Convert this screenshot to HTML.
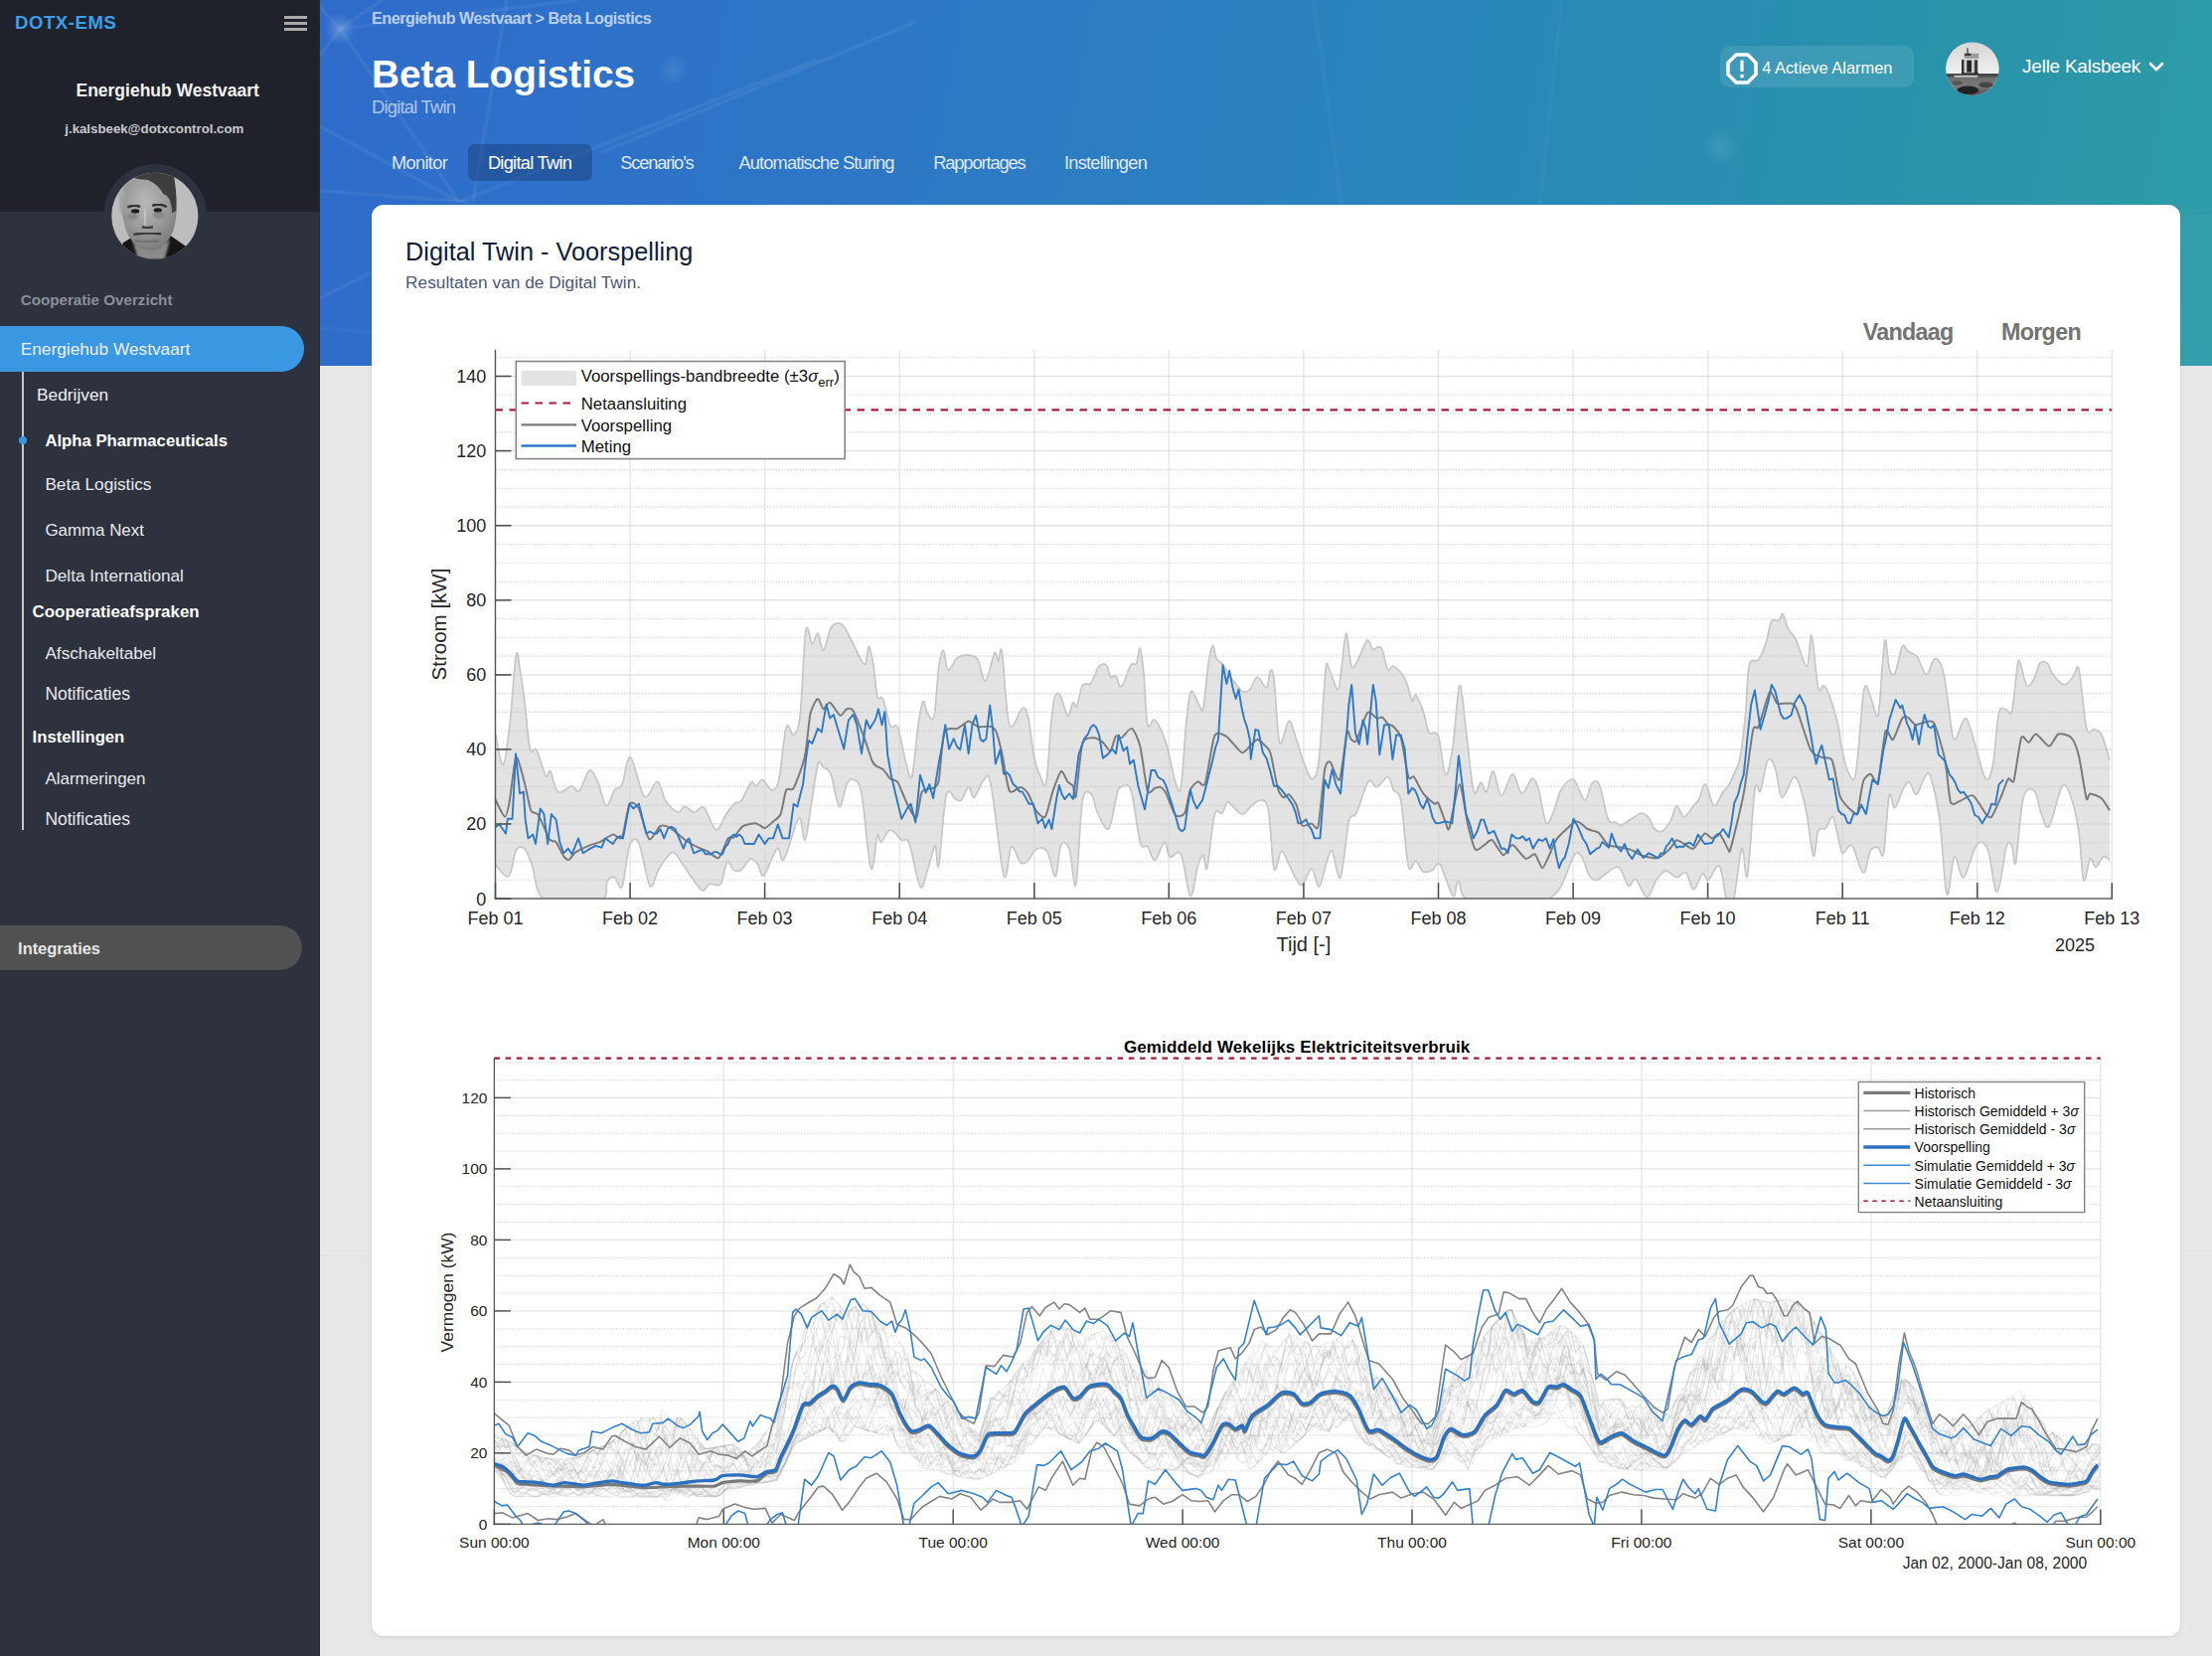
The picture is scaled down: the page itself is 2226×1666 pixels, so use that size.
<!DOCTYPE html>
<html><head><meta charset="utf-8">
<style>
*{margin:0;padding:0;box-sizing:border-box}
html,body{width:2226px;height:1666px;overflow:hidden;background:#e7e7e7;font-family:"Liberation Sans",sans-serif}
.abs{position:absolute;white-space:nowrap}
</style></head><body>
<div style="position:absolute;left:0;top:0;width:322px;height:1666px;background:#2e323f"></div><div style="position:absolute;left:0;top:0;width:322px;height:213px;background:#1f212b"></div><div style="position:absolute;left:321px;top:0;width:1px;height:1666px;background:#26262c"></div><div class="abs" style="left:15.0px;top:14.1px;font-size:18.5px;line-height:18.5px;font-weight:700;color:#3aa0ea;letter-spacing:0.6px">DOTX-EMS</div>
<div style="position:absolute;left:286px;top:16px;width:22.5px;height:3.2px;background:#a9a9a9"></div><div style="position:absolute;left:286px;top:21.8px;width:22.5px;height:3.2px;background:#a9a9a9"></div><div style="position:absolute;left:286px;top:27.5px;width:22.5px;height:3.2px;background:#a9a9a9"></div><div class="abs" style="left:-131.3px;width:600px;text-align:center;top:82.5px;font-size:17.5px;line-height:17.5px;font-weight:700;color:#f2f2f2;">Energiehub Westvaart</div>
<div class="abs" style="left:-144.7px;width:600px;text-align:center;top:122.5px;font-size:13.25px;line-height:13.25px;font-weight:700;color:#c9c9cb;">j.kalsbeek@dotxcontrol.com</div>
<div style="position:absolute;left:103.8px;top:165px;width:104.4px;height:104.4px;border-radius:50%;background:#2e323f"></div><svg style="position:absolute;left:110px;top:172px" width="92" height="92" viewBox="0 0 1656 1656">
<defs><clipPath id="avc"><circle cx="825" cy="815" r="785"/></clipPath>
<filter id="avb" x="-20%" y="-20%" width="140%" height="140%"><feGaussianBlur stdDeviation="22"/></filter>
<filter id="avb2" x="-20%" y="-20%" width="140%" height="140%"><feGaussianBlur stdDeviation="10"/></filter>
<radialGradient id="skin" cx="0.45" cy="0.35" r="0.65"><stop offset="0" stop-color="#b8b8b8"/><stop offset="0.55" stop-color="#9c9c9c"/><stop offset="1" stop-color="#7c7c7c"/></radialGradient></defs>
<g clip-path="url(#avc)">
<rect width="1656" height="1656" fill="#bdbdbd"/>
<path d="M250 1300 L380 1220 L1120 1180 L1380 1360 L1500 1656 L150 1656Z" fill="#141414" filter="url(#avb2)"/>
<path d="M420 1250 Q700 1500 1100 1250 L1000 1600 L520 1600Z" fill="#8a8a8a" filter="url(#avb)"/>
<path d="M200 520 Q230 150 650 90 Q1050 60 1190 300 Q1250 600 1200 900 Q1150 1250 900 1420 Q700 1480 520 1380 Q300 1200 260 900 Q200 700 200 520Z" fill="url(#skin)" filter="url(#avb2)"/>
<path d="M440 0 L1150 0 Q1230 350 1210 720 L1140 760 Q1120 450 980 420 Q900 250 700 160 Q540 150 420 120Z" fill="#3c3c3c" filter="url(#avb2)"/>
<path d="M200 0 L470 0 L440 120 Q300 200 230 380 L150 300Z" fill="#a8a8a8" filter="url(#avb)"/>
<path d="M170 460 Q200 330 290 360 Q260 600 240 820 Q180 700 170 460Z" fill="#a6a6a6" filter="url(#avb)"/>
<path d="M330 660 Q450 600 560 650" stroke="#333" stroke-width="45" fill="none" filter="url(#avb2)"/>
<path d="M780 630 Q900 580 1040 650" stroke="#333" stroke-width="45" fill="none" filter="url(#avb2)"/>
<ellipse cx="470" cy="730" rx="75" ry="40" fill="#1e1e1e" filter="url(#avb2)"/>
<ellipse cx="880" cy="710" rx="75" ry="40" fill="#1e1e1e" filter="url(#avb2)"/>
<ellipse cx="420" cy="820" rx="110" ry="60" fill="#777" opacity="0.6" filter="url(#avb)"/>
<ellipse cx="900" cy="800" rx="110" ry="60" fill="#777" opacity="0.6" filter="url(#avb)"/>
<path d="M660 700 L640 980" stroke="#c8c8c8" stroke-width="60" fill="none" filter="url(#avb)"/>
<path d="M590 1010 Q680 1050 790 1010" stroke="#3a3a3a" stroke-width="40" fill="none" filter="url(#avb2)"/>
<path d="M440 1150 Q700 1110 940 1140" stroke="#3a3a3a" stroke-width="45" fill="none" filter="url(#avb2)"/>
<path d="M460 1260 Q700 1320 900 1260" stroke="#6a6a6a" stroke-width="50" fill="none" filter="url(#avb)"/>
</g></svg><div class="abs" style="left:20.7px;top:294.1px;font-size:15.2px;line-height:15.2px;font-weight:700;color:#8b8f9a;">Cooperatie Overzicht</div>
<div style="position:absolute;left:0;top:328px;width:306px;height:46px;border-radius:0 23px 23px 0;background:#3a97e2"></div><div class="abs" style="left:20.7px;top:342.8px;font-size:17.3px;line-height:17.3px;font-weight:400;color:#eef0f3;">Energiehub Westvaart</div>
<div style="position:absolute;left:22.2px;top:374px;width:2px;height:461px;background:#c4c6cc"></div><div style="position:absolute;left:19px;top:439px;width:8px;height:8px;border-radius:50%;background:#3a97e2"></div><div class="abs" style="left:37.1px;top:388.8px;font-size:17.3px;line-height:17.3px;font-weight:400;color:#eef0f3;">Bedrijven</div>
<div class="abs" style="left:45.4px;top:435.5px;font-size:16.7px;line-height:16.7px;font-weight:700;color:#ffffff;">Alpha Pharmaceuticals</div>
<div class="abs" style="left:45.4px;top:479.2px;font-size:17.2px;line-height:17.2px;font-weight:400;color:#e8e9ec;">Beta Logistics</div>
<div class="abs" style="left:45.4px;top:526.3px;font-size:16.9px;line-height:16.9px;font-weight:400;color:#e8e9ec;">Gamma Next</div>
<div class="abs" style="left:45.4px;top:571.0px;font-size:17.2px;line-height:17.2px;font-weight:400;color:#e8e9ec;">Delta International</div>
<div class="abs" style="left:32.6px;top:608.2px;font-size:16.9px;line-height:16.9px;font-weight:700;color:#ffffff;">Cooperatieafspraken</div>
<div class="abs" style="left:45.4px;top:648.7px;font-size:17.2px;line-height:17.2px;font-weight:400;color:#e8e9ec;">Afschakeltabel</div>
<div class="abs" style="left:45.4px;top:690.3px;font-size:17.5px;line-height:17.5px;font-weight:400;color:#e8e9ec;">Notificaties</div>
<div class="abs" style="left:32.6px;top:734.3px;font-size:16.7px;line-height:16.7px;font-weight:700;color:#ffffff;">Instellingen</div>
<div class="abs" style="left:45.4px;top:775.0px;font-size:17.0px;line-height:17.0px;font-weight:400;color:#e8e9ec;">Alarmeringen</div>
<div class="abs" style="left:45.4px;top:816.2px;font-size:17.5px;line-height:17.5px;font-weight:400;color:#e8e9ec;">Notificaties</div>
<div style="position:absolute;left:0;top:931px;width:303.6px;height:45.3px;border-radius:0 23px 23px 0;background:#515151"></div><div class="abs" style="left:18.1px;top:945.7px;font-size:16.4px;line-height:16.4px;font-weight:700;color:#e6e6e6;">Integraties</div>
<div style="position:absolute;left:322px;top:0;width:1904px;height:368px;background:linear-gradient(100deg,#2f6bcb 0%,#2d77c6 30%,#2a86bb 58%,#2892aa 82%,#2e9ca8 100%);overflow:hidden"><svg width="1904" height="368" style="position:absolute;left:0;top:0">
<defs><filter id="hb" x="-10%" y="-10%" width="120%" height="120%"><feGaussianBlur stdDeviation="0.8"/></filter>
<radialGradient id="glow"><stop offset="0" stop-color="#fff" stop-opacity="0.22"/><stop offset="1" stop-color="#fff" stop-opacity="0"/></radialGradient>
<radialGradient id="glow2"><stop offset="0" stop-color="#fff" stop-opacity="0.10"/><stop offset="1" stop-color="#fff" stop-opacity="0"/></radialGradient></defs>
<g stroke="#ffffff" stroke-opacity="0.13" stroke-width="1.6" fill="none" filter="url(#hb)">
<path d="M20 29 L140 203"/><path d="M0 127 L140 203"/><path d="M0 192 L150 203"/><path d="M188 0 L154 203"/>
<path d="M20 29 L0 56"/><path d="M20 29 L63 0"/><path d="M20 29 L-10 -5"/><path d="M0 300 L60 270"/>
<path d="M140 203 L500 60"/><path d="M282 154 L600 22"/><path d="M20 29 L260 0"/>
</g>
<g stroke="#ffffff" stroke-opacity="0.06" stroke-width="2" fill="none" filter="url(#hb)">
<path d="M1050 368 L1000 0"/><path d="M1210 368 L1250 0"/><path d="M1290 368 Q1600 240 1904 210"/><path d="M450 368 L0 330"/>
</g>
<path d="M1100 368 Q1500 230 1904 215 L1904 368 Z" fill="#ffffff" fill-opacity="0.035"/>
<circle cx="20" cy="29" r="16" fill="url(#glow)"/>
<circle cx="355" cy="70" r="16" fill="url(#glow2)"/>
<circle cx="1410" cy="148" r="20" fill="url(#glow2)"/>
</svg></div><div style="position:absolute;left:322px;top:1263px;width:1904px;height:1px;background:#dddddd"></div><div class="abs" style="left:374.0px;top:10.3px;font-size:16.2px;line-height:16.2px;font-weight:700;color:rgba(255,255,255,0.68);letter-spacing:-0.5px">Energiehub Westvaart &gt; Beta Logistics</div>
<div class="abs" style="left:374.0px;top:55.9px;font-size:38.8px;line-height:38.8px;font-weight:700;color:#ffffff;">Beta Logistics</div>
<div class="abs" style="left:374.0px;top:98.7px;font-size:18.5px;line-height:18.5px;font-weight:400;color:rgba(255,255,255,0.62);letter-spacing:-0.84px">Digital Twin</div>
<div style="position:absolute;left:470.5px;top:145.2px;width:125.3px;height:37.1px;border-radius:7px;background:rgba(20,50,100,0.38)"></div><div class="abs" style="left:394.0px;top:155.3px;font-size:18.3px;line-height:18.3px;font-weight:400;color:rgba(255,255,255,0.85);letter-spacing:-0.70px">Monitor</div>
<div class="abs" style="left:490.9px;top:155.3px;font-size:18.3px;line-height:18.3px;font-weight:400;color:#ffffff;letter-spacing:-0.74px">Digital Twin</div>
<div class="abs" style="left:624.3px;top:155.3px;font-size:18.3px;line-height:18.3px;font-weight:400;color:rgba(255,255,255,0.85);letter-spacing:-1.18px">Scenario’s</div>
<div class="abs" style="left:743.5px;top:155.3px;font-size:18.3px;line-height:18.3px;font-weight:400;color:rgba(255,255,255,0.85);letter-spacing:-0.88px">Automatische Sturing</div>
<div class="abs" style="left:939.2px;top:155.3px;font-size:18.3px;line-height:18.3px;font-weight:400;color:rgba(255,255,255,0.85);letter-spacing:-1.12px">Rapportages</div>
<div class="abs" style="left:1071.0px;top:155.3px;font-size:18.3px;line-height:18.3px;font-weight:400;color:rgba(255,255,255,0.85);letter-spacing:-0.79px">Instellingen</div>
<div style="position:absolute;left:1730.9px;top:45.9px;width:195.3px;height:41.8px;border-radius:10px;background:rgba(255,255,255,0.10)"></div><svg style="position:absolute;left:1736px;top:51.5px" width="34" height="34" viewBox="0 0 34 34">
<polygon points="11.2,3 22.8,3 31,11.2 31,22.8 22.8,31 11.2,31 3,22.8 3,11.2" fill="none" stroke="#fff" stroke-width="3.6" stroke-linejoin="round"/>
<rect x="15.4" y="8.5" width="3.2" height="11.5" rx="1" fill="#fff"/><circle cx="17" cy="24.6" r="2" fill="#fff"/></svg><div class="abs" style="left:1773.2px;top:59.5px;font-size:16.4px;line-height:16.4px;font-weight:400;color:#ffffff;">4 Actieve Alarmen</div>
<svg style="position:absolute;left:1955px;top:40px" width="60" height="60" viewBox="0 0 1656 1656">
<defs><clipPath id="uac"><circle cx="825" cy="808" r="740"/></clipPath>
<linearGradient id="sky" x1="0" y1="0" x2="0" y2="1"><stop offset="0" stop-color="#d4d4d4"/><stop offset="0.55" stop-color="#efefef"/><stop offset="0.6" stop-color="#f4f4f4"/></linearGradient>
<linearGradient id="grass" x1="0" y1="0" x2="0" y2="1"><stop offset="0" stop-color="#6a6a6a"/><stop offset="0.5" stop-color="#7a7a7a"/><stop offset="1" stop-color="#3a3a3a"/></linearGradient>
<filter id="ub"><feGaussianBlur stdDeviation="14"/></filter></defs>
<g clip-path="url(#uac)">
<rect width="1656" height="1656" fill="url(#sky)"/>
<rect x="0" y="940" width="1656" height="716" fill="url(#grass)"/>
<g filter="url(#ub)">
<rect x="100" y="940" width="1500" height="90" fill="#4a4a4a"/>
<rect x="320" y="990" width="650" height="50" fill="#c8c8c8"/>
<rect x="520" y="550" width="460" height="400" fill="#cfcfcf"/>
<rect x="525" y="550" width="65" height="400" fill="#2e2e2e"/>
<rect x="670" y="570" width="130" height="330" fill="#262626"/>
<rect x="880" y="560" width="90" height="390" fill="#3a3a3a"/>
<rect x="600" y="380" width="400" height="140" fill="#9a9a9a"/>
<rect x="610" y="380" width="170" height="60" fill="#333"/>
<rect x="520" y="920" width="470" height="40" fill="#222"/>
<rect x="670" y="230" width="40" height="150" fill="#555"/>
<ellipse cx="700" cy="1400" rx="300" ry="120" fill="#222"/>
<ellipse cx="1200" cy="1250" rx="200" ry="80" fill="#444"/>
<ellipse cx="400" cy="1200" rx="150" ry="60" fill="#555"/>
</g>
</g></svg><div class="abs" style="left:2035.1px;top:57.3px;font-size:19px;line-height:19px;font-weight:400;color:#ffffff;letter-spacing:-0.25px">Jelle Kalsbeek</div>
<svg style="position:absolute;left:2161px;top:60px" width="18" height="14" viewBox="0 0 18 14"><path d="M3 4 L9 10 L15 4" stroke="#fff" stroke-width="2.6" fill="none" stroke-linecap="round" stroke-linejoin="round"/></svg><div style="position:absolute;left:374px;top:206px;width:1819.5px;height:1440px;background:#fff;border-radius:12px;box-shadow:0 1px 3px rgba(0,0,0,0.10)"></div><div class="abs" style="left:408.1px;top:240.9px;font-size:25.3px;line-height:25.3px;font-weight:400;color:#0e1a3c;">Digital Twin - Voorspelling</div>
<div class="abs" style="left:408.1px;top:275.7px;font-size:17.3px;line-height:17.3px;font-weight:400;color:#4b5878;">Resultaten van de Digital Twin.</div>
<div class="abs" style="left:1874.7px;top:322.5px;font-size:23.3px;line-height:23.3px;font-weight:700;color:#737373;letter-spacing:-0.7px">Vandaag</div>
<div class="abs" style="left:2014.0px;top:322.5px;font-size:23.3px;line-height:23.3px;font-weight:700;color:#737373;letter-spacing:-0.7px">Morgen</div>
<svg style="position:absolute;left:0;top:0" width="2226" height="1666" viewBox="0 0 2226 1666"><defs><clipPath id="c1clip"><rect x="498.5" y="351.8" width="1626.8400000000001" height="552.3"/></clipPath></defs><path d="M498.5,738.5C499.8,743.7 503.9,770.7 506.2,769.4C508.6,768.2 510.6,749.3 512.8,731.0C515.0,712.8 517.6,669.6 519.3,659.9C521.1,650.2 521.7,665.5 523.1,673.0C524.5,680.5 526.0,691.4 527.8,704.8C529.5,718.2 531.3,745.2 533.4,753.5C535.4,761.8 537.3,749.9 539.9,754.4C542.6,759.0 546.9,777.1 549.3,780.6C551.6,784.2 551.9,773.3 554.0,776.0C556.0,778.6 557.9,794.1 561.5,796.6C565.0,799.1 571.9,791.1 575.5,790.9C579.1,790.8 580.0,798.3 583.0,795.6C585.9,793.0 590.2,776.4 593.3,775.0C596.4,773.6 598.9,781.3 601.7,787.2C604.5,793.1 607.3,809.3 610.1,810.6C612.9,811.8 615.9,798.3 618.5,794.7C621.2,791.1 623.4,794.5 626.0,789.1C628.7,783.6 630.7,759.9 634.5,761.9C638.2,764.0 644.0,797.2 648.5,801.2C653.0,805.3 658.0,785.5 661.6,786.3C665.2,787.0 666.6,800.8 670.0,805.9C673.5,811.1 679.1,816.2 682.2,817.1C685.3,818.1 685.9,811.5 688.7,811.5C691.6,811.5 695.8,817.0 699.0,817.1C702.3,817.3 704.8,809.5 708.4,812.5C712.0,815.4 716.8,833.8 720.6,834.9C724.3,836.0 727.6,823.5 730.9,819.0C734.1,814.5 737.7,810.0 740.2,807.8C742.7,805.6 743.2,809.3 745.8,805.9C748.5,802.5 753.6,789.7 756.1,787.2C758.6,784.7 758.9,791.4 760.8,790.9C762.7,790.5 764.8,783.8 767.4,784.4C769.9,785.0 773.5,794.5 776.2,794.7C779.0,794.8 781.2,795.8 783.7,785.3C786.2,774.9 788.7,739.6 791.2,732.0C793.7,724.3 796.4,741.5 798.7,739.5C801.0,737.4 803.2,737.3 805.2,719.8C807.3,702.3 808.8,646.6 810.9,634.6C812.9,622.6 815.4,647.3 817.4,647.7C819.4,648.2 821.2,636.3 823.0,637.4C824.9,638.5 826.5,655.2 828.6,654.3C830.8,653.4 833.6,636.3 836.1,631.8C838.6,627.3 841.4,627.5 843.6,627.1C845.8,626.8 847.1,627.1 849.2,630.0C851.4,632.8 853.3,637.6 856.7,644.0C860.2,650.4 866.9,667.2 869.8,668.3C872.8,669.4 872.9,650.1 874.5,650.5C876.1,651.0 877.8,662.7 879.2,671.1C880.6,679.6 881.4,695.8 882.9,701.1C884.5,706.4 886.4,698.1 888.5,703.0C890.7,707.8 893.5,725.3 896.0,730.1C898.5,734.9 901.0,726.2 903.5,732.0C906.0,737.7 908.7,756.5 911.0,764.7C913.4,773.0 915.4,787.5 917.6,781.6C919.7,775.7 922.2,741.8 924.1,729.2C926.0,716.5 927.2,707.6 928.8,705.8C930.4,703.9 931.6,715.4 933.5,717.9C935.3,720.4 938.2,728.5 940.0,720.7C941.9,712.9 943.1,682.2 944.7,671.1C946.3,660.1 947.8,653.8 949.4,654.3C950.9,654.8 951.7,672.7 954.1,673.9C956.4,675.2 960.0,664.3 963.4,661.8C966.9,659.3 971.2,658.7 974.7,659.0C978.1,659.3 981.2,659.3 984.0,663.6C986.8,668.0 988.7,686.3 991.5,685.2C994.3,684.1 998.7,660.4 1000.9,657.1C1003.1,653.8 1003.4,665.7 1004.6,665.5C1005.9,665.4 1006.5,645.6 1008.4,656.2C1010.2,666.8 1012.4,719.8 1015.8,729.2C1019.3,738.5 1025.8,713.6 1028.9,712.3C1032.1,711.1 1032.6,713.6 1034.6,721.7C1036.5,729.8 1038.7,751.3 1040.6,761.0C1042.6,770.7 1044.2,775.3 1046.2,779.7C1048.3,784.1 1050.9,795.3 1052.8,787.2C1054.7,779.1 1056.1,745.2 1057.5,731.0C1058.9,716.8 1059.6,707.3 1061.2,702.0C1062.8,696.7 1064.6,696.2 1066.8,699.2C1069.0,702.2 1072.1,718.6 1074.3,719.8C1076.5,721.1 1078.4,708.3 1079.9,706.7C1081.5,705.1 1082.1,713.3 1083.7,710.4C1085.2,707.6 1087.1,693.6 1089.3,689.9C1091.5,686.1 1094.9,689.2 1096.8,688.0C1098.6,686.7 1099.0,685.3 1100.5,682.4C1102.1,679.4 1104.0,672.4 1106.1,670.2C1108.3,668.0 1111.8,667.5 1113.6,669.3C1115.5,671.0 1115.8,678.6 1117.4,680.5C1118.9,682.4 1121.1,678.8 1123.0,680.5C1124.9,682.2 1126.1,692.7 1128.6,690.8C1131.1,688.9 1135.5,673.2 1138.0,669.3C1140.5,665.4 1142.0,670.2 1143.6,667.4C1145.1,664.6 1146.1,650.5 1147.3,652.4C1148.6,654.3 1149.8,665.8 1151.1,678.6C1152.3,691.4 1152.9,721.5 1154.8,729.2C1156.7,736.8 1159.2,721.4 1162.3,724.5C1165.4,727.6 1170.1,737.4 1173.5,747.9C1177.0,758.3 1180.4,780.0 1182.9,787.2C1185.4,794.4 1186.6,801.5 1188.5,790.9C1190.4,780.3 1192.4,739.5 1194.1,723.5C1195.8,707.6 1196.6,697.7 1198.8,695.5C1201.0,693.3 1205.2,707.6 1207.2,710.4C1209.2,713.3 1209.6,718.9 1211.0,712.3C1212.4,705.8 1214.1,681.6 1215.6,671.1C1217.2,660.7 1218.9,651.0 1220.3,649.6C1221.7,648.2 1222.5,659.7 1224.1,662.7C1225.6,665.7 1226.9,663.8 1229.7,667.4C1232.5,671.0 1237.5,679.6 1240.9,684.2C1244.3,688.9 1247.5,693.9 1250.3,695.5C1253.1,697.0 1255.3,695.9 1257.8,693.6C1260.3,691.3 1262.4,681.7 1265.3,681.4C1268.1,681.1 1272.4,692.8 1274.6,691.7C1276.8,690.6 1277.1,676.1 1278.4,674.9C1279.6,673.6 1280.5,672.2 1282.1,684.2C1283.7,696.2 1285.2,740.1 1287.7,746.9C1290.2,753.8 1294.3,725.9 1297.1,725.4C1299.9,725.0 1302.0,737.0 1304.6,744.1C1307.1,751.3 1309.8,761.9 1312.5,768.5C1315.2,775.0 1318.4,784.4 1320.9,783.5C1323.4,782.5 1325.3,781.0 1327.5,762.9C1329.6,744.8 1332.3,689.7 1334.0,674.9C1335.7,660.1 1335.7,670.8 1337.8,673.9C1339.8,677.1 1344.2,693.8 1346.2,693.6C1348.2,693.4 1348.5,682.4 1349.9,673.0C1351.3,663.6 1353.0,638.4 1354.6,637.4C1356.2,636.5 1357.9,661.9 1359.3,667.4C1360.7,672.9 1361.2,672.2 1363.0,670.2C1364.9,668.2 1368.3,659.6 1370.5,655.2C1372.7,650.9 1374.3,644.3 1376.1,644.0C1378.0,643.7 1379.9,652.3 1381.8,653.4C1383.6,654.4 1385.8,650.4 1387.4,650.5C1388.9,650.7 1389.6,650.4 1391.1,654.3C1392.7,658.2 1394.9,671.3 1396.7,673.9C1398.6,676.6 1399.5,668.8 1402.3,670.2C1405.1,671.6 1410.5,676.6 1413.6,682.4C1416.7,688.1 1419.2,702.0 1421.1,704.8C1422.9,707.6 1422.9,697.3 1424.8,699.2C1426.7,701.1 1430.1,709.8 1432.3,716.1C1434.5,722.3 1435.4,732.6 1437.9,736.7C1440.4,740.7 1444.5,733.2 1447.3,740.4C1450.1,747.6 1452.3,778.1 1454.8,779.7C1457.3,781.3 1459.9,764.7 1462.2,749.8C1464.6,734.8 1466.6,692.3 1468.8,689.9C1471.0,687.4 1473.0,717.2 1475.3,734.8C1477.7,752.4 1480.3,786.9 1482.8,795.6C1485.3,804.4 1488.1,787.0 1490.3,787.2C1492.5,787.4 1493.9,798.4 1495.9,796.6C1498.0,794.7 1500.0,775.3 1502.5,776.0C1505.0,776.6 1507.6,799.8 1510.9,800.3C1514.2,800.8 1518.7,779.1 1522.1,778.8C1525.6,778.5 1528.2,797.6 1531.5,798.4C1534.8,799.2 1539.0,784.1 1541.8,783.5C1544.6,782.8 1546.0,787.4 1548.4,794.7C1550.7,802.0 1553.3,823.7 1555.8,827.4C1558.3,831.2 1560.8,822.6 1563.3,817.1C1565.8,811.7 1567.5,800.1 1570.8,794.7C1574.2,789.2 1579.5,782.7 1583.4,784.4C1587.4,786.1 1591.5,804.4 1594.7,805.0C1597.8,805.6 1599.6,790.6 1602.1,788.1C1604.6,785.6 1607.0,784.1 1609.6,790.0C1612.3,795.9 1615.4,817.5 1618.1,823.7C1620.7,829.9 1623.4,826.4 1625.5,827.4C1627.7,828.5 1628.7,830.7 1631.2,830.3C1633.7,829.8 1637.1,826.7 1640.5,824.6C1644.0,822.6 1648.6,818.4 1651.8,818.1C1654.9,817.8 1657.1,820.1 1659.2,822.8C1661.4,825.4 1662.5,831.8 1664.9,834.0C1667.2,836.2 1670.5,837.4 1673.3,835.9C1676.1,834.3 1679.4,828.8 1681.7,824.6C1684.0,820.4 1685.1,811.1 1687.3,810.6C1689.5,810.1 1692.0,821.8 1694.8,821.8C1697.6,821.8 1701.7,813.6 1704.2,810.6C1706.7,807.6 1707.8,807.6 1709.8,804.0C1711.8,800.5 1713.8,788.0 1716.3,789.1C1718.8,790.2 1721.8,809.3 1724.8,810.6C1727.7,811.8 1731.6,800.0 1734.1,796.6C1736.6,793.1 1737.9,793.1 1739.7,790.0C1741.6,786.9 1743.5,782.4 1745.3,777.8C1747.2,773.3 1749.1,772.8 1751.0,762.9C1752.8,752.9 1755.0,733.5 1756.6,717.9C1758.1,702.3 1758.1,678.3 1760.3,669.3C1762.5,660.2 1766.9,667.4 1769.7,663.6C1772.5,659.9 1775.0,653.2 1777.2,646.8C1779.4,640.4 1780.6,629.0 1782.8,625.3C1785.0,621.5 1788.4,625.6 1790.3,624.3C1792.1,623.1 1792.5,616.4 1794.0,617.8C1795.6,619.2 1797.5,628.5 1799.6,632.8C1801.8,637.0 1804.0,636.8 1807.1,643.1C1810.2,649.3 1815.7,670.8 1818.4,670.2C1821.0,669.6 1821.2,635.7 1823.0,639.3C1824.9,642.9 1827.6,683.3 1829.6,691.7C1831.6,700.1 1833.3,688.6 1835.2,689.9C1837.1,691.1 1838.3,692.3 1840.8,699.2C1843.3,706.1 1848.1,722.9 1850.1,731.0C1852.0,739.1 1851.1,741.0 1852.5,747.9C1853.8,754.7 1855.9,766.1 1858.1,772.2C1860.3,778.3 1863.7,785.9 1865.6,784.4C1867.5,782.8 1867.6,778.0 1869.3,762.9C1871.1,747.7 1873.7,703.9 1875.9,693.6C1878.1,683.3 1880.1,696.7 1882.4,701.1C1884.8,705.5 1887.9,725.7 1889.9,719.8C1892.0,713.9 1893.4,678.2 1894.6,665.5C1895.9,652.9 1896.3,642.9 1897.4,644.0C1898.5,645.1 1899.6,666.5 1901.2,672.1C1902.7,677.7 1904.6,681.3 1906.8,677.7C1909.0,674.1 1912.1,654.3 1914.3,650.5C1916.4,646.8 1917.4,653.5 1919.9,655.2C1922.4,656.9 1926.1,656.9 1929.2,660.8C1932.4,664.7 1935.6,678.3 1938.6,678.6C1941.6,678.9 1944.2,663.3 1947.0,662.7C1949.8,662.1 1953.1,666.6 1955.4,674.9C1957.8,683.1 1959.2,700.8 1961.1,712.3C1962.9,723.9 1963.9,742.4 1966.7,744.1C1969.5,745.9 1974.5,722.0 1977.9,722.6C1981.3,723.2 1984.5,739.1 1987.3,747.9C1990.1,756.6 1992.6,768.9 1994.8,775.0C1996.9,781.1 1998.5,785.8 2000.4,784.4C2002.2,783.0 2004.1,777.8 2006.0,766.6C2007.9,755.4 2009.4,725.7 2011.6,717.0C2013.8,708.3 2016.9,714.5 2019.1,714.2C2021.3,713.9 2022.8,722.6 2024.7,715.1C2026.6,707.6 2028.9,677.2 2030.3,669.3C2031.7,661.3 2031.6,664.0 2033.1,667.4C2034.7,670.8 2037.3,687.4 2039.7,689.9C2042.0,692.3 2045.0,686.1 2047.2,682.4C2049.4,678.6 2050.6,669.9 2052.8,667.4C2055.0,664.9 2058.1,665.5 2060.3,667.4C2062.5,669.3 2063.1,675.0 2065.9,678.6C2068.7,682.2 2073.7,688.6 2077.1,688.9C2080.6,689.2 2084.0,683.0 2086.5,680.5C2089.0,678.0 2089.9,665.4 2092.1,673.9C2094.3,682.5 2097.1,722.0 2099.6,732.0C2102.1,742.0 2104.6,732.8 2107.1,733.8C2109.6,734.9 2111.9,733.4 2114.6,738.5C2117.2,743.7 2121.6,760.4 2123.0,764.7 L2123.0,864.9C2121.9,864.4 2118.8,860.8 2116.4,862.1C2114.1,863.3 2111.1,872.1 2108.9,872.4C2106.8,872.7 2105.4,861.8 2103.3,863.9C2101.3,866.1 2098.7,889.8 2096.8,885.5C2094.9,881.1 2094.1,851.5 2092.1,837.7C2090.1,824.0 2087.4,810.9 2084.6,803.1C2081.8,795.3 2079.0,786.3 2075.3,790.9C2071.5,795.6 2065.6,826.4 2062.1,831.2C2058.7,836.0 2057.2,825.9 2054.7,820.0C2052.2,814.0 2050.3,798.4 2047.2,795.6C2044.1,792.8 2039.1,791.1 2035.9,803.1C2032.8,815.1 2030.3,859.7 2028.5,867.7C2026.6,875.6 2026.3,853.5 2024.7,850.8C2023.1,848.2 2021.6,844.0 2019.1,851.8C2016.6,859.6 2012.9,897.2 2009.7,897.6C2006.6,898.1 2003.8,862.5 2000.4,854.6C1996.9,846.6 1993.2,845.2 1989.1,849.9C1985.1,854.6 1979.8,880.6 1976.0,882.7C1972.3,884.7 1969.5,859.3 1966.7,862.1C1963.9,864.9 1961.7,906.1 1959.2,899.5C1956.7,893.0 1954.5,842.6 1951.7,822.8C1948.9,803.0 1944.8,787.4 1942.3,780.6C1939.8,773.9 1939.1,779.4 1936.7,782.5C1934.4,785.6 1930.8,798.6 1928.3,799.4C1925.8,800.1 1923.8,788.4 1921.8,787.2C1919.7,785.9 1918.6,787.7 1916.1,791.9C1913.6,796.1 1909.3,811.1 1906.8,812.5C1904.3,813.9 1903.0,792.7 1901.2,800.3C1899.3,807.9 1897.4,849.6 1895.5,858.3C1893.7,867.1 1892.1,853.2 1889.9,852.7C1887.7,852.2 1884.9,851.3 1882.4,855.5C1879.9,859.7 1878.1,878.8 1875.0,878.0C1871.8,877.2 1867.2,854.1 1863.7,850.8C1860.3,847.6 1856.6,859.6 1854.4,858.3C1852.1,857.1 1851.7,849.4 1850.1,843.4C1848.4,837.3 1846.7,823.5 1844.6,821.8C1842.4,820.1 1839.6,830.7 1837.1,833.1C1834.6,835.4 1831.6,831.2 1829.6,835.9C1827.6,840.5 1826.8,863.8 1824.9,861.1C1823.0,858.5 1820.4,830.9 1818.4,820.0C1816.3,809.0 1814.9,802.0 1812.7,795.6C1810.6,789.2 1808.5,780.5 1805.3,781.6C1802.0,782.7 1796.2,803.6 1793.1,802.2C1790.0,800.8 1788.9,779.4 1786.5,773.2C1784.2,766.9 1781.5,761.0 1779.0,764.7C1776.5,768.5 1773.7,790.6 1771.6,795.6C1769.4,800.6 1768.1,780.5 1765.9,794.7C1763.8,808.9 1760.6,871.0 1758.5,880.8C1756.3,890.6 1755.2,849.3 1752.8,853.7C1750.5,858.0 1746.9,897.8 1744.4,906.6C1741.9,915.4 1740.2,912.5 1737.9,906.6C1735.5,900.7 1733.5,875.0 1730.4,871.4C1727.3,867.9 1721.9,884.2 1719.1,885.5C1716.3,886.7 1716.0,877.4 1713.5,878.9C1711.0,880.5 1707.0,895.0 1704.2,894.8C1701.4,894.7 1699.5,880.0 1696.7,878.0C1693.9,876.0 1690.7,883.0 1687.3,882.7C1683.9,882.4 1679.5,875.6 1676.1,876.1C1672.7,876.6 1669.8,881.1 1666.7,885.5C1663.6,889.8 1660.8,902.5 1657.4,902.3C1653.9,902.2 1649.3,886.4 1646.1,884.5C1643.0,882.7 1641.5,893.1 1638.6,891.1C1635.8,889.1 1633.0,874.4 1629.3,872.4C1625.5,870.3 1619.9,876.7 1616.2,878.9C1612.4,881.1 1609.6,885.2 1606.8,885.5C1604.0,885.8 1601.8,884.7 1599.3,880.8C1596.8,876.9 1594.3,865.5 1591.8,862.1C1589.4,858.6 1587.9,855.2 1584.4,860.2C1580.9,865.2 1574.6,885.0 1570.8,892.0C1567.0,899.0 1564.0,899.9 1561.5,902.3C1559.0,904.8 1569.3,905.9 1555.8,906.6C1542.4,907.3 1495.6,910.0 1481.0,906.6C1466.3,903.2 1471.0,887.3 1467.9,886.4C1464.7,885.5 1465.4,904.2 1462.2,901.4C1459.1,898.6 1452.6,873.9 1449.1,869.6C1445.7,865.2 1444.5,873.9 1441.7,875.2C1438.8,876.4 1435.1,878.6 1432.3,877.0C1429.5,875.5 1427.3,866.8 1424.8,865.8C1422.3,864.9 1419.8,881.4 1417.3,871.4C1414.8,861.5 1412.3,818.7 1409.8,805.9C1407.3,793.1 1404.5,798.7 1402.3,794.7C1400.2,790.6 1399.5,782.0 1396.7,781.6C1393.9,781.1 1388.8,791.1 1385.5,791.9C1382.2,792.7 1380.5,781.9 1377.1,786.3C1373.6,790.6 1368.2,811.4 1364.9,818.1C1361.6,824.8 1360.1,815.7 1357.4,826.5C1354.8,837.3 1351.8,877.7 1349.0,882.7C1346.2,887.7 1342.9,859.0 1340.6,856.5C1338.2,854.0 1337.1,861.8 1335.0,867.7C1332.8,873.6 1330.0,890.9 1327.5,892.0C1325.0,893.1 1322.8,874.6 1320.0,874.2C1317.2,873.9 1313.2,888.4 1310.6,890.2C1308.0,891.9 1306.8,888.0 1304.6,884.5C1302.3,881.1 1299.6,874.2 1297.1,869.6C1294.6,864.9 1292.1,855.7 1289.6,856.5C1287.1,857.2 1284.3,881.1 1282.1,874.2C1279.9,867.4 1278.7,826.8 1276.5,815.3C1274.3,803.7 1271.8,805.8 1269.0,805.0C1266.2,804.2 1262.8,808.3 1259.6,810.6C1256.5,812.9 1253.4,818.9 1250.3,819.0C1247.2,819.2 1243.4,813.6 1240.9,811.5C1238.4,809.5 1237.2,805.8 1235.3,806.9C1233.4,807.9 1231.9,815.9 1229.7,818.1C1227.5,820.3 1224.7,810.8 1222.2,820.0C1219.7,829.2 1216.6,866.6 1214.7,873.3C1212.8,880.0 1212.5,860.5 1211.0,860.2C1209.4,859.9 1207.5,864.6 1205.3,871.4C1203.2,878.3 1200.7,903.4 1197.9,901.4C1195.1,899.4 1191.9,865.8 1188.5,859.3C1185.1,852.7 1180.1,864.1 1177.3,862.1C1174.5,860.0 1174.1,846.5 1171.7,847.1C1169.2,847.7 1165.1,865.0 1162.3,865.8C1159.5,866.6 1157.3,854.9 1154.8,851.8C1152.3,848.7 1150.1,856.6 1147.3,847.1C1144.5,837.6 1141.4,803.7 1138.0,794.7C1134.5,785.6 1129.2,791.3 1126.7,792.8C1124.2,794.4 1124.9,797.2 1123.0,804.0C1121.1,810.9 1118.6,831.8 1115.5,834.0C1112.4,836.2 1107.1,822.9 1104.3,817.1C1101.5,811.4 1101.1,801.2 1098.6,799.4C1096.2,797.5 1091.9,790.8 1089.3,805.9C1086.6,821.0 1084.9,882.0 1082.7,890.2C1080.6,898.3 1078.7,861.3 1076.2,854.6C1073.7,847.9 1070.1,845.4 1067.8,849.9C1065.4,854.4 1064.5,880.6 1062.1,881.7C1059.8,882.8 1057.0,861.0 1053.7,856.5C1050.4,851.9 1045.7,853.0 1042.5,854.6C1039.3,856.1 1037.1,863.6 1034.6,865.8C1032.0,868.0 1029.9,870.0 1027.1,867.7C1024.3,865.4 1020.5,849.6 1017.7,851.8C1014.9,854.0 1013.7,891.2 1010.2,880.8C1006.8,870.3 1000.6,805.0 997.1,789.1C993.7,773.2 992.4,783.1 989.6,785.3C986.8,787.5 982.8,801.1 980.3,802.2C977.8,803.3 976.8,791.4 974.7,791.9C972.5,792.3 969.4,803.0 967.2,805.0C965.0,807.0 964.1,804.8 961.6,804.0C959.1,803.3 955.0,789.2 952.2,800.3C949.4,811.4 946.6,862.1 944.7,870.5C942.8,878.9 942.8,850.1 941.0,850.8C939.1,851.6 936.0,868.3 933.5,875.2C931.0,882.0 929.1,896.5 926.0,892.0C922.9,887.5 917.9,855.8 914.8,848.0C911.6,840.2 910.4,847.4 907.3,845.2C904.1,843.0 899.5,834.6 896.0,834.9C892.6,835.2 888.9,846.2 886.7,847.1C884.5,848.0 884.6,836.2 882.9,840.5C881.2,844.9 879.0,880.3 876.4,873.3C873.7,866.3 870.0,813.2 867.0,798.4C864.1,783.6 861.1,785.9 858.6,784.4C856.1,782.8 854.4,784.5 852.0,789.1C849.7,793.6 847.2,813.2 844.6,811.5C841.9,809.8 838.8,785.3 836.1,778.8C833.5,772.2 830.8,773.8 828.6,772.2C826.5,770.7 825.2,762.2 823.0,769.4C820.8,776.6 817.7,802.6 815.5,815.3C813.4,827.9 811.8,844.0 809.9,845.2C808.1,846.5 807.1,821.4 804.3,822.8C801.5,824.2 795.9,846.5 793.1,853.7C790.3,860.8 789.3,865.8 787.5,865.8C785.6,865.8 785.0,851.2 781.8,853.7C778.7,856.1 771.9,878.1 768.7,880.8C765.6,883.4 764.9,872.4 762.7,869.6C760.4,866.8 758.0,863.0 755.2,863.9C752.4,864.9 748.7,873.3 745.8,875.2C743.0,877.0 740.7,876.6 738.4,875.2C736.0,873.8 734.0,864.4 731.8,866.8C729.6,869.1 728.2,885.5 725.3,889.2C722.3,893.0 717.1,888.1 714.0,889.2C710.9,890.3 710.0,897.5 706.5,895.8C703.1,894.1 696.9,883.6 693.4,878.9C690.0,874.2 688.7,871.3 685.9,867.7C683.1,864.1 680.3,856.5 676.6,857.4C672.8,858.3 667.2,867.7 663.5,873.3C659.7,878.9 657.5,895.3 654.1,891.1C650.7,886.9 646.3,854.7 642.9,848.0C639.5,841.3 636.3,843.5 633.5,850.8C630.7,858.2 628.5,886.7 626.0,892.0C623.5,897.3 621.0,883.6 618.5,882.7C616.1,881.7 613.6,882.4 611.1,886.4C608.6,890.4 613.9,903.2 603.6,906.6C593.3,910.0 560.7,912.8 549.3,906.6C537.9,900.4 538.8,878.4 535.2,869.6C531.7,860.7 530.4,856.0 527.8,853.7C525.1,851.3 522.0,850.8 519.3,855.5C516.7,860.2 515.3,879.4 511.8,881.7C508.4,884.1 500.7,871.6 498.5,869.6 Z" fill="#e3e3e3" stroke="none" clip-path="url(#c1clip)"/><line x1="498.5" y1="885.3" x2="2125.3" y2="885.3" stroke="#bcbcbc" stroke-opacity="0.6" stroke-width="1.1" stroke-dasharray="1.5 1.5"/><line x1="498.5" y1="866.6" x2="2125.3" y2="866.6" stroke="#bcbcbc" stroke-opacity="0.6" stroke-width="1.1" stroke-dasharray="1.5 1.5"/><line x1="498.5" y1="847.8" x2="2125.3" y2="847.8" stroke="#bcbcbc" stroke-opacity="0.6" stroke-width="1.1" stroke-dasharray="1.5 1.5"/><line x1="498.5" y1="829.0" x2="2125.3" y2="829.0" stroke="#d2d2d2" stroke-opacity="0.6" stroke-width="1.5"/><line x1="498.5" y1="810.2" x2="2125.3" y2="810.2" stroke="#bcbcbc" stroke-opacity="0.6" stroke-width="1.1" stroke-dasharray="1.5 1.5"/><line x1="498.5" y1="791.5" x2="2125.3" y2="791.5" stroke="#bcbcbc" stroke-opacity="0.6" stroke-width="1.1" stroke-dasharray="1.5 1.5"/><line x1="498.5" y1="772.7" x2="2125.3" y2="772.7" stroke="#bcbcbc" stroke-opacity="0.6" stroke-width="1.1" stroke-dasharray="1.5 1.5"/><line x1="498.5" y1="753.9" x2="2125.3" y2="753.9" stroke="#d2d2d2" stroke-opacity="0.6" stroke-width="1.5"/><line x1="498.5" y1="735.2" x2="2125.3" y2="735.2" stroke="#bcbcbc" stroke-opacity="0.6" stroke-width="1.1" stroke-dasharray="1.5 1.5"/><line x1="498.5" y1="716.4" x2="2125.3" y2="716.4" stroke="#bcbcbc" stroke-opacity="0.6" stroke-width="1.1" stroke-dasharray="1.5 1.5"/><line x1="498.5" y1="697.6" x2="2125.3" y2="697.6" stroke="#bcbcbc" stroke-opacity="0.6" stroke-width="1.1" stroke-dasharray="1.5 1.5"/><line x1="498.5" y1="678.9" x2="2125.3" y2="678.9" stroke="#d2d2d2" stroke-opacity="0.6" stroke-width="1.5"/><line x1="498.5" y1="660.1" x2="2125.3" y2="660.1" stroke="#bcbcbc" stroke-opacity="0.6" stroke-width="1.1" stroke-dasharray="1.5 1.5"/><line x1="498.5" y1="641.3" x2="2125.3" y2="641.3" stroke="#bcbcbc" stroke-opacity="0.6" stroke-width="1.1" stroke-dasharray="1.5 1.5"/><line x1="498.5" y1="622.5" x2="2125.3" y2="622.5" stroke="#bcbcbc" stroke-opacity="0.6" stroke-width="1.1" stroke-dasharray="1.5 1.5"/><line x1="498.5" y1="603.8" x2="2125.3" y2="603.8" stroke="#d2d2d2" stroke-opacity="0.6" stroke-width="1.5"/><line x1="498.5" y1="585.0" x2="2125.3" y2="585.0" stroke="#bcbcbc" stroke-opacity="0.6" stroke-width="1.1" stroke-dasharray="1.5 1.5"/><line x1="498.5" y1="566.2" x2="2125.3" y2="566.2" stroke="#bcbcbc" stroke-opacity="0.6" stroke-width="1.1" stroke-dasharray="1.5 1.5"/><line x1="498.5" y1="547.5" x2="2125.3" y2="547.5" stroke="#bcbcbc" stroke-opacity="0.6" stroke-width="1.1" stroke-dasharray="1.5 1.5"/><line x1="498.5" y1="528.7" x2="2125.3" y2="528.7" stroke="#d2d2d2" stroke-opacity="0.6" stroke-width="1.5"/><line x1="498.5" y1="509.9" x2="2125.3" y2="509.9" stroke="#bcbcbc" stroke-opacity="0.6" stroke-width="1.1" stroke-dasharray="1.5 1.5"/><line x1="498.5" y1="491.2" x2="2125.3" y2="491.2" stroke="#bcbcbc" stroke-opacity="0.6" stroke-width="1.1" stroke-dasharray="1.5 1.5"/><line x1="498.5" y1="472.4" x2="2125.3" y2="472.4" stroke="#bcbcbc" stroke-opacity="0.6" stroke-width="1.1" stroke-dasharray="1.5 1.5"/><line x1="498.5" y1="453.6" x2="2125.3" y2="453.6" stroke="#d2d2d2" stroke-opacity="0.6" stroke-width="1.5"/><line x1="498.5" y1="434.9" x2="2125.3" y2="434.9" stroke="#bcbcbc" stroke-opacity="0.6" stroke-width="1.1" stroke-dasharray="1.5 1.5"/><line x1="498.5" y1="416.1" x2="2125.3" y2="416.1" stroke="#bcbcbc" stroke-opacity="0.6" stroke-width="1.1" stroke-dasharray="1.5 1.5"/><line x1="498.5" y1="397.3" x2="2125.3" y2="397.3" stroke="#bcbcbc" stroke-opacity="0.6" stroke-width="1.1" stroke-dasharray="1.5 1.5"/><line x1="498.5" y1="378.5" x2="2125.3" y2="378.5" stroke="#d2d2d2" stroke-opacity="0.6" stroke-width="1.5"/><line x1="498.5" y1="359.8" x2="2125.3" y2="359.8" stroke="#bcbcbc" stroke-opacity="0.6" stroke-width="1.1" stroke-dasharray="1.5 1.5"/><line x1="634.1" y1="351.8" x2="634.1" y2="904.1" stroke="#d2d2d2" stroke-opacity="0.55" stroke-width="1.4"/><line x1="769.6" y1="351.8" x2="769.6" y2="904.1" stroke="#d2d2d2" stroke-opacity="0.55" stroke-width="1.4"/><line x1="905.2" y1="351.8" x2="905.2" y2="904.1" stroke="#d2d2d2" stroke-opacity="0.55" stroke-width="1.4"/><line x1="1040.8" y1="351.8" x2="1040.8" y2="904.1" stroke="#d2d2d2" stroke-opacity="0.55" stroke-width="1.4"/><line x1="1176.3" y1="351.8" x2="1176.3" y2="904.1" stroke="#d2d2d2" stroke-opacity="0.55" stroke-width="1.4"/><line x1="1311.9" y1="351.8" x2="1311.9" y2="904.1" stroke="#d2d2d2" stroke-opacity="0.55" stroke-width="1.4"/><line x1="1447.5" y1="351.8" x2="1447.5" y2="904.1" stroke="#d2d2d2" stroke-opacity="0.55" stroke-width="1.4"/><line x1="1583.1" y1="351.8" x2="1583.1" y2="904.1" stroke="#d2d2d2" stroke-opacity="0.55" stroke-width="1.4"/><line x1="1718.6" y1="351.8" x2="1718.6" y2="904.1" stroke="#d2d2d2" stroke-opacity="0.55" stroke-width="1.4"/><line x1="1854.2" y1="351.8" x2="1854.2" y2="904.1" stroke="#d2d2d2" stroke-opacity="0.55" stroke-width="1.4"/><line x1="1989.8" y1="351.8" x2="1989.8" y2="904.1" stroke="#d2d2d2" stroke-opacity="0.55" stroke-width="1.4"/><line x1="2125.3" y1="351.8" x2="2125.3" y2="904.1" stroke="#d2d2d2" stroke-opacity="0.55" stroke-width="1.4"/><path d="M498.5,738.5C499.8,743.7 503.9,770.7 506.2,769.4C508.6,768.2 510.6,749.3 512.8,731.0C515.0,712.8 517.6,669.6 519.3,659.9C521.1,650.2 521.7,665.5 523.1,673.0C524.5,680.5 526.0,691.4 527.8,704.8C529.5,718.2 531.3,745.2 533.4,753.5C535.4,761.8 537.3,749.9 539.9,754.4C542.6,759.0 546.9,777.1 549.3,780.6C551.6,784.2 551.9,773.3 554.0,776.0C556.0,778.6 557.9,794.1 561.5,796.6C565.0,799.1 571.9,791.1 575.5,790.9C579.1,790.8 580.0,798.3 583.0,795.6C585.9,793.0 590.2,776.4 593.3,775.0C596.4,773.6 598.9,781.3 601.7,787.2C604.5,793.1 607.3,809.3 610.1,810.6C612.9,811.8 615.9,798.3 618.5,794.7C621.2,791.1 623.4,794.5 626.0,789.1C628.7,783.6 630.7,759.9 634.5,761.9C638.2,764.0 644.0,797.2 648.5,801.2C653.0,805.3 658.0,785.5 661.6,786.3C665.2,787.0 666.6,800.8 670.0,805.9C673.5,811.1 679.1,816.2 682.2,817.1C685.3,818.1 685.9,811.5 688.7,811.5C691.6,811.5 695.8,817.0 699.0,817.1C702.3,817.3 704.8,809.5 708.4,812.5C712.0,815.4 716.8,833.8 720.6,834.9C724.3,836.0 727.6,823.5 730.9,819.0C734.1,814.5 737.7,810.0 740.2,807.8C742.7,805.6 743.2,809.3 745.8,805.9C748.5,802.5 753.6,789.7 756.1,787.2C758.6,784.7 758.9,791.4 760.8,790.9C762.7,790.5 764.8,783.8 767.4,784.4C769.9,785.0 773.5,794.5 776.2,794.7C779.0,794.8 781.2,795.8 783.7,785.3C786.2,774.9 788.7,739.6 791.2,732.0C793.7,724.3 796.4,741.5 798.7,739.5C801.0,737.4 803.2,737.3 805.2,719.8C807.3,702.3 808.8,646.6 810.9,634.6C812.9,622.6 815.4,647.3 817.4,647.7C819.4,648.2 821.2,636.3 823.0,637.4C824.9,638.5 826.5,655.2 828.6,654.3C830.8,653.4 833.6,636.3 836.1,631.8C838.6,627.3 841.4,627.5 843.6,627.1C845.8,626.8 847.1,627.1 849.2,630.0C851.4,632.8 853.3,637.6 856.7,644.0C860.2,650.4 866.9,667.2 869.8,668.3C872.8,669.4 872.9,650.1 874.5,650.5C876.1,651.0 877.8,662.7 879.2,671.1C880.6,679.6 881.4,695.8 882.9,701.1C884.5,706.4 886.4,698.1 888.5,703.0C890.7,707.8 893.5,725.3 896.0,730.1C898.5,734.9 901.0,726.2 903.5,732.0C906.0,737.7 908.7,756.5 911.0,764.7C913.4,773.0 915.4,787.5 917.6,781.6C919.7,775.7 922.2,741.8 924.1,729.2C926.0,716.5 927.2,707.6 928.8,705.8C930.4,703.9 931.6,715.4 933.5,717.9C935.3,720.4 938.2,728.5 940.0,720.7C941.9,712.9 943.1,682.2 944.7,671.1C946.3,660.1 947.8,653.8 949.4,654.3C950.9,654.8 951.7,672.7 954.1,673.9C956.4,675.2 960.0,664.3 963.4,661.8C966.9,659.3 971.2,658.7 974.7,659.0C978.1,659.3 981.2,659.3 984.0,663.6C986.8,668.0 988.7,686.3 991.5,685.2C994.3,684.1 998.7,660.4 1000.9,657.1C1003.1,653.8 1003.4,665.7 1004.6,665.5C1005.9,665.4 1006.5,645.6 1008.4,656.2C1010.2,666.8 1012.4,719.8 1015.8,729.2C1019.3,738.5 1025.8,713.6 1028.9,712.3C1032.1,711.1 1032.6,713.6 1034.6,721.7C1036.5,729.8 1038.7,751.3 1040.6,761.0C1042.6,770.7 1044.2,775.3 1046.2,779.7C1048.3,784.1 1050.9,795.3 1052.8,787.2C1054.7,779.1 1056.1,745.2 1057.5,731.0C1058.9,716.8 1059.6,707.3 1061.2,702.0C1062.8,696.7 1064.6,696.2 1066.8,699.2C1069.0,702.2 1072.1,718.6 1074.3,719.8C1076.5,721.1 1078.4,708.3 1079.9,706.7C1081.5,705.1 1082.1,713.3 1083.7,710.4C1085.2,707.6 1087.1,693.6 1089.3,689.9C1091.5,686.1 1094.9,689.2 1096.8,688.0C1098.6,686.7 1099.0,685.3 1100.5,682.4C1102.1,679.4 1104.0,672.4 1106.1,670.2C1108.3,668.0 1111.8,667.5 1113.6,669.3C1115.5,671.0 1115.8,678.6 1117.4,680.5C1118.9,682.4 1121.1,678.8 1123.0,680.5C1124.9,682.2 1126.1,692.7 1128.6,690.8C1131.1,688.9 1135.5,673.2 1138.0,669.3C1140.5,665.4 1142.0,670.2 1143.6,667.4C1145.1,664.6 1146.1,650.5 1147.3,652.4C1148.6,654.3 1149.8,665.8 1151.1,678.6C1152.3,691.4 1152.9,721.5 1154.8,729.2C1156.7,736.8 1159.2,721.4 1162.3,724.5C1165.4,727.6 1170.1,737.4 1173.5,747.9C1177.0,758.3 1180.4,780.0 1182.9,787.2C1185.4,794.4 1186.6,801.5 1188.5,790.9C1190.4,780.3 1192.4,739.5 1194.1,723.5C1195.8,707.6 1196.6,697.7 1198.8,695.5C1201.0,693.3 1205.2,707.6 1207.2,710.4C1209.2,713.3 1209.6,718.9 1211.0,712.3C1212.4,705.8 1214.1,681.6 1215.6,671.1C1217.2,660.7 1218.9,651.0 1220.3,649.6C1221.7,648.2 1222.5,659.7 1224.1,662.7C1225.6,665.7 1226.9,663.8 1229.7,667.4C1232.5,671.0 1237.5,679.6 1240.9,684.2C1244.3,688.9 1247.5,693.9 1250.3,695.5C1253.1,697.0 1255.3,695.9 1257.8,693.6C1260.3,691.3 1262.4,681.7 1265.3,681.4C1268.1,681.1 1272.4,692.8 1274.6,691.7C1276.8,690.6 1277.1,676.1 1278.4,674.9C1279.6,673.6 1280.5,672.2 1282.1,684.2C1283.7,696.2 1285.2,740.1 1287.7,746.9C1290.2,753.8 1294.3,725.9 1297.1,725.4C1299.9,725.0 1302.0,737.0 1304.6,744.1C1307.1,751.3 1309.8,761.9 1312.5,768.5C1315.2,775.0 1318.4,784.4 1320.9,783.5C1323.4,782.5 1325.3,781.0 1327.5,762.9C1329.6,744.8 1332.3,689.7 1334.0,674.9C1335.7,660.1 1335.7,670.8 1337.8,673.9C1339.8,677.1 1344.2,693.8 1346.2,693.6C1348.2,693.4 1348.5,682.4 1349.9,673.0C1351.3,663.6 1353.0,638.4 1354.6,637.4C1356.2,636.5 1357.9,661.9 1359.3,667.4C1360.7,672.9 1361.2,672.2 1363.0,670.2C1364.9,668.2 1368.3,659.6 1370.5,655.2C1372.7,650.9 1374.3,644.3 1376.1,644.0C1378.0,643.7 1379.9,652.3 1381.8,653.4C1383.6,654.4 1385.8,650.4 1387.4,650.5C1388.9,650.7 1389.6,650.4 1391.1,654.3C1392.7,658.2 1394.9,671.3 1396.7,673.9C1398.6,676.6 1399.5,668.8 1402.3,670.2C1405.1,671.6 1410.5,676.6 1413.6,682.4C1416.7,688.1 1419.2,702.0 1421.1,704.8C1422.9,707.6 1422.9,697.3 1424.8,699.2C1426.7,701.1 1430.1,709.8 1432.3,716.1C1434.5,722.3 1435.4,732.6 1437.9,736.7C1440.4,740.7 1444.5,733.2 1447.3,740.4C1450.1,747.6 1452.3,778.1 1454.8,779.7C1457.3,781.3 1459.9,764.7 1462.2,749.8C1464.6,734.8 1466.6,692.3 1468.8,689.9C1471.0,687.4 1473.0,717.2 1475.3,734.8C1477.7,752.4 1480.3,786.9 1482.8,795.6C1485.3,804.4 1488.1,787.0 1490.3,787.2C1492.5,787.4 1493.9,798.4 1495.9,796.6C1498.0,794.7 1500.0,775.3 1502.5,776.0C1505.0,776.6 1507.6,799.8 1510.9,800.3C1514.2,800.8 1518.7,779.1 1522.1,778.8C1525.6,778.5 1528.2,797.6 1531.5,798.4C1534.8,799.2 1539.0,784.1 1541.8,783.5C1544.6,782.8 1546.0,787.4 1548.4,794.7C1550.7,802.0 1553.3,823.7 1555.8,827.4C1558.3,831.2 1560.8,822.6 1563.3,817.1C1565.8,811.7 1567.5,800.1 1570.8,794.7C1574.2,789.2 1579.5,782.7 1583.4,784.4C1587.4,786.1 1591.5,804.4 1594.7,805.0C1597.8,805.6 1599.6,790.6 1602.1,788.1C1604.6,785.6 1607.0,784.1 1609.6,790.0C1612.3,795.9 1615.4,817.5 1618.1,823.7C1620.7,829.9 1623.4,826.4 1625.5,827.4C1627.7,828.5 1628.7,830.7 1631.2,830.3C1633.7,829.8 1637.1,826.7 1640.5,824.6C1644.0,822.6 1648.6,818.4 1651.8,818.1C1654.9,817.8 1657.1,820.1 1659.2,822.8C1661.4,825.4 1662.5,831.8 1664.9,834.0C1667.2,836.2 1670.5,837.4 1673.3,835.9C1676.1,834.3 1679.4,828.8 1681.7,824.6C1684.0,820.4 1685.1,811.1 1687.3,810.6C1689.5,810.1 1692.0,821.8 1694.8,821.8C1697.6,821.8 1701.7,813.6 1704.2,810.6C1706.7,807.6 1707.8,807.6 1709.8,804.0C1711.8,800.5 1713.8,788.0 1716.3,789.1C1718.8,790.2 1721.8,809.3 1724.8,810.6C1727.7,811.8 1731.6,800.0 1734.1,796.6C1736.6,793.1 1737.9,793.1 1739.7,790.0C1741.6,786.9 1743.5,782.4 1745.3,777.8C1747.2,773.3 1749.1,772.8 1751.0,762.9C1752.8,752.9 1755.0,733.5 1756.6,717.9C1758.1,702.3 1758.1,678.3 1760.3,669.3C1762.5,660.2 1766.9,667.4 1769.7,663.6C1772.5,659.9 1775.0,653.2 1777.2,646.8C1779.4,640.4 1780.6,629.0 1782.8,625.3C1785.0,621.5 1788.4,625.6 1790.3,624.3C1792.1,623.1 1792.5,616.4 1794.0,617.8C1795.6,619.2 1797.5,628.5 1799.6,632.8C1801.8,637.0 1804.0,636.8 1807.1,643.1C1810.2,649.3 1815.7,670.8 1818.4,670.2C1821.0,669.6 1821.2,635.7 1823.0,639.3C1824.9,642.9 1827.6,683.3 1829.6,691.7C1831.6,700.1 1833.3,688.6 1835.2,689.9C1837.1,691.1 1838.3,692.3 1840.8,699.2C1843.3,706.1 1848.1,722.9 1850.1,731.0C1852.0,739.1 1851.1,741.0 1852.5,747.9C1853.8,754.7 1855.9,766.1 1858.1,772.2C1860.3,778.3 1863.7,785.9 1865.6,784.4C1867.5,782.8 1867.6,778.0 1869.3,762.9C1871.1,747.7 1873.7,703.9 1875.9,693.6C1878.1,683.3 1880.1,696.7 1882.4,701.1C1884.8,705.5 1887.9,725.7 1889.9,719.8C1892.0,713.9 1893.4,678.2 1894.6,665.5C1895.9,652.9 1896.3,642.9 1897.4,644.0C1898.5,645.1 1899.6,666.5 1901.2,672.1C1902.7,677.7 1904.6,681.3 1906.8,677.7C1909.0,674.1 1912.1,654.3 1914.3,650.5C1916.4,646.8 1917.4,653.5 1919.9,655.2C1922.4,656.9 1926.1,656.9 1929.2,660.8C1932.4,664.7 1935.6,678.3 1938.6,678.6C1941.6,678.9 1944.2,663.3 1947.0,662.7C1949.8,662.1 1953.1,666.6 1955.4,674.9C1957.8,683.1 1959.2,700.8 1961.1,712.3C1962.9,723.9 1963.9,742.4 1966.7,744.1C1969.5,745.9 1974.5,722.0 1977.9,722.6C1981.3,723.2 1984.5,739.1 1987.3,747.9C1990.1,756.6 1992.6,768.9 1994.8,775.0C1996.9,781.1 1998.5,785.8 2000.4,784.4C2002.2,783.0 2004.1,777.8 2006.0,766.6C2007.9,755.4 2009.4,725.7 2011.6,717.0C2013.8,708.3 2016.9,714.5 2019.1,714.2C2021.3,713.9 2022.8,722.6 2024.7,715.1C2026.6,707.6 2028.9,677.2 2030.3,669.3C2031.7,661.3 2031.6,664.0 2033.1,667.4C2034.7,670.8 2037.3,687.4 2039.7,689.9C2042.0,692.3 2045.0,686.1 2047.2,682.4C2049.4,678.6 2050.6,669.9 2052.8,667.4C2055.0,664.9 2058.1,665.5 2060.3,667.4C2062.5,669.3 2063.1,675.0 2065.9,678.6C2068.7,682.2 2073.7,688.6 2077.1,688.9C2080.6,689.2 2084.0,683.0 2086.5,680.5C2089.0,678.0 2089.9,665.4 2092.1,673.9C2094.3,682.5 2097.1,722.0 2099.6,732.0C2102.1,742.0 2104.6,732.8 2107.1,733.8C2109.6,734.9 2111.9,733.4 2114.6,738.5C2117.2,743.7 2121.6,760.4 2123.0,764.7" fill="none" stroke="#c8c8c8" stroke-width="1.8" clip-path="url(#c1clip)"/><path d="M498.5,869.6C500.7,871.6 508.4,884.1 511.8,881.7C515.3,879.4 516.7,860.2 519.3,855.5C522.0,850.8 525.1,851.3 527.8,853.7C530.4,856.0 531.7,860.7 535.2,869.6C538.8,878.4 537.9,900.4 549.3,906.6C560.7,912.8 593.3,910.0 603.6,906.6C613.9,903.2 608.6,890.4 611.1,886.4C613.6,882.4 616.1,881.7 618.5,882.7C621.0,883.6 623.5,897.3 626.0,892.0C628.5,886.7 630.7,858.2 633.5,850.8C636.3,843.5 639.5,841.3 642.9,848.0C646.3,854.7 650.7,886.9 654.1,891.1C657.5,895.3 659.7,878.9 663.5,873.3C667.2,867.7 672.8,858.3 676.6,857.4C680.3,856.5 683.1,864.1 685.9,867.7C688.7,871.3 690.0,874.2 693.4,878.9C696.9,883.6 703.1,894.1 706.5,895.8C710.0,897.5 710.9,890.3 714.0,889.2C717.1,888.1 722.3,893.0 725.3,889.2C728.2,885.5 729.6,869.1 731.8,866.8C734.0,864.4 736.0,873.8 738.4,875.2C740.7,876.6 743.0,877.0 745.8,875.2C748.7,873.3 752.4,864.9 755.2,863.9C758.0,863.0 760.4,866.8 762.7,869.6C764.9,872.4 765.6,883.4 768.7,880.8C771.9,878.1 778.7,856.1 781.8,853.7C785.0,851.2 785.6,865.8 787.5,865.8C789.3,865.8 790.3,860.8 793.1,853.7C795.9,846.5 801.5,824.2 804.3,822.8C807.1,821.4 808.1,846.5 809.9,845.2C811.8,844.0 813.4,827.9 815.5,815.3C817.7,802.6 820.8,776.6 823.0,769.4C825.2,762.2 826.5,770.7 828.6,772.2C830.8,773.8 833.5,772.2 836.1,778.8C838.8,785.3 841.9,809.8 844.6,811.5C847.2,813.2 849.7,793.6 852.0,789.1C854.4,784.5 856.1,782.8 858.6,784.4C861.1,785.9 864.1,783.6 867.0,798.4C870.0,813.2 873.7,866.3 876.4,873.3C879.0,880.3 881.2,844.9 882.9,840.5C884.6,836.2 884.5,848.0 886.7,847.1C888.9,846.2 892.6,835.2 896.0,834.9C899.5,834.6 904.1,843.0 907.3,845.2C910.4,847.4 911.6,840.2 914.8,848.0C917.9,855.8 922.9,887.5 926.0,892.0C929.1,896.5 931.0,882.0 933.5,875.2C936.0,868.3 939.1,851.6 941.0,850.8C942.8,850.1 942.8,878.9 944.7,870.5C946.6,862.1 949.4,811.4 952.2,800.3C955.0,789.2 959.1,803.3 961.6,804.0C964.1,804.8 965.0,807.0 967.2,805.0C969.4,803.0 972.5,792.3 974.7,791.9C976.8,791.4 977.8,803.3 980.3,802.2C982.8,801.1 986.8,787.5 989.6,785.3C992.4,783.1 993.7,773.2 997.1,789.1C1000.6,805.0 1006.8,870.3 1010.2,880.8C1013.7,891.2 1014.9,854.0 1017.7,851.8C1020.5,849.6 1024.3,865.4 1027.1,867.7C1029.9,870.0 1032.0,868.0 1034.6,865.8C1037.1,863.6 1039.3,856.1 1042.5,854.6C1045.7,853.0 1050.4,851.9 1053.7,856.5C1057.0,861.0 1059.8,882.8 1062.1,881.7C1064.5,880.6 1065.4,854.4 1067.8,849.9C1070.1,845.4 1073.7,847.9 1076.2,854.6C1078.7,861.3 1080.6,898.3 1082.7,890.2C1084.9,882.0 1086.6,821.0 1089.3,805.9C1091.9,790.8 1096.2,797.5 1098.6,799.4C1101.1,801.2 1101.5,811.4 1104.3,817.1C1107.1,822.9 1112.4,836.2 1115.5,834.0C1118.6,831.8 1121.1,810.9 1123.0,804.0C1124.9,797.2 1124.2,794.4 1126.7,792.8C1129.2,791.3 1134.5,785.6 1138.0,794.7C1141.4,803.7 1144.5,837.6 1147.3,847.1C1150.1,856.6 1152.3,848.7 1154.8,851.8C1157.3,854.9 1159.5,866.6 1162.3,865.8C1165.1,865.0 1169.2,847.7 1171.7,847.1C1174.1,846.5 1174.5,860.0 1177.3,862.1C1180.1,864.1 1185.1,852.7 1188.5,859.3C1191.9,865.8 1195.1,899.4 1197.9,901.4C1200.7,903.4 1203.2,878.3 1205.3,871.4C1207.5,864.6 1209.4,859.9 1211.0,860.2C1212.5,860.5 1212.8,880.0 1214.7,873.3C1216.6,866.6 1219.7,829.2 1222.2,820.0C1224.7,810.8 1227.5,820.3 1229.7,818.1C1231.9,815.9 1233.4,807.9 1235.3,806.9C1237.2,805.8 1238.4,809.5 1240.9,811.5C1243.4,813.6 1247.2,819.2 1250.3,819.0C1253.4,818.9 1256.5,812.9 1259.6,810.6C1262.8,808.3 1266.2,804.2 1269.0,805.0C1271.8,805.8 1274.3,803.7 1276.5,815.3C1278.7,826.8 1279.9,867.4 1282.1,874.2C1284.3,881.1 1287.1,857.2 1289.6,856.5C1292.1,855.7 1294.6,864.9 1297.1,869.6C1299.6,874.2 1302.3,881.1 1304.6,884.5C1306.8,888.0 1308.0,891.9 1310.6,890.2C1313.2,888.4 1317.2,873.9 1320.0,874.2C1322.8,874.6 1325.0,893.1 1327.5,892.0C1330.0,890.9 1332.8,873.6 1335.0,867.7C1337.1,861.8 1338.2,854.0 1340.6,856.5C1342.9,859.0 1346.2,887.7 1349.0,882.7C1351.8,877.7 1354.8,837.3 1357.4,826.5C1360.1,815.7 1361.6,824.8 1364.9,818.1C1368.2,811.4 1373.6,790.6 1377.1,786.3C1380.5,781.9 1382.2,792.7 1385.5,791.9C1388.8,791.1 1393.9,781.1 1396.7,781.6C1399.5,782.0 1400.2,790.6 1402.3,794.7C1404.5,798.7 1407.3,793.1 1409.8,805.9C1412.3,818.7 1414.8,861.5 1417.3,871.4C1419.8,881.4 1422.3,864.9 1424.8,865.8C1427.3,866.8 1429.5,875.5 1432.3,877.0C1435.1,878.6 1438.8,876.4 1441.7,875.2C1444.5,873.9 1445.7,865.2 1449.1,869.6C1452.6,873.9 1459.1,898.6 1462.2,901.4C1465.4,904.2 1464.7,885.5 1467.9,886.4C1471.0,887.3 1466.3,903.2 1481.0,906.6C1495.6,910.0 1542.4,907.3 1555.8,906.6C1569.3,905.9 1559.0,904.8 1561.5,902.3C1564.0,899.9 1567.0,899.0 1570.8,892.0C1574.6,885.0 1580.9,865.2 1584.4,860.2C1587.9,855.2 1589.4,858.6 1591.8,862.1C1594.3,865.5 1596.8,876.9 1599.3,880.8C1601.8,884.7 1604.0,885.8 1606.8,885.5C1609.6,885.2 1612.4,881.1 1616.2,878.9C1619.9,876.7 1625.5,870.3 1629.3,872.4C1633.0,874.4 1635.8,889.1 1638.6,891.1C1641.5,893.1 1643.0,882.7 1646.1,884.5C1649.3,886.4 1653.9,902.2 1657.4,902.3C1660.8,902.5 1663.6,889.8 1666.7,885.5C1669.8,881.1 1672.7,876.6 1676.1,876.1C1679.5,875.6 1683.9,882.4 1687.3,882.7C1690.7,883.0 1693.9,876.0 1696.7,878.0C1699.5,880.0 1701.4,894.7 1704.2,894.8C1707.0,895.0 1711.0,880.5 1713.5,878.9C1716.0,877.4 1716.3,886.7 1719.1,885.5C1721.9,884.2 1727.3,867.9 1730.4,871.4C1733.5,875.0 1735.5,900.7 1737.9,906.6C1740.2,912.5 1741.9,915.4 1744.4,906.6C1746.9,897.8 1750.5,858.0 1752.8,853.7C1755.2,849.3 1756.3,890.6 1758.5,880.8C1760.6,871.0 1763.8,808.9 1765.9,794.7C1768.1,780.5 1769.4,800.6 1771.6,795.6C1773.7,790.6 1776.5,768.5 1779.0,764.7C1781.5,761.0 1784.2,766.9 1786.5,773.2C1788.9,779.4 1790.0,800.8 1793.1,802.2C1796.2,803.6 1802.0,782.7 1805.3,781.6C1808.5,780.5 1810.6,789.2 1812.7,795.6C1814.9,802.0 1816.3,809.0 1818.4,820.0C1820.4,830.9 1823.0,858.5 1824.9,861.1C1826.8,863.8 1827.6,840.5 1829.6,835.9C1831.6,831.2 1834.6,835.4 1837.1,833.1C1839.6,830.7 1842.4,820.1 1844.6,821.8C1846.7,823.5 1848.4,837.3 1850.1,843.4C1851.7,849.4 1852.1,857.1 1854.4,858.3C1856.6,859.6 1860.3,847.6 1863.7,850.8C1867.2,854.1 1871.8,877.2 1875.0,878.0C1878.1,878.8 1879.9,859.7 1882.4,855.5C1884.9,851.3 1887.7,852.2 1889.9,852.7C1892.1,853.2 1893.7,867.1 1895.5,858.3C1897.4,849.6 1899.3,807.9 1901.2,800.3C1903.0,792.7 1904.3,813.9 1906.8,812.5C1909.3,811.1 1913.6,796.1 1916.1,791.9C1918.6,787.7 1919.7,785.9 1921.8,787.2C1923.8,788.4 1925.8,800.1 1928.3,799.4C1930.8,798.6 1934.4,785.6 1936.7,782.5C1939.1,779.4 1939.8,773.9 1942.3,780.6C1944.8,787.4 1948.9,803.0 1951.7,822.8C1954.5,842.6 1956.7,893.0 1959.2,899.5C1961.7,906.1 1963.9,864.9 1966.7,862.1C1969.5,859.3 1972.3,884.7 1976.0,882.7C1979.8,880.6 1985.1,854.6 1989.1,849.9C1993.2,845.2 1996.9,846.6 2000.4,854.6C2003.8,862.5 2006.6,898.1 2009.7,897.6C2012.9,897.2 2016.6,859.6 2019.1,851.8C2021.6,844.0 2023.1,848.2 2024.7,850.8C2026.3,853.5 2026.6,875.6 2028.5,867.7C2030.3,859.7 2032.8,815.1 2035.9,803.1C2039.1,791.1 2044.1,792.8 2047.2,795.6C2050.3,798.4 2052.2,814.0 2054.7,820.0C2057.2,825.9 2058.7,836.0 2062.1,831.2C2065.6,826.4 2071.5,795.6 2075.3,790.9C2079.0,786.3 2081.8,795.3 2084.6,803.1C2087.4,810.9 2090.1,824.0 2092.1,837.7C2094.1,851.5 2094.9,881.1 2096.8,885.5C2098.7,889.8 2101.3,866.1 2103.3,863.9C2105.4,861.8 2106.8,872.7 2108.9,872.4C2111.1,872.1 2114.1,863.3 2116.4,862.1C2118.8,860.8 2121.9,864.4 2123.0,864.9" fill="none" stroke="#c8c8c8" stroke-width="1.8" clip-path="url(#c1clip)"/><line x1="498.5" y1="412.3" x2="2125.3" y2="412.3" stroke="#a51d3a" stroke-width="2.2" stroke-dasharray="7.5 6.5"/><path d="M498.4,804.0C499.5,806.1 506.4,821.6 508.1,821.8C509.8,822.0 511.5,812.9 512.8,805.9C514.1,798.9 517.6,764.1 519.3,761.9C521.1,759.7 526.0,781.0 527.8,787.2C529.5,793.4 532.7,811.5 534.3,815.3C535.9,819.1 539.6,816.6 541.8,820.0C544.0,823.3 551.0,841.1 553.0,844.3C555.1,847.5 557.9,845.1 559.6,847.1C561.2,849.1 565.5,859.1 567.1,861.1C568.6,863.2 571.3,865.3 572.7,864.9C574.1,864.4 576.9,859.0 579.2,857.4C581.5,855.8 589.5,852.0 592.3,850.8C595.2,849.6 600.7,848.4 603.6,847.1C606.4,845.8 614.1,840.2 616.7,839.6C619.3,839.1 624.1,846.0 626.0,842.4C628.0,838.8 631.6,812.1 633.5,808.7C635.5,805.3 640.6,809.3 642.9,813.4C645.2,817.6 650.7,842.2 653.2,844.3C655.7,846.4 661.9,832.5 664.4,831.2C666.9,829.9 671.8,831.4 674.7,833.1C677.7,834.7 686.4,842.9 689.7,845.2C693.0,847.5 700.2,851.4 702.8,852.7C705.4,854.0 709.7,855.3 712.1,856.5C714.5,857.7 721.0,864.5 723.4,863.0C725.8,861.5 731.0,845.8 732.7,843.4C734.5,841.0 736.6,843.8 738.4,842.4C740.1,841.0 745.1,832.8 747.7,831.2C750.3,829.5 758.3,828.2 760.8,828.4C763.4,828.6 767.7,833.3 769.7,833.1C771.7,832.8 776.2,828.1 778.1,826.5C780.0,824.9 784.1,822.7 785.6,819.0C787.1,815.3 789.7,797.7 791.2,794.7C792.7,791.6 796.5,796.7 798.7,792.8C800.9,788.9 808.0,769.7 809.9,761.0C811.9,752.3 814.0,724.7 815.5,717.9C817.1,711.2 821.5,703.5 823.0,703.0C824.6,702.4 827.2,712.8 828.6,713.3C830.1,713.7 833.2,705.9 835.2,706.7C837.2,707.5 843.5,719.0 845.5,719.8C847.5,720.6 850.5,713.8 852.0,713.3C853.6,712.7 856.5,711.7 858.6,715.1C860.7,718.5 867.6,736.5 869.8,742.3C872.0,748.1 876.0,761.5 877.3,764.7C878.6,768.0 879.8,769.3 881.1,770.3C882.4,771.4 886.8,772.6 888.5,774.1C890.3,775.6 894.3,781.9 896.0,783.5C897.8,785.0 901.6,784.2 903.5,787.2C905.5,790.1 910.7,804.6 912.9,808.7C915.1,812.9 920.5,824.2 922.2,822.8C924.0,821.3 925.9,800.0 927.9,796.6C929.8,793.1 937.1,794.1 939.1,792.8C941.1,791.5 943.4,791.9 944.7,785.3C946.0,778.8 948.1,742.8 950.3,736.7C952.5,730.5 960.6,734.2 963.4,732.9C966.3,731.6 972.3,725.6 974.7,725.4C977.1,725.2 981.4,730.4 984.0,731.0C986.6,731.7 994.9,730.4 997.1,731.0C999.3,731.7 1001.4,733.5 1002.7,736.7C1004.0,739.8 1006.8,751.3 1008.4,758.2C1009.9,765.1 1013.7,791.7 1015.8,795.6C1018.0,799.6 1024.9,791.5 1027.1,791.9C1029.3,792.2 1032.8,795.7 1034.6,798.4C1036.4,801.2 1040.5,812.5 1042.5,815.3C1044.5,818.0 1049.9,824.0 1051.8,821.8C1053.8,819.6 1057.5,801.9 1059.3,796.6C1061.2,791.2 1066.0,777.2 1067.8,776.0C1069.5,774.8 1072.9,784.5 1074.3,786.3C1075.7,788.0 1078.9,789.2 1079.9,790.9C1080.9,792.7 1081.6,806.3 1082.7,801.2C1083.8,796.2 1087.2,754.8 1089.3,747.9C1091.4,741.0 1098.1,742.4 1100.5,742.3C1102.9,742.2 1107.9,745.4 1109.9,746.9C1111.8,748.5 1115.8,756.1 1117.4,755.4C1118.9,754.6 1121.7,741.9 1123.0,740.4C1124.3,738.9 1126.7,743.1 1128.6,742.3C1130.5,741.4 1136.7,731.9 1138.9,732.9C1141.1,733.9 1145.5,743.4 1147.3,750.7C1149.2,758.0 1153.1,790.7 1154.8,795.6C1156.6,800.5 1160.8,793.2 1162.3,792.8C1163.8,792.4 1166.6,791.2 1167.9,791.9C1169.2,792.5 1171.8,795.2 1173.5,798.4C1175.3,801.7 1180.7,817.7 1182.9,820.0C1185.1,822.2 1190.5,821.0 1192.2,818.1C1194.0,815.1 1196.3,798.4 1197.9,794.7C1199.4,791.0 1203.6,787.0 1205.3,786.3C1207.1,785.5 1210.9,793.5 1212.8,788.1C1214.8,782.8 1219.8,746.0 1222.2,740.4C1224.6,734.8 1231.2,739.5 1233.4,740.4C1235.6,741.3 1238.9,745.9 1240.9,747.9C1242.9,749.9 1248.1,757.1 1250.3,757.2C1252.5,757.4 1257.9,750.3 1259.6,748.8C1261.4,747.3 1263.7,744.0 1265.3,744.1C1266.8,744.2 1271.2,748.2 1272.7,749.8C1274.3,751.3 1276.8,752.2 1278.4,757.2C1279.9,762.3 1284.3,787.6 1285.8,792.8C1287.4,798.1 1290.1,801.4 1291.5,802.2C1292.8,802.9 1295.5,798.5 1297.1,799.4C1298.6,800.2 1303.0,806.1 1304.6,809.7C1306.1,813.3 1308.8,828.1 1310.6,830.3C1312.4,832.4 1318.1,828.3 1320.0,828.4C1321.8,828.5 1325.0,837.5 1326.5,831.2C1328.1,824.9 1331.7,781.6 1333.1,774.1C1334.5,766.6 1336.9,765.4 1338.7,766.6C1340.4,767.8 1346.1,787.9 1348.1,784.4C1350.0,780.9 1354.2,741.5 1355.5,736.7C1356.9,731.8 1358.2,742.2 1359.3,743.2C1360.4,744.2 1362.9,748.1 1364.9,745.1C1366.9,742.0 1373.7,719.6 1376.1,717.0C1378.5,714.4 1383.7,722.1 1385.5,722.6C1387.2,723.2 1389.8,721.0 1391.1,721.7C1392.4,722.3 1395.4,727.1 1396.7,728.2C1398.0,729.3 1400.8,729.4 1402.3,731.0C1403.9,732.7 1408.1,736.4 1409.8,742.3C1411.6,748.2 1415.8,777.0 1417.3,781.6C1418.8,786.2 1421.2,779.6 1422.9,781.6C1424.7,783.5 1429.9,795.3 1432.3,798.4C1434.7,801.6 1441.8,807.6 1443.5,808.7C1445.3,809.8 1446.0,805.6 1447.3,807.8C1448.6,810.0 1453.4,824.5 1454.8,827.4C1456.1,830.4 1456.9,837.5 1458.5,833.1C1460.1,828.6 1466.6,789.4 1468.8,789.1C1471.0,788.7 1475.4,822.6 1477.2,830.3C1479.1,837.9 1482.7,852.3 1484.7,854.6C1486.7,856.9 1492.1,851.0 1494.1,849.9C1496.0,848.8 1499.4,844.0 1501.6,845.2C1503.7,846.4 1510.4,859.7 1512.8,860.2C1515.2,860.7 1519.5,849.5 1522.1,849.9C1524.8,850.3 1532.6,862.9 1535.3,863.9C1537.9,865.0 1542.6,858.2 1544.6,859.3C1546.6,860.4 1550.4,873.3 1552.1,873.3C1553.8,873.3 1557.8,862.8 1559.6,859.3C1561.3,855.8 1564.0,847.2 1567.1,843.4C1570.2,839.5 1582.7,827.6 1586.2,826.5C1589.8,825.4 1594.8,832.7 1597.5,834.0C1600.1,835.3 1606.3,835.9 1608.7,837.7C1611.1,839.6 1615.9,848.3 1618.1,849.9C1620.2,851.5 1624.8,851.2 1627.4,851.8C1630.0,852.3 1637.5,853.5 1640.5,854.6C1643.6,855.7 1650.3,860.2 1653.6,861.1C1656.9,862.1 1665.5,863.8 1668.6,863.0C1671.7,862.2 1677.6,856.7 1679.8,854.6C1682.0,852.5 1685.6,845.9 1687.3,845.2C1689.1,844.6 1692.8,848.0 1694.8,849.0C1696.8,850.0 1701.8,854.9 1704.2,853.7C1706.6,852.4 1713.2,839.9 1715.4,838.7C1717.6,837.5 1721.1,843.4 1722.9,843.4C1724.6,843.4 1728.5,837.5 1730.4,838.7C1732.2,839.9 1737.5,851.9 1738.8,853.7C1740.1,855.4 1739.7,860.1 1741.6,853.7C1743.5,847.2 1752.1,812.3 1754.7,798.4C1757.3,784.6 1762.3,742.6 1764.1,734.8C1765.8,726.9 1767.7,735.5 1769.7,731.0C1771.6,726.6 1778.7,699.1 1780.9,696.4C1783.1,693.7 1786.4,706.3 1788.4,707.6C1790.4,708.9 1795.6,707.2 1797.8,707.6C1799.9,708.1 1804.3,705.9 1807.1,711.4C1810.0,716.8 1819.0,748.5 1822.1,754.4C1825.2,760.3 1830.8,760.7 1833.3,761.9C1835.8,763.1 1841.7,760.9 1843.6,764.7C1845.6,768.6 1849.0,790.2 1850.1,794.7C1851.1,799.2 1851.3,801.0 1852.5,803.1C1853.6,805.2 1858.4,810.8 1860.0,812.5C1861.5,814.1 1864.5,816.5 1865.6,817.1C1866.7,817.8 1868.2,821.7 1869.3,818.1C1870.4,814.5 1873.4,790.8 1875.0,786.3C1876.5,781.7 1880.7,778.8 1882.4,778.8C1884.2,778.8 1888.2,791.3 1889.9,786.3C1891.7,781.2 1895.7,740.6 1897.4,735.7C1899.2,730.8 1902.9,745.7 1904.9,744.1C1906.9,742.6 1912.5,725.2 1914.3,722.6C1916.0,720.0 1918.3,720.9 1919.9,721.7C1921.4,722.4 1925.6,728.5 1927.4,729.2C1929.1,729.8 1932.7,727.5 1934.9,727.3C1937.0,727.1 1943.5,722.9 1946.1,727.3C1948.7,731.7 1955.4,755.5 1957.3,764.7C1959.3,774.0 1961.2,802.0 1962.9,806.9C1964.7,811.7 1969.7,806.7 1972.3,805.9C1974.9,805.2 1982.3,798.8 1985.4,800.3C1988.5,801.8 1996.3,816.5 1998.5,819.0C2000.7,821.5 2002.4,823.8 2004.1,821.8C2005.9,819.9 2011.5,806.6 2013.5,802.2C2015.4,797.7 2019.4,785.4 2021.0,783.5C2022.5,781.5 2025.1,790.1 2026.6,785.3C2028.1,780.5 2032.3,746.7 2034.1,742.3C2035.8,737.8 2039.8,747.4 2041.6,746.9C2043.3,746.5 2046.6,738.1 2049.0,738.5C2051.4,739.0 2059.5,750.7 2062.1,750.7C2064.8,750.7 2068.9,739.5 2071.5,738.5C2074.1,737.5 2082.2,739.6 2084.6,742.3C2087.0,744.9 2090.4,753.9 2092.1,761.0C2093.8,768.1 2098.3,798.7 2099.6,803.1C2100.9,807.5 2101.6,798.4 2103.3,798.4C2105.1,798.4 2112.3,801.1 2114.6,803.1C2116.9,805.1 2122.0,813.9 2123.0,815.3" fill="none" stroke="#7b7b7b" stroke-width="2.0" stroke-linejoin="round"/><polyline points="498.4,832.1 502.5,829.3 505.8,834.0 509.0,838.7 510.9,823.7 515.6,823.7 519.0,758.2 523.1,798.4 526.8,796.6 528.7,824.6 531.5,843.4 536.2,839.6 539.0,849.0 543.7,813.4 547.4,819.0 551.2,849.0 554.9,819.0 559.6,824.6 563.3,847.1 567.1,858.3 571.8,853.7 575.5,859.3 578.8,851.3 582.0,843.4 586.7,858.3 589.5,856.5 592.3,854.6 596.1,852.7 599.8,850.8 602.6,851.8 605.4,852.7 609.2,843.4 612.9,846.2 616.7,849.0 620.4,843.4 623.7,841.2 627.0,843.4 630.2,826.0 633.5,808.7 637.3,813.4 640.1,811.1 642.9,808.7 646.6,823.7 650.4,838.7 654.1,836.5 657.9,838.7 661.1,838.5 664.4,834.0 668.2,843.4 671.9,834.0 675.6,831.8 679.4,834.0 682.2,840.5 685.0,847.1 687.8,853.7 690.6,846.3 693.4,843.4 698.1,858.3 700.9,857.1 703.7,855.8 706.5,854.6 710.3,859.3 713.1,859.3 715.9,859.3 718.7,857.1 721.5,857.1 724.3,859.3 727.1,859.3 729.9,851.9 732.7,849.0 735.5,842.1 738.4,839.6 741.2,841.8 744.0,839.6 746.8,842.1 749.6,849.0 752.7,849.0 755.8,849.0 758.9,849.0 763.6,839.6 766.7,844.3 769.7,849.0 773.4,843.4 778.1,843.4 782.8,829.3 787.5,843.4 790.7,843.4 794.0,843.4 798.7,808.7 802.4,811.5 805.2,800.3 808.1,789.1 810.9,764.7 813.7,745.1 817.4,747.9 820.2,740.4 823.0,732.9 826.8,736.7 831.5,708.6 835.2,722.6 838.9,718.9 843.6,734.8 846.4,744.1 849.2,753.5 853.9,724.5 858.6,718.9 862.3,729.2 867.0,758.2 871.7,724.5 875.4,732.9 878.3,728.2 881.1,723.5 883.9,713.3 887.6,729.2 890.4,716.1 893.2,759.1 896.5,778.2 899.8,792.8 903.5,808.3 907.3,823.7 910.1,818.6 912.9,813.4 916.6,808.7 921.3,827.4 926.0,779.7 928.8,788.6 931.6,797.5 935.3,789.1 939.1,803.1 942.8,779.7 945.6,762.9 948.5,748.2 951.3,729.2 955.0,753.5 959.7,743.2 963.0,751.0 966.2,754.4 970.9,729.2 974.7,758.2 978.4,729.2 982.1,719.8 986.8,744.1 989.6,745.9 992.4,743.2 996.2,709.5 999.0,732.9 1001.8,768.5 1006.5,754.4 1010.2,778.8 1013.0,777.0 1015.8,779.7 1019.6,789.1 1022.7,791.6 1025.8,796.3 1028.9,796.6 1032.2,802.6 1035.5,808.7 1039.7,808.7 1044.4,828.4 1049.0,823.7 1051.8,833.1 1055.6,824.6 1058.4,834.0 1063.1,804.0 1065.9,790.0 1068.7,799.2 1071.5,804.0 1076.2,798.4 1079.9,804.0 1082.7,781.6 1085.5,759.1 1088.4,751.2 1091.2,743.2 1094.9,738.5 1097.7,731.6 1100.5,729.2 1103.3,732.1 1106.1,739.5 1109.9,762.9 1112.7,760.5 1115.5,758.2 1119.2,753.5 1123.0,758.2 1125.8,739.5 1130.5,755.4 1134.2,751.6 1137.0,768.5 1140.8,764.7 1145.4,790.9 1148.7,802.6 1152.0,814.3 1155.3,794.7 1158.5,775.0 1162.3,775.0 1165.1,781.4 1167.9,783.5 1170.7,785.0 1173.5,790.9 1176.8,801.2 1180.1,811.5 1183.4,822.8 1186.6,834.0 1189.4,836.2 1192.2,834.0 1195.1,812.1 1197.9,794.7 1201.1,806.2 1204.4,813.4 1207.2,809.2 1210.0,805.0 1214.7,787.2 1217.5,776.0 1220.3,764.7 1223.1,752.2 1225.9,744.1 1230.6,669.3 1234.4,688.0 1237.2,674.9 1240.9,693.6 1243.7,703.0 1246.5,693.6 1249.3,710.8 1252.1,723.5 1255.0,731.6 1257.8,744.1 1258.7,763.8 1263.4,733.8 1266.2,734.8 1270.9,757.2 1274.6,762.9 1278.4,776.0 1282.1,790.9 1285.8,790.6 1289.6,794.7 1293.3,799.4 1297.1,804.0 1300.8,809.7 1303.6,816.8 1306.4,828.4 1308.7,828.4 1311.6,826.5 1314.4,824.6 1317.2,830.9 1320.0,834.9 1322.8,843.4 1325.6,843.4 1328.4,843.4 1333.1,784.4 1336.8,792.8 1340.6,774.1 1344.3,789.1 1349.0,798.4 1352.3,763.9 1355.5,733.8 1357.4,708.6 1360.2,688.9 1364.0,737.6 1367.7,748.8 1371.5,724.5 1374.3,732.9 1376.1,748.8 1378.9,718.9 1381.8,688.9 1384.6,704.8 1388.3,759.1 1393.0,729.2 1397.7,729.2 1401.4,763.8 1405.1,739.5 1409.8,739.5 1413.6,753.5 1417.3,798.4 1421.1,792.8 1423.9,794.8 1426.7,801.2 1429.5,809.5 1432.3,813.4 1436.0,804.0 1438.8,811.2 1441.7,822.8 1444.5,827.8 1447.3,828.4 1451.0,827.4 1454.8,826.5 1458.0,827.4 1461.3,828.4 1464.6,796.4 1467.9,760.1 1471.6,789.5 1475.3,819.0 1479.1,829.0 1482.8,843.4 1486.6,836.2 1490.3,824.6 1493.1,824.6 1497.8,838.7 1500.6,837.3 1503.4,835.9 1507.2,844.8 1510.9,853.7 1514.2,853.8 1517.5,858.3 1521.2,839.6 1525.9,843.4 1529.2,843.4 1532.4,841.2 1535.7,845.6 1539.0,843.4 1542.7,853.7 1545.5,849.0 1548.4,844.3 1552.1,846.0 1555.8,843.4 1559.6,853.7 1563.3,844.3 1566.1,861.0 1568.9,873.3 1571.8,866.0 1574.6,863.0 1578.7,849.0 1583.4,823.7 1588.1,832.1 1592.8,843.4 1596.5,849.1 1600.3,859.3 1603.5,856.5 1606.8,853.7 1609.6,852.6 1612.4,847.1 1615.7,849.9 1619.0,852.7 1621.8,838.7 1626.5,850.8 1631.2,856.5 1634.9,849.0 1638.6,858.7 1642.4,863.9 1645.2,859.3 1648.0,854.6 1650.8,858.8 1653.6,863.0 1656.4,860.7 1659.2,858.3 1662.4,859.9 1665.5,861.5 1668.6,863.0 1671.4,858.5 1674.2,858.3 1677.0,851.1 1679.8,848.3 1682.6,843.4 1687.3,852.7 1690.4,851.5 1693.6,852.4 1696.7,849.0 1700.4,847.7 1704.2,850.8 1708.8,839.6 1712.1,844.3 1715.4,849.0 1719.1,848.5 1722.9,848.0 1725.7,842.3 1728.5,841.0 1731.3,837.5 1734.1,834.0 1736.9,838.2 1739.7,842.4 1742.5,827.3 1745.3,807.8 1749.1,799.4 1751.9,787.3 1754.7,779.7 1758.5,741.9 1762.2,708.6 1765.9,694.5 1768.7,714.2 1771.6,733.8 1776.2,717.9 1779.5,705.6 1782.8,688.9 1786.5,695.5 1789.3,707.2 1792.1,718.9 1795.0,722.9 1797.8,722.6 1802.4,719.8 1806.2,706.7 1810.9,699.2 1813.7,704.8 1816.5,710.4 1819.3,724.5 1822.1,738.5 1824.9,755.7 1827.7,768.5 1830.5,756.9 1833.3,749.8 1837.1,767.1 1840.8,784.4 1844.6,783.5 1850.1,815.3 1853.4,819.0 1856.2,819.9 1859.0,827.5 1861.8,828.4 1865.6,818.1 1869.3,819.0 1873.1,809.7 1877.8,819.0 1881.0,801.7 1884.3,784.4 1887.1,786.7 1889.9,789.1 1892.7,771.3 1895.5,753.5 1898.4,741.2 1901.2,724.5 1904.4,714.2 1907.7,703.9 1912.4,712.3 1914.3,709.5 1918.9,727.3 1921.8,733.5 1924.6,744.1 1927.4,729.2 1931.1,748.8 1933.9,731.6 1936.7,718.9 1940.5,731.0 1943.3,732.3 1946.1,729.2 1950.8,759.1 1954.0,762.4 1957.3,765.7 1962.0,779.7 1964.8,782.5 1967.6,787.5 1970.4,794.7 1973.2,797.8 1976.0,796.6 1979.8,802.2 1983.5,807.8 1987.3,820.0 1991.0,822.0 1994.8,828.4 1998.5,821.8 2001.3,817.5 2004.1,808.7 2007.9,809.7 2011.6,789.1 2016.3,784.4" fill="none" stroke="#2e78c4" stroke-width="1.9" stroke-linejoin="round"/><line x1="498.5" y1="351.8" x2="498.5" y2="904.9" stroke="#555555" stroke-width="1.4"/><line x1="497.7" y1="904.1" x2="2126.1400000000003" y2="904.1" stroke="#606060" stroke-width="1.5"/><line x1="498.5" y1="904.1" x2="514.5" y2="904.1" stroke="#4a4a4a" stroke-width="1.5"/><line x1="498.5" y1="829.0" x2="514.5" y2="829.0" stroke="#4a4a4a" stroke-width="1.5"/><line x1="498.5" y1="753.9" x2="514.5" y2="753.9" stroke="#4a4a4a" stroke-width="1.5"/><line x1="498.5" y1="678.9" x2="514.5" y2="678.9" stroke="#4a4a4a" stroke-width="1.5"/><line x1="498.5" y1="603.8" x2="514.5" y2="603.8" stroke="#4a4a4a" stroke-width="1.5"/><line x1="498.5" y1="528.7" x2="514.5" y2="528.7" stroke="#4a4a4a" stroke-width="1.5"/><line x1="498.5" y1="453.6" x2="514.5" y2="453.6" stroke="#4a4a4a" stroke-width="1.5"/><line x1="498.5" y1="378.5" x2="514.5" y2="378.5" stroke="#4a4a4a" stroke-width="1.5"/><line x1="498.5" y1="904.1" x2="498.5" y2="888.1" stroke="#4a4a4a" stroke-width="1.5"/><line x1="634.1" y1="904.1" x2="634.1" y2="888.1" stroke="#4a4a4a" stroke-width="1.5"/><line x1="769.6" y1="904.1" x2="769.6" y2="888.1" stroke="#4a4a4a" stroke-width="1.5"/><line x1="905.2" y1="904.1" x2="905.2" y2="888.1" stroke="#4a4a4a" stroke-width="1.5"/><line x1="1040.8" y1="904.1" x2="1040.8" y2="888.1" stroke="#4a4a4a" stroke-width="1.5"/><line x1="1176.3" y1="904.1" x2="1176.3" y2="888.1" stroke="#4a4a4a" stroke-width="1.5"/><line x1="1311.9" y1="904.1" x2="1311.9" y2="888.1" stroke="#4a4a4a" stroke-width="1.5"/><line x1="1447.5" y1="904.1" x2="1447.5" y2="888.1" stroke="#4a4a4a" stroke-width="1.5"/><line x1="1583.1" y1="904.1" x2="1583.1" y2="888.1" stroke="#4a4a4a" stroke-width="1.5"/><line x1="1718.6" y1="904.1" x2="1718.6" y2="888.1" stroke="#4a4a4a" stroke-width="1.5"/><line x1="1854.2" y1="904.1" x2="1854.2" y2="888.1" stroke="#4a4a4a" stroke-width="1.5"/><line x1="1989.8" y1="904.1" x2="1989.8" y2="888.1" stroke="#4a4a4a" stroke-width="1.5"/><line x1="2125.3" y1="904.1" x2="2125.3" y2="888.1" stroke="#4a4a4a" stroke-width="1.5"/><rect x="519.3" y="363.5" width="330.9" height="98.1" fill="#ffffff" stroke="#858585" stroke-width="1.6"/><rect x="524.5" y="373" width="55.5" height="15" fill="#e3e3e3"/><line x1="524.5" y1="405.5" x2="578" y2="405.5" stroke="#a51d3a" stroke-width="2.2" stroke-dasharray="7.5 6.5"/><line x1="524.5" y1="427.3" x2="580" y2="427.3" stroke="#7b7b7b" stroke-width="2.2"/><line x1="524.5" y1="448.5" x2="580" y2="448.5" stroke="#2e78c4" stroke-width="2.5"/></svg><div class="abs" style="left:-110.7px;width:600px;text-align:right;top:895.5px;font-size:18px;line-height:18px;font-weight:400;color:#262626;">0</div>
<div class="abs" style="left:-110.7px;width:600px;text-align:right;top:820.4px;font-size:18px;line-height:18px;font-weight:400;color:#262626;">20</div>
<div class="abs" style="left:-110.7px;width:600px;text-align:right;top:745.3px;font-size:18px;line-height:18px;font-weight:400;color:#262626;">40</div>
<div class="abs" style="left:-110.7px;width:600px;text-align:right;top:670.2px;font-size:18px;line-height:18px;font-weight:400;color:#262626;">60</div>
<div class="abs" style="left:-110.7px;width:600px;text-align:right;top:595.1px;font-size:18px;line-height:18px;font-weight:400;color:#262626;">80</div>
<div class="abs" style="left:-110.7px;width:600px;text-align:right;top:520.1px;font-size:18px;line-height:18px;font-weight:400;color:#262626;">100</div>
<div class="abs" style="left:-110.7px;width:600px;text-align:right;top:445.0px;font-size:18px;line-height:18px;font-weight:400;color:#262626;">120</div>
<div class="abs" style="left:-110.7px;width:600px;text-align:right;top:369.9px;font-size:18px;line-height:18px;font-weight:400;color:#262626;">140</div>
<div class="abs" style="left:198.5px;width:600px;text-align:center;top:914.7px;font-size:18px;line-height:18px;font-weight:400;color:#262626;">Feb 01</div>
<div class="abs" style="left:334.1px;width:600px;text-align:center;top:914.7px;font-size:18px;line-height:18px;font-weight:400;color:#262626;">Feb 02</div>
<div class="abs" style="left:469.6px;width:600px;text-align:center;top:914.7px;font-size:18px;line-height:18px;font-weight:400;color:#262626;">Feb 03</div>
<div class="abs" style="left:605.2px;width:600px;text-align:center;top:914.7px;font-size:18px;line-height:18px;font-weight:400;color:#262626;">Feb 04</div>
<div class="abs" style="left:740.8px;width:600px;text-align:center;top:914.7px;font-size:18px;line-height:18px;font-weight:400;color:#262626;">Feb 05</div>
<div class="abs" style="left:876.3px;width:600px;text-align:center;top:914.7px;font-size:18px;line-height:18px;font-weight:400;color:#262626;">Feb 06</div>
<div class="abs" style="left:1011.9px;width:600px;text-align:center;top:914.7px;font-size:18px;line-height:18px;font-weight:400;color:#262626;">Feb 07</div>
<div class="abs" style="left:1147.5px;width:600px;text-align:center;top:914.7px;font-size:18px;line-height:18px;font-weight:400;color:#262626;">Feb 08</div>
<div class="abs" style="left:1283.1px;width:600px;text-align:center;top:914.7px;font-size:18px;line-height:18px;font-weight:400;color:#262626;">Feb 09</div>
<div class="abs" style="left:1418.6px;width:600px;text-align:center;top:914.7px;font-size:18px;line-height:18px;font-weight:400;color:#262626;">Feb 10</div>
<div class="abs" style="left:1554.2px;width:600px;text-align:center;top:914.7px;font-size:18px;line-height:18px;font-weight:400;color:#262626;">Feb 11</div>
<div class="abs" style="left:1689.8px;width:600px;text-align:center;top:914.7px;font-size:18px;line-height:18px;font-weight:400;color:#262626;">Feb 12</div>
<div class="abs" style="left:1825.3px;width:600px;text-align:center;top:914.7px;font-size:18px;line-height:18px;font-weight:400;color:#262626;">Feb 13</div>
<div class="abs" style="left:1011.9px;width:600px;text-align:center;top:940.3px;font-size:20px;line-height:20px;font-weight:400;color:#262626;">Tijd [-]</div>
<div class="abs" style="left:1788.0px;width:600px;text-align:center;top:942.3px;font-size:18px;line-height:18px;font-weight:400;color:#262626;">2025</div>
<div class="abs" style="left:291.5px;top:618px;width:300px;height:20px;line-height:20px;text-align:center;font-size:20.5px;color:#262626;transform:rotate(-90deg)">Stroom [kW]</div><div class="abs" style="left:584.7px;top:370.5px;font-size:16.8px;line-height:16.8px;font-weight:400;color:#111111;">Voorspellings-bandbreedte (±3<i>σ</i><sub style="font-size:13px;vertical-align:-5px">err</sub>)</div>
<div class="abs" style="left:584.7px;top:399.4px;font-size:16.8px;line-height:16.8px;font-weight:400;color:#111111;">Netaansluiting</div>
<div class="abs" style="left:584.7px;top:420.7px;font-size:16.8px;line-height:16.8px;font-weight:400;color:#111111;">Voorspelling</div>
<div class="abs" style="left:584.7px;top:442.4px;font-size:16.8px;line-height:16.8px;font-weight:400;color:#111111;">Meting</div>
<svg style="position:absolute;left:0;top:0" width="2226" height="1666" viewBox="0 0 2226 1666"><defs><clipPath id="c2clip"><rect x="497.4" y="1064.6" width="1616.4" height="468.8"/></clipPath></defs><line x1="497.4" y1="1515.5" x2="2113.8" y2="1515.5" stroke="#bcbcbc" stroke-opacity="0.6" stroke-width="1.0" stroke-dasharray="1.5 1.5"/><line x1="497.4" y1="1497.7" x2="2113.8" y2="1497.7" stroke="#bcbcbc" stroke-opacity="0.6" stroke-width="1.0" stroke-dasharray="1.5 1.5"/><line x1="497.4" y1="1479.8" x2="2113.8" y2="1479.8" stroke="#bcbcbc" stroke-opacity="0.6" stroke-width="1.0" stroke-dasharray="1.5 1.5"/><line x1="497.4" y1="1461.9" x2="2113.8" y2="1461.9" stroke="#d2d2d2" stroke-opacity="0.6" stroke-width="1.4"/><line x1="497.4" y1="1444.0" x2="2113.8" y2="1444.0" stroke="#bcbcbc" stroke-opacity="0.6" stroke-width="1.0" stroke-dasharray="1.5 1.5"/><line x1="497.4" y1="1426.2" x2="2113.8" y2="1426.2" stroke="#bcbcbc" stroke-opacity="0.6" stroke-width="1.0" stroke-dasharray="1.5 1.5"/><line x1="497.4" y1="1408.3" x2="2113.8" y2="1408.3" stroke="#bcbcbc" stroke-opacity="0.6" stroke-width="1.0" stroke-dasharray="1.5 1.5"/><line x1="497.4" y1="1390.4" x2="2113.8" y2="1390.4" stroke="#d2d2d2" stroke-opacity="0.6" stroke-width="1.4"/><line x1="497.4" y1="1372.5" x2="2113.8" y2="1372.5" stroke="#bcbcbc" stroke-opacity="0.6" stroke-width="1.0" stroke-dasharray="1.5 1.5"/><line x1="497.4" y1="1354.7" x2="2113.8" y2="1354.7" stroke="#bcbcbc" stroke-opacity="0.6" stroke-width="1.0" stroke-dasharray="1.5 1.5"/><line x1="497.4" y1="1336.8" x2="2113.8" y2="1336.8" stroke="#bcbcbc" stroke-opacity="0.6" stroke-width="1.0" stroke-dasharray="1.5 1.5"/><line x1="497.4" y1="1318.9" x2="2113.8" y2="1318.9" stroke="#d2d2d2" stroke-opacity="0.6" stroke-width="1.4"/><line x1="497.4" y1="1301.0" x2="2113.8" y2="1301.0" stroke="#bcbcbc" stroke-opacity="0.6" stroke-width="1.0" stroke-dasharray="1.5 1.5"/><line x1="497.4" y1="1283.2" x2="2113.8" y2="1283.2" stroke="#bcbcbc" stroke-opacity="0.6" stroke-width="1.0" stroke-dasharray="1.5 1.5"/><line x1="497.4" y1="1265.3" x2="2113.8" y2="1265.3" stroke="#bcbcbc" stroke-opacity="0.6" stroke-width="1.0" stroke-dasharray="1.5 1.5"/><line x1="497.4" y1="1247.4" x2="2113.8" y2="1247.4" stroke="#d2d2d2" stroke-opacity="0.6" stroke-width="1.4"/><line x1="497.4" y1="1229.5" x2="2113.8" y2="1229.5" stroke="#bcbcbc" stroke-opacity="0.6" stroke-width="1.0" stroke-dasharray="1.5 1.5"/><line x1="497.4" y1="1211.7" x2="2113.8" y2="1211.7" stroke="#bcbcbc" stroke-opacity="0.6" stroke-width="1.0" stroke-dasharray="1.5 1.5"/><line x1="497.4" y1="1193.8" x2="2113.8" y2="1193.8" stroke="#bcbcbc" stroke-opacity="0.6" stroke-width="1.0" stroke-dasharray="1.5 1.5"/><line x1="497.4" y1="1175.9" x2="2113.8" y2="1175.9" stroke="#d2d2d2" stroke-opacity="0.6" stroke-width="1.4"/><line x1="497.4" y1="1158.0" x2="2113.8" y2="1158.0" stroke="#bcbcbc" stroke-opacity="0.6" stroke-width="1.0" stroke-dasharray="1.5 1.5"/><line x1="497.4" y1="1140.2" x2="2113.8" y2="1140.2" stroke="#bcbcbc" stroke-opacity="0.6" stroke-width="1.0" stroke-dasharray="1.5 1.5"/><line x1="497.4" y1="1122.3" x2="2113.8" y2="1122.3" stroke="#bcbcbc" stroke-opacity="0.6" stroke-width="1.0" stroke-dasharray="1.5 1.5"/><line x1="497.4" y1="1104.4" x2="2113.8" y2="1104.4" stroke="#d2d2d2" stroke-opacity="0.6" stroke-width="1.4"/><line x1="497.4" y1="1086.5" x2="2113.8" y2="1086.5" stroke="#bcbcbc" stroke-opacity="0.6" stroke-width="1.0" stroke-dasharray="1.5 1.5"/><line x1="497.4" y1="1068.7" x2="2113.8" y2="1068.7" stroke="#bcbcbc" stroke-opacity="0.6" stroke-width="1.0" stroke-dasharray="1.5 1.5"/><line x1="728.3" y1="1064.6" x2="728.3" y2="1533.4" stroke="#d2d2d2" stroke-opacity="0.55" stroke-width="1.3"/><line x1="959.2" y1="1064.6" x2="959.2" y2="1533.4" stroke="#d2d2d2" stroke-opacity="0.55" stroke-width="1.3"/><line x1="1190.1" y1="1064.6" x2="1190.1" y2="1533.4" stroke="#d2d2d2" stroke-opacity="0.55" stroke-width="1.3"/><line x1="1421.0" y1="1064.6" x2="1421.0" y2="1533.4" stroke="#d2d2d2" stroke-opacity="0.55" stroke-width="1.3"/><line x1="1651.9" y1="1064.6" x2="1651.9" y2="1533.4" stroke="#d2d2d2" stroke-opacity="0.55" stroke-width="1.3"/><line x1="1882.9" y1="1064.6" x2="1882.9" y2="1533.4" stroke="#d2d2d2" stroke-opacity="0.55" stroke-width="1.3"/><line x1="2113.8" y1="1064.6" x2="2113.8" y2="1533.4" stroke="#d2d2d2" stroke-opacity="0.55" stroke-width="1.3"/><g clip-path="url(#c2clip)"><polyline points="497.4,1456.6 501.4,1460.8 505.4,1454.1 509.4,1456.6 513.4,1456.1 517.4,1453.2 521.4,1456.1 525.4,1458.8 529.4,1461.6 533.4,1462.8 537.4,1464.0 541.4,1465.2 545.4,1472.0 549.4,1467.0 553.4,1467.3 557.4,1469.9 561.4,1477.6 565.4,1478.6 569.4,1476.7 573.4,1484.4 577.4,1476.5 581.4,1482.8 585.4,1478.6 589.4,1470.2 593.4,1460.6 597.4,1458.6 601.4,1464.3 605.4,1455.3 609.4,1455.7 613.4,1457.7 617.4,1451.9 621.4,1449.6 625.4,1441.4 629.4,1437.4 633.4,1433.7 637.4,1438.6 641.4,1433.4 645.4,1426.2 649.4,1429.9 653.4,1428.4 657.4,1426.2 661.4,1433.9 665.4,1442.5 669.4,1433.5 673.4,1440.3 677.4,1442.8 681.4,1457.9 685.4,1467.7 689.4,1460.7 693.4,1480.4 697.4,1468.6 701.4,1468.3 705.4,1477.2 709.4,1471.3 713.4,1471.1 717.4,1460.6 721.4,1463.3 725.4,1467.7 729.4,1468.2 733.4,1475.4 737.4,1471.6 741.4,1476.0 745.4,1478.2 749.4,1480.2 753.4,1480.1 757.4,1485.4 761.4,1488.0 765.4,1486.4 769.4,1485.8 773.4,1481.5 777.4,1482.1 781.4,1481.0 785.4,1477.3 789.4,1472.4 793.4,1461.8 797.4,1452.0 801.4,1447.6 805.4,1434.4 809.4,1428.6 813.4,1419.7 817.4,1407.1 821.4,1377.0 825.4,1389.9 829.4,1365.2 833.4,1347.4 837.4,1338.3 841.4,1363.3 845.4,1344.1 849.4,1345.5 853.4,1346.4 857.4,1362.9 861.4,1377.4 865.4,1393.2 869.4,1383.7 873.4,1380.6 877.4,1375.2 881.4,1393.5 885.4,1408.6 889.4,1400.0 893.4,1390.8 897.4,1382.7 901.4,1378.0 905.4,1385.3 909.4,1396.9 913.4,1393.2 917.4,1378.4 921.4,1381.0 925.4,1383.5 929.4,1388.8 933.4,1405.3 937.4,1413.7 941.4,1418.0 945.4,1425.3 949.4,1434.6 953.4,1425.8 957.4,1440.9 961.4,1452.0 965.4,1463.7 969.4,1469.6 973.4,1468.7 977.4,1467.8 981.4,1460.8 985.4,1459.2 989.4,1446.0 993.4,1428.8 997.4,1413.5 1001.4,1403.3 1005.4,1400.1 1009.4,1396.9 1013.4,1393.7 1017.4,1388.7 1021.4,1383.0 1025.4,1377.3 1029.4,1372.3 1033.4,1380.8 1037.4,1380.6 1041.4,1363.4 1045.4,1353.7 1049.4,1349.0 1053.4,1344.0 1057.4,1339.0 1061.4,1349.0 1065.4,1369.3 1069.4,1367.7 1073.4,1368.9 1077.4,1354.1 1081.4,1339.1 1085.4,1340.7 1089.4,1342.3 1093.4,1355.6 1097.4,1343.7 1101.4,1342.1 1105.4,1356.2 1109.4,1356.1 1113.4,1343.4 1117.4,1349.6 1121.4,1348.5 1125.4,1354.2 1129.4,1375.7 1133.4,1395.8 1137.4,1410.2 1141.4,1406.0 1145.4,1405.2 1149.4,1393.8 1153.4,1407.9 1157.4,1410.9 1161.4,1422.9 1165.4,1415.9 1169.4,1408.5 1173.4,1421.5 1177.4,1437.6 1181.4,1449.7 1185.4,1458.8 1189.4,1466.6 1193.4,1473.0 1197.4,1471.4 1201.4,1473.2 1205.4,1472.4 1209.4,1465.7 1213.4,1456.2 1217.4,1447.5 1221.4,1436.5 1225.4,1431.8 1229.4,1431.6 1233.4,1428.7 1237.4,1439.3 1241.4,1452.5 1245.4,1464.4 1249.4,1462.0 1253.4,1457.3 1257.4,1445.6 1261.4,1429.7 1265.4,1415.5 1269.4,1418.3 1273.4,1428.7 1277.4,1437.0 1281.4,1434.6 1285.4,1438.6 1289.4,1449.1 1293.4,1432.4 1297.4,1436.7 1301.4,1448.8 1305.4,1450.5 1309.4,1447.0 1313.4,1443.0 1317.4,1433.2 1321.4,1435.3 1325.4,1431.9 1329.4,1437.8 1333.4,1439.0 1337.4,1437.4 1341.4,1433.9 1345.4,1436.0 1349.4,1432.8 1353.4,1423.6 1357.4,1416.6 1361.4,1416.1 1365.4,1429.1 1369.4,1440.7 1373.4,1442.3 1377.4,1450.8 1381.4,1456.6 1385.4,1458.6 1389.4,1458.5 1393.4,1461.9 1397.4,1459.6 1401.4,1455.2 1405.4,1465.5 1409.4,1470.3 1413.4,1471.6 1417.4,1476.1 1421.4,1475.8 1425.4,1477.0 1429.4,1477.4 1433.4,1475.6 1437.4,1474.4 1441.4,1473.0 1445.4,1468.8 1449.4,1462.1 1453.4,1450.6 1457.4,1444.6 1461.4,1434.3 1465.4,1445.6 1469.4,1445.2 1473.4,1445.4 1477.4,1446.7 1481.4,1453.3 1485.4,1447.6 1489.4,1449.4 1493.4,1443.3 1497.4,1440.6 1501.4,1438.6 1505.4,1425.5 1509.4,1419.4 1513.4,1405.2 1517.4,1380.3 1521.4,1398.1 1525.4,1382.0 1529.4,1381.7 1533.4,1392.8 1537.4,1399.6 1541.4,1396.5 1545.4,1398.0 1549.4,1400.0 1553.4,1404.1 1557.4,1384.1 1561.4,1384.9 1565.4,1374.6 1569.4,1364.0 1573.4,1373.8 1577.4,1376.8 1581.4,1381.9 1585.4,1394.6 1589.4,1409.9 1593.4,1415.9 1597.4,1427.6 1601.4,1436.7 1605.4,1445.8 1609.4,1457.2 1613.4,1456.0 1617.4,1455.9 1621.4,1455.0 1625.4,1464.1 1629.4,1468.7 1633.4,1477.6 1637.4,1478.0 1641.4,1473.5 1645.4,1475.2 1649.4,1478.6 1653.4,1478.7 1657.4,1473.2 1661.4,1468.5 1665.4,1468.4 1669.4,1464.6 1673.4,1463.6 1677.4,1450.2 1681.4,1449.0 1685.4,1446.0 1689.4,1445.3 1693.4,1433.3 1697.4,1436.3 1701.4,1440.6 1705.4,1432.0 1709.4,1435.4 1713.4,1443.0 1717.4,1437.1 1721.4,1441.5 1725.4,1437.0 1729.4,1434.6 1733.4,1442.5 1737.4,1440.5 1741.4,1431.2 1745.4,1427.4 1749.4,1427.2 1753.4,1423.8 1757.4,1416.7 1761.4,1412.7 1765.4,1421.7 1769.4,1411.9 1773.4,1416.6 1777.4,1415.9 1781.4,1388.8 1785.4,1374.7 1789.4,1380.0 1793.4,1381.7 1797.4,1353.9 1801.4,1382.5 1805.4,1396.9 1809.4,1413.7 1813.4,1404.4 1817.4,1394.0 1821.4,1373.3 1825.4,1397.5 1829.4,1391.6 1833.4,1375.6 1837.4,1377.4 1841.4,1403.8 1845.4,1422.3 1849.4,1413.8 1853.4,1400.1 1857.4,1418.2 1861.4,1422.2 1865.4,1434.4 1869.4,1423.6 1873.4,1414.2 1877.4,1426.7 1881.4,1429.6 1885.4,1420.9 1889.4,1437.3 1893.4,1444.2 1897.4,1454.6 1901.4,1437.2 1905.4,1443.4 1909.4,1415.6 1913.4,1416.9 1917.4,1411.2 1921.4,1411.6 1925.4,1418.6 1929.4,1438.0 1933.4,1437.3 1937.4,1432.7 1941.4,1441.2 1945.4,1440.6 1949.4,1435.2 1953.4,1433.2 1957.4,1431.2 1961.4,1429.3 1965.4,1427.3 1969.4,1429.2 1973.4,1440.2 1977.4,1434.8 1981.4,1436.8 1985.4,1433.1 1989.4,1429.1 1993.4,1425.1 1997.4,1421.1 2001.4,1417.9 2005.4,1426.7 2009.4,1427.3 2013.4,1411.9 2017.4,1409.8 2021.4,1427.4 2025.4,1405.4 2029.4,1418.6 2033.4,1412.5 2037.4,1416.1 2041.4,1437.4 2045.4,1437.9 2049.4,1444.0 2053.4,1455.9 2057.4,1476.8 2061.4,1473.9 2065.4,1486.9 2069.4,1492.6 2073.4,1494.2 2077.4,1493.8 2081.4,1492.2 2085.4,1479.9 2089.4,1469.9 2093.4,1458.5 2097.4,1464.4 2101.4,1457.8 2105.4,1453.0 2109.4,1453.0 2113.4,1457.6" fill="none" stroke="#8c8c8c" stroke-opacity="0.17" stroke-width="1.3"/><polyline points="497.4,1473.8 501.4,1474.1 505.4,1471.7 509.4,1473.6 513.4,1469.6 517.4,1472.2 521.4,1470.3 525.4,1481.8 529.4,1491.4 533.4,1492.0 537.4,1488.5 541.4,1494.6 545.4,1493.4 549.4,1492.7 553.4,1484.7 557.4,1483.0 561.4,1482.1 565.4,1481.8 569.4,1476.8 573.4,1476.5 577.4,1467.5 581.4,1465.6 585.4,1464.6 589.4,1462.6 593.4,1460.6 597.4,1458.6 601.4,1456.9 605.4,1455.3 609.4,1455.8 613.4,1455.0 617.4,1459.3 621.4,1461.2 625.4,1466.1 629.4,1478.2 633.4,1473.3 637.4,1465.7 641.4,1486.0 645.4,1470.0 649.4,1480.2 653.4,1486.0 657.4,1465.0 661.4,1478.1 665.4,1493.6 669.4,1496.2 673.4,1498.3 677.4,1499.7 681.4,1496.2 685.4,1496.1 689.4,1495.8 693.4,1498.7 697.4,1501.6 701.4,1504.8 705.4,1505.6 709.4,1505.6 713.4,1505.5 717.4,1505.5 721.4,1502.2 725.4,1494.8 729.4,1488.5 733.4,1486.8 737.4,1481.4 741.4,1485.7 745.4,1486.0 749.4,1487.2 753.4,1488.1 757.4,1489.1 761.4,1489.0 765.4,1484.8 769.4,1484.8 773.4,1485.3 777.4,1484.5 781.4,1482.9 785.4,1476.2 789.4,1463.4 793.4,1457.6 797.4,1446.2 801.4,1431.9 805.4,1411.8 809.4,1414.1 813.4,1398.7 817.4,1409.0 821.4,1417.1 825.4,1414.2 829.4,1408.9 833.4,1405.7 837.4,1409.9 841.4,1421.6 845.4,1430.8 849.4,1436.9 853.4,1418.6 857.4,1402.6 861.4,1393.1 865.4,1398.9 869.4,1393.6 873.4,1396.4 877.4,1376.0 881.4,1358.2 885.4,1351.7 889.4,1361.5 893.4,1372.2 897.4,1382.2 901.4,1380.0 905.4,1388.9 909.4,1394.6 913.4,1400.2 917.4,1390.1 921.4,1409.9 925.4,1400.3 929.4,1417.8 933.4,1430.8 937.4,1419.0 941.4,1421.6 945.4,1434.7 949.4,1451.6 953.4,1454.6 957.4,1451.9 961.4,1446.8 965.4,1461.9 969.4,1456.0 973.4,1459.3 977.4,1453.4 981.4,1455.2 985.4,1458.9 989.4,1446.6 993.4,1442.4 997.4,1440.0 1001.4,1449.0 1005.4,1453.5 1009.4,1446.6 1013.4,1455.0 1017.4,1453.5 1021.4,1442.4 1025.4,1418.9 1029.4,1412.1 1033.4,1405.1 1037.4,1394.1 1041.4,1376.9 1045.4,1366.9 1049.4,1355.4 1053.4,1364.2 1057.4,1339.3 1061.4,1345.1 1065.4,1358.9 1069.4,1343.7 1073.4,1362.8 1077.4,1375.2 1081.4,1395.2 1085.4,1385.7 1089.4,1378.7 1093.4,1372.8 1097.4,1388.2 1101.4,1390.0 1105.4,1384.4 1109.4,1381.6 1113.4,1373.5 1117.4,1361.6 1121.4,1352.4 1125.4,1368.5 1129.4,1366.3 1133.4,1388.1 1137.4,1383.5 1141.4,1378.2 1145.4,1383.0 1149.4,1377.3 1153.4,1379.8 1157.4,1401.9 1161.4,1418.7 1165.4,1429.8 1169.4,1433.2 1173.4,1446.0 1177.4,1458.1 1181.4,1461.2 1185.4,1467.4 1189.4,1461.4 1193.4,1468.0 1197.4,1470.0 1201.4,1475.2 1205.4,1479.1 1209.4,1475.9 1213.4,1467.7 1217.4,1470.1 1221.4,1458.6 1225.4,1451.6 1229.4,1440.8 1233.4,1434.1 1237.4,1440.3 1241.4,1453.2 1245.4,1448.5 1249.4,1452.0 1253.4,1449.7 1257.4,1446.7 1261.4,1437.9 1265.4,1423.4 1269.4,1406.4 1273.4,1392.2 1277.4,1406.8 1281.4,1403.8 1285.4,1391.8 1289.4,1401.2 1293.4,1420.8 1297.4,1418.0 1301.4,1404.7 1305.4,1396.8 1309.4,1383.7 1313.4,1378.5 1317.4,1363.6 1321.4,1355.6 1325.4,1354.0 1329.4,1355.1 1333.4,1366.8 1337.4,1374.1 1341.4,1370.0 1345.4,1365.6 1349.4,1365.7 1353.4,1360.0 1357.4,1353.5 1361.4,1348.4 1365.4,1354.4 1369.4,1379.6 1373.4,1370.4 1377.4,1376.7 1381.4,1387.5 1385.4,1405.6 1389.4,1400.3 1393.4,1397.5 1397.4,1399.1 1401.4,1403.1 1405.4,1407.1 1409.4,1423.7 1413.4,1436.8 1417.4,1449.9 1421.4,1440.6 1425.4,1432.6 1429.4,1439.7 1433.4,1450.8 1437.4,1451.8 1441.4,1454.3 1445.4,1436.4 1449.4,1420.2 1453.4,1420.3 1457.4,1424.8 1461.4,1434.4 1465.4,1446.7 1469.4,1444.4 1473.4,1429.6 1477.4,1410.0 1481.4,1408.6 1485.4,1414.9 1489.4,1431.9 1493.4,1429.8 1497.4,1428.9 1501.4,1431.5 1505.4,1427.7 1509.4,1424.6 1513.4,1407.1 1517.4,1413.2 1521.4,1406.9 1525.4,1416.7 1529.4,1418.6 1533.4,1414.1 1537.4,1408.9 1541.4,1407.5 1545.4,1411.7 1549.4,1414.7 1553.4,1399.8 1557.4,1377.9 1561.4,1377.2 1565.4,1379.6 1569.4,1373.6 1573.4,1361.7 1577.4,1368.5 1581.4,1352.8 1585.4,1348.6 1589.4,1350.4 1593.4,1374.5 1597.4,1392.2 1601.4,1416.8 1605.4,1427.0 1609.4,1430.9 1613.4,1423.0 1617.4,1433.8 1621.4,1437.6 1625.4,1431.5 1629.4,1419.9 1633.4,1421.3 1637.4,1427.3 1641.4,1427.8 1645.4,1423.4 1649.4,1427.4 1653.4,1439.2 1657.4,1431.8 1661.4,1417.4 1665.4,1415.4 1669.4,1416.7 1673.4,1425.2 1677.4,1423.1 1681.4,1425.4 1685.4,1423.2 1689.4,1415.5 1693.4,1402.2 1697.4,1408.5 1701.4,1399.1 1705.4,1405.2 1709.4,1388.5 1713.4,1371.1 1717.4,1379.3 1721.4,1363.0 1725.4,1380.7 1729.4,1376.3 1733.4,1356.0 1737.4,1337.1 1741.4,1328.6 1745.4,1334.1 1749.4,1356.9 1753.4,1334.7 1757.4,1327.1 1761.4,1308.3 1765.4,1337.2 1769.4,1315.5 1773.4,1308.7 1777.4,1309.5 1781.4,1310.3 1785.4,1334.3 1789.4,1356.3 1793.4,1371.2 1797.4,1401.2 1801.4,1412.1 1805.4,1404.9 1809.4,1396.4 1813.4,1412.8 1817.4,1420.4 1821.4,1411.2 1825.4,1424.3 1829.4,1428.7 1833.4,1430.9 1837.4,1428.8 1841.4,1412.8 1845.4,1391.9 1849.4,1387.1 1853.4,1382.5 1857.4,1402.4 1861.4,1387.9 1865.4,1412.2 1869.4,1407.3 1873.4,1409.2 1877.4,1426.3 1881.4,1441.0 1885.4,1443.0 1889.4,1433.1 1893.4,1435.8 1897.4,1433.8 1901.4,1440.7 1905.4,1421.5 1909.4,1405.7 1913.4,1408.8 1917.4,1393.4 1921.4,1395.1 1925.4,1408.7 1929.4,1422.3 1933.4,1413.9 1937.4,1414.1 1941.4,1422.1 1945.4,1442.9 1949.4,1440.3 1953.4,1446.5 1957.4,1458.9 1961.4,1453.0 1965.4,1443.7 1969.4,1462.0 1973.4,1466.4 1977.4,1459.1 1981.4,1467.8 1985.4,1461.4 1989.4,1451.5 1993.4,1428.6 1997.4,1436.0 2001.4,1452.2 2005.4,1457.1 2009.4,1476.9 2013.4,1452.2 2017.4,1437.3 2021.4,1433.6 2025.4,1453.9 2029.4,1475.7 2033.4,1469.3 2037.4,1457.1 2041.4,1456.7 2045.4,1459.9 2049.4,1481.2 2053.4,1472.5 2057.4,1486.3 2061.4,1492.3 2065.4,1495.8 2069.4,1498.6 2073.4,1499.7 2077.4,1498.5 2081.4,1497.3 2085.4,1496.0 2089.4,1497.5 2093.4,1493.5 2097.4,1489.5 2101.4,1489.1 2105.4,1479.9 2109.4,1468.2 2113.4,1460.6" fill="none" stroke="#8c8c8c" stroke-opacity="0.14" stroke-width="1.3"/><polyline points="497.4,1472.4 501.4,1476.6 505.4,1483.9 509.4,1485.7 513.4,1484.5 517.4,1481.7 521.4,1485.4 525.4,1490.4 529.4,1489.9 533.4,1485.1 537.4,1483.9 541.4,1486.8 545.4,1490.6 549.4,1494.2 553.4,1497.6 557.4,1499.1 561.4,1495.4 565.4,1497.7 569.4,1495.7 573.4,1496.6 577.4,1495.9 581.4,1498.2 585.4,1496.2 589.4,1494.3 593.4,1488.6 597.4,1479.9 601.4,1487.8 605.4,1489.0 609.4,1484.1 613.4,1480.6 617.4,1491.4 621.4,1492.1 625.4,1486.7 629.4,1493.6 633.4,1495.5 637.4,1500.2 641.4,1497.2 645.4,1497.1 649.4,1499.8 653.4,1502.2 657.4,1505.8 661.4,1501.4 665.4,1499.8 669.4,1498.4 673.4,1494.1 677.4,1497.8 681.4,1498.4 685.4,1502.2 689.4,1500.7 693.4,1504.2 697.4,1503.5 701.4,1500.8 705.4,1503.7 709.4,1505.6 713.4,1501.3 717.4,1502.2 721.4,1503.3 725.4,1498.1 729.4,1493.5 733.4,1489.6 737.4,1486.5 741.4,1484.1 745.4,1484.8 749.4,1486.3 753.4,1484.2 757.4,1475.1 761.4,1469.8 765.4,1471.0 769.4,1459.8 773.4,1451.1 777.4,1438.5 781.4,1443.5 785.4,1433.1 789.4,1403.6 793.4,1385.3 797.4,1371.6 801.4,1362.5 805.4,1357.8 809.4,1338.6 813.4,1331.2 817.4,1334.8 821.4,1322.5 825.4,1313.0 829.4,1310.4 833.4,1334.8 837.4,1321.1 841.4,1329.0 845.4,1325.4 849.4,1325.0 853.4,1344.5 857.4,1367.0 861.4,1357.7 865.4,1339.8 869.4,1352.0 873.4,1340.0 877.4,1322.1 881.4,1345.0 885.4,1345.7 889.4,1361.6 893.4,1360.6 897.4,1379.0 901.4,1384.2 905.4,1376.5 909.4,1361.5 913.4,1371.8 917.4,1385.6 921.4,1406.5 925.4,1393.1 929.4,1399.4 933.4,1397.5 937.4,1400.7 941.4,1397.1 945.4,1401.1 949.4,1405.7 953.4,1422.1 957.4,1414.7 961.4,1418.4 965.4,1430.6 969.4,1445.7 973.4,1441.3 977.4,1437.4 981.4,1448.9 985.4,1455.0 989.4,1446.4 993.4,1429.0 997.4,1431.2 1001.4,1426.7 1005.4,1436.6 1009.4,1439.8 1013.4,1447.4 1017.4,1438.0 1021.4,1444.2 1025.4,1430.3 1029.4,1420.0 1033.4,1424.9 1037.4,1429.2 1041.4,1418.0 1045.4,1406.7 1049.4,1399.6 1053.4,1397.0 1057.4,1389.1 1061.4,1369.8 1065.4,1358.2 1069.4,1367.6 1073.4,1385.9 1077.4,1370.2 1081.4,1375.1 1085.4,1386.3 1089.4,1366.1 1093.4,1377.3 1097.4,1362.6 1101.4,1364.6 1105.4,1365.1 1109.4,1368.8 1113.4,1361.8 1117.4,1363.2 1121.4,1370.5 1125.4,1372.5 1129.4,1383.3 1133.4,1388.2 1137.4,1391.5 1141.4,1376.1 1145.4,1385.6 1149.4,1388.5 1153.4,1379.8 1157.4,1393.7 1161.4,1406.7 1165.4,1405.8 1169.4,1398.6 1173.4,1403.0 1177.4,1404.4 1181.4,1410.1 1185.4,1414.1 1189.4,1418.1 1193.4,1422.1 1197.4,1426.3 1201.4,1428.6 1205.4,1433.6 1209.4,1432.6 1213.4,1438.9 1217.4,1440.5 1221.4,1433.3 1225.4,1417.7 1229.4,1409.7 1233.4,1400.6 1237.4,1406.2 1241.4,1391.4 1245.4,1398.5 1249.4,1412.8 1253.4,1423.0 1257.4,1429.2 1261.4,1409.1 1265.4,1425.9 1269.4,1422.8 1273.4,1434.9 1277.4,1445.8 1281.4,1432.9 1285.4,1441.9 1289.4,1457.8 1293.4,1440.3 1297.4,1432.6 1301.4,1439.6 1305.4,1428.2 1309.4,1438.3 1313.4,1430.9 1317.4,1434.7 1321.4,1424.7 1325.4,1423.5 1329.4,1432.9 1333.4,1426.5 1337.4,1420.9 1341.4,1420.2 1345.4,1414.1 1349.4,1403.8 1353.4,1394.8 1357.4,1382.0 1361.4,1404.8 1365.4,1415.9 1369.4,1429.8 1373.4,1432.9 1377.4,1443.6 1381.4,1439.4 1385.4,1439.6 1389.4,1442.5 1393.4,1443.0 1397.4,1451.1 1401.4,1454.6 1405.4,1458.8 1409.4,1467.3 1413.4,1463.3 1417.4,1471.0 1421.4,1473.3 1425.4,1473.1 1429.4,1476.5 1433.4,1475.1 1437.4,1478.2 1441.4,1478.6 1445.4,1475.0 1449.4,1471.9 1453.4,1467.1 1457.4,1458.0 1461.4,1460.7 1465.4,1456.4 1469.4,1465.8 1473.4,1464.0 1477.4,1469.1 1481.4,1472.2 1485.4,1466.2 1489.4,1460.2 1493.4,1450.5 1497.4,1437.4 1501.4,1424.9 1505.4,1414.0 1509.4,1410.9 1513.4,1402.6 1517.4,1401.3 1521.4,1412.8 1525.4,1403.5 1529.4,1391.6 1533.4,1398.7 1537.4,1385.8 1541.4,1368.3 1545.4,1361.8 1549.4,1346.2 1553.4,1345.0 1557.4,1342.6 1561.4,1342.9 1565.4,1343.7 1569.4,1334.2 1573.4,1338.8 1577.4,1341.1 1581.4,1340.7 1585.4,1360.4 1589.4,1354.1 1593.4,1354.0 1597.4,1368.0 1601.4,1386.5 1605.4,1411.1 1609.4,1431.2 1613.4,1427.4 1617.4,1420.2 1621.4,1407.6 1625.4,1410.4 1629.4,1412.7 1633.4,1411.2 1637.4,1416.4 1641.4,1417.2 1645.4,1428.5 1649.4,1434.6 1653.4,1428.1 1657.4,1440.3 1661.4,1426.6 1665.4,1430.3 1669.4,1430.2 1673.4,1425.4 1677.4,1423.1 1681.4,1424.9 1685.4,1410.9 1689.4,1404.8 1693.4,1407.9 1697.4,1392.6 1701.4,1380.9 1705.4,1377.1 1709.4,1369.6 1713.4,1369.1 1717.4,1379.7 1721.4,1357.5 1725.4,1342.1 1729.4,1333.4 1733.4,1329.1 1737.4,1346.9 1741.4,1359.3 1745.4,1368.1 1749.4,1336.8 1753.4,1354.5 1757.4,1368.3 1761.4,1365.9 1765.4,1382.7 1769.4,1383.0 1773.4,1367.4 1777.4,1341.5 1781.4,1323.6 1785.4,1309.5 1789.4,1308.7 1793.4,1323.5 1797.4,1334.9 1801.4,1355.8 1805.4,1367.6 1809.4,1356.5 1813.4,1362.0 1817.4,1360.1 1821.4,1381.2 1825.4,1391.0 1829.4,1384.7 1833.4,1398.5 1837.4,1430.0 1841.4,1416.4 1845.4,1435.5 1849.4,1416.4 1853.4,1407.3 1857.4,1397.0 1861.4,1408.2 1865.4,1430.7 1869.4,1444.1 1873.4,1442.3 1877.4,1455.8 1881.4,1456.9 1885.4,1453.5 1889.4,1465.4 1893.4,1469.2 1897.4,1473.7 1901.4,1473.8 1905.4,1473.2 1909.4,1465.9 1913.4,1466.8 1917.4,1465.0 1921.4,1462.2 1925.4,1464.8 1929.4,1471.9 1933.4,1477.9 1937.4,1481.1 1941.4,1483.2 1945.4,1490.8 1949.4,1489.2 1953.4,1498.5 1957.4,1493.5 1961.4,1487.3 1965.4,1480.8 1969.4,1488.8 1973.4,1486.1 1977.4,1477.6 1981.4,1463.4 1985.4,1447.0 1989.4,1451.8 1993.4,1455.4 1997.4,1461.5 2001.4,1470.4 2005.4,1449.3 2009.4,1452.3 2013.4,1443.7 2017.4,1456.1 2021.4,1469.2 2025.4,1481.1 2029.4,1465.1 2033.4,1479.1 2037.4,1486.6 2041.4,1495.4 2045.4,1489.4 2049.4,1487.1 2053.4,1482.7 2057.4,1468.1 2061.4,1483.5 2065.4,1492.4 2069.4,1494.1 2073.4,1497.1 2077.4,1498.4 2081.4,1496.9 2085.4,1493.6 2089.4,1484.1 2093.4,1490.1 2097.4,1481.8 2101.4,1475.1 2105.4,1469.5 2109.4,1459.2 2113.4,1455.3" fill="none" stroke="#8c8c8c" stroke-opacity="0.12" stroke-width="1.3"/><polyline points="497.4,1474.6 501.4,1476.1 505.4,1483.0 509.4,1487.5 513.4,1497.0 517.4,1502.1 521.4,1497.9 525.4,1497.2 529.4,1496.9 533.4,1499.6 537.4,1498.2 541.4,1500.4 545.4,1501.0 549.4,1498.8 553.4,1502.1 557.4,1499.1 561.4,1501.2 565.4,1497.9 569.4,1493.2 573.4,1489.8 577.4,1493.8 581.4,1498.2 585.4,1494.6 589.4,1494.6 593.4,1493.9 597.4,1495.9 601.4,1492.5 605.4,1491.9 609.4,1488.3 613.4,1492.6 617.4,1490.0 621.4,1495.3 625.4,1493.7 629.4,1489.7 633.4,1493.9 637.4,1494.4 641.4,1482.6 645.4,1488.5 649.4,1469.6 653.4,1482.0 657.4,1489.8 661.4,1494.1 665.4,1495.9 669.4,1496.0 673.4,1494.3 677.4,1492.8 681.4,1496.0 685.4,1491.4 689.4,1495.1 693.4,1487.3 697.4,1477.6 701.4,1471.8 705.4,1483.9 709.4,1484.6 713.4,1481.9 717.4,1489.5 721.4,1482.8 725.4,1480.2 729.4,1479.8 733.4,1484.6 737.4,1486.6 741.4,1487.6 745.4,1486.1 749.4,1485.0 753.4,1480.8 757.4,1485.7 761.4,1486.8 765.4,1486.5 769.4,1482.8 773.4,1480.8 777.4,1482.0 781.4,1480.3 785.4,1467.3 789.4,1458.7 793.4,1454.5 797.4,1442.8 801.4,1424.4 805.4,1404.0 809.4,1406.1 813.4,1416.6 817.4,1401.3 821.4,1376.8 825.4,1358.6 829.4,1345.6 833.4,1344.2 837.4,1321.5 841.4,1315.6 845.4,1314.3 849.4,1346.6 853.4,1357.1 857.4,1332.6 861.4,1354.5 865.4,1331.5 869.4,1325.3 873.4,1354.1 877.4,1370.8 881.4,1382.9 885.4,1381.4 889.4,1371.8 893.4,1380.3 897.4,1367.1 901.4,1359.5 905.4,1361.3 909.4,1358.1 913.4,1366.1 917.4,1386.7 921.4,1399.1 925.4,1401.1 929.4,1407.1 933.4,1407.1 937.4,1399.5 941.4,1406.5 945.4,1407.7 949.4,1418.7 953.4,1434.7 957.4,1436.2 961.4,1441.7 965.4,1451.8 969.4,1451.7 973.4,1447.4 977.4,1454.6 981.4,1461.8 985.4,1462.8 989.4,1461.1 993.4,1463.6 997.4,1466.6 1001.4,1468.7 1005.4,1466.2 1009.4,1460.5 1013.4,1462.2 1017.4,1452.0 1021.4,1449.2 1025.4,1449.7 1029.4,1449.0 1033.4,1447.2 1037.4,1436.8 1041.4,1430.8 1045.4,1425.8 1049.4,1424.5 1053.4,1419.6 1057.4,1423.5 1061.4,1435.6 1065.4,1427.7 1069.4,1433.6 1073.4,1444.6 1077.4,1443.4 1081.4,1445.2 1085.4,1452.2 1089.4,1434.2 1093.4,1430.0 1097.4,1415.4 1101.4,1418.8 1105.4,1427.7 1109.4,1432.1 1113.4,1424.4 1117.4,1430.4 1121.4,1435.6 1125.4,1446.1 1129.4,1450.6 1133.4,1456.6 1137.4,1460.6 1141.4,1464.6 1145.4,1467.0 1149.4,1472.6 1153.4,1470.7 1157.4,1476.4 1161.4,1473.9 1165.4,1478.6 1169.4,1468.9 1173.4,1478.6 1177.4,1475.2 1181.4,1466.1 1185.4,1463.2 1189.4,1463.6 1193.4,1459.1 1197.4,1461.1 1201.4,1460.4 1205.4,1465.0 1209.4,1463.4 1213.4,1457.8 1217.4,1448.0 1221.4,1445.3 1225.4,1445.9 1229.4,1439.3 1233.4,1431.0 1237.4,1438.4 1241.4,1438.3 1245.4,1429.6 1249.4,1412.8 1253.4,1425.0 1257.4,1430.6 1261.4,1428.7 1265.4,1424.8 1269.4,1424.1 1273.4,1411.6 1277.4,1424.6 1281.4,1416.8 1285.4,1419.1 1289.4,1429.2 1293.4,1441.6 1297.4,1438.1 1301.4,1428.8 1305.4,1430.4 1309.4,1421.5 1313.4,1428.0 1317.4,1423.1 1321.4,1426.8 1325.4,1420.9 1329.4,1417.0 1333.4,1411.0 1337.4,1408.8 1341.4,1399.9 1345.4,1382.0 1349.4,1390.5 1353.4,1382.4 1357.4,1372.7 1361.4,1370.2 1365.4,1375.4 1369.4,1379.0 1373.4,1391.7 1377.4,1405.8 1381.4,1403.0 1385.4,1421.9 1389.4,1436.0 1393.4,1424.8 1397.4,1437.8 1401.4,1449.7 1405.4,1457.1 1409.4,1454.4 1413.4,1461.5 1417.4,1465.2 1421.4,1461.6 1425.4,1453.4 1429.4,1465.6 1433.4,1468.0 1437.4,1466.9 1441.4,1457.9 1445.4,1444.5 1449.4,1424.6 1453.4,1420.3 1457.4,1408.5 1461.4,1392.1 1465.4,1404.4 1469.4,1415.5 1473.4,1397.9 1477.4,1414.6 1481.4,1418.0 1485.4,1429.9 1489.4,1431.9 1493.4,1433.2 1497.4,1435.3 1501.4,1439.7 1505.4,1430.6 1509.4,1431.3 1513.4,1428.4 1517.4,1433.2 1521.4,1430.3 1525.4,1437.3 1529.4,1435.6 1533.4,1430.0 1537.4,1425.2 1541.4,1420.2 1545.4,1420.7 1549.4,1412.9 1553.4,1406.0 1557.4,1389.1 1561.4,1387.6 1565.4,1387.1 1569.4,1387.4 1573.4,1397.9 1577.4,1383.5 1581.4,1398.6 1585.4,1400.5 1589.4,1405.0 1593.4,1416.6 1597.4,1433.0 1601.4,1439.1 1605.4,1446.4 1609.4,1461.2 1613.4,1454.9 1617.4,1456.5 1621.4,1458.7 1625.4,1448.5 1629.4,1449.9 1633.4,1454.4 1637.4,1465.6 1641.4,1463.4 1645.4,1473.8 1649.4,1474.3 1653.4,1474.4 1657.4,1478.7 1661.4,1472.2 1665.4,1475.2 1669.4,1476.5 1673.4,1474.8 1677.4,1477.0 1681.4,1472.4 1685.4,1467.8 1689.4,1464.2 1693.4,1463.3 1697.4,1454.6 1701.4,1452.3 1705.4,1448.9 1709.4,1447.3 1713.4,1451.6 1717.4,1446.3 1721.4,1448.5 1725.4,1444.5 1729.4,1442.6 1733.4,1435.8 1737.4,1433.8 1741.4,1438.5 1745.4,1436.5 1749.4,1436.8 1753.4,1434.2 1757.4,1430.9 1761.4,1426.8 1765.4,1431.6 1769.4,1437.8 1773.4,1447.5 1777.4,1437.2 1781.4,1444.1 1785.4,1450.8 1789.4,1448.8 1793.4,1433.2 1797.4,1425.8 1801.4,1409.4 1805.4,1397.7 1809.4,1412.9 1813.4,1417.9 1817.4,1423.2 1821.4,1435.8 1825.4,1452.0 1829.4,1457.7 1833.4,1461.5 1837.4,1461.9 1841.4,1462.3 1845.4,1462.7 1849.4,1463.1 1853.4,1459.5 1857.4,1464.8 1861.4,1466.1 1865.4,1471.6 1869.4,1465.9 1873.4,1462.7 1877.4,1457.9 1881.4,1465.7 1885.4,1474.8 1889.4,1479.0 1893.4,1479.2 1897.4,1484.5 1901.4,1481.3 1905.4,1476.3 1909.4,1468.0 1913.4,1459.0 1917.4,1452.4 1921.4,1449.1 1925.4,1453.1 1929.4,1462.0 1933.4,1475.0 1937.4,1474.7 1941.4,1482.0 1945.4,1481.8 1949.4,1479.5 1953.4,1486.6 1957.4,1488.9 1961.4,1495.8 1965.4,1495.5 1969.4,1489.0 1973.4,1486.8 1977.4,1488.1 1981.4,1494.8 1985.4,1501.4 1989.4,1501.3 1993.4,1500.5 1997.4,1495.7 2001.4,1496.9 2005.4,1492.9 2009.4,1488.1 2013.4,1471.4 2017.4,1445.6 2021.4,1452.0 2025.4,1431.7 2029.4,1453.3 2033.4,1430.3 2037.4,1451.3 2041.4,1437.7 2045.4,1422.3 2049.4,1437.8 2053.4,1433.1 2057.4,1445.6 2061.4,1438.1 2065.4,1441.1 2069.4,1453.4 2073.4,1461.7 2077.4,1473.6 2081.4,1481.1 2085.4,1470.3 2089.4,1473.5 2093.4,1478.5 2097.4,1476.9 2101.4,1484.6 2105.4,1474.0 2109.4,1477.0 2113.4,1479.1" fill="none" stroke="#8c8c8c" stroke-opacity="0.10" stroke-width="1.3"/><polyline points="497.4,1449.4 501.4,1456.7 505.4,1450.2 509.4,1448.6 513.4,1455.2 517.4,1453.2 521.4,1464.2 525.4,1466.1 529.4,1461.6 533.4,1462.8 537.4,1465.3 541.4,1465.4 545.4,1469.7 549.4,1467.0 553.4,1472.5 557.4,1470.5 561.4,1473.1 565.4,1475.2 569.4,1473.6 573.4,1471.2 577.4,1475.7 581.4,1483.5 585.4,1489.1 589.4,1490.2 593.4,1484.9 597.4,1473.9 601.4,1483.8 605.4,1487.8 609.4,1492.6 613.4,1490.3 617.4,1491.4 621.4,1496.9 625.4,1500.5 629.4,1501.6 633.4,1500.1 637.4,1499.8 641.4,1503.2 645.4,1502.3 649.4,1503.8 653.4,1504.6 657.4,1506.2 661.4,1506.2 665.4,1504.2 669.4,1503.1 673.4,1499.2 677.4,1496.9 681.4,1497.5 685.4,1500.2 689.4,1503.7 693.4,1499.0 697.4,1502.1 701.4,1505.2 705.4,1505.7 709.4,1505.6 713.4,1503.1 717.4,1505.5 721.4,1505.4 725.4,1503.6 729.4,1499.3 733.4,1497.0 737.4,1492.6 741.4,1492.5 745.4,1494.4 749.4,1491.6 753.4,1492.9 757.4,1493.8 761.4,1491.7 765.4,1491.4 769.4,1491.5 773.4,1490.5 777.4,1487.6 781.4,1484.3 785.4,1478.9 789.4,1473.6 793.4,1464.8 797.4,1451.9 801.4,1449.4 805.4,1449.8 809.4,1441.6 813.4,1441.6 817.4,1443.8 821.4,1441.8 825.4,1439.8 829.4,1437.2 833.4,1435.8 837.4,1430.6 841.4,1425.0 845.4,1420.3 849.4,1429.0 853.4,1419.0 857.4,1415.8 861.4,1409.6 865.4,1409.7 869.4,1399.7 873.4,1382.5 877.4,1402.4 881.4,1398.8 885.4,1384.6 889.4,1392.8 893.4,1405.2 897.4,1396.2 901.4,1409.4 905.4,1411.6 909.4,1419.6 913.4,1404.3 917.4,1390.3 921.4,1413.9 925.4,1428.3 929.4,1426.9 933.4,1428.0 937.4,1423.4 941.4,1435.2 945.4,1436.9 949.4,1452.8 953.4,1462.0 957.4,1470.5 961.4,1480.6 965.4,1477.8 969.4,1471.4 973.4,1467.4 977.4,1462.8 981.4,1455.7 985.4,1449.7 989.4,1440.2 993.4,1435.6 997.4,1429.2 1001.4,1439.0 1005.4,1449.1 1009.4,1437.6 1013.4,1440.3 1017.4,1435.8 1021.4,1420.1 1025.4,1430.6 1029.4,1415.0 1033.4,1412.0 1037.4,1413.4 1041.4,1421.8 1045.4,1421.9 1049.4,1415.9 1053.4,1411.8 1057.4,1401.7 1061.4,1412.2 1065.4,1426.7 1069.4,1418.6 1073.4,1406.0 1077.4,1403.4 1081.4,1399.4 1085.4,1413.0 1089.4,1422.3 1093.4,1427.4 1097.4,1409.8 1101.4,1414.0 1105.4,1417.5 1109.4,1424.2 1113.4,1436.5 1117.4,1427.3 1121.4,1420.8 1125.4,1432.3 1129.4,1449.6 1133.4,1456.6 1137.4,1456.2 1141.4,1462.4 1145.4,1468.6 1149.4,1465.6 1153.4,1465.1 1157.4,1461.3 1161.4,1452.1 1165.4,1449.6 1169.4,1438.8 1173.4,1432.5 1177.4,1426.0 1181.4,1434.9 1185.4,1426.9 1189.4,1436.0 1193.4,1432.6 1197.4,1426.1 1201.4,1438.1 1205.4,1433.8 1209.4,1444.7 1213.4,1452.2 1217.4,1453.8 1221.4,1441.1 1225.4,1432.2 1229.4,1417.3 1233.4,1421.1 1237.4,1427.7 1241.4,1433.5 1245.4,1431.8 1249.4,1423.3 1253.4,1438.6 1257.4,1430.2 1261.4,1428.0 1265.4,1410.4 1269.4,1395.2 1273.4,1375.5 1277.4,1384.1 1281.4,1385.3 1285.4,1372.4 1289.4,1380.0 1293.4,1369.4 1297.4,1363.1 1301.4,1350.1 1305.4,1345.3 1309.4,1361.9 1313.4,1357.0 1317.4,1352.2 1321.4,1354.5 1325.4,1354.0 1329.4,1366.0 1333.4,1352.2 1337.4,1367.0 1341.4,1350.6 1345.4,1362.6 1349.4,1367.9 1353.4,1355.8 1357.4,1354.8 1361.4,1352.0 1365.4,1354.4 1369.4,1360.4 1373.4,1366.4 1377.4,1394.2 1381.4,1418.2 1385.4,1435.4 1389.4,1423.4 1393.4,1420.1 1397.4,1435.3 1401.4,1425.2 1405.4,1435.0 1409.4,1432.6 1413.4,1448.9 1417.4,1439.3 1421.4,1450.1 1425.4,1449.0 1429.4,1442.5 1433.4,1432.5 1437.4,1442.2 1441.4,1444.1 1445.4,1428.8 1449.4,1412.9 1453.4,1411.9 1457.4,1395.2 1461.4,1393.1 1465.4,1379.5 1469.4,1374.5 1473.4,1383.0 1477.4,1389.7 1481.4,1369.8 1485.4,1355.4 1489.4,1350.2 1493.4,1350.8 1497.4,1345.4 1501.4,1334.6 1505.4,1330.2 1509.4,1332.3 1513.4,1339.0 1517.4,1352.5 1521.4,1357.7 1525.4,1347.0 1529.4,1334.0 1533.4,1351.0 1537.4,1354.9 1541.4,1363.1 1545.4,1347.4 1549.4,1359.4 1553.4,1350.6 1557.4,1360.0 1561.4,1371.3 1565.4,1369.8 1569.4,1348.6 1573.4,1364.2 1577.4,1366.1 1581.4,1383.1 1585.4,1377.3 1589.4,1368.7 1593.4,1388.4 1597.4,1395.3 1601.4,1396.1 1605.4,1405.0 1609.4,1420.7 1613.4,1409.2 1617.4,1408.9 1621.4,1407.6 1625.4,1407.2 1629.4,1407.9 1633.4,1414.6 1637.4,1423.7 1641.4,1434.2 1645.4,1431.7 1649.4,1437.5 1653.4,1434.9 1657.4,1443.0 1661.4,1430.1 1665.4,1444.3 1669.4,1460.1 1673.4,1461.8 1677.4,1459.5 1681.4,1454.7 1685.4,1445.8 1689.4,1426.5 1693.4,1431.7 1697.4,1422.8 1701.4,1412.6 1705.4,1392.8 1709.4,1376.1 1713.4,1384.4 1717.4,1357.3 1721.4,1345.3 1725.4,1349.5 1729.4,1333.4 1733.4,1329.1 1737.4,1330.7 1741.4,1331.1 1745.4,1328.5 1749.4,1337.2 1753.4,1312.5 1757.4,1332.3 1761.4,1344.2 1765.4,1315.7 1769.4,1307.9 1773.4,1308.7 1777.4,1309.6 1781.4,1310.3 1785.4,1309.5 1789.4,1308.7 1793.4,1307.9 1797.4,1312.9 1801.4,1335.5 1805.4,1315.9 1809.4,1322.2 1813.4,1338.6 1817.4,1322.4 1821.4,1346.2 1825.4,1378.3 1829.4,1378.9 1833.4,1379.9 1837.4,1405.0 1841.4,1409.3 1845.4,1407.2 1849.4,1429.5 1853.4,1438.6 1857.4,1435.2 1861.4,1425.6 1865.4,1423.3 1869.4,1425.9 1873.4,1447.5 1877.4,1457.1 1881.4,1467.1 1885.4,1474.6 1889.4,1481.5 1893.4,1477.4 1897.4,1479.0 1901.4,1480.2 1905.4,1476.3 1909.4,1467.9 1913.4,1461.2 1917.4,1460.2 1921.4,1456.0 1925.4,1460.9 1929.4,1460.3 1933.4,1465.9 1937.4,1472.5 1941.4,1472.4 1945.4,1471.6 1949.4,1483.3 1953.4,1490.1 1957.4,1497.6 1961.4,1499.9 1965.4,1504.4 1969.4,1504.5 1973.4,1504.5 1977.4,1498.0 1981.4,1500.2 1985.4,1497.6 1989.4,1500.1 1993.4,1497.9 1997.4,1497.9 2001.4,1502.8 2005.4,1504.2 2009.4,1501.0 2013.4,1500.8 2017.4,1499.3 2021.4,1504.5 2025.4,1500.6 2029.4,1497.0 2033.4,1499.6 2037.4,1492.4 2041.4,1494.7 2045.4,1503.0 2049.4,1503.4 2053.4,1500.6 2057.4,1500.8 2061.4,1501.6 2065.4,1498.7 2069.4,1495.9 2073.4,1493.4 2077.4,1489.7 2081.4,1487.5 2085.4,1481.8 2089.4,1474.7 2093.4,1463.7 2097.4,1464.6 2101.4,1471.3 2105.4,1469.8 2109.4,1467.6 2113.4,1468.5" fill="none" stroke="#8c8c8c" stroke-opacity="0.12" stroke-width="1.3"/><polyline points="497.4,1474.9 501.4,1478.3 505.4,1482.6 509.4,1486.6 513.4,1488.5 517.4,1489.3 521.4,1489.2 525.4,1489.9 529.4,1488.1 533.4,1489.9 537.4,1481.3 541.4,1479.5 545.4,1486.6 549.4,1482.8 553.4,1484.3 557.4,1484.6 561.4,1480.4 565.4,1487.8 569.4,1484.4 573.4,1489.0 577.4,1483.3 581.4,1475.3 585.4,1482.1 589.4,1480.1 593.4,1469.3 597.4,1465.1 601.4,1462.2 605.4,1466.4 609.4,1455.5 613.4,1452.1 617.4,1461.9 621.4,1466.5 625.4,1453.2 629.4,1444.3 633.4,1435.3 637.4,1440.2 641.4,1443.2 645.4,1457.1 649.4,1471.7 653.4,1472.1 657.4,1481.8 661.4,1491.9 665.4,1495.0 669.4,1496.3 673.4,1498.9 677.4,1499.3 681.4,1502.9 685.4,1499.2 689.4,1502.5 693.4,1497.4 697.4,1499.8 701.4,1500.5 705.4,1500.3 709.4,1505.2 713.4,1505.5 717.4,1504.6 721.4,1505.4 725.4,1503.6 729.4,1499.3 733.4,1497.4 737.4,1496.2 741.4,1495.1 745.4,1496.2 749.4,1493.9 753.4,1492.5 757.4,1492.3 761.4,1491.2 765.4,1489.1 769.4,1489.8 773.4,1490.7 777.4,1489.9 781.4,1488.7 785.4,1478.4 789.4,1468.0 793.4,1456.0 797.4,1448.1 801.4,1441.3 805.4,1426.7 809.4,1430.2 813.4,1424.7 817.4,1430.2 821.4,1435.7 825.4,1439.8 829.4,1430.4 833.4,1426.3 837.4,1440.0 841.4,1429.2 845.4,1420.2 849.4,1424.9 853.4,1418.8 857.4,1426.5 861.4,1430.3 865.4,1432.3 869.4,1438.0 873.4,1439.2 877.4,1440.4 881.4,1441.3 885.4,1438.5 889.4,1435.1 893.4,1439.0 897.4,1437.2 901.4,1451.2 905.4,1456.2 909.4,1461.2 913.4,1456.5 917.4,1457.7 921.4,1457.6 925.4,1460.7 929.4,1463.7 933.4,1474.7 937.4,1478.7 941.4,1479.1 945.4,1478.5 949.4,1481.5 953.4,1482.7 957.4,1481.0 961.4,1482.9 965.4,1485.9 969.4,1481.4 973.4,1479.2 977.4,1487.3 981.4,1488.4 985.4,1488.9 989.4,1478.1 993.4,1484.9 997.4,1482.9 1001.4,1480.9 1005.4,1478.9 1009.4,1476.9 1013.4,1473.1 1017.4,1463.8 1021.4,1457.9 1025.4,1453.1 1029.4,1447.6 1033.4,1434.7 1037.4,1423.1 1041.4,1422.5 1045.4,1421.1 1049.4,1414.2 1053.4,1421.9 1057.4,1425.1 1061.4,1412.8 1065.4,1409.9 1069.4,1418.8 1073.4,1414.8 1077.4,1424.6 1081.4,1412.3 1085.4,1405.6 1089.4,1412.9 1093.4,1410.8 1097.4,1411.8 1101.4,1401.1 1105.4,1400.1 1109.4,1402.3 1113.4,1396.4 1117.4,1404.1 1121.4,1409.0 1125.4,1427.8 1129.4,1435.0 1133.4,1439.3 1137.4,1437.0 1141.4,1436.5 1145.4,1447.2 1149.4,1443.0 1153.4,1425.7 1157.4,1412.6 1161.4,1414.1 1165.4,1426.0 1169.4,1429.4 1173.4,1440.2 1177.4,1430.9 1181.4,1423.3 1185.4,1433.7 1189.4,1433.3 1193.4,1442.3 1197.4,1442.5 1201.4,1437.0 1205.4,1433.7 1209.4,1432.6 1213.4,1442.1 1217.4,1440.1 1221.4,1430.1 1225.4,1421.2 1229.4,1411.3 1233.4,1400.6 1237.4,1404.6 1241.4,1403.6 1245.4,1416.0 1249.4,1410.2 1253.4,1414.9 1257.4,1396.5 1261.4,1370.0 1265.4,1384.2 1269.4,1398.2 1273.4,1389.1 1277.4,1403.7 1281.4,1412.1 1285.4,1402.0 1289.4,1401.8 1293.4,1420.1 1297.4,1419.0 1301.4,1433.7 1305.4,1425.6 1309.4,1423.9 1313.4,1427.6 1317.4,1420.3 1321.4,1414.0 1325.4,1419.2 1329.4,1417.6 1333.4,1425.1 1337.4,1418.9 1341.4,1409.6 1345.4,1405.2 1349.4,1397.6 1353.4,1409.2 1357.4,1406.4 1361.4,1412.4 1365.4,1408.3 1369.4,1417.2 1373.4,1420.7 1377.4,1424.4 1381.4,1408.0 1385.4,1397.3 1389.4,1412.7 1393.4,1411.8 1397.4,1407.6 1401.4,1403.1 1405.4,1407.1 1409.4,1411.1 1413.4,1415.1 1417.4,1423.4 1421.4,1423.3 1425.4,1427.1 1429.4,1434.1 1433.4,1431.1 1437.4,1433.1 1441.4,1442.3 1445.4,1426.0 1449.4,1411.8 1453.4,1408.3 1457.4,1411.3 1461.4,1395.2 1465.4,1385.7 1469.4,1391.5 1473.4,1382.1 1477.4,1401.4 1481.4,1382.7 1485.4,1403.1 1489.4,1397.6 1493.4,1377.1 1497.4,1369.8 1501.4,1344.9 1505.4,1352.1 1509.4,1334.5 1513.4,1351.3 1517.4,1352.9 1521.4,1346.2 1525.4,1338.8 1529.4,1349.9 1533.4,1344.9 1537.4,1366.1 1541.4,1351.4 1545.4,1350.9 1549.4,1351.5 1553.4,1345.0 1557.4,1352.3 1561.4,1345.6 1565.4,1349.2 1569.4,1349.5 1573.4,1341.5 1577.4,1340.5 1581.4,1340.7 1585.4,1344.1 1589.4,1360.5 1593.4,1360.5 1597.4,1379.8 1601.4,1381.9 1605.4,1397.8 1609.4,1409.9 1613.4,1409.2 1617.4,1408.4 1621.4,1407.6 1625.4,1406.8 1629.4,1407.9 1633.4,1409.9 1637.4,1416.7 1641.4,1413.9 1645.4,1414.7 1649.4,1424.0 1653.4,1431.4 1657.4,1443.2 1661.4,1455.8 1665.4,1446.3 1669.4,1441.8 1673.4,1430.5 1677.4,1436.7 1681.4,1435.6 1685.4,1423.8 1689.4,1414.0 1693.4,1411.2 1697.4,1411.7 1701.4,1400.9 1705.4,1408.2 1709.4,1396.7 1713.4,1399.0 1717.4,1380.7 1721.4,1355.5 1725.4,1370.9 1729.4,1378.9 1733.4,1387.4 1737.4,1358.9 1741.4,1329.3 1745.4,1317.1 1749.4,1314.3 1753.4,1312.3 1757.4,1310.3 1761.4,1308.3 1765.4,1307.1 1769.4,1317.0 1773.4,1308.7 1777.4,1332.4 1781.4,1336.7 1785.4,1348.5 1789.4,1331.9 1793.4,1327.6 1797.4,1338.4 1801.4,1329.2 1805.4,1310.2 1809.4,1331.5 1813.4,1349.8 1817.4,1339.9 1821.4,1323.7 1825.4,1350.0 1829.4,1362.8 1833.4,1342.3 1837.4,1349.1 1841.4,1356.4 1845.4,1377.6 1849.4,1371.2 1853.4,1390.6 1857.4,1401.8 1861.4,1385.8 1865.4,1399.5 1869.4,1402.4 1873.4,1417.8 1877.4,1434.5 1881.4,1432.7 1885.4,1424.5 1889.4,1441.0 1893.4,1442.0 1897.4,1456.0 1901.4,1460.2 1905.4,1463.7 1909.4,1455.6 1913.4,1447.1 1917.4,1438.9 1921.4,1433.7 1925.4,1444.0 1929.4,1450.0 1933.4,1457.1 1937.4,1470.2 1941.4,1471.7 1945.4,1481.5 1949.4,1477.7 1953.4,1483.2 1957.4,1489.2 1961.4,1486.6 1965.4,1488.2 1969.4,1494.6 1973.4,1496.2 1977.4,1496.8 1981.4,1493.9 1985.4,1489.1 1989.4,1488.5 1993.4,1488.4 1997.4,1475.2 2001.4,1465.2 2005.4,1447.2 2009.4,1455.7 2013.4,1461.5 2017.4,1446.7 2021.4,1432.1 2025.4,1430.5 2029.4,1425.5 2033.4,1446.3 2037.4,1440.6 2041.4,1435.6 2045.4,1456.9 2049.4,1447.4 2053.4,1454.4 2057.4,1451.6 2061.4,1466.3 2065.4,1470.2 2069.4,1480.3 2073.4,1471.1 2077.4,1477.2 2081.4,1480.9 2085.4,1480.1 2089.4,1486.7 2093.4,1492.4 2097.4,1483.9 2101.4,1476.3 2105.4,1469.3 2109.4,1461.8 2113.4,1455.1" fill="none" stroke="#8c8c8c" stroke-opacity="0.12" stroke-width="1.3"/><polyline points="497.4,1460.2 501.4,1460.5 505.4,1454.6 509.4,1453.0 513.4,1454.4 517.4,1454.3 521.4,1456.0 525.4,1458.8 529.4,1461.6 533.4,1472.0 537.4,1477.4 541.4,1470.9 545.4,1475.8 549.4,1484.7 553.4,1486.4 557.4,1479.9 561.4,1479.4 565.4,1478.1 569.4,1472.9 573.4,1473.1 577.4,1466.4 581.4,1473.4 585.4,1475.6 589.4,1477.0 593.4,1485.2 597.4,1487.6 601.4,1481.0 605.4,1474.0 609.4,1464.0 613.4,1452.1 617.4,1456.8 621.4,1464.0 625.4,1455.1 629.4,1440.9 633.4,1442.9 637.4,1455.2 641.4,1472.4 645.4,1456.7 649.4,1469.6 653.4,1484.0 657.4,1492.6 661.4,1485.1 665.4,1469.9 669.4,1487.1 673.4,1479.2 677.4,1473.7 681.4,1475.2 685.4,1469.3 689.4,1483.9 693.4,1474.6 697.4,1460.8 701.4,1465.7 705.4,1471.8 709.4,1481.0 713.4,1485.3 717.4,1491.5 721.4,1495.5 725.4,1493.5 729.4,1491.0 733.4,1487.4 737.4,1485.2 741.4,1485.7 745.4,1480.0 749.4,1483.7 753.4,1478.9 757.4,1476.9 761.4,1485.8 765.4,1474.6 769.4,1459.8 773.4,1454.8 777.4,1442.1 781.4,1444.9 785.4,1416.0 789.4,1414.4 793.4,1416.4 797.4,1418.2 801.4,1404.3 805.4,1382.9 809.4,1382.1 813.4,1379.2 817.4,1370.1 821.4,1355.1 825.4,1348.3 829.4,1355.6 833.4,1372.3 837.4,1393.6 841.4,1376.2 845.4,1369.9 849.4,1370.8 853.4,1370.5 857.4,1358.4 861.4,1340.3 865.4,1316.3 869.4,1311.8 873.4,1316.9 877.4,1344.4 881.4,1366.0 885.4,1383.2 889.4,1403.2 893.4,1419.4 897.4,1425.6 901.4,1441.0 905.4,1436.8 909.4,1446.8 913.4,1453.7 917.4,1453.5 921.4,1456.5 925.4,1469.0 929.4,1470.5 933.4,1475.2 937.4,1470.4 941.4,1467.7 945.4,1478.7 949.4,1469.6 953.4,1465.8 957.4,1471.4 961.4,1472.4 965.4,1467.6 969.4,1471.2 973.4,1469.9 977.4,1471.8 981.4,1470.1 985.4,1467.9 989.4,1464.0 993.4,1454.8 997.4,1442.7 1001.4,1433.6 1005.4,1443.4 1009.4,1444.5 1013.4,1432.9 1017.4,1442.7 1021.4,1434.1 1025.4,1412.2 1029.4,1407.0 1033.4,1393.1 1037.4,1388.6 1041.4,1386.5 1045.4,1372.2 1049.4,1370.8 1053.4,1351.1 1057.4,1346.9 1061.4,1346.0 1065.4,1333.6 1069.4,1334.9 1073.4,1336.2 1077.4,1337.6 1081.4,1355.3 1085.4,1358.5 1089.4,1367.2 1093.4,1375.4 1097.4,1360.7 1101.4,1376.0 1105.4,1382.7 1109.4,1368.1 1113.4,1379.9 1117.4,1379.8 1121.4,1372.8 1125.4,1392.7 1129.4,1400.8 1133.4,1420.3 1137.4,1413.4 1141.4,1431.7 1145.4,1417.8 1149.4,1410.0 1153.4,1405.8 1157.4,1386.7 1161.4,1392.7 1165.4,1387.4 1169.4,1392.8 1173.4,1404.5 1177.4,1407.8 1181.4,1422.8 1185.4,1429.6 1189.4,1442.3 1193.4,1447.6 1197.4,1460.7 1201.4,1467.3 1205.4,1463.3 1209.4,1467.8 1213.4,1464.1 1217.4,1463.0 1221.4,1461.4 1225.4,1463.5 1229.4,1448.5 1233.4,1443.6 1237.4,1449.3 1241.4,1460.4 1245.4,1467.1 1249.4,1456.5 1253.4,1461.7 1257.4,1447.1 1261.4,1443.8 1265.4,1451.0 1269.4,1434.6 1273.4,1445.4 1277.4,1448.4 1281.4,1438.9 1285.4,1425.8 1289.4,1421.5 1293.4,1434.9 1297.4,1436.0 1301.4,1420.6 1305.4,1407.9 1309.4,1396.7 1313.4,1409.9 1317.4,1397.2 1321.4,1397.9 1325.4,1388.0 1329.4,1391.7 1333.4,1386.9 1337.4,1374.1 1341.4,1385.8 1345.4,1386.4 1349.4,1394.0 1353.4,1404.5 1357.4,1412.9 1361.4,1409.8 1365.4,1411.4 1369.4,1404.6 1373.4,1412.6 1377.4,1436.9 1381.4,1441.8 1385.4,1430.7 1389.4,1422.0 1393.4,1435.2 1397.4,1443.4 1401.4,1442.8 1405.4,1445.1 1409.4,1438.6 1413.4,1451.2 1417.4,1451.3 1421.4,1461.8 1425.4,1465.0 1429.4,1460.1 1433.4,1457.5 1437.4,1452.5 1441.4,1461.5 1445.4,1460.6 1449.4,1437.2 1453.4,1414.6 1457.4,1402.9 1461.4,1397.4 1465.4,1397.2 1469.4,1389.3 1473.4,1378.6 1477.4,1365.0 1481.4,1364.4 1485.4,1355.4 1489.4,1350.2 1493.4,1345.0 1497.4,1366.1 1501.4,1336.4 1505.4,1330.2 1509.4,1335.5 1513.4,1322.1 1517.4,1318.1 1521.4,1318.0 1525.4,1326.0 1529.4,1337.0 1533.4,1345.7 1537.4,1369.9 1541.4,1390.5 1545.4,1371.6 1549.4,1373.4 1553.4,1380.3 1557.4,1388.5 1561.4,1396.5 1565.4,1399.5 1569.4,1402.1 1573.4,1397.8 1577.4,1394.0 1581.4,1404.7 1585.4,1417.3 1589.4,1431.4 1593.4,1440.4 1597.4,1443.0 1601.4,1454.9 1605.4,1464.0 1609.4,1470.0 1613.4,1471.6 1617.4,1470.6 1621.4,1472.9 1625.4,1472.3 1629.4,1462.6 1633.4,1459.1 1637.4,1456.8 1641.4,1468.6 1645.4,1469.1 1649.4,1467.5 1653.4,1464.1 1657.4,1461.4 1661.4,1460.7 1665.4,1454.5 1669.4,1441.7 1673.4,1454.9 1677.4,1452.0 1681.4,1445.3 1685.4,1437.9 1689.4,1425.0 1693.4,1411.5 1697.4,1394.7 1701.4,1381.4 1705.4,1372.9 1709.4,1374.2 1713.4,1370.1 1717.4,1387.0 1721.4,1373.0 1725.4,1389.4 1729.4,1390.1 1733.4,1364.2 1737.4,1343.0 1741.4,1343.8 1745.4,1368.0 1749.4,1356.8 1753.4,1370.5 1757.4,1366.1 1761.4,1388.1 1765.4,1363.2 1769.4,1364.8 1773.4,1394.2 1777.4,1379.8 1781.4,1361.9 1785.4,1329.6 1789.4,1308.7 1793.4,1307.9 1797.4,1319.9 1801.4,1308.2 1805.4,1310.2 1809.4,1312.2 1813.4,1320.2 1817.4,1343.8 1821.4,1357.5 1825.4,1347.6 1829.4,1367.7 1833.4,1400.4 1837.4,1411.4 1841.4,1392.1 1845.4,1411.1 1849.4,1430.2 1853.4,1424.0 1857.4,1409.5 1861.4,1397.7 1865.4,1404.7 1869.4,1424.7 1873.4,1434.8 1877.4,1452.9 1881.4,1448.5 1885.4,1447.3 1889.4,1457.4 1893.4,1463.8 1897.4,1463.6 1901.4,1468.2 1905.4,1458.7 1909.4,1429.8 1913.4,1414.7 1917.4,1398.4 1921.4,1406.4 1925.4,1406.4 1929.4,1411.0 1933.4,1420.7 1937.4,1420.6 1941.4,1427.3 1945.4,1430.1 1949.4,1447.4 1953.4,1448.6 1957.4,1464.1 1961.4,1448.4 1965.4,1451.8 1969.4,1461.2 1973.4,1455.6 1977.4,1443.0 1981.4,1435.2 1985.4,1433.1 1989.4,1439.4 1993.4,1425.1 1997.4,1434.9 2001.4,1428.7 2005.4,1428.7 2009.4,1431.1 2013.4,1431.6 2017.4,1436.7 2021.4,1439.0 2025.4,1428.5 2029.4,1438.5 2033.4,1423.9 2037.4,1437.5 2041.4,1453.9 2045.4,1469.2 2049.4,1465.5 2053.4,1479.7 2057.4,1491.6 2061.4,1493.0 2065.4,1491.8 2069.4,1492.6 2073.4,1496.7 2077.4,1494.0 2081.4,1483.5 2085.4,1483.0 2089.4,1486.6 2093.4,1491.9 2097.4,1488.5 2101.4,1491.0 2105.4,1482.5 2109.4,1481.7 2113.4,1473.4" fill="none" stroke="#8c8c8c" stroke-opacity="0.10" stroke-width="1.3"/><polyline points="497.4,1444.6 501.4,1446.1 505.4,1448.5 509.4,1448.6 513.4,1459.6 517.4,1459.9 521.4,1456.0 525.4,1458.8 529.4,1466.2 533.4,1475.1 537.4,1469.8 541.4,1465.2 545.4,1471.2 549.4,1467.3 553.4,1476.1 557.4,1476.5 561.4,1478.7 565.4,1475.9 569.4,1480.5 573.4,1479.7 577.4,1476.4 581.4,1483.5 585.4,1475.9 589.4,1479.5 593.4,1468.8 597.4,1470.4 601.4,1466.8 605.4,1474.3 609.4,1462.3 613.4,1462.6 617.4,1458.1 621.4,1467.9 625.4,1481.1 629.4,1485.3 633.4,1474.5 637.4,1463.9 641.4,1452.7 645.4,1448.2 649.4,1435.9 653.4,1426.7 657.4,1437.6 661.4,1439.1 665.4,1427.9 669.4,1455.1 673.4,1444.7 677.4,1448.9 681.4,1432.7 685.4,1448.6 689.4,1466.3 693.4,1459.6 697.4,1470.6 701.4,1481.6 705.4,1477.0 709.4,1475.0 713.4,1474.7 717.4,1482.7 721.4,1474.2 725.4,1476.4 729.4,1477.4 733.4,1476.1 737.4,1477.6 741.4,1484.5 745.4,1479.9 749.4,1485.5 753.4,1484.8 757.4,1486.9 761.4,1488.8 765.4,1485.7 769.4,1486.3 773.4,1488.6 777.4,1486.4 781.4,1480.8 785.4,1467.8 789.4,1464.6 793.4,1451.3 797.4,1446.7 801.4,1433.6 805.4,1428.5 809.4,1413.2 813.4,1394.7 817.4,1401.5 821.4,1373.0 825.4,1360.4 829.4,1382.8 833.4,1392.9 837.4,1403.8 841.4,1422.0 845.4,1412.7 849.4,1408.2 853.4,1410.5 857.4,1411.1 861.4,1394.8 865.4,1393.5 869.4,1381.7 873.4,1379.4 877.4,1362.1 881.4,1343.4 885.4,1367.4 889.4,1362.8 893.4,1381.0 897.4,1368.4 901.4,1373.6 905.4,1364.1 909.4,1368.6 913.4,1366.1 917.4,1382.1 921.4,1380.3 925.4,1392.1 929.4,1394.6 933.4,1389.8 937.4,1393.1 941.4,1397.1 945.4,1413.1 949.4,1412.8 953.4,1409.1 957.4,1426.5 961.4,1440.8 965.4,1450.4 969.4,1446.7 973.4,1441.7 977.4,1440.5 981.4,1439.5 985.4,1443.9 989.4,1431.5 993.4,1418.8 997.4,1407.8 1001.4,1403.3 1005.4,1400.1 1009.4,1402.5 1013.4,1404.6 1017.4,1402.1 1021.4,1399.5 1025.4,1400.5 1029.4,1411.9 1033.4,1419.8 1037.4,1421.8 1041.4,1415.8 1045.4,1407.0 1049.4,1400.6 1053.4,1410.5 1057.4,1405.9 1061.4,1400.7 1065.4,1396.8 1069.4,1380.9 1073.4,1402.4 1077.4,1387.5 1081.4,1394.7 1085.4,1410.4 1089.4,1398.7 1093.4,1398.4 1097.4,1391.7 1101.4,1381.6 1105.4,1370.2 1109.4,1355.8 1113.4,1368.0 1117.4,1381.9 1121.4,1400.1 1125.4,1388.9 1129.4,1401.4 1133.4,1403.6 1137.4,1416.6 1141.4,1425.1 1145.4,1422.6 1149.4,1447.1 1153.4,1426.7 1157.4,1438.3 1161.4,1448.7 1165.4,1446.5 1169.4,1446.7 1173.4,1459.9 1177.4,1454.5 1181.4,1459.8 1185.4,1466.5 1189.4,1466.1 1193.4,1472.1 1197.4,1473.0 1201.4,1474.9 1205.4,1478.3 1209.4,1481.0 1213.4,1476.6 1217.4,1475.4 1221.4,1473.2 1225.4,1463.2 1229.4,1461.8 1233.4,1453.7 1237.4,1463.3 1241.4,1461.9 1245.4,1468.6 1249.4,1470.8 1253.4,1472.3 1257.4,1464.4 1261.4,1448.4 1265.4,1459.8 1269.4,1457.1 1273.4,1454.2 1277.4,1452.5 1281.4,1461.4 1285.4,1451.5 1289.4,1437.9 1293.4,1450.5 1297.4,1446.2 1301.4,1448.3 1305.4,1450.5 1309.4,1447.0 1313.4,1443.4 1317.4,1431.1 1321.4,1425.7 1325.4,1431.5 1329.4,1437.8 1333.4,1429.5 1337.4,1421.2 1341.4,1413.9 1345.4,1403.0 1349.4,1400.6 1353.4,1407.6 1357.4,1408.7 1361.4,1413.0 1365.4,1408.6 1369.4,1411.7 1373.4,1434.2 1377.4,1443.7 1381.4,1443.4 1385.4,1443.4 1389.4,1448.8 1393.4,1455.1 1397.4,1452.9 1401.4,1458.4 1405.4,1459.4 1409.4,1462.4 1413.4,1460.7 1417.4,1461.4 1421.4,1461.6 1425.4,1462.3 1429.4,1452.9 1433.4,1447.4 1437.4,1450.7 1441.4,1442.0 1445.4,1426.0 1449.4,1418.2 1453.4,1397.5 1457.4,1389.4 1461.4,1384.4 1465.4,1393.0 1469.4,1374.5 1473.4,1376.4 1477.4,1390.3 1481.4,1370.7 1485.4,1361.9 1489.4,1372.5 1493.4,1373.3 1497.4,1361.5 1501.4,1334.6 1505.4,1330.2 1509.4,1326.1 1513.4,1333.4 1517.4,1318.6 1521.4,1318.0 1525.4,1333.4 1529.4,1354.1 1533.4,1354.0 1537.4,1356.9 1541.4,1359.6 1545.4,1376.6 1549.4,1362.8 1553.4,1378.4 1557.4,1381.0 1561.4,1374.8 1565.4,1380.2 1569.4,1371.9 1573.4,1354.1 1577.4,1367.0 1581.4,1365.3 1585.4,1369.4 1589.4,1372.3 1593.4,1394.8 1597.4,1415.1 1601.4,1409.9 1605.4,1424.2 1609.4,1434.4 1613.4,1432.1 1617.4,1439.6 1621.4,1436.0 1625.4,1434.1 1629.4,1442.4 1633.4,1441.2 1637.4,1443.6 1641.4,1446.4 1645.4,1455.1 1649.4,1459.8 1653.4,1465.1 1657.4,1464.8 1661.4,1459.6 1665.4,1463.4 1669.4,1465.4 1673.4,1469.2 1677.4,1470.3 1681.4,1461.4 1685.4,1449.1 1689.4,1432.0 1693.4,1433.9 1697.4,1422.3 1701.4,1408.7 1705.4,1413.3 1709.4,1410.8 1713.4,1388.6 1717.4,1394.2 1721.4,1398.7 1725.4,1393.4 1729.4,1366.0 1733.4,1373.0 1737.4,1365.3 1741.4,1366.8 1745.4,1391.8 1749.4,1403.0 1753.4,1411.3 1757.4,1402.5 1761.4,1397.5 1765.4,1401.6 1769.4,1373.2 1773.4,1408.8 1777.4,1394.3 1781.4,1376.1 1785.4,1361.3 1789.4,1344.5 1793.4,1366.9 1797.4,1369.8 1801.4,1369.2 1805.4,1363.7 1809.4,1340.2 1813.4,1331.0 1817.4,1354.4 1821.4,1376.3 1825.4,1405.1 1829.4,1398.6 1833.4,1386.8 1837.4,1367.4 1841.4,1375.2 1845.4,1375.0 1849.4,1379.7 1853.4,1381.1 1857.4,1385.6 1861.4,1381.1 1865.4,1399.3 1869.4,1395.1 1873.4,1416.9 1877.4,1425.1 1881.4,1417.0 1885.4,1416.0 1889.4,1420.9 1893.4,1424.0 1897.4,1427.1 1901.4,1415.3 1905.4,1405.3 1909.4,1406.3 1913.4,1388.3 1917.4,1395.8 1921.4,1408.7 1925.4,1416.7 1929.4,1420.7 1933.4,1441.6 1937.4,1447.1 1941.4,1466.3 1945.4,1459.3 1949.4,1460.9 1953.4,1465.7 1957.4,1450.9 1961.4,1463.2 1965.4,1447.0 1969.4,1451.8 1973.4,1441.5 1977.4,1457.3 1981.4,1460.9 1985.4,1471.1 1989.4,1470.8 1993.4,1477.7 1997.4,1483.9 2001.4,1473.4 2005.4,1459.1 2009.4,1474.0 2013.4,1455.1 2017.4,1472.0 2021.4,1456.3 2025.4,1435.1 2029.4,1412.4 2033.4,1424.7 2037.4,1450.1 2041.4,1449.6 2045.4,1460.3 2049.4,1455.1 2053.4,1474.8 2057.4,1484.3 2061.4,1474.5 2065.4,1461.5 2069.4,1470.1 2073.4,1457.3 2077.4,1468.8 2081.4,1464.2 2085.4,1458.3 2089.4,1460.6 2093.4,1455.8 2097.4,1457.2 2101.4,1453.0 2105.4,1460.6 2109.4,1456.5 2113.4,1460.9" fill="none" stroke="#8c8c8c" stroke-opacity="0.11" stroke-width="1.3"/><polyline points="497.4,1478.0 501.4,1482.6 505.4,1482.9 509.4,1486.0 513.4,1492.3 517.4,1492.6 521.4,1495.6 525.4,1491.8 529.4,1491.8 533.4,1494.2 537.4,1493.6 541.4,1495.8 545.4,1492.8 549.4,1496.2 553.4,1493.7 557.4,1497.4 561.4,1500.8 565.4,1504.4 569.4,1504.7 573.4,1502.9 577.4,1501.7 581.4,1503.9 585.4,1504.0 589.4,1505.8 593.4,1502.4 597.4,1502.1 601.4,1505.3 605.4,1505.9 609.4,1505.9 613.4,1501.6 617.4,1497.8 621.4,1495.9 625.4,1500.1 629.4,1503.6 633.4,1501.3 637.4,1505.1 641.4,1501.4 645.4,1502.2 649.4,1506.0 653.4,1504.7 657.4,1506.2 661.4,1506.2 665.4,1502.1 669.4,1504.3 673.4,1502.4 677.4,1497.9 681.4,1499.9 685.4,1496.7 689.4,1499.1 693.4,1496.8 697.4,1492.0 701.4,1492.2 705.4,1485.0 709.4,1486.6 713.4,1490.9 717.4,1491.8 721.4,1490.2 725.4,1480.4 729.4,1479.7 733.4,1471.1 737.4,1474.0 741.4,1467.6 745.4,1470.1 749.4,1468.9 753.4,1468.1 757.4,1468.0 761.4,1457.7 765.4,1447.1 769.4,1453.9 773.4,1445.4 777.4,1451.9 781.4,1460.0 785.4,1448.3 789.4,1424.2 793.4,1394.5 797.4,1399.0 801.4,1370.0 805.4,1358.5 809.4,1350.6 813.4,1331.2 817.4,1323.7 821.4,1316.2 825.4,1315.2 829.4,1312.9 833.4,1307.7 837.4,1305.3 841.4,1309.8 845.4,1314.3 849.4,1318.8 853.4,1319.2 857.4,1336.1 861.4,1333.9 865.4,1352.2 869.4,1326.6 873.4,1353.3 877.4,1355.6 881.4,1371.3 885.4,1376.1 889.4,1386.6 893.4,1378.5 897.4,1391.5 901.4,1384.1 905.4,1381.3 909.4,1366.9 913.4,1369.9 917.4,1378.5 921.4,1380.3 925.4,1397.7 929.4,1386.6 933.4,1392.2 937.4,1393.1 941.4,1399.8 945.4,1412.0 949.4,1422.2 953.4,1413.5 957.4,1413.1 961.4,1419.8 965.4,1436.8 969.4,1428.2 973.4,1435.0 977.4,1443.2 981.4,1451.6 985.4,1450.1 989.4,1444.3 993.4,1433.6 997.4,1437.5 1001.4,1423.7 1005.4,1434.3 1009.4,1431.1 1013.4,1427.3 1017.4,1411.0 1021.4,1397.7 1025.4,1400.3 1029.4,1400.9 1033.4,1383.5 1037.4,1373.6 1041.4,1358.4 1045.4,1353.7 1049.4,1349.0 1053.4,1344.0 1057.4,1358.7 1061.4,1375.9 1065.4,1387.2 1069.4,1385.5 1073.4,1387.5 1077.4,1404.0 1081.4,1418.7 1085.4,1426.4 1089.4,1427.2 1093.4,1412.9 1097.4,1412.6 1101.4,1417.9 1105.4,1423.1 1109.4,1415.7 1113.4,1424.4 1117.4,1423.7 1121.4,1417.6 1125.4,1435.5 1129.4,1445.0 1133.4,1456.0 1137.4,1452.2 1141.4,1463.4 1145.4,1468.6 1149.4,1472.6 1153.4,1476.6 1157.4,1478.6 1161.4,1478.6 1165.4,1478.6 1169.4,1477.0 1173.4,1478.6 1177.4,1478.6 1181.4,1478.6 1185.4,1474.8 1189.4,1478.7 1193.4,1480.4 1197.4,1482.4 1201.4,1478.6 1205.4,1486.4 1209.4,1486.1 1213.4,1480.5 1217.4,1482.1 1221.4,1474.7 1225.4,1464.4 1229.4,1458.9 1233.4,1450.1 1237.4,1449.1 1241.4,1459.3 1245.4,1465.1 1249.4,1471.9 1253.4,1471.2 1257.4,1477.9 1261.4,1475.9 1265.4,1471.9 1269.4,1467.9 1273.4,1463.9 1277.4,1458.3 1281.4,1443.5 1285.4,1448.1 1289.4,1460.6 1293.4,1454.0 1297.4,1454.5 1301.4,1454.0 1305.4,1450.5 1309.4,1435.0 1313.4,1432.6 1317.4,1420.7 1321.4,1410.8 1325.4,1414.3 1329.4,1410.4 1333.4,1412.8 1337.4,1411.6 1341.4,1406.6 1345.4,1398.5 1349.4,1394.2 1353.4,1405.2 1357.4,1408.2 1361.4,1409.7 1365.4,1400.8 1369.4,1398.7 1373.4,1415.0 1377.4,1420.2 1381.4,1428.1 1385.4,1439.0 1389.4,1428.4 1393.4,1437.1 1397.4,1425.9 1401.4,1438.5 1405.4,1432.6 1409.4,1429.6 1413.4,1445.4 1417.4,1444.9 1421.4,1440.9 1425.4,1453.4 1429.4,1458.2 1433.4,1467.2 1437.4,1467.8 1441.4,1467.3 1445.4,1468.5 1449.4,1460.8 1453.4,1459.7 1457.4,1450.5 1461.4,1454.2 1465.4,1451.5 1469.4,1454.8 1473.4,1446.4 1477.4,1433.4 1481.4,1446.6 1485.4,1442.2 1489.4,1441.8 1493.4,1430.8 1497.4,1424.0 1501.4,1403.6 1505.4,1403.0 1509.4,1412.2 1513.4,1406.3 1517.4,1401.2 1521.4,1413.5 1525.4,1422.3 1529.4,1424.7 1533.4,1414.7 1537.4,1419.8 1541.4,1421.0 1545.4,1429.5 1549.4,1426.0 1553.4,1425.5 1557.4,1425.4 1561.4,1420.8 1565.4,1421.7 1569.4,1427.6 1573.4,1433.1 1577.4,1435.4 1581.4,1434.1 1585.4,1440.2 1589.4,1430.9 1593.4,1443.5 1597.4,1452.0 1601.4,1458.0 1605.4,1463.2 1609.4,1470.0 1613.4,1471.6 1617.4,1473.2 1621.4,1474.8 1625.4,1466.4 1629.4,1462.4 1633.4,1454.3 1637.4,1466.0 1641.4,1475.2 1645.4,1468.9 1649.4,1471.1 1653.4,1473.0 1657.4,1466.7 1661.4,1466.1 1665.4,1470.1 1669.4,1472.2 1673.4,1470.5 1677.4,1471.8 1681.4,1465.4 1685.4,1459.7 1689.4,1452.2 1693.4,1458.1 1697.4,1458.5 1701.4,1458.5 1705.4,1456.5 1709.4,1452.2 1713.4,1452.5 1717.4,1450.5 1721.4,1448.5 1725.4,1442.0 1729.4,1432.9 1733.4,1432.4 1737.4,1437.1 1741.4,1438.5 1745.4,1433.1 1749.4,1424.2 1753.4,1425.3 1757.4,1437.4 1761.4,1429.5 1765.4,1438.6 1769.4,1432.0 1773.4,1429.7 1777.4,1419.1 1781.4,1410.6 1785.4,1402.7 1789.4,1415.1 1793.4,1429.5 1797.4,1418.9 1801.4,1411.4 1805.4,1423.9 1809.4,1415.9 1813.4,1412.5 1817.4,1411.1 1821.4,1402.4 1825.4,1398.1 1829.4,1399.5 1833.4,1398.3 1837.4,1429.6 1841.4,1418.6 1845.4,1406.7 1849.4,1427.6 1853.4,1426.1 1857.4,1438.4 1861.4,1442.5 1865.4,1451.6 1869.4,1451.0 1873.4,1448.1 1877.4,1456.6 1881.4,1459.9 1885.4,1464.4 1889.4,1469.1 1893.4,1474.6 1897.4,1473.4 1901.4,1470.9 1905.4,1469.9 1909.4,1461.5 1913.4,1449.0 1917.4,1445.5 1921.4,1442.7 1925.4,1453.1 1929.4,1452.5 1933.4,1464.3 1937.4,1471.8 1941.4,1476.4 1945.4,1488.3 1949.4,1489.2 1953.4,1487.7 1957.4,1482.3 1961.4,1484.2 1965.4,1488.8 1969.4,1491.2 1973.4,1489.5 1977.4,1493.8 1981.4,1489.3 1985.4,1487.8 1989.4,1490.6 1993.4,1496.5 1997.4,1497.5 2001.4,1499.5 2005.4,1502.8 2009.4,1501.4 2013.4,1504.5 2017.4,1504.5 2021.4,1501.7 2025.4,1499.7 2029.4,1504.5 2033.4,1501.7 2037.4,1495.7 2041.4,1502.8 2045.4,1503.4 2049.4,1503.9 2053.4,1504.5 2057.4,1504.5 2061.4,1501.1 2065.4,1499.9 2069.4,1496.5 2073.4,1496.2 2077.4,1496.4 2081.4,1499.3 2085.4,1500.4 2089.4,1500.3 2093.4,1498.8 2097.4,1498.5 2101.4,1494.7 2105.4,1495.8 2109.4,1498.6 2113.4,1499.3" fill="none" stroke="#8c8c8c" stroke-opacity="0.11" stroke-width="1.3"/><polyline points="497.4,1475.7 501.4,1479.2 505.4,1486.8 509.4,1496.2 513.4,1502.0 517.4,1505.3 521.4,1505.4 525.4,1505.4 529.4,1501.8 533.4,1503.9 537.4,1505.5 541.4,1505.5 545.4,1503.5 549.4,1500.0 553.4,1501.2 557.4,1503.8 561.4,1501.8 565.4,1498.9 569.4,1496.3 573.4,1493.0 577.4,1495.0 581.4,1499.3 585.4,1502.0 589.4,1500.9 593.4,1502.3 597.4,1498.4 601.4,1501.2 605.4,1499.3 609.4,1494.1 613.4,1495.0 617.4,1491.2 621.4,1486.9 625.4,1472.4 629.4,1469.3 633.4,1470.2 637.4,1482.3 641.4,1462.4 645.4,1476.0 649.4,1458.4 653.4,1446.1 657.4,1451.2 661.4,1439.3 665.4,1429.8 669.4,1436.8 673.4,1427.6 677.4,1441.9 681.4,1427.9 685.4,1442.8 689.4,1458.6 693.4,1462.3 697.4,1449.5 701.4,1461.8 705.4,1453.3 709.4,1458.4 713.4,1457.5 717.4,1456.7 721.4,1458.6 725.4,1462.3 729.4,1463.2 733.4,1460.5 737.4,1460.9 741.4,1464.0 745.4,1460.6 749.4,1468.5 753.4,1477.4 757.4,1482.0 761.4,1487.0 765.4,1484.4 769.4,1485.7 773.4,1481.4 777.4,1480.5 781.4,1469.8 785.4,1457.8 789.4,1455.6 793.4,1451.5 797.4,1442.1 801.4,1428.2 805.4,1402.5 809.4,1389.6 813.4,1374.9 817.4,1352.5 821.4,1360.4 825.4,1358.3 829.4,1352.0 833.4,1331.2 837.4,1340.8 841.4,1326.8 845.4,1317.8 849.4,1325.8 853.4,1336.5 857.4,1358.0 861.4,1368.8 865.4,1390.5 869.4,1404.4 873.4,1412.1 877.4,1419.9 881.4,1406.5 885.4,1397.4 889.4,1381.4 893.4,1399.1 897.4,1408.5 901.4,1420.7 905.4,1423.7 909.4,1426.5 913.4,1417.6 917.4,1428.8 921.4,1444.2 925.4,1439.6 929.4,1423.2 933.4,1413.1 937.4,1411.5 941.4,1426.9 945.4,1439.5 949.4,1442.5 953.4,1435.2 957.4,1427.5 961.4,1421.5 965.4,1432.9 969.4,1435.3 973.4,1450.0 977.4,1460.6 981.4,1465.4 985.4,1461.2 989.4,1462.0 993.4,1445.3 997.4,1434.0 1001.4,1434.3 1005.4,1433.7 1009.4,1424.4 1013.4,1415.1 1017.4,1395.4 1021.4,1405.8 1025.4,1407.4 1029.4,1417.3 1033.4,1426.4 1037.4,1421.2 1041.4,1423.0 1045.4,1416.7 1049.4,1419.8 1053.4,1424.2 1057.4,1415.4 1061.4,1401.0 1065.4,1388.9 1069.4,1391.4 1073.4,1388.6 1077.4,1371.7 1081.4,1388.6 1085.4,1400.5 1089.4,1396.1 1093.4,1376.0 1097.4,1387.5 1101.4,1387.4 1105.4,1371.7 1109.4,1364.7 1113.4,1369.1 1117.4,1386.5 1121.4,1390.1 1125.4,1398.9 1129.4,1394.8 1133.4,1393.1 1137.4,1416.1 1141.4,1417.4 1145.4,1405.2 1149.4,1413.3 1153.4,1398.1 1157.4,1387.1 1161.4,1387.6 1165.4,1393.1 1169.4,1402.0 1173.4,1412.7 1177.4,1415.6 1181.4,1410.2 1185.4,1419.6 1189.4,1418.1 1193.4,1422.1 1197.4,1426.1 1201.4,1432.5 1205.4,1438.9 1209.4,1435.2 1213.4,1439.7 1217.4,1439.8 1221.4,1431.9 1225.4,1417.7 1229.4,1416.8 1233.4,1413.3 1237.4,1398.5 1241.4,1388.6 1245.4,1400.1 1249.4,1385.0 1253.4,1375.2 1257.4,1381.3 1261.4,1389.0 1265.4,1390.5 1269.4,1399.2 1273.4,1378.5 1277.4,1362.9 1281.4,1380.9 1285.4,1389.3 1289.4,1370.2 1293.4,1350.7 1297.4,1342.3 1301.4,1360.0 1305.4,1351.4 1309.4,1361.2 1313.4,1380.7 1317.4,1387.1 1321.4,1401.7 1325.4,1390.6 1329.4,1376.7 1333.4,1359.7 1337.4,1367.2 1341.4,1352.4 1345.4,1367.3 1349.4,1374.4 1353.4,1361.7 1357.4,1374.3 1361.4,1366.2 1365.4,1372.7 1369.4,1363.0 1373.4,1381.4 1377.4,1405.3 1381.4,1425.0 1385.4,1408.1 1389.4,1423.4 1393.4,1428.4 1397.4,1441.0 1401.4,1443.7 1405.4,1449.9 1409.4,1454.3 1413.4,1461.0 1417.4,1457.9 1421.4,1449.0 1425.4,1452.9 1429.4,1450.1 1433.4,1449.3 1437.4,1439.5 1441.4,1446.3 1445.4,1427.2 1449.4,1422.8 1453.4,1419.5 1457.4,1411.4 1461.4,1394.0 1465.4,1396.4 1469.4,1380.1 1473.4,1372.4 1477.4,1365.0 1481.4,1385.8 1485.4,1384.1 1489.4,1370.5 1493.4,1345.0 1497.4,1352.3 1501.4,1366.7 1505.4,1382.1 1509.4,1355.1 1513.4,1343.1 1517.4,1329.0 1521.4,1343.7 1525.4,1331.5 1529.4,1343.5 1533.4,1368.9 1537.4,1384.9 1541.4,1367.5 1545.4,1349.3 1549.4,1346.2 1553.4,1352.4 1557.4,1353.0 1561.4,1351.3 1565.4,1347.4 1569.4,1341.2 1573.4,1345.2 1577.4,1354.1 1581.4,1372.9 1585.4,1384.7 1589.4,1398.6 1593.4,1417.9 1597.4,1434.1 1601.4,1446.2 1605.4,1446.5 1609.4,1457.6 1613.4,1462.6 1617.4,1461.7 1621.4,1469.3 1625.4,1463.4 1629.4,1473.5 1633.4,1472.5 1637.4,1477.7 1641.4,1473.1 1645.4,1469.9 1649.4,1467.9 1653.4,1465.9 1657.4,1460.8 1661.4,1461.5 1665.4,1468.8 1669.4,1471.2 1673.4,1475.7 1677.4,1477.0 1681.4,1474.1 1685.4,1470.5 1689.4,1466.9 1693.4,1458.5 1697.4,1450.8 1701.4,1448.7 1705.4,1438.1 1709.4,1429.6 1713.4,1436.2 1717.4,1442.2 1721.4,1435.6 1725.4,1438.3 1729.4,1441.8 1733.4,1442.5 1737.4,1440.5 1741.4,1438.5 1745.4,1427.7 1749.4,1435.1 1753.4,1431.8 1757.4,1437.1 1761.4,1435.2 1765.4,1438.4 1769.4,1446.7 1773.4,1440.0 1777.4,1442.5 1781.4,1447.9 1785.4,1447.0 1789.4,1448.8 1793.4,1444.0 1797.4,1444.8 1801.4,1444.2 1805.4,1444.2 1809.4,1431.8 1813.4,1424.4 1817.4,1418.9 1821.4,1435.0 1825.4,1428.6 1829.4,1429.9 1833.4,1439.5 1837.4,1451.9 1841.4,1446.3 1845.4,1445.8 1849.4,1449.8 1853.4,1454.7 1857.4,1461.4 1861.4,1468.8 1865.4,1465.8 1869.4,1463.4 1873.4,1457.6 1877.4,1464.1 1881.4,1462.7 1885.4,1462.8 1889.4,1471.6 1893.4,1475.6 1897.4,1478.3 1901.4,1477.0 1905.4,1473.0 1909.4,1468.7 1913.4,1460.0 1917.4,1444.9 1921.4,1438.7 1925.4,1433.7 1929.4,1435.9 1933.4,1431.0 1937.4,1426.1 1941.4,1433.6 1945.4,1455.5 1949.4,1464.5 1953.4,1458.2 1957.4,1467.1 1961.4,1455.9 1965.4,1440.3 1969.4,1434.6 1973.4,1433.2 1977.4,1441.4 1981.4,1441.5 1985.4,1447.9 1989.4,1429.7 1993.4,1443.9 1997.4,1433.8 2001.4,1446.1 2005.4,1422.9 2009.4,1436.6 2013.4,1421.6 2017.4,1436.0 2021.4,1447.9 2025.4,1454.5 2029.4,1441.8 2033.4,1414.1 2037.4,1402.5 2041.4,1428.1 2045.4,1419.4 2049.4,1432.7 2053.4,1441.3 2057.4,1450.8 2061.4,1442.9 2065.4,1441.1 2069.4,1444.8 2073.4,1461.5 2077.4,1459.5 2081.4,1465.4 2085.4,1468.5 2089.4,1461.1 2093.4,1453.0 2097.4,1453.0 2101.4,1461.0 2105.4,1453.0 2109.4,1459.9 2113.4,1457.4" fill="none" stroke="#8c8c8c" stroke-opacity="0.16" stroke-width="1.3"/><polyline points="497.4,1458.6 501.4,1455.3 505.4,1454.2 509.4,1456.4 513.4,1450.5 517.4,1453.2 521.4,1462.7 525.4,1460.5 529.4,1461.6 533.4,1467.7 537.4,1464.0 541.4,1465.2 545.4,1466.4 549.4,1467.0 553.4,1467.3 557.4,1470.1 561.4,1469.9 565.4,1476.0 569.4,1468.6 573.4,1470.5 577.4,1475.8 581.4,1470.6 585.4,1464.6 589.4,1462.6 593.4,1460.6 597.4,1458.6 601.4,1461.8 605.4,1455.3 609.4,1453.7 613.4,1452.1 617.4,1449.3 621.4,1445.4 625.4,1441.4 629.4,1437.4 633.4,1433.7 637.4,1431.2 641.4,1428.7 645.4,1445.9 649.4,1448.4 653.4,1429.5 657.4,1426.2 661.4,1431.5 665.4,1433.3 669.4,1454.3 673.4,1477.0 677.4,1492.6 681.4,1475.2 685.4,1492.5 689.4,1492.2 693.4,1484.3 697.4,1473.7 701.4,1485.6 705.4,1478.7 709.4,1471.1 713.4,1466.2 717.4,1474.8 721.4,1472.8 725.4,1476.1 729.4,1466.5 733.4,1465.0 737.4,1461.3 741.4,1457.2 745.4,1461.9 749.4,1461.4 753.4,1461.2 757.4,1465.8 761.4,1462.3 765.4,1450.6 769.4,1442.3 773.4,1442.0 777.4,1438.1 781.4,1428.2 785.4,1415.2 789.4,1409.6 793.4,1397.3 797.4,1372.1 801.4,1360.6 805.4,1354.2 809.4,1351.9 813.4,1331.2 817.4,1341.0 821.4,1360.9 825.4,1372.2 829.4,1391.0 833.4,1380.3 837.4,1398.0 841.4,1384.8 845.4,1374.6 849.4,1384.6 853.4,1400.7 857.4,1374.3 861.4,1357.4 865.4,1331.0 869.4,1327.7 873.4,1316.9 877.4,1322.1 881.4,1338.3 885.4,1346.0 889.4,1366.7 893.4,1365.6 897.4,1375.7 901.4,1360.3 905.4,1388.6 909.4,1383.6 913.4,1389.9 917.4,1397.3 921.4,1418.6 925.4,1419.0 929.4,1435.2 933.4,1437.1 937.4,1431.0 941.4,1443.9 945.4,1439.6 949.4,1456.0 953.4,1458.7 957.4,1456.4 961.4,1467.3 965.4,1466.6 969.4,1466.3 973.4,1464.6 977.4,1467.9 981.4,1459.6 985.4,1455.7 989.4,1442.7 993.4,1437.8 997.4,1421.3 1001.4,1421.8 1005.4,1413.3 1009.4,1409.8 1013.4,1409.5 1017.4,1413.2 1021.4,1396.0 1025.4,1380.4 1029.4,1372.3 1033.4,1383.9 1037.4,1366.9 1041.4,1358.4 1045.4,1354.5 1049.4,1353.0 1053.4,1363.6 1057.4,1341.0 1061.4,1334.0 1065.4,1333.6 1069.4,1338.4 1073.4,1337.8 1077.4,1337.6 1081.4,1356.4 1085.4,1364.3 1089.4,1378.3 1093.4,1392.5 1097.4,1382.3 1101.4,1395.3 1105.4,1392.2 1109.4,1376.1 1113.4,1391.0 1117.4,1380.5 1121.4,1368.2 1125.4,1365.6 1129.4,1363.4 1133.4,1386.1 1137.4,1407.1 1141.4,1409.6 1145.4,1416.2 1149.4,1436.4 1153.4,1448.3 1157.4,1452.0 1161.4,1451.0 1165.4,1438.1 1169.4,1428.1 1173.4,1434.8 1177.4,1439.5 1181.4,1450.1 1185.4,1461.0 1189.4,1470.9 1193.4,1468.5 1197.4,1465.1 1201.4,1472.3 1205.4,1474.8 1209.4,1470.3 1213.4,1471.6 1217.4,1463.1 1221.4,1452.7 1225.4,1442.0 1229.4,1434.7 1233.4,1438.4 1237.4,1427.2 1241.4,1436.3 1245.4,1439.6 1249.4,1437.2 1253.4,1444.9 1257.4,1448.4 1261.4,1426.2 1265.4,1422.6 1269.4,1425.8 1273.4,1429.8 1277.4,1431.8 1281.4,1418.4 1285.4,1432.8 1289.4,1442.4 1293.4,1431.6 1297.4,1427.4 1301.4,1441.8 1305.4,1431.4 1309.4,1429.2 1313.4,1437.5 1317.4,1439.9 1321.4,1431.4 1325.4,1435.9 1329.4,1433.7 1333.4,1438.7 1337.4,1440.2 1341.4,1429.5 1345.4,1420.3 1349.4,1413.0 1353.4,1408.3 1357.4,1398.1 1361.4,1388.5 1365.4,1390.8 1369.4,1394.5 1373.4,1383.9 1377.4,1394.2 1381.4,1415.9 1385.4,1420.7 1389.4,1418.6 1393.4,1428.5 1397.4,1429.5 1401.4,1423.0 1405.4,1426.0 1409.4,1416.2 1413.4,1424.8 1417.4,1419.6 1421.4,1423.1 1425.4,1438.2 1429.4,1446.6 1433.4,1456.2 1437.4,1461.0 1441.4,1463.9 1445.4,1465.6 1449.4,1461.4 1453.4,1448.6 1457.4,1447.9 1461.4,1442.7 1465.4,1440.7 1469.4,1449.0 1473.4,1452.7 1477.4,1461.3 1481.4,1465.4 1485.4,1461.8 1489.4,1449.9 1493.4,1434.4 1497.4,1431.4 1501.4,1433.2 1505.4,1425.5 1509.4,1410.2 1513.4,1379.6 1517.4,1359.6 1521.4,1371.2 1525.4,1349.2 1529.4,1342.4 1533.4,1342.0 1537.4,1357.4 1541.4,1376.6 1545.4,1356.4 1549.4,1346.2 1553.4,1361.8 1557.4,1374.9 1561.4,1360.3 1565.4,1352.1 1569.4,1350.6 1573.4,1343.0 1577.4,1343.1 1581.4,1345.5 1585.4,1344.1 1589.4,1347.4 1593.4,1354.0 1597.4,1368.0 1601.4,1381.9 1605.4,1399.6 1609.4,1418.5 1613.4,1411.4 1617.4,1418.0 1621.4,1422.8 1625.4,1417.8 1629.4,1418.0 1633.4,1412.7 1637.4,1424.3 1641.4,1427.9 1645.4,1418.6 1649.4,1413.5 1653.4,1417.7 1657.4,1413.4 1661.4,1419.7 1665.4,1414.2 1669.4,1426.3 1673.4,1438.0 1677.4,1428.5 1681.4,1425.6 1685.4,1410.9 1689.4,1408.2 1693.4,1408.4 1697.4,1410.9 1701.4,1399.3 1705.4,1377.8 1709.4,1376.8 1713.4,1373.7 1717.4,1351.3 1721.4,1345.3 1725.4,1343.6 1729.4,1333.4 1733.4,1336.5 1737.4,1325.1 1741.4,1321.1 1745.4,1317.1 1749.4,1316.2 1753.4,1327.0 1757.4,1310.3 1761.4,1321.9 1765.4,1307.1 1769.4,1307.9 1773.4,1318.1 1777.4,1331.8 1781.4,1339.1 1785.4,1362.2 1789.4,1342.3 1793.4,1330.6 1797.4,1340.0 1801.4,1325.5 1805.4,1310.2 1809.4,1312.2 1813.4,1330.0 1817.4,1351.1 1821.4,1368.5 1825.4,1402.7 1829.4,1425.3 1833.4,1421.9 1837.4,1416.0 1841.4,1429.6 1845.4,1409.7 1849.4,1417.5 1853.4,1401.1 1857.4,1383.2 1861.4,1384.9 1865.4,1382.0 1869.4,1405.7 1873.4,1425.3 1877.4,1429.9 1881.4,1425.9 1885.4,1418.6 1889.4,1422.7 1893.4,1427.1 1897.4,1425.3 1901.4,1422.9 1905.4,1414.8 1909.4,1414.6 1913.4,1389.7 1917.4,1387.7 1921.4,1391.7 1925.4,1395.7 1929.4,1399.8 1933.4,1411.6 1937.4,1414.1 1941.4,1422.1 1945.4,1430.1 1949.4,1441.3 1953.4,1448.4 1957.4,1443.2 1961.4,1440.0 1965.4,1454.9 1969.4,1471.9 1973.4,1475.9 1977.4,1462.9 1981.4,1463.0 1985.4,1467.6 1989.4,1458.4 1993.4,1437.5 1997.4,1455.2 2001.4,1471.8 2005.4,1453.6 2009.4,1450.8 2013.4,1454.3 2017.4,1442.4 2021.4,1419.4 2025.4,1429.0 2029.4,1440.6 2033.4,1435.6 2037.4,1417.4 2041.4,1418.5 2045.4,1416.3 2049.4,1441.7 2053.4,1429.7 2057.4,1433.1 2061.4,1446.7 2065.4,1441.1 2069.4,1444.8 2073.4,1446.8 2077.4,1448.8 2081.4,1451.6 2085.4,1462.5 2089.4,1453.9 2093.4,1453.0 2097.4,1459.6 2101.4,1457.3 2105.4,1453.5 2109.4,1453.0 2113.4,1453.0" fill="none" stroke="#8c8c8c" stroke-opacity="0.18" stroke-width="1.3"/><polyline points="497.4,1447.5 501.4,1453.4 505.4,1462.1 509.4,1472.4 513.4,1474.9 517.4,1487.8 521.4,1492.4 525.4,1490.6 529.4,1490.5 533.4,1492.9 537.4,1495.3 541.4,1492.3 545.4,1488.2 549.4,1494.8 553.4,1490.6 557.4,1495.2 561.4,1492.8 565.4,1487.8 569.4,1483.6 573.4,1483.2 577.4,1491.8 581.4,1485.8 585.4,1492.8 589.4,1489.1 593.4,1481.1 597.4,1485.5 601.4,1480.9 605.4,1472.5 609.4,1469.3 613.4,1476.3 617.4,1485.2 621.4,1487.6 625.4,1471.6 629.4,1479.9 633.4,1483.7 637.4,1494.8 641.4,1498.9 645.4,1497.6 649.4,1500.5 653.4,1502.9 657.4,1500.5 661.4,1499.0 665.4,1498.3 669.4,1499.2 673.4,1497.0 677.4,1491.2 681.4,1478.9 685.4,1493.0 689.4,1491.6 693.4,1492.4 697.4,1495.9 701.4,1498.3 705.4,1495.4 709.4,1499.8 713.4,1502.9 717.4,1505.5 721.4,1505.4 725.4,1503.6 729.4,1499.3 733.4,1496.2 737.4,1496.9 741.4,1495.1 745.4,1496.2 749.4,1492.7 753.4,1492.5 757.4,1491.0 761.4,1492.2 765.4,1490.4 769.4,1491.5 773.4,1490.7 777.4,1489.9 781.4,1486.1 785.4,1482.3 789.4,1473.9 793.4,1465.5 797.4,1457.1 801.4,1445.6 805.4,1448.2 809.4,1447.0 813.4,1444.1 817.4,1438.3 821.4,1441.8 825.4,1439.8 829.4,1437.8 833.4,1428.5 837.4,1426.5 841.4,1422.5 845.4,1415.3 849.4,1413.4 853.4,1386.9 857.4,1396.3 861.4,1381.2 865.4,1356.9 869.4,1334.1 873.4,1350.2 877.4,1339.1 881.4,1341.4 885.4,1341.6 889.4,1356.7 893.4,1378.0 897.4,1373.1 901.4,1385.4 905.4,1412.4 909.4,1418.1 913.4,1438.1 917.4,1447.1 921.4,1443.7 925.4,1452.8 929.4,1454.7 933.4,1442.7 937.4,1447.0 941.4,1458.6 945.4,1461.5 949.4,1463.9 953.4,1465.1 957.4,1474.6 961.4,1479.2 965.4,1475.8 969.4,1474.5 973.4,1473.1 977.4,1480.9 981.4,1484.3 985.4,1476.8 989.4,1482.2 993.4,1466.8 997.4,1467.3 1001.4,1464.0 1005.4,1468.2 1009.4,1465.1 1013.4,1454.7 1017.4,1453.9 1021.4,1459.3 1025.4,1461.0 1029.4,1452.4 1033.4,1440.5 1037.4,1442.2 1041.4,1444.9 1045.4,1434.0 1049.4,1437.9 1053.4,1436.2 1057.4,1436.5 1061.4,1435.0 1065.4,1442.2 1069.4,1444.2 1073.4,1436.6 1077.4,1433.4 1081.4,1430.5 1085.4,1438.5 1089.4,1425.2 1093.4,1421.4 1097.4,1417.0 1101.4,1417.4 1105.4,1407.3 1109.4,1421.0 1113.4,1436.5 1117.4,1440.5 1121.4,1444.5 1125.4,1439.1 1129.4,1452.5 1133.4,1456.6 1137.4,1460.6 1141.4,1464.6 1145.4,1466.1 1149.4,1472.6 1153.4,1470.7 1157.4,1462.3 1161.4,1461.5 1165.4,1469.8 1169.4,1478.6 1173.4,1478.6 1177.4,1478.6 1181.4,1478.6 1185.4,1478.6 1189.4,1472.8 1193.4,1477.0 1197.4,1482.4 1201.4,1483.3 1205.4,1486.4 1209.4,1482.5 1213.4,1477.4 1217.4,1472.8 1221.4,1469.5 1225.4,1464.6 1229.4,1448.9 1233.4,1433.9 1237.4,1429.8 1241.4,1438.1 1245.4,1444.4 1249.4,1436.4 1253.4,1430.2 1257.4,1423.1 1261.4,1402.3 1265.4,1403.2 1269.4,1418.8 1273.4,1403.8 1277.4,1405.1 1281.4,1410.0 1285.4,1415.9 1289.4,1421.5 1293.4,1429.8 1297.4,1419.9 1301.4,1430.6 1305.4,1443.1 1309.4,1430.1 1313.4,1438.0 1317.4,1433.8 1321.4,1422.9 1325.4,1412.4 1329.4,1417.3 1333.4,1421.9 1337.4,1412.8 1341.4,1411.0 1345.4,1413.3 1349.4,1423.4 1353.4,1418.6 1357.4,1422.6 1361.4,1424.0 1365.4,1424.8 1369.4,1426.3 1373.4,1433.2 1377.4,1442.2 1381.4,1439.9 1385.4,1429.7 1389.4,1422.3 1393.4,1412.6 1397.4,1406.8 1401.4,1405.2 1405.4,1409.3 1409.4,1411.1 1413.4,1415.1 1417.4,1419.1 1421.4,1435.0 1425.4,1438.1 1429.4,1450.8 1433.4,1451.7 1437.4,1446.4 1441.4,1449.4 1445.4,1434.2 1449.4,1411.8 1453.4,1397.5 1457.4,1396.3 1461.4,1408.4 1465.4,1402.6 1469.4,1393.7 1473.4,1386.9 1477.4,1375.4 1481.4,1381.3 1485.4,1371.0 1489.4,1350.2 1493.4,1364.4 1497.4,1363.4 1501.4,1334.6 1505.4,1349.7 1509.4,1357.7 1513.4,1345.0 1517.4,1348.7 1521.4,1372.6 1525.4,1370.4 1529.4,1369.8 1533.4,1365.8 1537.4,1374.1 1541.4,1381.9 1545.4,1391.8 1549.4,1410.1 1553.4,1389.9 1557.4,1379.3 1561.4,1390.8 1565.4,1399.0 1569.4,1400.5 1573.4,1404.5 1577.4,1402.5 1581.4,1416.9 1585.4,1420.8 1589.4,1420.8 1593.4,1419.4 1597.4,1420.1 1601.4,1437.6 1605.4,1451.1 1609.4,1452.9 1613.4,1449.0 1617.4,1447.0 1621.4,1445.3 1625.4,1440.5 1629.4,1448.4 1633.4,1445.2 1637.4,1448.3 1641.4,1459.4 1645.4,1463.6 1649.4,1464.2 1653.4,1462.6 1657.4,1462.2 1661.4,1465.0 1665.4,1469.6 1669.4,1467.7 1673.4,1467.4 1677.4,1464.0 1681.4,1457.3 1685.4,1455.3 1689.4,1449.2 1693.4,1440.0 1697.4,1434.8 1701.4,1442.2 1705.4,1433.9 1709.4,1433.8 1713.4,1423.0 1717.4,1407.3 1721.4,1379.4 1725.4,1390.0 1729.4,1367.4 1733.4,1349.1 1737.4,1325.1 1741.4,1321.1 1745.4,1330.5 1749.4,1340.2 1753.4,1361.7 1757.4,1387.5 1761.4,1391.0 1765.4,1410.4 1769.4,1398.1 1773.4,1417.7 1777.4,1416.8 1781.4,1402.3 1785.4,1408.3 1789.4,1417.3 1793.4,1414.1 1797.4,1401.2 1801.4,1410.2 1805.4,1416.6 1809.4,1421.0 1813.4,1436.0 1817.4,1423.6 1821.4,1415.0 1825.4,1411.7 1829.4,1391.5 1833.4,1409.2 1837.4,1421.5 1841.4,1403.1 1845.4,1390.5 1849.4,1381.6 1853.4,1388.0 1857.4,1396.0 1861.4,1416.6 1865.4,1415.7 1869.4,1438.6 1873.4,1440.9 1877.4,1442.1 1881.4,1439.2 1885.4,1435.2 1889.4,1452.2 1893.4,1466.7 1897.4,1471.6 1901.4,1467.8 1905.4,1451.0 1909.4,1426.0 1913.4,1409.0 1917.4,1412.7 1921.4,1405.2 1925.4,1411.1 1929.4,1422.0 1933.4,1413.4 1937.4,1419.3 1941.4,1436.3 1945.4,1446.1 1949.4,1448.9 1953.4,1460.2 1957.4,1463.6 1961.4,1457.9 1965.4,1453.6 1969.4,1471.0 1973.4,1483.4 1977.4,1489.3 1981.4,1490.9 1985.4,1487.3 1989.4,1479.0 1993.4,1474.4 1997.4,1481.1 2001.4,1457.4 2005.4,1470.1 2009.4,1482.8 2013.4,1481.2 2017.4,1455.4 2021.4,1467.5 2025.4,1462.1 2029.4,1469.6 2033.4,1472.7 2037.4,1479.1 2041.4,1478.7 2045.4,1488.1 2049.4,1496.9 2053.4,1503.4 2057.4,1504.5 2061.4,1502.8 2065.4,1501.8 2069.4,1500.0 2073.4,1503.4 2077.4,1504.5 2081.4,1504.5 2085.4,1504.5 2089.4,1503.8 2093.4,1503.0 2097.4,1500.7 2101.4,1501.3 2105.4,1497.3 2109.4,1497.6 2113.4,1491.3" fill="none" stroke="#8c8c8c" stroke-opacity="0.17" stroke-width="1.3"/><polyline points="497.4,1467.8 501.4,1475.2 505.4,1470.6 509.4,1480.5 513.4,1487.6 517.4,1487.2 521.4,1493.5 525.4,1494.6 529.4,1498.8 533.4,1499.8 537.4,1499.1 541.4,1503.4 545.4,1499.9 549.4,1502.5 553.4,1499.5 557.4,1498.1 561.4,1494.2 565.4,1496.6 569.4,1496.0 573.4,1498.3 577.4,1496.5 581.4,1498.8 585.4,1500.3 589.4,1497.1 593.4,1496.6 597.4,1498.1 601.4,1495.1 605.4,1496.1 609.4,1493.5 613.4,1491.6 617.4,1496.1 621.4,1500.9 625.4,1506.0 629.4,1505.3 633.4,1506.0 637.4,1506.0 641.4,1506.1 645.4,1505.7 649.4,1506.1 653.4,1505.3 657.4,1506.2 661.4,1505.9 665.4,1502.5 669.4,1510.0 673.4,1504.2 677.4,1503.2 681.4,1498.9 685.4,1503.3 689.4,1503.5 693.4,1505.8 697.4,1501.9 701.4,1503.2 705.4,1501.8 709.4,1499.0 713.4,1502.3 717.4,1497.1 721.4,1496.0 725.4,1489.2 729.4,1490.9 733.4,1494.2 737.4,1489.4 741.4,1488.7 745.4,1488.1 749.4,1489.7 753.4,1491.0 757.4,1489.8 761.4,1491.7 765.4,1489.0 769.4,1485.3 773.4,1486.3 777.4,1482.8 781.4,1477.9 785.4,1468.3 789.4,1458.4 793.4,1436.0 797.4,1442.2 801.4,1432.3 805.4,1427.5 809.4,1415.6 813.4,1423.9 817.4,1415.0 821.4,1421.5 825.4,1421.7 829.4,1431.2 833.4,1435.8 837.4,1440.0 841.4,1445.0 845.4,1450.0 849.4,1448.9 853.4,1431.6 857.4,1439.2 861.4,1435.6 865.4,1436.8 869.4,1438.0 873.4,1430.8 877.4,1430.7 881.4,1441.3 885.4,1442.1 889.4,1442.9 893.4,1433.6 897.4,1441.6 901.4,1448.5 905.4,1451.6 909.4,1449.5 913.4,1446.6 917.4,1450.2 921.4,1451.0 925.4,1446.3 929.4,1441.9 933.4,1442.0 937.4,1451.3 941.4,1456.3 945.4,1450.7 949.4,1463.0 953.4,1463.3 957.4,1474.4 961.4,1484.6 965.4,1479.6 969.4,1481.7 973.4,1487.2 977.4,1486.0 981.4,1487.3 985.4,1484.0 989.4,1470.5 993.4,1457.4 997.4,1445.5 1001.4,1439.0 1005.4,1442.1 1009.4,1443.6 1013.4,1453.3 1017.4,1456.1 1021.4,1451.9 1025.4,1456.5 1029.4,1454.3 1033.4,1450.5 1037.4,1453.1 1041.4,1448.4 1045.4,1440.5 1049.4,1438.2 1053.4,1431.2 1057.4,1438.2 1061.4,1433.1 1065.4,1442.2 1069.4,1430.1 1073.4,1416.6 1077.4,1422.1 1081.4,1415.8 1085.4,1415.7 1089.4,1400.0 1093.4,1406.2 1097.4,1407.6 1101.4,1409.5 1105.4,1418.4 1109.4,1432.6 1113.4,1436.5 1117.4,1440.5 1121.4,1429.7 1125.4,1420.3 1129.4,1423.6 1133.4,1443.1 1137.4,1444.6 1141.4,1451.4 1145.4,1447.4 1149.4,1450.5 1153.4,1459.6 1157.4,1462.6 1161.4,1469.0 1165.4,1456.5 1169.4,1447.4 1173.4,1440.0 1177.4,1450.0 1181.4,1444.1 1185.4,1456.5 1189.4,1455.5 1193.4,1464.8 1197.4,1467.9 1201.4,1466.6 1205.4,1475.1 1209.4,1473.9 1213.4,1475.2 1217.4,1464.1 1221.4,1465.8 1225.4,1472.4 1229.4,1458.6 1233.4,1463.7 1237.4,1456.2 1241.4,1448.3 1245.4,1445.9 1249.4,1449.3 1253.4,1463.7 1257.4,1477.9 1261.4,1475.9 1265.4,1471.9 1269.4,1467.9 1273.4,1452.9 1277.4,1457.7 1281.4,1459.2 1285.4,1453.8 1289.4,1461.4 1293.4,1451.4 1297.4,1435.2 1301.4,1421.3 1305.4,1412.3 1309.4,1417.8 1313.4,1424.0 1317.4,1415.8 1321.4,1413.3 1325.4,1412.1 1329.4,1411.4 1333.4,1409.0 1337.4,1409.9 1341.4,1395.4 1345.4,1379.3 1349.4,1376.4 1353.4,1365.8 1357.4,1376.5 1361.4,1371.5 1365.4,1390.5 1369.4,1386.9 1373.4,1376.5 1377.4,1381.9 1381.4,1382.5 1385.4,1384.3 1389.4,1399.0 1393.4,1395.1 1397.4,1404.3 1401.4,1417.9 1405.4,1420.1 1409.4,1423.9 1413.4,1439.0 1417.4,1445.0 1421.4,1439.9 1425.4,1432.8 1429.4,1429.1 1433.4,1431.1 1437.4,1433.1 1441.4,1438.3 1445.4,1427.9 1449.4,1411.8 1453.4,1397.9 1457.4,1404.7 1461.4,1391.4 1465.4,1379.5 1469.4,1374.5 1473.4,1369.7 1477.4,1386.0 1481.4,1393.3 1485.4,1385.3 1489.4,1361.6 1493.4,1345.0 1497.4,1339.8 1501.4,1353.8 1505.4,1357.9 1509.4,1334.5 1513.4,1336.8 1517.4,1318.1 1521.4,1318.4 1525.4,1326.0 1529.4,1334.0 1533.4,1351.3 1537.4,1366.5 1541.4,1367.4 1545.4,1353.1 1549.4,1359.2 1553.4,1354.3 1557.4,1357.0 1561.4,1339.8 1565.4,1352.6 1569.4,1334.2 1573.4,1334.0 1577.4,1337.3 1581.4,1340.7 1585.4,1344.1 1589.4,1354.4 1593.4,1379.9 1597.4,1386.3 1601.4,1391.2 1605.4,1409.4 1609.4,1414.6 1613.4,1411.2 1617.4,1415.2 1621.4,1412.5 1625.4,1406.8 1629.4,1407.9 1633.4,1410.8 1637.4,1423.8 1641.4,1435.5 1645.4,1427.8 1649.4,1427.8 1653.4,1427.5 1657.4,1418.3 1661.4,1423.3 1665.4,1426.0 1669.4,1438.0 1673.4,1434.5 1677.4,1446.5 1681.4,1448.9 1685.4,1439.1 1689.4,1422.6 1693.4,1416.3 1697.4,1402.0 1701.4,1403.8 1705.4,1405.7 1709.4,1403.2 1713.4,1422.3 1717.4,1399.2 1721.4,1403.9 1725.4,1415.0 1729.4,1391.7 1733.4,1379.1 1737.4,1351.2 1741.4,1352.3 1745.4,1361.4 1749.4,1349.7 1753.4,1358.9 1757.4,1350.5 1761.4,1362.6 1765.4,1349.7 1769.4,1383.4 1773.4,1382.1 1777.4,1349.3 1781.4,1322.1 1785.4,1334.9 1789.4,1355.7 1793.4,1364.7 1797.4,1342.5 1801.4,1364.7 1805.4,1376.4 1809.4,1356.6 1813.4,1352.1 1817.4,1363.6 1821.4,1341.5 1825.4,1329.7 1829.4,1335.7 1833.4,1363.5 1837.4,1398.0 1841.4,1392.1 1845.4,1415.8 1849.4,1430.6 1853.4,1440.8 1857.4,1443.3 1861.4,1454.7 1865.4,1460.4 1869.4,1471.7 1873.4,1475.0 1877.4,1472.0 1881.4,1474.7 1885.4,1476.9 1889.4,1476.8 1893.4,1477.1 1897.4,1478.6 1901.4,1476.6 1905.4,1469.5 1909.4,1457.3 1913.4,1447.1 1917.4,1440.2 1921.4,1441.6 1925.4,1450.3 1929.4,1452.1 1933.4,1459.5 1937.4,1463.1 1941.4,1473.7 1945.4,1482.6 1949.4,1490.6 1953.4,1493.6 1957.4,1490.5 1961.4,1497.3 1965.4,1497.9 1969.4,1496.2 1973.4,1493.0 1977.4,1491.6 1981.4,1495.1 1985.4,1499.6 1989.4,1499.7 1993.4,1502.5 1997.4,1499.1 2001.4,1498.2 2005.4,1496.1 2009.4,1493.4 2013.4,1490.0 2017.4,1492.3 2021.4,1495.7 2025.4,1490.1 2029.4,1484.9 2033.4,1490.0 2037.4,1492.7 2041.4,1496.5 2045.4,1499.3 2049.4,1502.8 2053.4,1500.2 2057.4,1495.9 2061.4,1495.9 2065.4,1492.3 2069.4,1496.8 2073.4,1497.3 2077.4,1498.8 2081.4,1502.5 2085.4,1504.5 2089.4,1501.7 2093.4,1499.6 2097.4,1495.7 2101.4,1496.3 2105.4,1496.6 2109.4,1494.7 2113.4,1491.8" fill="none" stroke="#8c8c8c" stroke-opacity="0.12" stroke-width="1.3"/><polyline points="497.4,1473.4 501.4,1478.0 505.4,1484.5 509.4,1493.7 513.4,1498.3 517.4,1500.8 521.4,1499.8 525.4,1504.8 529.4,1501.7 533.4,1498.4 537.4,1496.4 541.4,1500.7 545.4,1504.0 549.4,1502.7 553.4,1505.6 557.4,1505.6 561.4,1505.0 565.4,1502.2 569.4,1504.7 573.4,1503.6 577.4,1500.4 581.4,1504.0 585.4,1503.6 589.4,1502.8 593.4,1503.5 597.4,1501.2 601.4,1496.6 605.4,1495.1 609.4,1493.5 613.4,1484.5 617.4,1480.7 621.4,1488.2 625.4,1483.0 629.4,1489.3 633.4,1493.1 637.4,1482.4 641.4,1461.5 645.4,1468.3 649.4,1473.4 653.4,1463.8 657.4,1449.8 661.4,1462.6 665.4,1482.7 669.4,1471.2 673.4,1476.1 677.4,1479.5 681.4,1471.2 685.4,1450.8 689.4,1446.7 693.4,1455.4 697.4,1462.0 701.4,1465.1 705.4,1458.5 709.4,1457.2 713.4,1457.5 717.4,1456.7 721.4,1455.9 725.4,1463.3 729.4,1454.7 733.4,1463.9 737.4,1458.7 741.4,1467.1 745.4,1463.7 749.4,1466.8 753.4,1466.1 757.4,1456.5 761.4,1458.5 765.4,1461.9 769.4,1452.2 773.4,1456.1 777.4,1452.4 781.4,1464.2 785.4,1438.2 789.4,1421.7 793.4,1397.4 797.4,1390.4 801.4,1392.5 805.4,1397.7 809.4,1391.9 813.4,1383.0 817.4,1395.7 821.4,1367.9 825.4,1350.4 829.4,1363.0 833.4,1356.6 837.4,1383.3 841.4,1361.9 845.4,1365.1 849.4,1352.6 853.4,1323.5 857.4,1316.8 861.4,1314.4 865.4,1312.0 869.4,1311.8 873.4,1317.3 877.4,1322.1 881.4,1336.2 885.4,1341.4 889.4,1363.8 893.4,1353.2 897.4,1356.4 901.4,1360.6 905.4,1361.7 909.4,1386.4 913.4,1380.5 917.4,1404.1 921.4,1401.7 925.4,1397.6 929.4,1403.2 933.4,1406.6 937.4,1403.2 941.4,1397.1 945.4,1414.2 949.4,1414.5 953.4,1409.1 957.4,1417.6 961.4,1422.3 965.4,1421.5 969.4,1425.1 973.4,1437.4 977.4,1438.2 981.4,1441.1 985.4,1449.8 989.4,1437.4 993.4,1424.3 997.4,1406.5 1001.4,1407.5 1005.4,1409.2 1009.4,1405.1 1013.4,1399.4 1017.4,1388.7 1021.4,1394.0 1025.4,1386.5 1029.4,1393.0 1033.4,1383.6 1037.4,1387.8 1041.4,1366.3 1045.4,1353.7 1049.4,1366.8 1053.4,1369.7 1057.4,1372.9 1061.4,1369.1 1065.4,1367.0 1069.4,1354.6 1073.4,1342.8 1077.4,1350.9 1081.4,1361.3 1085.4,1351.7 1089.4,1358.2 1093.4,1345.2 1097.4,1348.8 1101.4,1342.1 1105.4,1340.9 1109.4,1339.0 1113.4,1340.7 1117.4,1343.7 1121.4,1348.5 1125.4,1357.2 1129.4,1358.1 1133.4,1362.1 1137.4,1373.5 1141.4,1379.9 1145.4,1389.4 1149.4,1405.8 1153.4,1410.6 1157.4,1400.2 1161.4,1399.3 1165.4,1412.7 1169.4,1416.6 1173.4,1427.1 1177.4,1426.8 1181.4,1430.0 1185.4,1445.2 1189.4,1455.7 1193.4,1461.6 1197.4,1457.8 1201.4,1461.4 1205.4,1452.4 1209.4,1462.6 1213.4,1468.5 1217.4,1467.5 1221.4,1458.4 1225.4,1460.4 1229.4,1446.4 1233.4,1454.0 1237.4,1453.6 1241.4,1443.0 1245.4,1452.9 1249.4,1451.1 1253.4,1462.3 1257.4,1466.8 1261.4,1464.9 1265.4,1471.9 1269.4,1458.0 1273.4,1463.9 1277.4,1456.1 1281.4,1439.0 1285.4,1431.4 1289.4,1412.2 1293.4,1395.7 1297.4,1400.4 1301.4,1385.7 1305.4,1375.5 1309.4,1370.2 1313.4,1362.8 1317.4,1381.0 1321.4,1395.6 1325.4,1405.4 1329.4,1414.0 1333.4,1412.5 1337.4,1420.1 1341.4,1413.6 1345.4,1422.6 1349.4,1427.6 1353.4,1429.4 1357.4,1423.5 1361.4,1422.3 1365.4,1435.6 1369.4,1442.7 1373.4,1450.7 1377.4,1454.6 1381.4,1452.4 1385.4,1456.5 1389.4,1457.9 1393.4,1463.3 1397.4,1465.9 1401.4,1464.4 1405.4,1472.9 1409.4,1472.0 1413.4,1475.7 1417.4,1476.1 1421.4,1473.9 1425.4,1476.4 1429.4,1476.0 1433.4,1474.5 1437.4,1473.2 1441.4,1476.6 1445.4,1473.1 1449.4,1467.8 1453.4,1462.2 1457.4,1450.5 1461.4,1452.9 1465.4,1460.5 1469.4,1471.0 1473.4,1471.9 1477.4,1467.7 1481.4,1459.9 1485.4,1459.5 1489.4,1456.4 1493.4,1448.6 1497.4,1445.9 1501.4,1436.4 1505.4,1443.0 1509.4,1439.8 1513.4,1437.3 1517.4,1441.2 1521.4,1431.6 1525.4,1435.4 1529.4,1430.2 1533.4,1435.6 1537.4,1427.2 1541.4,1424.3 1545.4,1427.1 1549.4,1425.7 1553.4,1419.7 1557.4,1417.4 1561.4,1409.6 1565.4,1408.5 1569.4,1396.6 1573.4,1403.4 1577.4,1399.2 1581.4,1410.5 1585.4,1414.6 1589.4,1419.9 1593.4,1428.9 1597.4,1429.1 1601.4,1443.0 1605.4,1447.8 1609.4,1461.1 1613.4,1465.6 1617.4,1469.5 1621.4,1474.8 1625.4,1475.1 1629.4,1477.2 1633.4,1477.6 1637.4,1471.2 1641.4,1464.0 1645.4,1463.5 1649.4,1464.8 1653.4,1460.1 1657.4,1457.5 1661.4,1464.2 1665.4,1464.0 1669.4,1461.2 1673.4,1453.8 1677.4,1454.2 1681.4,1441.1 1685.4,1431.8 1689.4,1424.3 1693.4,1417.1 1697.4,1413.3 1701.4,1423.2 1705.4,1401.3 1709.4,1412.8 1713.4,1397.4 1717.4,1371.9 1721.4,1379.2 1725.4,1377.7 1729.4,1375.5 1733.4,1356.8 1737.4,1369.1 1741.4,1354.8 1745.4,1364.2 1749.4,1345.6 1753.4,1347.8 1757.4,1355.6 1761.4,1347.2 1765.4,1346.5 1769.4,1320.1 1773.4,1330.9 1777.4,1344.6 1781.4,1321.5 1785.4,1323.5 1789.4,1336.6 1793.4,1311.6 1797.4,1332.0 1801.4,1354.5 1805.4,1328.5 1809.4,1316.1 1813.4,1314.2 1817.4,1317.7 1821.4,1323.7 1825.4,1329.7 1829.4,1335.7 1833.4,1341.8 1837.4,1349.1 1841.4,1356.4 1845.4,1377.4 1849.4,1393.1 1853.4,1378.4 1857.4,1374.3 1861.4,1375.4 1865.4,1382.0 1869.4,1390.0 1873.4,1404.6 1877.4,1420.8 1881.4,1440.9 1885.4,1436.3 1889.4,1426.3 1893.4,1437.0 1897.4,1436.2 1901.4,1444.0 1905.4,1432.9 1909.4,1414.7 1913.4,1388.6 1917.4,1402.5 1921.4,1407.5 1925.4,1410.7 1929.4,1413.8 1933.4,1429.2 1937.4,1447.3 1941.4,1453.9 1945.4,1451.0 1949.4,1452.2 1953.4,1464.1 1957.4,1461.3 1961.4,1467.0 1965.4,1469.5 1969.4,1468.7 1973.4,1471.3 1977.4,1463.2 1981.4,1466.6 1985.4,1479.5 1989.4,1463.8 1993.4,1457.3 1997.4,1471.5 2001.4,1487.6 2005.4,1468.6 2009.4,1473.7 2013.4,1477.7 2017.4,1483.7 2021.4,1481.9 2025.4,1469.6 2029.4,1458.5 2033.4,1468.8 2037.4,1477.7 2041.4,1467.8 2045.4,1476.4 2049.4,1483.8 2053.4,1488.8 2057.4,1479.5 2061.4,1480.1 2065.4,1475.7 2069.4,1480.4 2073.4,1476.3 2077.4,1466.3 2081.4,1472.4 2085.4,1467.5 2089.4,1475.0 2093.4,1469.6 2097.4,1470.3 2101.4,1475.8 2105.4,1464.4 2109.4,1465.6 2113.4,1458.7" fill="none" stroke="#8c8c8c" stroke-opacity="0.17" stroke-width="1.3"/><polyline points="497.4,1451.3 501.4,1450.2 505.4,1447.2 509.4,1448.6 513.4,1450.4 517.4,1453.2 521.4,1456.0 525.4,1459.3 529.4,1461.6 533.4,1471.5 537.4,1470.3 541.4,1470.2 545.4,1466.6 549.4,1475.3 553.4,1472.6 557.4,1475.6 561.4,1481.1 565.4,1479.0 569.4,1482.8 573.4,1479.1 577.4,1472.1 581.4,1465.6 585.4,1464.6 589.4,1470.4 593.4,1462.3 597.4,1459.0 601.4,1463.5 605.4,1456.7 609.4,1453.7 613.4,1452.6 617.4,1449.3 621.4,1458.7 625.4,1469.3 629.4,1458.3 633.4,1458.7 637.4,1454.0 641.4,1432.4 645.4,1427.5 649.4,1446.2 653.4,1437.7 657.4,1440.9 661.4,1445.9 665.4,1423.3 669.4,1447.4 673.4,1432.7 677.4,1428.3 681.4,1436.1 685.4,1426.9 689.4,1431.6 693.4,1436.5 697.4,1441.7 701.4,1446.8 705.4,1452.0 709.4,1457.2 713.4,1457.5 717.4,1456.7 721.4,1455.9 725.4,1455.4 729.4,1454.3 733.4,1460.1 737.4,1458.6 741.4,1455.7 745.4,1457.7 749.4,1465.3 753.4,1461.2 757.4,1461.1 761.4,1451.8 765.4,1457.9 769.4,1451.6 773.4,1450.4 777.4,1458.1 781.4,1441.5 785.4,1415.2 789.4,1407.8 793.4,1397.4 797.4,1394.8 801.4,1373.4 805.4,1361.9 809.4,1338.6 813.4,1331.2 817.4,1323.7 821.4,1321.3 825.4,1313.0 829.4,1310.4 833.4,1316.2 837.4,1305.3 841.4,1327.2 845.4,1331.7 849.4,1320.3 853.4,1319.2 857.4,1317.2 861.4,1315.0 865.4,1324.2 869.4,1317.4 873.4,1317.9 877.4,1341.5 881.4,1335.4 885.4,1359.6 889.4,1378.4 893.4,1400.6 897.4,1416.5 901.4,1418.1 905.4,1434.3 909.4,1443.0 913.4,1442.0 917.4,1455.9 921.4,1460.8 925.4,1470.4 929.4,1474.1 933.4,1462.6 937.4,1474.0 941.4,1466.7 945.4,1462.7 949.4,1467.9 953.4,1464.3 957.4,1466.1 961.4,1472.1 965.4,1467.4 969.4,1471.0 973.4,1465.5 977.4,1465.9 981.4,1467.6 985.4,1468.0 989.4,1452.6 993.4,1438.7 997.4,1446.0 1001.4,1442.3 1005.4,1440.0 1009.4,1436.2 1013.4,1441.8 1017.4,1446.2 1021.4,1448.3 1025.4,1440.0 1029.4,1435.1 1033.4,1430.2 1037.4,1418.8 1041.4,1425.7 1045.4,1432.3 1049.4,1434.0 1053.4,1436.2 1057.4,1437.3 1061.4,1440.2 1065.4,1434.4 1069.4,1443.6 1073.4,1446.2 1077.4,1448.2 1081.4,1450.2 1085.4,1452.2 1089.4,1441.3 1093.4,1442.6 1097.4,1435.9 1101.4,1425.4 1105.4,1420.3 1109.4,1431.4 1113.4,1436.5 1117.4,1440.5 1121.4,1444.5 1125.4,1438.7 1129.4,1433.5 1133.4,1441.8 1137.4,1441.3 1141.4,1443.9 1145.4,1442.1 1149.4,1432.3 1153.4,1442.7 1157.4,1431.3 1161.4,1444.7 1165.4,1435.8 1169.4,1444.3 1173.4,1440.2 1177.4,1436.1 1181.4,1437.6 1185.4,1429.6 1189.4,1431.9 1193.4,1432.9 1197.4,1426.1 1201.4,1436.6 1205.4,1435.7 1209.4,1432.6 1213.4,1443.1 1217.4,1435.4 1221.4,1424.3 1225.4,1416.3 1229.4,1408.3 1233.4,1405.1 1237.4,1402.1 1241.4,1398.0 1245.4,1384.2 1249.4,1376.7 1253.4,1391.5 1257.4,1379.0 1261.4,1393.8 1265.4,1407.4 1269.4,1387.7 1273.4,1402.0 1277.4,1381.6 1281.4,1388.5 1285.4,1396.5 1289.4,1399.2 1293.4,1400.7 1297.4,1412.6 1301.4,1400.0 1305.4,1405.6 1309.4,1400.3 1313.4,1397.0 1317.4,1385.1 1321.4,1392.3 1325.4,1392.3 1329.4,1398.9 1333.4,1402.2 1337.4,1404.2 1341.4,1414.5 1345.4,1420.6 1349.4,1420.7 1353.4,1416.1 1357.4,1423.0 1361.4,1426.6 1365.4,1425.7 1369.4,1430.0 1373.4,1440.7 1377.4,1450.8 1381.4,1454.0 1385.4,1457.8 1389.4,1460.6 1393.4,1463.3 1397.4,1465.7 1401.4,1468.3 1405.4,1472.9 1409.4,1472.6 1413.4,1468.0 1417.4,1470.8 1421.4,1475.0 1425.4,1473.3 1429.4,1475.6 1433.4,1477.8 1437.4,1475.6 1441.4,1473.0 1445.4,1470.7 1449.4,1462.2 1453.4,1461.1 1457.4,1463.9 1461.4,1462.1 1465.4,1467.0 1469.4,1471.0 1473.4,1468.0 1477.4,1478.2 1481.4,1465.3 1485.4,1452.0 1489.4,1444.9 1493.4,1429.4 1497.4,1425.1 1501.4,1420.0 1505.4,1426.7 1509.4,1420.0 1513.4,1424.6 1517.4,1430.5 1521.4,1431.6 1525.4,1423.8 1529.4,1417.5 1533.4,1417.4 1537.4,1417.4 1541.4,1422.6 1545.4,1423.2 1549.4,1419.5 1553.4,1416.6 1557.4,1423.2 1561.4,1415.0 1565.4,1411.6 1569.4,1400.4 1573.4,1386.7 1577.4,1372.1 1581.4,1372.0 1585.4,1387.7 1589.4,1397.9 1593.4,1418.7 1597.4,1434.8 1601.4,1444.5 1605.4,1453.6 1609.4,1454.8 1613.4,1452.1 1617.4,1446.7 1621.4,1447.5 1625.4,1435.9 1629.4,1436.0 1633.4,1433.8 1637.4,1436.0 1641.4,1436.3 1645.4,1428.7 1649.4,1434.7 1653.4,1443.7 1657.4,1447.8 1661.4,1436.9 1665.4,1442.4 1669.4,1455.8 1673.4,1466.2 1677.4,1466.6 1681.4,1456.3 1685.4,1453.3 1689.4,1449.4 1693.4,1440.3 1697.4,1447.0 1701.4,1452.6 1705.4,1456.5 1709.4,1449.7 1713.4,1449.4 1717.4,1445.6 1721.4,1439.0 1725.4,1441.6 1729.4,1441.9 1733.4,1436.4 1737.4,1435.2 1741.4,1438.5 1745.4,1436.5 1749.4,1436.8 1753.4,1438.7 1757.4,1440.7 1761.4,1429.1 1765.4,1430.3 1769.4,1434.4 1773.4,1442.8 1777.4,1450.7 1781.4,1452.7 1785.4,1450.1 1789.4,1448.8 1793.4,1446.8 1797.4,1444.8 1801.4,1444.2 1805.4,1428.6 1809.4,1424.0 1813.4,1436.0 1817.4,1424.2 1821.4,1436.9 1825.4,1430.7 1829.4,1440.5 1833.4,1451.5 1837.4,1448.1 1841.4,1446.5 1845.4,1442.0 1849.4,1446.4 1853.4,1448.0 1857.4,1451.3 1861.4,1449.2 1865.4,1454.0 1869.4,1465.7 1873.4,1473.3 1877.4,1477.6 1881.4,1475.8 1885.4,1478.3 1889.4,1478.8 1893.4,1478.7 1897.4,1483.8 1901.4,1476.6 1905.4,1472.3 1909.4,1468.7 1913.4,1467.9 1917.4,1453.3 1921.4,1448.9 1925.4,1454.0 1929.4,1467.4 1933.4,1468.6 1937.4,1479.9 1941.4,1484.6 1945.4,1491.1 1949.4,1501.2 1953.4,1497.4 1957.4,1495.3 1961.4,1490.9 1965.4,1486.7 1969.4,1483.8 1973.4,1486.1 1977.4,1487.2 1981.4,1481.1 1985.4,1488.3 1989.4,1489.4 1993.4,1481.4 1997.4,1489.0 2001.4,1492.0 2005.4,1487.9 2009.4,1493.2 2013.4,1496.4 2017.4,1490.9 2021.4,1481.3 2025.4,1487.3 2029.4,1492.9 2033.4,1485.3 2037.4,1490.1 2041.4,1495.7 2045.4,1498.5 2049.4,1504.1 2053.4,1504.5 2057.4,1502.6 2061.4,1504.5 2065.4,1504.5 2069.4,1502.9 2073.4,1504.5 2077.4,1504.5 2081.4,1504.5 2085.4,1504.5 2089.4,1502.0 2093.4,1499.3 2097.4,1498.8 2101.4,1493.8 2105.4,1494.7 2109.4,1498.9 2113.4,1494.1" fill="none" stroke="#8c8c8c" stroke-opacity="0.16" stroke-width="1.3"/><polyline points="497.4,1473.2 501.4,1476.8 505.4,1482.0 509.4,1483.9 513.4,1482.6 517.4,1482.8 521.4,1491.2 525.4,1491.2 529.4,1494.7 533.4,1491.5 537.4,1485.1 541.4,1483.1 545.4,1490.5 549.4,1485.3 553.4,1478.4 557.4,1483.2 561.4,1475.9 565.4,1478.5 569.4,1471.6 573.4,1467.2 577.4,1469.3 581.4,1475.6 585.4,1473.3 589.4,1470.9 593.4,1460.6 597.4,1458.6 601.4,1456.9 605.4,1462.2 609.4,1466.1 613.4,1472.1 617.4,1471.7 621.4,1476.3 625.4,1463.0 629.4,1456.8 633.4,1446.4 637.4,1435.6 641.4,1443.7 645.4,1428.9 649.4,1426.0 653.4,1426.7 657.4,1442.3 661.4,1443.9 665.4,1442.0 669.4,1439.4 673.4,1461.3 677.4,1480.8 681.4,1478.1 685.4,1480.7 689.4,1492.5 693.4,1485.8 697.4,1478.0 701.4,1467.6 705.4,1470.2 709.4,1478.6 713.4,1471.2 717.4,1469.2 721.4,1478.6 725.4,1476.6 729.4,1473.2 733.4,1479.8 737.4,1485.7 741.4,1484.4 745.4,1478.1 749.4,1481.1 753.4,1485.0 757.4,1487.9 761.4,1488.7 765.4,1486.2 769.4,1484.6 773.4,1481.8 777.4,1480.6 781.4,1477.7 785.4,1472.4 789.4,1468.4 793.4,1464.4 797.4,1455.7 801.4,1451.9 805.4,1442.8 809.4,1447.8 813.4,1445.8 817.4,1443.8 821.4,1439.7 825.4,1439.8 829.4,1425.9 833.4,1432.5 837.4,1440.0 841.4,1441.0 845.4,1450.0 849.4,1442.2 853.4,1444.5 857.4,1438.5 861.4,1431.2 865.4,1422.8 869.4,1433.1 873.4,1439.2 877.4,1427.4 881.4,1441.3 885.4,1433.1 889.4,1430.4 893.4,1429.2 897.4,1434.1 901.4,1450.6 905.4,1456.2 909.4,1461.2 913.4,1461.9 917.4,1457.7 921.4,1450.4 925.4,1451.7 929.4,1453.8 933.4,1451.6 937.4,1466.7 941.4,1466.1 945.4,1464.3 949.4,1465.1 953.4,1461.3 957.4,1472.1 961.4,1475.6 965.4,1477.9 969.4,1477.5 973.4,1474.3 977.4,1472.1 981.4,1471.7 985.4,1468.1 989.4,1473.6 993.4,1470.7 997.4,1461.0 1001.4,1448.0 1005.4,1438.8 1009.4,1433.9 1013.4,1442.1 1017.4,1449.6 1021.4,1443.0 1025.4,1442.8 1029.4,1435.0 1033.4,1430.6 1037.4,1427.6 1041.4,1412.9 1045.4,1393.2 1049.4,1396.0 1053.4,1400.1 1057.4,1392.2 1061.4,1404.2 1065.4,1412.9 1069.4,1406.4 1073.4,1393.8 1077.4,1401.1 1081.4,1409.0 1085.4,1397.6 1089.4,1376.7 1093.4,1374.4 1097.4,1357.0 1101.4,1363.6 1105.4,1366.7 1109.4,1358.0 1113.4,1356.0 1117.4,1351.0 1121.4,1348.5 1125.4,1353.3 1129.4,1369.0 1133.4,1372.5 1137.4,1386.2 1141.4,1384.6 1145.4,1402.7 1149.4,1411.0 1153.4,1419.3 1157.4,1415.9 1161.4,1418.8 1165.4,1407.0 1169.4,1424.5 1173.4,1432.0 1177.4,1435.5 1181.4,1442.9 1185.4,1437.0 1189.4,1436.8 1193.4,1434.3 1197.4,1446.0 1201.4,1436.9 1205.4,1437.4 1209.4,1446.8 1213.4,1452.5 1217.4,1451.3 1221.4,1441.3 1225.4,1428.7 1229.4,1424.2 1233.4,1416.2 1237.4,1418.9 1241.4,1413.8 1245.4,1420.5 1249.4,1420.1 1253.4,1435.3 1257.4,1443.6 1261.4,1433.9 1265.4,1447.7 1269.4,1427.9 1273.4,1437.3 1277.4,1419.1 1281.4,1417.7 1285.4,1410.6 1289.4,1418.2 1293.4,1410.8 1297.4,1399.5 1301.4,1409.9 1305.4,1414.4 1309.4,1423.6 1313.4,1422.4 1317.4,1412.0 1321.4,1414.6 1325.4,1406.2 1329.4,1402.5 1333.4,1385.4 1337.4,1376.5 1341.4,1381.0 1345.4,1389.4 1349.4,1395.2 1353.4,1393.8 1357.4,1403.9 1361.4,1411.7 1365.4,1410.2 1369.4,1419.2 1373.4,1431.1 1377.4,1441.8 1381.4,1436.9 1385.4,1430.0 1389.4,1426.6 1393.4,1417.1 1397.4,1415.8 1401.4,1425.9 1405.4,1431.6 1409.4,1425.9 1413.4,1435.7 1417.4,1429.1 1421.4,1438.9 1425.4,1433.8 1429.4,1429.1 1433.4,1431.1 1437.4,1433.5 1441.4,1435.1 1445.4,1436.1 1449.4,1436.0 1453.4,1416.9 1457.4,1418.6 1461.4,1422.1 1465.4,1424.5 1469.4,1413.6 1473.4,1434.1 1477.4,1448.5 1481.4,1429.3 1485.4,1416.7 1489.4,1401.0 1493.4,1379.0 1497.4,1370.5 1501.4,1387.9 1505.4,1357.5 1509.4,1371.2 1513.4,1355.6 1517.4,1326.1 1521.4,1348.4 1525.4,1342.0 1529.4,1335.3 1533.4,1342.0 1537.4,1349.8 1541.4,1348.6 1545.4,1347.4 1549.4,1346.2 1553.4,1348.0 1557.4,1343.5 1561.4,1339.8 1565.4,1338.0 1569.4,1346.2 1573.4,1354.5 1577.4,1351.5 1581.4,1370.5 1585.4,1384.4 1589.4,1389.7 1593.4,1396.4 1597.4,1401.4 1601.4,1400.8 1605.4,1424.6 1609.4,1438.8 1613.4,1426.8 1617.4,1436.6 1621.4,1445.0 1625.4,1432.0 1629.4,1436.0 1633.4,1430.8 1637.4,1434.0 1641.4,1443.9 1645.4,1442.6 1649.4,1443.8 1653.4,1449.7 1657.4,1442.1 1661.4,1447.2 1665.4,1447.0 1669.4,1462.4 1673.4,1456.3 1677.4,1459.6 1681.4,1442.9 1685.4,1428.8 1689.4,1412.3 1693.4,1397.6 1697.4,1390.9 1701.4,1380.9 1705.4,1384.2 1709.4,1364.9 1713.4,1363.0 1717.4,1375.4 1721.4,1350.8 1725.4,1339.3 1729.4,1347.5 1733.4,1342.0 1737.4,1362.4 1741.4,1349.8 1745.4,1340.3 1749.4,1363.5 1753.4,1352.6 1757.4,1379.3 1761.4,1401.1 1765.4,1387.3 1769.4,1393.8 1773.4,1416.4 1777.4,1401.6 1781.4,1413.7 1785.4,1418.5 1789.4,1424.0 1793.4,1426.9 1797.4,1413.8 1801.4,1425.9 1805.4,1412.2 1809.4,1422.5 1813.4,1430.2 1817.4,1425.8 1821.4,1435.4 1825.4,1439.0 1829.4,1450.2 1833.4,1444.4 1837.4,1455.1 1841.4,1453.5 1845.4,1459.6 1849.4,1459.6 1853.4,1465.1 1857.4,1463.2 1861.4,1466.3 1865.4,1458.8 1869.4,1461.3 1873.4,1456.5 1877.4,1465.9 1881.4,1471.6 1885.4,1473.3 1889.4,1481.9 1893.4,1485.7 1897.4,1486.3 1901.4,1477.6 1905.4,1474.5 1909.4,1471.3 1913.4,1467.9 1917.4,1453.2 1921.4,1461.1 1925.4,1463.9 1929.4,1471.5 1933.4,1477.9 1937.4,1480.7 1941.4,1480.3 1945.4,1491.9 1949.4,1493.5 1953.4,1488.9 1957.4,1484.4 1961.4,1492.6 1965.4,1496.5 1969.4,1492.6 1973.4,1487.2 1977.4,1492.8 1981.4,1495.6 1985.4,1497.2 1989.4,1493.4 1993.4,1493.1 1997.4,1497.6 2001.4,1491.1 2005.4,1489.5 2009.4,1479.3 2013.4,1488.1 2017.4,1479.0 2021.4,1485.9 2025.4,1491.5 2029.4,1495.5 2033.4,1486.8 2037.4,1490.3 2041.4,1490.8 2045.4,1491.6 2049.4,1488.1 2053.4,1490.6 2057.4,1495.7 2061.4,1493.5 2065.4,1497.5 2069.4,1497.2 2073.4,1495.7 2077.4,1493.9 2081.4,1493.9 2085.4,1494.7 2089.4,1494.5 2093.4,1496.8 2097.4,1495.9 2101.4,1493.9 2105.4,1496.6 2109.4,1490.2 2113.4,1481.1" fill="none" stroke="#8c8c8c" stroke-opacity="0.13" stroke-width="1.3"/><polyline points="497.4,1455.5 501.4,1455.3 505.4,1448.0 509.4,1457.8 513.4,1459.7 517.4,1471.4 521.4,1479.2 525.4,1485.2 529.4,1490.9 533.4,1487.4 537.4,1491.5 541.4,1487.2 545.4,1488.9 549.4,1491.2 553.4,1495.0 557.4,1491.3 561.4,1487.9 565.4,1492.2 569.4,1494.8 573.4,1499.4 577.4,1496.3 581.4,1494.3 585.4,1488.6 589.4,1493.0 593.4,1494.9 597.4,1495.7 601.4,1497.8 605.4,1497.6 609.4,1497.9 613.4,1502.0 617.4,1503.6 621.4,1505.2 625.4,1506.0 629.4,1505.9 633.4,1506.0 637.4,1506.0 641.4,1503.1 645.4,1502.5 649.4,1501.9 653.4,1501.1 657.4,1501.3 661.4,1499.8 665.4,1499.2 669.4,1501.4 673.4,1498.9 677.4,1501.6 681.4,1497.7 685.4,1492.9 689.4,1494.6 693.4,1493.1 697.4,1492.1 701.4,1492.6 705.4,1491.0 709.4,1486.6 713.4,1476.1 717.4,1483.8 721.4,1490.0 725.4,1485.2 729.4,1483.5 733.4,1479.6 737.4,1470.5 741.4,1478.7 745.4,1484.4 749.4,1481.0 753.4,1477.7 757.4,1480.4 761.4,1485.8 765.4,1483.8 769.4,1479.1 773.4,1469.8 777.4,1477.3 781.4,1479.0 785.4,1473.4 789.4,1461.1 793.4,1453.8 797.4,1450.1 801.4,1445.8 805.4,1440.5 809.4,1428.5 813.4,1417.1 817.4,1419.9 821.4,1406.4 825.4,1411.0 829.4,1412.8 833.4,1409.5 837.4,1420.8 841.4,1438.6 845.4,1447.4 849.4,1436.4 853.4,1433.6 857.4,1426.1 861.4,1414.9 865.4,1427.8 869.4,1436.0 873.4,1425.4 877.4,1417.8 881.4,1413.4 885.4,1416.2 889.4,1412.7 893.4,1413.0 897.4,1425.0 901.4,1423.7 905.4,1437.0 909.4,1439.3 913.4,1453.6 917.4,1466.1 921.4,1465.4 925.4,1470.6 929.4,1462.2 933.4,1459.4 937.4,1464.3 941.4,1469.7 945.4,1467.4 949.4,1459.5 953.4,1455.3 957.4,1459.4 961.4,1454.8 965.4,1452.6 969.4,1457.4 973.4,1466.5 977.4,1467.5 981.4,1462.9 985.4,1460.4 989.4,1450.3 993.4,1447.0 997.4,1436.7 1001.4,1429.4 1005.4,1426.5 1009.4,1437.5 1013.4,1426.5 1017.4,1413.6 1021.4,1396.3 1025.4,1379.6 1029.4,1372.3 1033.4,1367.7 1037.4,1372.4 1041.4,1364.4 1045.4,1358.9 1049.4,1350.4 1053.4,1356.3 1057.4,1368.5 1061.4,1361.4 1065.4,1378.5 1069.4,1367.8 1073.4,1389.4 1077.4,1395.2 1081.4,1405.8 1085.4,1399.7 1089.4,1387.7 1093.4,1371.7 1097.4,1383.4 1101.4,1377.3 1105.4,1383.2 1109.4,1381.5 1113.4,1382.4 1117.4,1375.7 1121.4,1369.0 1125.4,1367.9 1129.4,1379.4 1133.4,1387.6 1137.4,1372.8 1141.4,1386.3 1145.4,1387.8 1149.4,1377.3 1153.4,1379.8 1157.4,1382.3 1161.4,1397.9 1165.4,1401.1 1169.4,1399.1 1173.4,1398.6 1177.4,1404.4 1181.4,1410.1 1185.4,1414.1 1189.4,1425.0 1193.4,1435.8 1197.4,1444.1 1201.4,1454.3 1205.4,1458.9 1209.4,1451.8 1213.4,1443.4 1217.4,1434.6 1221.4,1424.3 1225.4,1416.8 1229.4,1414.4 1233.4,1410.0 1237.4,1404.0 1241.4,1392.1 1245.4,1403.8 1249.4,1409.1 1253.4,1401.1 1257.4,1374.1 1261.4,1388.6 1265.4,1372.8 1269.4,1386.5 1273.4,1370.0 1277.4,1376.8 1281.4,1371.9 1285.4,1383.8 1289.4,1372.9 1293.4,1355.6 1297.4,1342.3 1301.4,1355.0 1305.4,1377.2 1309.4,1386.6 1313.4,1395.3 1317.4,1387.1 1321.4,1378.4 1325.4,1362.5 1329.4,1376.9 1333.4,1360.8 1337.4,1363.5 1341.4,1357.0 1345.4,1346.8 1349.4,1344.8 1353.4,1359.9 1357.4,1349.6 1361.4,1348.4 1365.4,1359.5 1369.4,1372.1 1373.4,1379.1 1377.4,1372.4 1381.4,1393.4 1385.4,1384.3 1389.4,1390.3 1393.4,1395.1 1397.4,1399.6 1401.4,1403.1 1405.4,1408.7 1409.4,1418.9 1413.4,1433.3 1417.4,1435.9 1421.4,1427.7 1425.4,1439.4 1429.4,1430.0 1433.4,1431.1 1437.4,1433.1 1441.4,1437.3 1445.4,1436.1 1449.4,1412.1 1453.4,1397.5 1457.4,1401.4 1461.4,1403.8 1465.4,1385.5 1469.4,1389.6 1473.4,1400.5 1477.4,1392.5 1481.4,1370.5 1485.4,1374.7 1489.4,1359.5 1493.4,1345.0 1497.4,1339.8 1501.4,1334.6 1505.4,1330.2 1509.4,1326.1 1513.4,1324.9 1517.4,1323.8 1521.4,1318.4 1525.4,1341.5 1529.4,1334.0 1533.4,1342.0 1537.4,1365.5 1541.4,1380.6 1545.4,1398.1 1549.4,1409.1 1553.4,1403.4 1557.4,1403.1 1561.4,1403.5 1565.4,1395.1 1569.4,1384.3 1573.4,1367.2 1577.4,1384.5 1581.4,1380.4 1585.4,1379.8 1589.4,1384.3 1593.4,1376.6 1597.4,1396.3 1601.4,1417.7 1605.4,1437.4 1609.4,1453.9 1613.4,1450.0 1617.4,1440.2 1621.4,1445.3 1625.4,1448.1 1629.4,1444.0 1633.4,1440.7 1637.4,1435.5 1641.4,1445.4 1645.4,1446.7 1649.4,1455.1 1653.4,1454.3 1657.4,1450.9 1661.4,1452.9 1665.4,1460.9 1669.4,1466.7 1673.4,1466.4 1677.4,1466.2 1681.4,1460.3 1685.4,1458.4 1689.4,1457.5 1693.4,1454.6 1697.4,1449.4 1701.4,1445.1 1705.4,1449.7 1709.4,1452.8 1713.4,1447.6 1717.4,1439.1 1721.4,1429.5 1725.4,1435.6 1729.4,1424.0 1733.4,1428.2 1737.4,1426.6 1741.4,1425.5 1745.4,1423.9 1749.4,1420.8 1753.4,1422.5 1757.4,1412.5 1761.4,1425.8 1765.4,1416.9 1769.4,1410.5 1773.4,1418.4 1777.4,1423.1 1781.4,1430.7 1785.4,1433.8 1789.4,1445.5 1793.4,1430.2 1797.4,1414.4 1801.4,1404.6 1805.4,1411.4 1809.4,1402.7 1813.4,1406.1 1817.4,1414.2 1821.4,1408.7 1825.4,1418.6 1829.4,1435.4 1833.4,1445.5 1837.4,1445.9 1841.4,1446.1 1845.4,1442.6 1849.4,1451.7 1853.4,1458.5 1857.4,1464.0 1861.4,1461.9 1865.4,1469.1 1869.4,1471.0 1873.4,1475.6 1877.4,1475.4 1881.4,1479.6 1885.4,1481.7 1889.4,1483.0 1893.4,1485.7 1897.4,1486.3 1901.4,1481.3 1905.4,1476.3 1909.4,1464.6 1913.4,1465.9 1917.4,1465.0 1921.4,1462.0 1925.4,1465.9 1929.4,1466.3 1933.4,1470.2 1937.4,1479.6 1941.4,1489.8 1945.4,1493.8 1949.4,1501.2 1953.4,1504.5 1957.4,1497.6 1961.4,1492.6 1965.4,1487.5 1969.4,1488.5 1973.4,1485.4 1977.4,1480.1 1981.4,1479.6 1985.4,1465.6 1989.4,1480.6 1993.4,1489.9 1997.4,1489.7 2001.4,1488.2 2005.4,1484.5 2009.4,1485.9 2013.4,1479.3 2017.4,1486.4 2021.4,1493.3 2025.4,1497.1 2029.4,1502.9 2033.4,1495.0 2037.4,1487.8 2041.4,1485.8 2045.4,1480.8 2049.4,1482.7 2053.4,1491.9 2057.4,1497.2 2061.4,1502.5 2065.4,1500.2 2069.4,1498.1 2073.4,1494.6 2077.4,1493.1 2081.4,1481.5 2085.4,1482.5 2089.4,1476.9 2093.4,1480.9 2097.4,1481.7 2101.4,1481.3 2105.4,1472.3 2109.4,1472.1 2113.4,1473.1" fill="none" stroke="#8c8c8c" stroke-opacity="0.16" stroke-width="1.3"/><polyline points="497.4,1470.4 501.4,1467.7 505.4,1460.4 509.4,1461.9 513.4,1466.9 517.4,1463.6 521.4,1474.9 525.4,1484.4 529.4,1491.4 533.4,1494.6 537.4,1494.7 541.4,1492.1 545.4,1489.2 549.4,1493.4 553.4,1497.9 557.4,1495.3 561.4,1487.4 565.4,1484.4 569.4,1481.7 573.4,1483.3 577.4,1476.5 581.4,1482.5 585.4,1479.3 589.4,1486.9 593.4,1482.2 597.4,1476.7 601.4,1468.0 605.4,1477.9 609.4,1479.1 613.4,1486.5 617.4,1474.3 621.4,1474.5 625.4,1481.3 629.4,1493.8 633.4,1498.2 637.4,1495.1 641.4,1494.6 645.4,1498.8 649.4,1499.1 653.4,1502.6 657.4,1500.0 661.4,1495.3 665.4,1499.9 669.4,1500.4 673.4,1500.1 677.4,1497.1 681.4,1497.6 685.4,1501.4 689.4,1505.5 693.4,1505.9 697.4,1503.3 701.4,1505.7 705.4,1500.5 709.4,1499.5 713.4,1504.2 717.4,1501.5 721.4,1499.5 725.4,1498.6 729.4,1492.6 733.4,1494.1 737.4,1494.8 741.4,1490.7 745.4,1493.7 749.4,1490.0 753.4,1491.1 757.4,1489.9 761.4,1487.8 765.4,1483.9 769.4,1485.2 773.4,1486.0 777.4,1484.9 781.4,1485.6 785.4,1482.3 789.4,1473.9 793.4,1465.5 797.4,1454.7 801.4,1449.0 805.4,1449.8 809.4,1447.8 813.4,1445.8 817.4,1443.8 821.4,1439.6 825.4,1439.0 829.4,1437.8 833.4,1428.1 837.4,1440.0 841.4,1429.6 845.4,1436.1 849.4,1439.9 853.4,1423.7 857.4,1431.5 861.4,1425.4 865.4,1416.3 869.4,1414.6 873.4,1418.3 877.4,1417.0 881.4,1401.7 885.4,1387.7 889.4,1398.5 893.4,1387.1 897.4,1379.9 901.4,1400.9 905.4,1424.0 909.4,1439.2 913.4,1438.0 917.4,1425.5 921.4,1436.4 925.4,1439.1 929.4,1433.2 933.4,1417.3 937.4,1417.9 941.4,1414.1 945.4,1420.6 949.4,1438.7 953.4,1434.4 957.4,1425.8 961.4,1434.9 965.4,1427.8 969.4,1425.1 973.4,1429.5 977.4,1444.2 981.4,1444.5 985.4,1445.3 989.4,1432.8 993.4,1418.8 997.4,1406.5 1001.4,1408.4 1005.4,1400.8 1009.4,1406.5 1013.4,1393.9 1017.4,1388.7 1021.4,1387.8 1025.4,1380.3 1029.4,1390.1 1033.4,1371.3 1037.4,1375.6 1041.4,1377.5 1045.4,1368.4 1049.4,1349.7 1053.4,1349.2 1057.4,1355.1 1061.4,1349.5 1065.4,1347.7 1069.4,1356.0 1073.4,1362.2 1077.4,1361.8 1081.4,1349.7 1085.4,1349.4 1089.4,1352.2 1093.4,1366.9 1097.4,1382.5 1101.4,1383.1 1105.4,1376.3 1109.4,1365.8 1113.4,1370.5 1117.4,1382.7 1121.4,1378.2 1125.4,1389.0 1129.4,1411.7 1133.4,1418.1 1137.4,1436.5 1141.4,1441.5 1145.4,1449.9 1149.4,1461.0 1153.4,1457.4 1157.4,1455.1 1161.4,1464.7 1165.4,1453.2 1169.4,1446.4 1173.4,1446.6 1177.4,1454.1 1181.4,1459.4 1185.4,1469.7 1189.4,1473.7 1193.4,1468.2 1197.4,1464.7 1201.4,1457.6 1205.4,1457.2 1209.4,1448.5 1213.4,1449.3 1217.4,1447.2 1221.4,1435.1 1225.4,1433.2 1229.4,1423.7 1233.4,1429.9 1237.4,1425.7 1241.4,1430.8 1245.4,1431.9 1249.4,1420.5 1253.4,1434.1 1257.4,1404.4 1261.4,1386.9 1265.4,1373.9 1269.4,1389.2 1273.4,1388.7 1277.4,1370.1 1281.4,1363.9 1285.4,1367.5 1289.4,1373.0 1293.4,1356.0 1297.4,1362.9 1301.4,1359.1 1305.4,1362.9 1309.4,1362.5 1313.4,1361.9 1317.4,1382.9 1321.4,1397.8 1325.4,1407.7 1329.4,1410.6 1333.4,1415.3 1337.4,1406.0 1341.4,1391.0 1345.4,1401.4 1349.4,1406.1 1353.4,1409.0 1357.4,1406.5 1361.4,1406.3 1365.4,1420.8 1369.4,1428.5 1373.4,1427.3 1377.4,1428.5 1381.4,1423.1 1385.4,1408.8 1389.4,1428.1 1393.4,1442.7 1397.4,1449.9 1401.4,1443.3 1405.4,1444.0 1409.4,1436.2 1413.4,1445.7 1417.4,1456.8 1421.4,1463.1 1425.4,1467.8 1429.4,1466.3 1433.4,1458.4 1437.4,1450.5 1441.4,1458.6 1445.4,1463.2 1449.4,1454.1 1453.4,1435.0 1457.4,1441.0 1461.4,1425.6 1465.4,1418.9 1469.4,1396.0 1473.4,1416.6 1477.4,1409.8 1481.4,1421.7 1485.4,1434.8 1489.4,1431.9 1493.4,1435.1 1497.4,1436.9 1501.4,1443.3 1505.4,1447.3 1509.4,1434.9 1513.4,1438.6 1517.4,1429.0 1521.4,1423.6 1525.4,1418.7 1529.4,1428.8 1533.4,1418.4 1537.4,1419.1 1541.4,1414.8 1545.4,1424.2 1549.4,1423.1 1553.4,1422.9 1557.4,1419.8 1561.4,1424.0 1565.4,1420.8 1569.4,1420.2 1573.4,1428.1 1577.4,1435.4 1581.4,1437.8 1585.4,1435.1 1589.4,1442.5 1593.4,1446.0 1597.4,1452.0 1601.4,1456.4 1605.4,1463.6 1609.4,1464.1 1613.4,1458.6 1617.4,1455.0 1621.4,1447.1 1625.4,1434.9 1629.4,1439.1 1633.4,1444.6 1637.4,1449.6 1641.4,1445.7 1645.4,1452.6 1649.4,1460.2 1653.4,1463.5 1657.4,1460.7 1661.4,1463.0 1665.4,1463.0 1669.4,1461.9 1673.4,1454.0 1677.4,1461.0 1681.4,1457.2 1685.4,1455.5 1689.4,1442.0 1693.4,1432.2 1697.4,1431.0 1701.4,1419.0 1705.4,1407.6 1709.4,1403.7 1713.4,1400.1 1717.4,1418.1 1721.4,1416.0 1725.4,1417.3 1729.4,1416.5 1733.4,1420.2 1737.4,1415.1 1741.4,1394.7 1745.4,1409.3 1749.4,1413.9 1753.4,1403.3 1757.4,1387.2 1761.4,1370.7 1765.4,1382.4 1769.4,1361.5 1773.4,1331.5 1777.4,1331.8 1781.4,1310.3 1785.4,1309.5 1789.4,1308.7 1793.4,1307.9 1797.4,1307.1 1801.4,1308.2 1805.4,1310.2 1809.4,1312.2 1813.4,1314.2 1817.4,1317.7 1821.4,1323.7 1825.4,1329.7 1829.4,1355.5 1833.4,1375.2 1837.4,1381.0 1841.4,1360.1 1845.4,1363.8 1849.4,1388.3 1853.4,1388.1 1857.4,1376.9 1861.4,1391.2 1865.4,1412.4 1869.4,1404.4 1873.4,1411.4 1877.4,1420.2 1881.4,1414.2 1885.4,1416.0 1889.4,1423.4 1893.4,1432.0 1897.4,1437.1 1901.4,1434.2 1905.4,1421.5 1909.4,1395.3 1913.4,1385.3 1917.4,1396.9 1921.4,1411.6 1925.4,1429.2 1929.4,1421.8 1933.4,1437.4 1937.4,1434.2 1941.4,1436.9 1945.4,1435.3 1949.4,1450.4 1953.4,1459.9 1957.4,1471.0 1961.4,1467.4 1965.4,1484.2 1969.4,1475.5 1973.4,1477.7 1977.4,1483.6 1981.4,1476.2 1985.4,1472.6 1989.4,1457.1 1993.4,1467.9 1997.4,1452.1 2001.4,1433.4 2005.4,1421.4 2009.4,1426.1 2013.4,1430.5 2017.4,1429.4 2021.4,1443.6 2025.4,1454.0 2029.4,1437.8 2033.4,1437.9 2037.4,1423.7 2041.4,1417.4 2045.4,1416.3 2049.4,1423.4 2053.4,1429.1 2057.4,1447.3 2061.4,1456.4 2065.4,1445.5 2069.4,1444.8 2073.4,1449.6 2077.4,1452.3 2081.4,1450.7 2085.4,1452.7 2089.4,1454.7 2093.4,1457.3 2097.4,1453.0 2101.4,1459.2 2105.4,1453.2 2109.4,1454.5 2113.4,1454.8" fill="none" stroke="#8c8c8c" stroke-opacity="0.13" stroke-width="1.3"/><polyline points="497.4,1477.4 501.4,1481.7 505.4,1486.7 509.4,1495.9 513.4,1502.0 517.4,1505.3 521.4,1505.4 525.4,1505.4 529.4,1505.4 533.4,1505.5 537.4,1505.5 541.4,1505.5 545.4,1503.0 549.4,1503.7 553.4,1503.4 557.4,1501.4 561.4,1503.4 565.4,1500.7 569.4,1502.6 573.4,1502.6 577.4,1502.1 581.4,1504.0 585.4,1505.8 589.4,1505.8 593.4,1505.8 597.4,1505.8 601.4,1503.7 605.4,1505.2 609.4,1505.2 613.4,1505.9 617.4,1505.4 621.4,1504.0 625.4,1499.5 629.4,1499.5 633.4,1500.1 637.4,1498.7 641.4,1495.9 645.4,1495.9 649.4,1485.1 653.4,1469.9 657.4,1466.6 661.4,1456.5 665.4,1456.1 669.4,1459.9 673.4,1456.8 677.4,1441.9 681.4,1426.7 685.4,1429.4 689.4,1452.8 693.4,1447.8 697.4,1446.9 701.4,1446.8 705.4,1458.1 709.4,1462.3 713.4,1468.8 717.4,1457.5 721.4,1455.9 725.4,1455.1 729.4,1454.3 733.4,1453.5 737.4,1453.7 741.4,1464.5 745.4,1464.8 749.4,1467.6 753.4,1476.0 757.4,1477.3 761.4,1478.4 765.4,1483.8 769.4,1477.6 773.4,1462.5 777.4,1474.3 781.4,1472.3 785.4,1464.8 789.4,1439.7 793.4,1439.9 797.4,1424.3 801.4,1420.9 805.4,1399.6 809.4,1412.2 813.4,1404.0 817.4,1388.1 821.4,1406.3 825.4,1387.4 829.4,1371.2 833.4,1367.6 837.4,1393.4 841.4,1373.3 845.4,1361.8 849.4,1383.5 853.4,1355.8 857.4,1347.6 861.4,1360.2 865.4,1369.4 869.4,1385.5 873.4,1367.3 877.4,1387.7 881.4,1382.1 885.4,1395.5 889.4,1397.4 893.4,1411.8 897.4,1413.9 901.4,1415.7 905.4,1412.1 909.4,1419.0 913.4,1405.1 917.4,1396.7 921.4,1415.1 925.4,1418.8 929.4,1430.8 933.4,1419.1 937.4,1421.1 941.4,1423.9 945.4,1416.6 949.4,1413.9 953.4,1430.2 957.4,1440.2 961.4,1443.8 965.4,1450.0 969.4,1461.1 973.4,1469.7 977.4,1471.9 981.4,1464.1 985.4,1467.4 989.4,1454.4 993.4,1441.1 997.4,1429.2 1001.4,1427.8 1005.4,1428.8 1009.4,1426.7 1013.4,1424.5 1017.4,1409.8 1021.4,1414.3 1025.4,1409.3 1029.4,1396.3 1033.4,1403.0 1037.4,1415.0 1041.4,1422.0 1045.4,1429.2 1049.4,1415.9 1053.4,1410.5 1057.4,1407.5 1061.4,1398.9 1065.4,1404.9 1069.4,1417.2 1073.4,1407.9 1077.4,1412.6 1081.4,1428.9 1085.4,1441.6 1089.4,1436.6 1093.4,1419.1 1097.4,1413.6 1101.4,1410.6 1105.4,1416.1 1109.4,1410.4 1113.4,1405.7 1117.4,1423.6 1121.4,1413.1 1125.4,1420.4 1129.4,1414.3 1133.4,1429.8 1137.4,1435.1 1141.4,1449.8 1145.4,1449.8 1149.4,1461.1 1153.4,1458.0 1157.4,1449.4 1161.4,1433.6 1165.4,1416.3 1169.4,1414.1 1173.4,1431.0 1177.4,1430.1 1181.4,1439.7 1185.4,1432.2 1189.4,1436.4 1193.4,1441.2 1197.4,1435.5 1201.4,1439.4 1205.4,1439.9 1209.4,1438.0 1213.4,1445.5 1217.4,1444.8 1221.4,1431.2 1225.4,1416.5 1229.4,1408.3 1233.4,1400.6 1237.4,1398.1 1241.4,1407.8 1245.4,1421.1 1249.4,1432.0 1253.4,1418.1 1257.4,1423.3 1261.4,1427.1 1265.4,1423.4 1269.4,1437.3 1273.4,1437.3 1277.4,1422.0 1281.4,1409.2 1285.4,1393.8 1289.4,1393.6 1293.4,1397.3 1297.4,1410.8 1301.4,1392.3 1305.4,1376.2 1309.4,1399.5 1313.4,1390.6 1317.4,1381.9 1321.4,1395.1 1325.4,1379.2 1329.4,1386.7 1333.4,1399.0 1337.4,1400.4 1341.4,1402.6 1345.4,1385.8 1349.4,1390.2 1353.4,1395.3 1357.4,1405.1 1361.4,1410.4 1365.4,1403.5 1369.4,1399.4 1373.4,1413.7 1377.4,1402.7 1381.4,1390.0 1385.4,1385.8 1389.4,1401.3 1393.4,1407.1 1397.4,1406.4 1401.4,1423.6 1405.4,1429.4 1409.4,1425.6 1413.4,1431.0 1417.4,1443.8 1421.4,1443.4 1425.4,1444.9 1429.4,1448.9 1433.4,1462.0 1437.4,1466.6 1441.4,1459.4 1445.4,1457.8 1449.4,1442.2 1453.4,1429.7 1457.4,1431.0 1461.4,1411.0 1465.4,1409.8 1469.4,1399.9 1473.4,1402.1 1477.4,1415.3 1481.4,1411.2 1485.4,1414.6 1489.4,1397.2 1493.4,1378.3 1497.4,1374.1 1501.4,1371.5 1505.4,1352.0 1509.4,1361.9 1513.4,1356.7 1517.4,1345.9 1521.4,1332.6 1525.4,1356.2 1529.4,1378.0 1533.4,1397.7 1537.4,1393.0 1541.4,1379.0 1545.4,1384.5 1549.4,1363.8 1553.4,1374.9 1557.4,1376.6 1561.4,1369.0 1565.4,1365.4 1569.4,1370.7 1573.4,1356.4 1577.4,1354.2 1581.4,1368.2 1585.4,1378.0 1589.4,1384.2 1593.4,1376.6 1597.4,1379.0 1601.4,1384.2 1605.4,1395.9 1609.4,1413.7 1613.4,1414.8 1617.4,1424.8 1621.4,1425.0 1625.4,1434.3 1629.4,1432.8 1633.4,1433.9 1637.4,1431.5 1641.4,1433.0 1645.4,1445.0 1649.4,1446.2 1653.4,1433.8 1657.4,1429.8 1661.4,1420.5 1665.4,1427.2 1669.4,1430.3 1673.4,1432.3 1677.4,1444.4 1681.4,1445.6 1685.4,1427.1 1689.4,1408.8 1693.4,1406.6 1697.4,1403.5 1701.4,1404.5 1705.4,1399.1 1709.4,1374.0 1713.4,1365.3 1717.4,1376.7 1721.4,1375.8 1725.4,1347.3 1729.4,1333.4 1733.4,1351.3 1737.4,1350.3 1741.4,1327.6 1745.4,1335.5 1749.4,1356.9 1753.4,1375.8 1757.4,1384.3 1761.4,1401.2 1765.4,1380.2 1769.4,1381.1 1773.4,1404.9 1777.4,1394.9 1781.4,1369.0 1785.4,1388.8 1789.4,1398.7 1793.4,1369.5 1797.4,1341.6 1801.4,1344.8 1805.4,1371.1 1809.4,1380.3 1813.4,1403.2 1817.4,1382.7 1821.4,1391.7 1825.4,1382.4 1829.4,1379.8 1833.4,1365.0 1837.4,1369.5 1841.4,1356.4 1845.4,1371.2 1849.4,1384.1 1853.4,1402.8 1857.4,1414.6 1861.4,1398.2 1865.4,1418.2 1869.4,1425.1 1873.4,1445.2 1877.4,1449.2 1881.4,1440.9 1885.4,1451.0 1889.4,1444.4 1893.4,1460.5 1897.4,1464.0 1901.4,1470.4 1905.4,1465.8 1909.4,1452.2 1913.4,1442.6 1917.4,1439.9 1921.4,1442.2 1925.4,1444.4 1929.4,1450.2 1933.4,1460.4 1937.4,1463.3 1941.4,1460.6 1945.4,1466.8 1949.4,1474.3 1953.4,1462.4 1957.4,1454.9 1961.4,1471.4 1965.4,1463.0 1969.4,1473.8 1973.4,1466.8 1977.4,1453.5 1981.4,1454.7 1985.4,1466.9 1989.4,1477.0 1993.4,1458.1 1997.4,1464.7 2001.4,1468.4 2005.4,1466.5 2009.4,1473.4 2013.4,1472.1 2017.4,1454.7 2021.4,1461.9 2025.4,1442.2 2029.4,1430.7 2033.4,1447.3 2037.4,1452.2 2041.4,1456.0 2045.4,1468.3 2049.4,1471.9 2053.4,1471.2 2057.4,1475.9 2061.4,1461.6 2065.4,1459.2 2069.4,1447.3 2073.4,1464.3 2077.4,1477.7 2081.4,1483.0 2085.4,1474.0 2089.4,1483.1 2093.4,1477.0 2097.4,1483.9 2101.4,1484.6 2105.4,1480.5 2109.4,1479.1 2113.4,1473.6" fill="none" stroke="#8c8c8c" stroke-opacity="0.17" stroke-width="1.3"/><polyline points="497.4,1474.2 501.4,1479.0 505.4,1480.1 509.4,1482.9 513.4,1485.1 517.4,1482.2 521.4,1492.0 525.4,1494.2 529.4,1494.4 533.4,1495.0 537.4,1498.7 541.4,1495.0 545.4,1494.3 549.4,1496.4 553.4,1497.2 557.4,1497.5 561.4,1494.8 565.4,1490.9 569.4,1492.8 573.4,1491.3 577.4,1496.0 581.4,1499.8 585.4,1503.7 589.4,1502.0 593.4,1501.9 597.4,1498.3 601.4,1496.6 605.4,1492.1 609.4,1491.6 613.4,1495.8 617.4,1498.6 621.4,1497.5 625.4,1495.8 629.4,1500.2 633.4,1496.5 637.4,1499.8 641.4,1503.0 645.4,1499.6 649.4,1503.3 653.4,1504.3 657.4,1503.2 661.4,1502.4 665.4,1503.6 669.4,1508.7 673.4,1510.0 677.4,1506.2 681.4,1504.5 685.4,1499.8 689.4,1502.2 693.4,1503.5 697.4,1505.0 701.4,1500.4 705.4,1495.7 709.4,1499.9 713.4,1498.3 717.4,1497.9 721.4,1502.7 725.4,1497.3 729.4,1495.4 733.4,1490.7 737.4,1490.8 741.4,1492.3 745.4,1489.0 749.4,1490.9 753.4,1493.6 757.4,1493.8 761.4,1493.1 765.4,1492.3 769.4,1491.5 773.4,1490.7 777.4,1489.9 781.4,1489.2 785.4,1482.3 789.4,1473.9 793.4,1462.2 797.4,1451.9 801.4,1442.8 805.4,1444.0 809.4,1447.4 813.4,1440.7 817.4,1443.8 821.4,1431.2 825.4,1418.0 829.4,1411.4 833.4,1398.0 837.4,1408.9 841.4,1407.3 845.4,1409.5 849.4,1423.5 853.4,1418.5 857.4,1417.3 861.4,1412.1 865.4,1410.6 869.4,1425.6 873.4,1419.7 877.4,1421.4 881.4,1421.4 885.4,1410.4 889.4,1401.5 893.4,1404.4 897.4,1416.0 901.4,1422.2 905.4,1419.3 909.4,1436.8 913.4,1435.1 917.4,1447.1 921.4,1437.3 925.4,1440.9 929.4,1428.4 933.4,1420.2 937.4,1420.4 941.4,1431.6 945.4,1433.6 949.4,1435.5 953.4,1436.9 957.4,1441.0 961.4,1438.1 965.4,1453.8 969.4,1447.8 973.4,1441.7 977.4,1446.1 981.4,1446.5 985.4,1450.8 989.4,1434.1 993.4,1425.1 997.4,1412.1 1001.4,1420.3 1005.4,1412.9 1009.4,1408.7 1013.4,1400.4 1017.4,1397.2 1021.4,1384.0 1025.4,1384.5 1029.4,1376.1 1033.4,1378.8 1037.4,1366.8 1041.4,1360.7 1045.4,1358.2 1049.4,1362.1 1053.4,1363.6 1057.4,1356.4 1061.4,1334.3 1065.4,1333.6 1069.4,1334.9 1073.4,1336.2 1077.4,1337.6 1081.4,1346.3 1085.4,1340.8 1089.4,1358.6 1093.4,1349.0 1097.4,1343.7 1101.4,1342.1 1105.4,1340.5 1109.4,1345.5 1113.4,1348.2 1117.4,1344.1 1121.4,1359.5 1125.4,1370.1 1129.4,1372.9 1133.4,1382.8 1137.4,1394.7 1141.4,1397.6 1145.4,1384.2 1149.4,1381.3 1153.4,1403.5 1157.4,1399.8 1161.4,1406.9 1165.4,1392.4 1169.4,1405.7 1173.4,1420.5 1177.4,1421.0 1181.4,1422.7 1185.4,1426.9 1189.4,1424.9 1193.4,1422.1 1197.4,1426.1 1201.4,1432.8 1205.4,1434.8 1209.4,1446.1 1213.4,1455.2 1217.4,1456.2 1221.4,1458.8 1225.4,1460.6 1229.4,1442.4 1233.4,1431.4 1237.4,1443.5 1241.4,1453.6 1245.4,1457.5 1249.4,1461.0 1253.4,1461.9 1257.4,1457.8 1261.4,1441.3 1265.4,1439.8 1269.4,1429.1 1273.4,1413.4 1277.4,1423.0 1281.4,1422.9 1285.4,1434.5 1289.4,1424.6 1293.4,1427.5 1297.4,1417.9 1301.4,1428.5 1305.4,1420.2 1309.4,1425.7 1313.4,1425.7 1317.4,1420.5 1321.4,1410.0 1325.4,1406.6 1329.4,1404.2 1333.4,1411.6 1337.4,1403.7 1341.4,1393.1 1345.4,1385.7 1349.4,1397.5 1353.4,1387.9 1357.4,1394.2 1361.4,1380.5 1365.4,1369.7 1369.4,1384.7 1373.4,1391.7 1377.4,1381.4 1381.4,1385.4 1385.4,1406.6 1389.4,1406.9 1393.4,1412.7 1397.4,1413.8 1401.4,1417.4 1405.4,1408.1 1409.4,1422.6 1413.4,1428.5 1417.4,1428.1 1421.4,1426.3 1425.4,1427.1 1429.4,1439.5 1433.4,1449.4 1437.4,1448.2 1441.4,1451.4 1445.4,1447.2 1449.4,1426.7 1453.4,1398.8 1457.4,1398.9 1461.4,1384.4 1465.4,1382.1 1469.4,1374.5 1473.4,1369.7 1477.4,1365.0 1481.4,1368.4 1485.4,1370.0 1489.4,1391.2 1493.4,1394.0 1497.4,1390.7 1501.4,1359.6 1505.4,1381.1 1509.4,1375.3 1513.4,1388.5 1517.4,1361.6 1521.4,1381.0 1525.4,1381.8 1529.4,1370.3 1533.4,1370.4 1537.4,1361.0 1541.4,1364.2 1545.4,1351.9 1549.4,1359.3 1553.4,1345.0 1557.4,1349.4 1561.4,1351.2 1565.4,1357.2 1569.4,1373.0 1573.4,1363.9 1577.4,1373.8 1581.4,1372.7 1585.4,1390.5 1589.4,1404.8 1593.4,1418.8 1597.4,1429.9 1601.4,1434.4 1605.4,1449.9 1609.4,1464.3 1613.4,1471.6 1617.4,1470.4 1621.4,1474.8 1625.4,1476.4 1629.4,1477.2 1633.4,1477.6 1637.4,1477.0 1641.4,1475.3 1645.4,1478.6 1649.4,1478.6 1653.4,1478.7 1657.4,1478.7 1661.4,1472.2 1665.4,1466.5 1669.4,1467.2 1673.4,1464.5 1677.4,1465.5 1681.4,1455.5 1685.4,1452.4 1689.4,1439.3 1693.4,1426.2 1697.4,1430.7 1701.4,1436.2 1705.4,1432.2 1709.4,1430.2 1713.4,1430.9 1717.4,1437.7 1721.4,1433.8 1725.4,1431.6 1729.4,1428.6 1733.4,1424.6 1737.4,1426.4 1741.4,1415.8 1745.4,1417.2 1749.4,1426.0 1753.4,1433.9 1757.4,1437.0 1761.4,1434.6 1765.4,1425.5 1769.4,1417.4 1773.4,1421.6 1777.4,1432.8 1781.4,1443.5 1785.4,1430.9 1789.4,1436.7 1793.4,1444.9 1797.4,1442.3 1801.4,1444.2 1805.4,1434.2 1809.4,1429.7 1813.4,1431.0 1817.4,1438.7 1821.4,1441.3 1825.4,1441.4 1829.4,1455.0 1833.4,1456.5 1837.4,1456.0 1841.4,1451.3 1845.4,1451.5 1849.4,1455.9 1853.4,1454.7 1857.4,1459.7 1861.4,1461.5 1865.4,1453.9 1869.4,1465.8 1873.4,1464.6 1877.4,1468.1 1881.4,1478.0 1885.4,1476.0 1889.4,1472.1 1893.4,1470.1 1897.4,1467.8 1901.4,1471.2 1905.4,1466.8 1909.4,1448.3 1913.4,1427.0 1917.4,1420.7 1921.4,1416.8 1925.4,1416.6 1929.4,1435.2 1933.4,1440.3 1937.4,1439.0 1941.4,1449.6 1945.4,1444.8 1949.4,1449.7 1953.4,1453.7 1957.4,1439.4 1961.4,1439.7 1965.4,1431.0 1969.4,1441.8 1973.4,1447.2 1977.4,1462.4 1981.4,1467.4 1985.4,1456.3 1989.4,1442.5 1993.4,1448.2 1997.4,1458.9 2001.4,1437.1 2005.4,1431.6 2009.4,1419.7 2013.4,1416.1 2017.4,1431.3 2021.4,1431.5 2025.4,1441.2 2029.4,1452.9 2033.4,1439.8 2037.4,1447.8 2041.4,1445.7 2045.4,1448.9 2049.4,1455.2 2053.4,1465.9 2057.4,1456.7 2061.4,1472.0 2065.4,1462.6 2069.4,1459.1 2073.4,1471.3 2077.4,1486.7 2081.4,1483.5 2085.4,1493.7 2089.4,1482.9 2093.4,1492.2 2097.4,1485.5 2101.4,1472.0 2105.4,1473.2 2109.4,1464.3 2113.4,1466.9" fill="none" stroke="#8c8c8c" stroke-opacity="0.10" stroke-width="1.3"/><polyline points="497.4,1449.7 501.4,1445.8 505.4,1447.2 509.4,1448.6 513.4,1455.4 517.4,1458.3 521.4,1471.8 525.4,1480.7 529.4,1475.4 533.4,1484.0 537.4,1491.3 541.4,1492.5 545.4,1493.3 549.4,1489.2 553.4,1486.7 557.4,1482.2 561.4,1476.7 565.4,1478.4 569.4,1475.4 573.4,1479.4 577.4,1480.5 581.4,1486.5 585.4,1478.6 589.4,1484.8 593.4,1483.9 597.4,1485.9 601.4,1478.9 605.4,1482.7 609.4,1479.5 613.4,1484.3 617.4,1486.1 621.4,1475.4 625.4,1467.8 629.4,1475.4 633.4,1455.7 637.4,1459.8 641.4,1460.7 645.4,1469.2 649.4,1461.4 653.4,1460.3 657.4,1458.5 661.4,1467.0 665.4,1445.6 669.4,1449.0 673.4,1440.9 677.4,1446.1 681.4,1434.3 685.4,1426.9 689.4,1431.6 693.4,1450.8 697.4,1450.1 701.4,1465.2 705.4,1474.0 709.4,1471.1 713.4,1472.3 717.4,1461.1 721.4,1469.4 725.4,1470.8 729.4,1462.0 733.4,1461.8 737.4,1461.8 741.4,1466.4 745.4,1463.9 749.4,1472.3 753.4,1475.2 757.4,1465.3 761.4,1469.4 765.4,1475.5 769.4,1467.8 773.4,1471.1 777.4,1479.6 781.4,1480.0 785.4,1466.2 789.4,1461.7 793.4,1450.9 797.4,1445.1 801.4,1439.0 805.4,1430.8 809.4,1434.7 813.4,1439.9 817.4,1443.8 821.4,1441.8 825.4,1439.8 829.4,1437.8 833.4,1435.8 837.4,1437.0 841.4,1441.8 845.4,1447.1 849.4,1439.5 853.4,1426.8 857.4,1432.2 861.4,1435.6 865.4,1436.8 869.4,1438.0 873.4,1439.2 877.4,1440.4 881.4,1441.3 885.4,1426.1 889.4,1425.9 893.4,1441.4 897.4,1435.2 901.4,1440.5 905.4,1436.8 909.4,1437.4 913.4,1449.5 917.4,1444.5 921.4,1451.2 925.4,1459.4 929.4,1470.2 933.4,1463.6 937.4,1476.9 941.4,1474.5 945.4,1474.5 949.4,1481.5 953.4,1482.7 957.4,1483.9 961.4,1478.3 965.4,1471.6 969.4,1468.9 973.4,1463.4 977.4,1469.3 981.4,1464.6 985.4,1469.7 989.4,1468.7 993.4,1454.9 997.4,1458.7 1001.4,1452.7 1005.4,1452.7 1009.4,1442.1 1013.4,1449.4 1017.4,1454.5 1021.4,1454.8 1025.4,1453.8 1029.4,1444.3 1033.4,1429.9 1037.4,1421.9 1041.4,1423.8 1045.4,1421.5 1049.4,1410.0 1053.4,1399.1 1057.4,1395.1 1061.4,1371.4 1065.4,1351.2 1069.4,1349.7 1073.4,1336.2 1077.4,1354.6 1081.4,1339.9 1085.4,1352.2 1089.4,1364.5 1093.4,1357.3 1097.4,1358.0 1101.4,1373.3 1105.4,1376.3 1109.4,1371.7 1113.4,1388.8 1117.4,1383.8 1121.4,1403.1 1125.4,1401.1 1129.4,1404.5 1133.4,1406.7 1137.4,1420.1 1141.4,1438.9 1145.4,1448.1 1149.4,1447.1 1153.4,1457.5 1157.4,1463.2 1161.4,1462.5 1165.4,1469.7 1169.4,1458.9 1173.4,1461.9 1177.4,1469.6 1181.4,1476.4 1185.4,1478.6 1189.4,1471.4 1193.4,1473.4 1197.4,1472.5 1201.4,1475.6 1205.4,1475.6 1209.4,1475.2 1213.4,1474.1 1217.4,1471.7 1221.4,1475.8 1225.4,1467.7 1229.4,1457.7 1233.4,1447.5 1237.4,1436.7 1241.4,1447.2 1245.4,1457.9 1249.4,1448.5 1253.4,1447.8 1257.4,1455.4 1261.4,1464.1 1265.4,1471.9 1269.4,1467.9 1273.4,1457.5 1277.4,1440.7 1281.4,1430.4 1285.4,1428.4 1289.4,1407.0 1293.4,1397.6 1297.4,1396.4 1301.4,1403.7 1305.4,1394.1 1309.4,1382.3 1313.4,1376.6 1317.4,1361.8 1321.4,1354.5 1325.4,1354.0 1329.4,1362.6 1333.4,1374.1 1337.4,1357.8 1341.4,1366.8 1345.4,1377.5 1349.4,1383.1 1353.4,1375.3 1357.4,1388.9 1361.4,1377.3 1365.4,1365.1 1369.4,1390.1 1373.4,1385.4 1377.4,1410.6 1381.4,1423.2 1385.4,1408.2 1389.4,1398.7 1393.4,1407.7 1397.4,1400.6 1401.4,1409.4 1405.4,1418.1 1409.4,1414.4 1413.4,1417.7 1417.4,1419.1 1421.4,1432.4 1425.4,1439.1 1429.4,1445.8 1433.4,1450.3 1437.4,1441.8 1441.4,1451.5 1445.4,1453.3 1449.4,1442.8 1453.4,1434.2 1457.4,1428.2 1461.4,1434.4 1465.4,1437.2 1469.4,1428.9 1473.4,1429.4 1477.4,1412.9 1481.4,1383.8 1485.4,1380.7 1489.4,1395.2 1493.4,1401.1 1497.4,1380.9 1501.4,1377.1 1505.4,1377.8 1509.4,1377.0 1513.4,1369.2 1517.4,1367.1 1521.4,1378.4 1525.4,1399.9 1529.4,1399.1 1533.4,1406.4 1537.4,1413.7 1541.4,1409.9 1545.4,1402.7 1549.4,1394.6 1553.4,1383.5 1557.4,1377.9 1561.4,1368.7 1565.4,1386.7 1569.4,1394.5 1573.4,1388.2 1577.4,1397.4 1581.4,1411.2 1585.4,1404.8 1589.4,1410.9 1593.4,1428.7 1597.4,1434.1 1601.4,1449.2 1605.4,1461.1 1609.4,1465.2 1613.4,1460.6 1617.4,1466.0 1621.4,1465.0 1625.4,1462.4 1629.4,1461.3 1633.4,1466.9 1637.4,1476.6 1641.4,1478.4 1645.4,1478.6 1649.4,1472.9 1653.4,1471.2 1657.4,1464.5 1661.4,1461.5 1665.4,1461.0 1669.4,1454.8 1673.4,1456.1 1677.4,1445.0 1681.4,1443.5 1685.4,1432.5 1689.4,1418.7 1693.4,1416.8 1697.4,1408.2 1701.4,1388.7 1705.4,1394.5 1709.4,1398.3 1713.4,1412.3 1717.4,1400.7 1721.4,1382.9 1725.4,1388.1 1729.4,1365.4 1733.4,1387.4 1737.4,1393.2 1741.4,1393.1 1745.4,1364.1 1749.4,1348.7 1753.4,1342.3 1757.4,1369.5 1761.4,1347.8 1765.4,1354.2 1769.4,1328.9 1773.4,1362.1 1777.4,1379.5 1781.4,1397.5 1785.4,1406.0 1789.4,1386.5 1793.4,1371.6 1797.4,1342.1 1801.4,1345.0 1805.4,1321.2 1809.4,1312.2 1813.4,1314.2 1817.4,1341.2 1821.4,1362.7 1825.4,1358.1 1829.4,1392.4 1833.4,1378.1 1837.4,1364.0 1841.4,1364.1 1845.4,1385.2 1849.4,1373.3 1853.4,1387.4 1857.4,1390.2 1861.4,1403.6 1865.4,1402.4 1869.4,1392.2 1873.4,1398.0 1877.4,1412.9 1881.4,1418.8 1885.4,1430.7 1889.4,1425.5 1893.4,1424.0 1897.4,1425.3 1901.4,1427.6 1905.4,1426.8 1909.4,1403.0 1913.4,1400.4 1917.4,1387.7 1921.4,1391.7 1925.4,1395.7 1929.4,1408.3 1933.4,1422.0 1937.4,1435.5 1941.4,1433.6 1945.4,1430.1 1949.4,1439.2 1953.4,1443.7 1957.4,1431.2 1961.4,1441.4 1965.4,1455.2 1969.4,1451.1 1973.4,1452.7 1977.4,1458.9 1981.4,1474.6 1985.4,1480.4 1989.4,1481.6 1993.4,1489.5 1997.4,1488.4 2001.4,1470.2 2005.4,1471.3 2009.4,1466.4 2013.4,1456.4 2017.4,1449.0 2021.4,1433.4 2025.4,1421.8 2029.4,1431.9 2033.4,1450.3 2037.4,1449.5 2041.4,1468.7 2045.4,1455.5 2049.4,1460.8 2053.4,1474.1 2057.4,1487.2 2061.4,1485.6 2065.4,1475.6 2069.4,1491.7 2073.4,1493.4 2077.4,1494.9 2081.4,1494.0 2085.4,1485.2 2089.4,1486.5 2093.4,1483.5 2097.4,1491.1 2101.4,1489.4 2105.4,1487.2 2109.4,1484.5 2113.4,1487.6" fill="none" stroke="#8c8c8c" stroke-opacity="0.11" stroke-width="1.3"/><polyline points="497.4,1478.7 501.4,1484.5 505.4,1487.3 509.4,1487.6 513.4,1495.1 517.4,1501.7 521.4,1504.1 525.4,1501.7 529.4,1501.7 533.4,1504.4 537.4,1505.5 541.4,1505.5 545.4,1501.9 549.4,1504.4 553.4,1500.6 557.4,1501.8 561.4,1501.7 565.4,1497.6 569.4,1496.7 573.4,1498.5 577.4,1502.0 581.4,1498.6 585.4,1499.0 589.4,1501.4 593.4,1498.0 597.4,1501.0 601.4,1504.9 605.4,1503.3 609.4,1500.3 613.4,1496.4 617.4,1493.5 621.4,1493.2 625.4,1495.8 629.4,1500.2 633.4,1501.0 637.4,1505.1 641.4,1504.6 645.4,1505.9 649.4,1501.9 653.4,1500.9 657.4,1496.1 661.4,1492.3 665.4,1495.8 669.4,1491.8 673.4,1482.7 677.4,1483.8 681.4,1484.4 685.4,1463.7 689.4,1450.0 693.4,1459.6 697.4,1459.3 701.4,1450.7 705.4,1454.8 709.4,1457.2 713.4,1468.1 717.4,1457.7 721.4,1455.9 725.4,1455.1 729.4,1455.3 733.4,1464.0 737.4,1469.8 741.4,1463.3 745.4,1465.4 749.4,1464.6 753.4,1473.4 757.4,1475.3 761.4,1476.3 765.4,1467.7 769.4,1462.8 773.4,1460.5 777.4,1454.1 781.4,1452.3 785.4,1426.9 789.4,1410.4 793.4,1417.6 797.4,1401.6 801.4,1391.1 805.4,1392.0 809.4,1399.0 813.4,1409.6 817.4,1400.0 821.4,1406.9 825.4,1387.6 829.4,1392.1 833.4,1360.3 837.4,1339.4 841.4,1324.1 845.4,1320.2 849.4,1338.6 853.4,1319.2 857.4,1336.3 861.4,1314.4 865.4,1335.7 869.4,1359.7 873.4,1367.9 877.4,1386.0 881.4,1402.7 885.4,1401.4 889.4,1414.9 893.4,1403.2 897.4,1414.3 901.4,1426.4 905.4,1440.7 909.4,1438.8 913.4,1435.8 917.4,1440.9 921.4,1443.0 925.4,1447.5 929.4,1438.1 933.4,1438.4 937.4,1453.6 941.4,1449.6 945.4,1460.5 949.4,1473.5 953.4,1478.9 957.4,1479.3 961.4,1479.3 965.4,1480.1 969.4,1474.9 973.4,1469.0 977.4,1466.2 981.4,1460.3 985.4,1463.3 989.4,1454.1 993.4,1456.0 997.4,1455.8 1001.4,1465.0 1005.4,1473.5 1009.4,1476.8 1013.4,1473.7 1017.4,1466.2 1021.4,1465.8 1025.4,1457.4 1029.4,1460.0 1033.4,1443.8 1037.4,1442.8 1041.4,1434.7 1045.4,1428.7 1049.4,1425.6 1053.4,1433.1 1057.4,1438.2 1061.4,1436.2 1065.4,1442.2 1069.4,1444.2 1073.4,1446.2 1077.4,1448.2 1081.4,1441.3 1085.4,1451.8 1089.4,1447.8 1093.4,1442.6 1097.4,1436.6 1101.4,1430.6 1105.4,1428.6 1109.4,1432.6 1113.4,1425.8 1117.4,1428.3 1121.4,1419.3 1125.4,1413.8 1129.4,1433.1 1133.4,1437.0 1137.4,1435.3 1141.4,1440.4 1145.4,1433.4 1149.4,1442.9 1153.4,1431.3 1157.4,1420.0 1161.4,1425.7 1165.4,1440.3 1169.4,1422.8 1173.4,1431.6 1177.4,1436.5 1181.4,1440.2 1185.4,1442.0 1189.4,1434.1 1193.4,1434.4 1197.4,1438.7 1201.4,1437.0 1205.4,1449.4 1209.4,1447.4 1213.4,1454.2 1217.4,1454.3 1221.4,1453.4 1225.4,1445.9 1229.4,1438.5 1233.4,1446.7 1237.4,1436.1 1241.4,1431.1 1245.4,1413.3 1249.4,1409.2 1253.4,1406.3 1257.4,1419.0 1261.4,1429.6 1265.4,1423.5 1269.4,1420.6 1273.4,1402.1 1277.4,1410.0 1281.4,1407.3 1285.4,1393.4 1289.4,1401.9 1293.4,1385.4 1297.4,1371.9 1301.4,1371.5 1305.4,1394.9 1309.4,1383.7 1313.4,1375.5 1317.4,1388.0 1321.4,1381.6 1325.4,1394.3 1329.4,1375.8 1333.4,1366.1 1337.4,1358.7 1341.4,1369.2 1345.4,1353.8 1349.4,1358.8 1353.4,1372.9 1357.4,1392.7 1361.4,1409.1 1365.4,1398.0 1369.4,1404.5 1373.4,1400.3 1377.4,1390.7 1381.4,1384.6 1385.4,1398.5 1389.4,1405.6 1393.4,1398.2 1397.4,1399.1 1401.4,1403.1 1405.4,1419.3 1409.4,1430.0 1413.4,1432.7 1417.4,1448.3 1421.4,1461.6 1425.4,1458.1 1429.4,1454.4 1433.4,1448.7 1437.4,1453.3 1441.4,1455.9 1445.4,1451.8 1449.4,1448.8 1453.4,1438.8 1457.4,1427.0 1461.4,1430.0 1465.4,1444.1 1469.4,1431.9 1473.4,1431.2 1477.4,1411.0 1481.4,1421.6 1485.4,1414.5 1489.4,1426.8 1493.4,1426.7 1497.4,1432.0 1501.4,1430.7 1505.4,1430.0 1509.4,1437.7 1513.4,1443.1 1517.4,1436.7 1521.4,1425.0 1525.4,1433.9 1529.4,1421.8 1533.4,1432.0 1537.4,1435.6 1541.4,1435.6 1545.4,1435.6 1549.4,1433.9 1553.4,1431.9 1557.4,1429.9 1561.4,1421.8 1565.4,1412.9 1569.4,1419.6 1573.4,1419.5 1577.4,1411.8 1581.4,1415.8 1585.4,1412.1 1589.4,1408.5 1593.4,1424.7 1597.4,1435.6 1601.4,1448.1 1605.4,1460.4 1609.4,1466.1 1613.4,1466.3 1617.4,1466.0 1621.4,1463.9 1625.4,1470.4 1629.4,1477.2 1633.4,1472.9 1637.4,1478.0 1641.4,1472.6 1645.4,1463.9 1649.4,1468.2 1653.4,1473.5 1657.4,1471.4 1661.4,1478.6 1665.4,1478.2 1669.4,1475.9 1673.4,1477.4 1677.4,1477.0 1681.4,1469.5 1685.4,1470.5 1689.4,1465.5 1693.4,1457.1 1697.4,1452.1 1701.4,1451.8 1705.4,1450.2 1709.4,1443.8 1713.4,1434.9 1717.4,1436.2 1721.4,1436.0 1725.4,1437.2 1729.4,1432.9 1733.4,1438.2 1737.4,1426.0 1741.4,1415.8 1745.4,1400.9 1749.4,1400.4 1753.4,1399.0 1757.4,1384.8 1761.4,1386.6 1765.4,1357.5 1769.4,1329.6 1773.4,1362.2 1777.4,1388.9 1781.4,1358.5 1785.4,1365.7 1789.4,1364.1 1793.4,1367.1 1797.4,1387.8 1801.4,1394.4 1805.4,1408.1 1809.4,1415.5 1813.4,1429.1 1817.4,1418.8 1821.4,1432.5 1825.4,1434.2 1829.4,1449.7 1833.4,1460.2 1837.4,1461.9 1841.4,1462.3 1845.4,1460.7 1849.4,1461.5 1853.4,1465.1 1857.4,1458.2 1861.4,1460.9 1865.4,1464.8 1869.4,1471.4 1873.4,1470.7 1877.4,1474.8 1881.4,1479.6 1885.4,1480.0 1889.4,1483.7 1893.4,1485.7 1897.4,1484.7 1901.4,1480.4 1905.4,1475.3 1909.4,1471.3 1913.4,1463.2 1917.4,1454.2 1921.4,1451.9 1925.4,1459.3 1929.4,1460.1 1933.4,1473.9 1937.4,1480.1 1941.4,1489.3 1945.4,1493.9 1949.4,1492.1 1953.4,1493.0 1957.4,1494.8 1961.4,1489.5 1965.4,1496.8 1969.4,1498.0 1973.4,1497.2 1977.4,1490.6 1981.4,1488.1 1985.4,1487.1 1989.4,1489.9 1993.4,1484.6 1997.4,1482.8 2001.4,1471.2 2005.4,1473.2 2009.4,1481.3 2013.4,1479.8 2017.4,1482.9 2021.4,1483.7 2025.4,1472.5 2029.4,1477.9 2033.4,1477.2 2037.4,1481.8 2041.4,1490.7 2045.4,1489.2 2049.4,1496.3 2053.4,1494.1 2057.4,1497.0 2061.4,1493.5 2065.4,1497.0 2069.4,1497.0 2073.4,1496.9 2077.4,1497.1 2081.4,1496.4 2085.4,1494.0 2089.4,1494.8 2093.4,1495.1 2097.4,1490.7 2101.4,1482.4 2105.4,1483.6 2109.4,1475.5 2113.4,1470.8" fill="none" stroke="#8c8c8c" stroke-opacity="0.15" stroke-width="1.3"/><polyline points="497.4,1473.0 501.4,1478.0 505.4,1477.3 509.4,1476.8 513.4,1473.2 517.4,1476.0 521.4,1474.6 525.4,1479.7 529.4,1488.4 533.4,1480.6 537.4,1472.6 541.4,1466.8 545.4,1466.4 549.4,1467.0 553.4,1467.3 557.4,1467.6 561.4,1471.8 565.4,1479.3 569.4,1486.7 573.4,1485.5 577.4,1488.2 581.4,1481.7 585.4,1483.7 589.4,1491.1 593.4,1495.3 597.4,1490.1 601.4,1481.5 605.4,1490.3 609.4,1492.3 613.4,1494.5 617.4,1489.7 621.4,1491.9 625.4,1479.0 629.4,1487.0 633.4,1494.1 637.4,1492.3 641.4,1471.3 645.4,1481.0 649.4,1495.9 653.4,1496.2 657.4,1494.1 661.4,1492.1 665.4,1495.7 669.4,1503.4 673.4,1500.6 677.4,1496.2 681.4,1500.5 685.4,1499.6 689.4,1498.8 693.4,1496.6 697.4,1498.6 701.4,1503.4 705.4,1503.0 709.4,1505.6 713.4,1504.5 717.4,1503.5 721.4,1505.4 725.4,1503.6 729.4,1499.3 733.4,1498.5 737.4,1497.7 741.4,1496.9 745.4,1496.2 749.4,1495.4 753.4,1493.9 757.4,1490.3 761.4,1490.2 765.4,1488.2 769.4,1483.5 773.4,1485.6 777.4,1483.4 781.4,1485.0 785.4,1472.0 789.4,1462.3 793.4,1457.0 797.4,1450.1 801.4,1445.2 805.4,1440.1 809.4,1426.8 813.4,1432.9 817.4,1436.6 821.4,1433.8 825.4,1433.1 829.4,1437.8 833.4,1435.7 837.4,1439.1 841.4,1443.6 845.4,1450.0 849.4,1450.5 853.4,1440.5 857.4,1440.5 861.4,1432.0 865.4,1436.8 869.4,1434.2 873.4,1439.2 877.4,1440.4 881.4,1441.3 885.4,1438.3 889.4,1434.6 893.4,1433.8 897.4,1439.5 901.4,1432.8 905.4,1441.0 909.4,1456.3 913.4,1451.3 917.4,1462.7 921.4,1466.9 925.4,1474.4 929.4,1477.1 933.4,1477.9 937.4,1478.7 941.4,1477.4 945.4,1469.2 949.4,1479.1 953.4,1482.7 957.4,1483.9 961.4,1480.1 965.4,1481.3 969.4,1482.3 973.4,1480.8 977.4,1481.3 981.4,1480.8 985.4,1488.9 989.4,1486.9 993.4,1484.9 997.4,1482.9 1001.4,1472.5 1005.4,1477.6 1009.4,1472.9 1013.4,1473.3 1017.4,1472.7 1021.4,1470.9 1025.4,1462.8 1029.4,1462.1 1033.4,1454.1 1037.4,1453.1 1041.4,1448.2 1045.4,1443.7 1049.4,1438.9 1053.4,1431.5 1057.4,1420.5 1061.4,1431.3 1065.4,1433.3 1069.4,1439.4 1073.4,1446.2 1077.4,1448.2 1081.4,1446.8 1085.4,1452.2 1089.4,1445.2 1093.4,1442.6 1097.4,1436.6 1101.4,1427.2 1105.4,1423.4 1109.4,1423.2 1113.4,1421.7 1117.4,1422.8 1121.4,1437.1 1125.4,1428.1 1129.4,1446.9 1133.4,1456.6 1137.4,1460.6 1141.4,1464.6 1145.4,1464.9 1149.4,1472.6 1153.4,1476.6 1157.4,1476.1 1161.4,1476.0 1165.4,1469.0 1169.4,1461.9 1173.4,1471.2 1177.4,1474.9 1181.4,1474.2 1185.4,1477.4 1189.4,1472.3 1193.4,1467.0 1197.4,1467.7 1201.4,1470.2 1205.4,1466.6 1209.4,1467.8 1213.4,1463.9 1217.4,1454.2 1221.4,1452.2 1225.4,1441.6 1229.4,1440.0 1233.4,1445.6 1237.4,1441.8 1241.4,1431.9 1245.4,1441.3 1249.4,1441.3 1253.4,1446.4 1257.4,1446.7 1261.4,1443.3 1265.4,1454.1 1269.4,1434.1 1273.4,1446.3 1277.4,1447.5 1281.4,1443.2 1285.4,1457.3 1289.4,1461.4 1293.4,1461.1 1297.4,1439.3 1301.4,1441.3 1305.4,1437.1 1309.4,1437.8 1313.4,1442.3 1317.4,1431.8 1321.4,1435.0 1325.4,1431.1 1329.4,1425.6 1333.4,1414.6 1337.4,1404.2 1341.4,1396.6 1345.4,1397.3 1349.4,1408.8 1353.4,1403.0 1357.4,1396.6 1361.4,1396.5 1365.4,1408.1 1369.4,1409.6 1373.4,1425.0 1377.4,1417.6 1381.4,1400.9 1385.4,1407.4 1389.4,1418.6 1393.4,1410.6 1397.4,1400.5 1401.4,1409.4 1405.4,1407.1 1409.4,1422.9 1413.4,1431.7 1417.4,1426.4 1421.4,1427.8 1425.4,1427.1 1429.4,1429.1 1433.4,1431.1 1437.4,1441.9 1441.4,1452.0 1445.4,1453.3 1449.4,1446.4 1453.4,1437.9 1457.4,1432.8 1461.4,1435.6 1465.4,1437.2 1469.4,1434.2 1473.4,1446.4 1477.4,1439.9 1481.4,1433.6 1485.4,1438.6 1489.4,1441.2 1493.4,1431.9 1497.4,1426.8 1501.4,1421.6 1505.4,1408.5 1509.4,1394.7 1513.4,1402.6 1517.4,1385.1 1521.4,1385.1 1525.4,1375.9 1529.4,1381.0 1533.4,1394.0 1537.4,1384.7 1541.4,1386.5 1545.4,1373.8 1549.4,1379.3 1553.4,1382.1 1557.4,1366.9 1561.4,1355.0 1565.4,1345.3 1569.4,1335.9 1573.4,1351.0 1577.4,1368.5 1581.4,1382.4 1585.4,1381.3 1589.4,1382.7 1593.4,1378.8 1597.4,1389.7 1601.4,1416.7 1605.4,1415.4 1609.4,1424.7 1613.4,1415.6 1617.4,1423.6 1621.4,1417.4 1625.4,1416.2 1629.4,1407.9 1633.4,1414.1 1637.4,1416.5 1641.4,1425.4 1645.4,1431.9 1649.4,1438.6 1653.4,1432.8 1657.4,1425.7 1661.4,1428.8 1665.4,1417.6 1669.4,1433.7 1673.4,1442.8 1677.4,1442.6 1681.4,1433.9 1685.4,1416.0 1689.4,1409.7 1693.4,1409.2 1697.4,1393.5 1701.4,1380.9 1705.4,1380.0 1709.4,1371.3 1713.4,1377.8 1717.4,1369.2 1721.4,1387.2 1725.4,1401.5 1729.4,1388.7 1733.4,1387.8 1737.4,1389.8 1741.4,1384.1 1745.4,1399.0 1749.4,1403.3 1753.4,1410.2 1757.4,1404.4 1761.4,1405.4 1765.4,1409.5 1769.4,1415.4 1773.4,1399.9 1777.4,1415.0 1781.4,1410.5 1785.4,1388.5 1789.4,1404.0 1793.4,1406.9 1797.4,1413.3 1801.4,1418.7 1805.4,1421.3 1809.4,1435.1 1813.4,1423.0 1817.4,1418.9 1821.4,1413.5 1825.4,1425.6 1829.4,1426.2 1833.4,1407.8 1837.4,1392.4 1841.4,1379.5 1845.4,1386.8 1849.4,1390.1 1853.4,1390.2 1857.4,1374.3 1861.4,1376.6 1865.4,1382.0 1869.4,1390.0 1873.4,1398.0 1877.4,1406.0 1881.4,1412.0 1885.4,1416.0 1889.4,1420.0 1893.4,1424.0 1897.4,1431.9 1901.4,1436.7 1905.4,1422.2 1909.4,1395.5 1913.4,1401.7 1917.4,1389.2 1921.4,1397.6 1925.4,1409.7 1929.4,1414.1 1933.4,1433.5 1937.4,1429.6 1941.4,1444.3 1945.4,1463.8 1949.4,1478.3 1953.4,1486.0 1957.4,1486.2 1961.4,1487.4 1965.4,1493.0 1969.4,1491.5 1973.4,1487.5 1977.4,1477.5 1981.4,1469.0 1985.4,1456.5 1989.4,1471.4 1993.4,1463.1 1997.4,1454.4 2001.4,1473.8 2005.4,1481.7 2009.4,1478.0 2013.4,1457.1 2017.4,1448.3 2021.4,1436.1 2025.4,1456.0 2029.4,1450.6 2033.4,1474.3 2037.4,1462.8 2041.4,1444.5 2045.4,1465.7 2049.4,1453.0 2053.4,1468.3 2057.4,1474.7 2061.4,1469.8 2065.4,1483.1 2069.4,1482.0 2073.4,1493.9 2077.4,1494.6 2081.4,1498.3 2085.4,1501.4 2089.4,1499.7 2093.4,1500.4 2097.4,1501.3 2101.4,1501.3 2105.4,1494.1 2109.4,1494.9 2113.4,1498.8" fill="none" stroke="#8c8c8c" stroke-opacity="0.12" stroke-width="1.3"/><polyline points="497.4,1444.4 501.4,1446.6 505.4,1447.2 509.4,1455.5 513.4,1455.9 517.4,1469.9 521.4,1478.5 525.4,1478.2 529.4,1473.3 533.4,1472.7 537.4,1475.5 541.4,1482.8 545.4,1490.4 549.4,1488.0 553.4,1480.3 557.4,1483.6 561.4,1486.2 565.4,1487.9 569.4,1492.2 573.4,1495.5 577.4,1496.9 581.4,1499.9 585.4,1497.2 589.4,1500.8 593.4,1501.9 597.4,1498.2 601.4,1494.8 605.4,1495.7 609.4,1493.3 613.4,1497.4 617.4,1495.1 621.4,1495.4 625.4,1495.9 629.4,1500.4 633.4,1498.9 637.4,1502.6 641.4,1504.6 645.4,1505.1 649.4,1506.1 653.4,1506.1 657.4,1506.2 661.4,1506.2 665.4,1502.1 669.4,1502.8 673.4,1503.4 677.4,1497.5 681.4,1498.6 685.4,1496.9 689.4,1495.4 693.4,1498.2 697.4,1501.4 701.4,1503.9 705.4,1503.2 709.4,1503.5 713.4,1505.5 717.4,1505.5 721.4,1505.4 725.4,1498.5 729.4,1499.1 733.4,1494.0 737.4,1490.0 741.4,1490.9 745.4,1488.0 749.4,1489.9 753.4,1490.9 757.4,1488.7 761.4,1490.6 765.4,1492.3 769.4,1491.5 773.4,1490.7 777.4,1489.9 781.4,1488.9 785.4,1482.3 789.4,1473.9 793.4,1465.5 797.4,1452.7 801.4,1444.4 805.4,1443.2 809.4,1436.8 813.4,1427.6 817.4,1424.3 821.4,1412.7 825.4,1409.2 829.4,1392.0 833.4,1399.6 837.4,1382.7 841.4,1404.2 845.4,1393.4 849.4,1405.3 853.4,1403.6 857.4,1385.3 861.4,1389.9 865.4,1390.8 869.4,1395.2 873.4,1382.2 877.4,1382.2 881.4,1396.7 885.4,1400.9 889.4,1395.2 893.4,1391.3 897.4,1407.5 901.4,1399.6 905.4,1407.6 909.4,1415.4 913.4,1418.8 917.4,1402.8 921.4,1390.7 925.4,1405.7 929.4,1405.4 933.4,1400.5 937.4,1402.0 941.4,1397.1 945.4,1401.1 949.4,1414.6 953.4,1426.2 957.4,1421.3 961.4,1420.0 965.4,1421.1 969.4,1425.1 973.4,1430.0 977.4,1440.0 981.4,1444.0 985.4,1450.5 989.4,1447.6 993.4,1439.2 997.4,1424.3 1001.4,1412.8 1005.4,1415.2 1009.4,1402.1 1013.4,1412.0 1017.4,1393.1 1021.4,1383.0 1025.4,1395.7 1029.4,1386.7 1033.4,1383.8 1037.4,1382.9 1041.4,1364.7 1045.4,1354.0 1049.4,1349.0 1053.4,1353.5 1057.4,1360.5 1061.4,1364.7 1065.4,1350.3 1069.4,1349.4 1073.4,1368.1 1077.4,1357.2 1081.4,1352.3 1085.4,1358.4 1089.4,1378.2 1093.4,1359.3 1097.4,1364.9 1101.4,1362.1 1105.4,1361.9 1109.4,1373.1 1113.4,1358.6 1117.4,1366.3 1121.4,1364.4 1125.4,1377.6 1129.4,1390.5 1133.4,1395.0 1137.4,1387.0 1141.4,1403.4 1145.4,1417.5 1149.4,1424.6 1153.4,1436.6 1157.4,1451.6 1161.4,1444.1 1165.4,1446.4 1169.4,1452.1 1173.4,1446.9 1177.4,1458.1 1181.4,1456.2 1185.4,1467.4 1189.4,1470.2 1193.4,1479.8 1197.4,1482.4 1201.4,1484.4 1205.4,1484.4 1209.4,1483.5 1213.4,1482.9 1217.4,1482.1 1221.4,1478.4 1225.4,1478.1 1229.4,1468.1 1233.4,1466.9 1237.4,1456.0 1241.4,1448.6 1245.4,1444.5 1249.4,1430.2 1253.4,1436.0 1257.4,1432.3 1261.4,1422.0 1265.4,1429.8 1269.4,1428.4 1273.4,1431.4 1277.4,1415.0 1281.4,1405.7 1285.4,1387.2 1289.4,1372.0 1293.4,1381.7 1297.4,1365.6 1301.4,1369.9 1305.4,1368.0 1309.4,1378.4 1313.4,1395.0 1317.4,1408.3 1321.4,1415.9 1325.4,1423.3 1329.4,1420.2 1333.4,1432.7 1337.4,1440.2 1341.4,1433.4 1345.4,1426.5 1349.4,1425.0 1353.4,1429.1 1357.4,1421.2 1361.4,1433.6 1365.4,1440.2 1369.4,1446.2 1373.4,1450.9 1377.4,1452.5 1381.4,1453.0 1385.4,1457.4 1389.4,1458.5 1393.4,1463.3 1397.4,1466.5 1401.4,1463.4 1405.4,1459.1 1409.4,1468.5 1413.4,1465.5 1417.4,1470.9 1421.4,1470.8 1425.4,1469.3 1429.4,1466.7 1433.4,1467.4 1437.4,1469.3 1441.4,1462.6 1445.4,1446.7 1449.4,1428.8 1453.4,1428.2 1457.4,1430.6 1461.4,1419.0 1465.4,1414.6 1469.4,1409.9 1473.4,1418.3 1477.4,1404.9 1481.4,1394.2 1485.4,1390.4 1489.4,1370.5 1493.4,1361.2 1497.4,1369.7 1501.4,1365.4 1505.4,1336.4 1509.4,1326.1 1513.4,1325.8 1517.4,1318.1 1521.4,1318.0 1525.4,1329.0 1529.4,1334.0 1533.4,1342.0 1537.4,1363.4 1541.4,1348.6 1545.4,1364.3 1549.4,1346.2 1553.4,1347.1 1557.4,1346.2 1561.4,1340.2 1565.4,1342.3 1569.4,1355.0 1573.4,1347.2 1577.4,1337.3 1581.4,1340.7 1585.4,1358.2 1589.4,1365.1 1593.4,1381.8 1597.4,1390.0 1601.4,1396.5 1605.4,1414.8 1609.4,1428.8 1613.4,1438.6 1617.4,1428.4 1621.4,1423.2 1625.4,1426.9 1629.4,1436.0 1633.4,1435.8 1637.4,1444.7 1641.4,1438.4 1645.4,1443.6 1649.4,1440.6 1653.4,1447.1 1657.4,1442.4 1661.4,1433.5 1665.4,1428.9 1669.4,1438.3 1673.4,1447.0 1677.4,1456.7 1681.4,1449.1 1685.4,1429.8 1689.4,1428.4 1693.4,1417.2 1697.4,1419.3 1701.4,1418.7 1705.4,1412.6 1709.4,1388.3 1713.4,1371.0 1717.4,1378.6 1721.4,1370.6 1725.4,1384.8 1729.4,1397.3 1733.4,1396.4 1737.4,1413.4 1741.4,1390.1 1745.4,1381.2 1749.4,1380.0 1753.4,1352.5 1757.4,1373.6 1761.4,1352.2 1765.4,1358.2 1769.4,1345.7 1773.4,1339.6 1777.4,1338.0 1781.4,1324.0 1785.4,1309.5 1789.4,1318.9 1793.4,1326.2 1797.4,1307.1 1801.4,1336.7 1805.4,1314.7 1809.4,1312.2 1813.4,1314.2 1817.4,1317.7 1821.4,1323.7 1825.4,1352.8 1829.4,1335.9 1833.4,1346.3 1837.4,1360.5 1841.4,1356.4 1845.4,1363.8 1849.4,1371.1 1853.4,1389.4 1857.4,1401.7 1861.4,1402.0 1865.4,1390.4 1869.4,1392.5 1873.4,1411.0 1877.4,1416.0 1881.4,1418.3 1885.4,1426.4 1889.4,1420.0 1893.4,1428.0 1897.4,1434.7 1901.4,1415.3 1905.4,1405.3 1909.4,1408.5 1913.4,1389.4 1917.4,1391.8 1921.4,1391.7 1925.4,1397.3 1929.4,1399.8 1933.4,1406.1 1937.4,1427.8 1941.4,1441.5 1945.4,1464.0 1949.4,1462.4 1953.4,1462.0 1957.4,1457.6 1961.4,1470.5 1965.4,1465.9 1969.4,1473.2 1973.4,1461.7 1977.4,1463.9 1981.4,1457.8 1985.4,1471.8 1989.4,1466.5 1993.4,1484.7 1997.4,1486.4 2001.4,1478.2 2005.4,1479.7 2009.4,1488.9 2013.4,1489.9 2017.4,1493.3 2021.4,1493.8 2025.4,1495.6 2029.4,1488.8 2033.4,1494.8 2037.4,1497.3 2041.4,1500.4 2045.4,1497.4 2049.4,1502.1 2053.4,1502.8 2057.4,1501.1 2061.4,1504.5 2065.4,1504.5 2069.4,1504.5 2073.4,1504.5 2077.4,1504.5 2081.4,1503.6 2085.4,1504.5 2089.4,1503.8 2093.4,1503.0 2097.4,1501.6 2101.4,1500.7 2105.4,1493.6 2109.4,1497.5 2113.4,1499.3" fill="none" stroke="#8c8c8c" stroke-opacity="0.15" stroke-width="1.3"/><polyline points="497.4,1473.5 501.4,1468.9 505.4,1468.3 509.4,1466.0 513.4,1471.0 517.4,1471.7 521.4,1477.4 525.4,1487.1 529.4,1486.0 533.4,1479.1 537.4,1470.9 541.4,1477.9 545.4,1478.2 549.4,1477.9 553.4,1470.1 557.4,1467.6 561.4,1468.0 565.4,1474.6 569.4,1468.0 573.4,1467.2 577.4,1466.4 581.4,1467.0 585.4,1464.6 589.4,1465.6 593.4,1466.8 597.4,1476.0 601.4,1465.4 605.4,1459.1 609.4,1453.7 613.4,1452.1 617.4,1449.3 621.4,1445.4 625.4,1451.6 629.4,1440.4 633.4,1446.6 637.4,1457.7 641.4,1469.4 645.4,1447.1 649.4,1451.0 653.4,1466.7 657.4,1471.7 661.4,1474.4 665.4,1470.8 669.4,1487.8 673.4,1489.4 677.4,1482.8 681.4,1482.1 685.4,1480.6 689.4,1468.5 693.4,1476.3 697.4,1488.2 701.4,1490.8 705.4,1479.5 709.4,1478.8 713.4,1484.4 717.4,1476.1 721.4,1475.0 725.4,1477.3 729.4,1477.0 733.4,1473.1 737.4,1463.2 741.4,1468.4 745.4,1463.6 749.4,1466.9 753.4,1468.5 757.4,1469.6 761.4,1458.5 765.4,1466.0 769.4,1469.1 773.4,1477.1 777.4,1466.3 781.4,1470.0 785.4,1455.4 789.4,1453.6 793.4,1450.9 797.4,1440.4 801.4,1437.1 805.4,1427.7 809.4,1420.8 813.4,1424.4 817.4,1414.0 821.4,1420.2 825.4,1413.4 829.4,1420.7 833.4,1409.2 837.4,1397.1 841.4,1402.2 845.4,1397.7 849.4,1398.3 853.4,1376.2 857.4,1383.4 861.4,1393.2 865.4,1397.4 869.4,1383.2 873.4,1361.6 877.4,1367.9 881.4,1351.6 885.4,1363.8 889.4,1368.5 893.4,1389.0 897.4,1404.0 901.4,1417.3 905.4,1433.9 909.4,1440.3 913.4,1441.3 917.4,1435.1 921.4,1441.1 925.4,1444.8 929.4,1447.4 933.4,1446.7 937.4,1447.2 941.4,1461.1 945.4,1460.3 949.4,1455.3 953.4,1468.0 957.4,1475.1 961.4,1483.7 965.4,1485.9 969.4,1485.5 973.4,1480.8 977.4,1481.3 981.4,1481.4 985.4,1478.4 989.4,1481.2 993.4,1471.4 997.4,1482.0 1001.4,1472.6 1005.4,1465.6 1009.4,1472.1 1013.4,1464.4 1017.4,1467.6 1021.4,1461.2 1025.4,1454.4 1029.4,1448.1 1033.4,1436.7 1037.4,1440.5 1041.4,1446.5 1045.4,1443.7 1049.4,1431.7 1053.4,1418.6 1057.4,1416.5 1061.4,1422.5 1065.4,1424.5 1069.4,1440.1 1073.4,1446.2 1077.4,1448.2 1081.4,1443.1 1085.4,1441.6 1089.4,1424.5 1093.4,1416.1 1097.4,1419.1 1101.4,1410.5 1105.4,1401.6 1109.4,1403.7 1113.4,1416.3 1117.4,1424.3 1121.4,1416.7 1125.4,1418.7 1129.4,1416.5 1133.4,1433.2 1137.4,1438.0 1141.4,1443.0 1145.4,1455.4 1149.4,1456.2 1153.4,1456.9 1157.4,1468.1 1161.4,1463.2 1165.4,1463.0 1169.4,1465.7 1173.4,1461.9 1177.4,1465.8 1181.4,1465.4 1185.4,1473.2 1189.4,1474.9 1193.4,1480.4 1197.4,1482.4 1201.4,1484.4 1205.4,1484.7 1209.4,1479.2 1213.4,1475.4 1217.4,1468.8 1221.4,1454.9 1225.4,1454.3 1229.4,1449.1 1233.4,1447.1 1237.4,1451.8 1241.4,1442.5 1245.4,1433.2 1249.4,1437.7 1253.4,1422.9 1257.4,1431.0 1261.4,1424.6 1265.4,1438.0 1269.4,1446.9 1273.4,1440.5 1277.4,1432.6 1281.4,1428.2 1285.4,1436.1 1289.4,1433.0 1293.4,1441.6 1297.4,1457.6 1301.4,1454.0 1305.4,1450.5 1309.4,1447.0 1313.4,1443.3 1317.4,1439.9 1321.4,1434.9 1325.4,1436.6 1329.4,1437.8 1333.4,1439.0 1337.4,1440.2 1341.4,1428.8 1345.4,1428.0 1349.4,1432.8 1353.4,1424.9 1357.4,1428.2 1361.4,1430.0 1365.4,1439.6 1369.4,1442.2 1373.4,1450.0 1377.4,1454.6 1381.4,1451.1 1385.4,1456.9 1389.4,1459.2 1393.4,1458.2 1397.4,1458.4 1401.4,1462.2 1405.4,1469.0 1409.4,1466.6 1413.4,1462.2 1417.4,1461.0 1421.4,1464.4 1425.4,1465.4 1429.4,1469.4 1433.4,1472.1 1437.4,1472.1 1441.4,1472.6 1445.4,1467.8 1449.4,1460.9 1453.4,1454.6 1457.4,1445.9 1461.4,1446.6 1465.4,1442.9 1469.4,1454.1 1473.4,1457.3 1477.4,1468.3 1481.4,1467.2 1485.4,1456.2 1489.4,1454.6 1493.4,1450.7 1497.4,1445.3 1501.4,1447.0 1505.4,1447.3 1509.4,1445.3 1513.4,1435.4 1517.4,1441.2 1521.4,1439.3 1525.4,1435.7 1529.4,1435.6 1533.4,1435.6 1537.4,1432.4 1541.4,1427.3 1545.4,1423.3 1549.4,1422.2 1553.4,1411.0 1557.4,1399.6 1561.4,1403.6 1565.4,1391.4 1569.4,1394.5 1573.4,1389.6 1577.4,1398.6 1581.4,1393.4 1585.4,1395.4 1589.4,1387.6 1593.4,1376.7 1597.4,1402.1 1601.4,1409.0 1605.4,1414.5 1609.4,1438.4 1613.4,1433.6 1617.4,1433.3 1621.4,1423.0 1625.4,1419.7 1629.4,1428.6 1633.4,1436.7 1637.4,1446.2 1641.4,1457.1 1645.4,1453.7 1649.4,1445.5 1653.4,1436.6 1657.4,1441.7 1661.4,1444.2 1665.4,1442.3 1669.4,1451.0 1673.4,1445.0 1677.4,1447.4 1681.4,1440.0 1685.4,1423.1 1689.4,1421.2 1693.4,1407.9 1697.4,1410.6 1701.4,1417.1 1705.4,1410.6 1709.4,1403.3 1713.4,1387.0 1717.4,1365.6 1721.4,1369.4 1725.4,1357.4 1729.4,1355.6 1733.4,1344.7 1737.4,1327.9 1741.4,1321.1 1745.4,1332.2 1749.4,1325.5 1753.4,1312.3 1757.4,1332.3 1761.4,1310.0 1765.4,1307.1 1769.4,1307.9 1773.4,1312.7 1777.4,1332.2 1781.4,1310.3 1785.4,1335.9 1789.4,1346.9 1793.4,1367.7 1797.4,1362.2 1801.4,1357.4 1805.4,1333.8 1809.4,1322.2 1813.4,1345.9 1817.4,1336.1 1821.4,1363.8 1825.4,1390.7 1829.4,1422.9 1833.4,1407.2 1837.4,1407.9 1841.4,1427.9 1845.4,1420.3 1849.4,1411.4 1853.4,1392.3 1857.4,1394.6 1861.4,1397.8 1865.4,1391.9 1869.4,1390.4 1873.4,1402.9 1877.4,1406.0 1881.4,1420.5 1885.4,1435.6 1889.4,1436.6 1893.4,1429.7 1897.4,1433.1 1901.4,1417.9 1905.4,1405.3 1909.4,1403.0 1913.4,1394.6 1917.4,1388.8 1921.4,1391.7 1925.4,1402.5 1929.4,1420.5 1933.4,1422.3 1937.4,1432.7 1941.4,1431.5 1945.4,1438.1 1949.4,1445.1 1953.4,1437.9 1957.4,1439.8 1961.4,1439.9 1965.4,1427.3 1969.4,1429.2 1973.4,1431.2 1977.4,1433.2 1981.4,1436.7 1985.4,1438.0 1989.4,1439.3 1993.4,1452.4 1997.4,1454.5 2001.4,1464.7 2005.4,1445.8 2009.4,1462.0 2013.4,1480.0 2017.4,1480.3 2021.4,1484.6 2025.4,1484.9 2029.4,1483.3 2033.4,1476.7 2037.4,1475.8 2041.4,1481.2 2045.4,1487.7 2049.4,1495.6 2053.4,1497.1 2057.4,1502.9 2061.4,1502.0 2065.4,1497.9 2069.4,1497.6 2073.4,1498.3 2077.4,1500.5 2081.4,1498.7 2085.4,1494.8 2089.4,1495.8 2093.4,1492.7 2097.4,1494.4 2101.4,1492.6 2105.4,1483.4 2109.4,1479.1 2113.4,1482.2" fill="none" stroke="#8c8c8c" stroke-opacity="0.12" stroke-width="1.3"/><polyline points="497.4,1476.1 501.4,1477.6 505.4,1481.4 509.4,1487.6 513.4,1493.7 517.4,1502.8 521.4,1500.3 525.4,1495.9 529.4,1496.5 533.4,1495.2 537.4,1494.3 541.4,1493.8 545.4,1497.7 549.4,1496.3 553.4,1498.3 557.4,1499.1 561.4,1496.8 565.4,1499.8 569.4,1497.5 573.4,1496.0 577.4,1493.7 581.4,1495.8 585.4,1497.8 589.4,1496.8 593.4,1492.9 597.4,1493.3 601.4,1490.0 605.4,1490.5 609.4,1492.0 613.4,1480.6 617.4,1467.5 621.4,1475.3 625.4,1486.7 629.4,1471.7 633.4,1459.8 637.4,1455.6 641.4,1468.8 645.4,1459.3 649.4,1480.0 653.4,1461.3 657.4,1478.4 661.4,1455.4 665.4,1460.0 669.4,1484.5 673.4,1493.4 677.4,1496.7 681.4,1495.1 685.4,1499.1 689.4,1502.7 693.4,1500.3 697.4,1502.8 701.4,1505.7 705.4,1502.6 709.4,1501.4 713.4,1504.2 717.4,1504.9 721.4,1505.4 725.4,1502.8 729.4,1498.1 733.4,1494.3 737.4,1491.6 741.4,1494.3 745.4,1491.8 749.4,1494.3 753.4,1494.6 757.4,1493.8 761.4,1492.1 765.4,1488.3 769.4,1484.5 773.4,1485.4 777.4,1487.9 781.4,1489.2 785.4,1480.0 789.4,1473.9 793.4,1464.9 797.4,1455.0 801.4,1451.9 805.4,1449.8 809.4,1447.8 813.4,1441.0 817.4,1429.9 821.4,1419.6 825.4,1411.1 829.4,1401.0 833.4,1399.9 837.4,1389.5 841.4,1375.2 845.4,1402.8 849.4,1399.4 853.4,1366.6 857.4,1337.0 861.4,1337.4 865.4,1312.0 869.4,1314.8 873.4,1316.9 877.4,1322.1 881.4,1332.5 885.4,1339.0 889.4,1335.3 893.4,1351.9 897.4,1374.0 901.4,1394.5 905.4,1422.4 909.4,1439.7 913.4,1442.3 917.4,1447.5 921.4,1446.3 925.4,1453.6 929.4,1444.7 933.4,1435.5 937.4,1436.2 941.4,1441.0 945.4,1456.7 949.4,1456.3 953.4,1448.7 957.4,1448.8 961.4,1461.0 965.4,1454.1 969.4,1456.4 973.4,1460.0 977.4,1467.2 981.4,1463.8 985.4,1461.9 989.4,1465.7 993.4,1472.4 997.4,1472.2 1001.4,1466.4 1005.4,1468.8 1009.4,1472.7 1013.4,1474.9 1017.4,1472.9 1021.4,1468.5 1025.4,1467.3 1029.4,1459.0 1033.4,1447.5 1037.4,1433.5 1041.4,1430.7 1045.4,1419.3 1049.4,1411.0 1053.4,1403.4 1057.4,1395.3 1061.4,1388.9 1065.4,1404.7 1069.4,1404.8 1073.4,1408.6 1077.4,1410.2 1081.4,1414.1 1085.4,1423.5 1089.4,1420.8 1093.4,1416.1 1097.4,1407.9 1101.4,1397.4 1105.4,1388.2 1109.4,1373.4 1113.4,1365.6 1117.4,1353.7 1121.4,1355.4 1125.4,1362.6 1129.4,1358.1 1133.4,1372.0 1137.4,1374.7 1141.4,1384.5 1145.4,1385.9 1149.4,1402.8 1153.4,1412.5 1157.4,1397.6 1161.4,1401.2 1165.4,1393.6 1169.4,1406.0 1173.4,1406.7 1177.4,1404.7 1181.4,1410.1 1185.4,1425.8 1189.4,1420.6 1193.4,1422.1 1197.4,1436.1 1201.4,1428.6 1205.4,1430.6 1209.4,1432.6 1213.4,1437.9 1217.4,1439.7 1221.4,1440.4 1225.4,1429.3 1229.4,1414.2 1233.4,1401.8 1237.4,1394.6 1241.4,1388.6 1245.4,1387.0 1249.4,1396.4 1253.4,1375.5 1257.4,1364.0 1261.4,1374.5 1265.4,1373.1 1269.4,1366.5 1273.4,1351.7 1277.4,1354.1 1281.4,1356.5 1285.4,1361.0 1289.4,1352.3 1293.4,1347.4 1297.4,1355.0 1301.4,1343.0 1305.4,1345.3 1309.4,1347.6 1313.4,1354.4 1317.4,1365.7 1321.4,1373.4 1325.4,1369.6 1329.4,1362.5 1333.4,1365.6 1337.4,1363.2 1341.4,1376.5 1345.4,1376.5 1349.4,1379.5 1353.4,1386.1 1357.4,1386.2 1361.4,1391.1 1365.4,1403.6 1369.4,1415.1 1373.4,1435.4 1377.4,1440.5 1381.4,1440.3 1385.4,1446.6 1389.4,1452.4 1393.4,1455.8 1397.4,1455.8 1401.4,1453.8 1405.4,1455.5 1409.4,1457.2 1413.4,1458.6 1417.4,1458.0 1421.4,1459.8 1425.4,1463.3 1429.4,1456.5 1433.4,1461.7 1437.4,1467.9 1441.4,1461.0 1445.4,1451.0 1449.4,1426.3 1453.4,1412.4 1457.4,1411.2 1461.4,1404.2 1465.4,1405.4 1469.4,1408.1 1473.4,1383.9 1477.4,1365.0 1481.4,1360.5 1485.4,1379.1 1489.4,1384.7 1493.4,1376.1 1497.4,1358.4 1501.4,1334.6 1505.4,1338.3 1509.4,1348.6 1513.4,1338.2 1517.4,1318.1 1521.4,1318.0 1525.4,1336.4 1529.4,1355.0 1533.4,1356.6 1537.4,1377.6 1541.4,1374.8 1545.4,1354.8 1549.4,1346.2 1553.4,1360.1 1557.4,1363.9 1561.4,1346.6 1565.4,1337.0 1569.4,1334.2 1573.4,1334.0 1577.4,1337.3 1581.4,1356.7 1585.4,1361.0 1589.4,1355.5 1593.4,1354.0 1597.4,1370.5 1601.4,1398.4 1605.4,1417.5 1609.4,1439.0 1613.4,1447.5 1617.4,1449.1 1621.4,1437.3 1625.4,1431.3 1629.4,1432.6 1633.4,1431.5 1637.4,1427.6 1641.4,1420.0 1645.4,1429.8 1649.4,1434.2 1653.4,1429.1 1657.4,1428.3 1661.4,1440.4 1665.4,1431.7 1669.4,1438.2 1673.4,1433.0 1677.4,1444.4 1681.4,1446.6 1685.4,1447.1 1689.4,1436.1 1693.4,1431.3 1697.4,1425.0 1701.4,1421.1 1705.4,1432.2 1709.4,1437.2 1713.4,1445.2 1717.4,1450.4 1721.4,1448.1 1725.4,1446.5 1729.4,1444.5 1733.4,1441.0 1737.4,1440.5 1741.4,1438.5 1745.4,1431.7 1749.4,1428.0 1753.4,1434.2 1757.4,1426.7 1761.4,1421.2 1765.4,1415.0 1769.4,1407.8 1773.4,1421.9 1777.4,1436.3 1781.4,1446.1 1785.4,1443.9 1789.4,1448.8 1793.4,1446.8 1797.4,1443.1 1801.4,1443.0 1805.4,1431.1 1809.4,1423.9 1813.4,1420.8 1817.4,1417.2 1821.4,1426.2 1825.4,1426.7 1829.4,1427.6 1833.4,1440.8 1837.4,1449.0 1841.4,1457.8 1845.4,1462.7 1849.4,1457.5 1853.4,1458.9 1857.4,1467.3 1861.4,1469.6 1865.4,1466.1 1869.4,1468.0 1873.4,1472.0 1877.4,1466.1 1881.4,1465.1 1885.4,1471.8 1889.4,1476.3 1893.4,1477.6 1897.4,1479.8 1901.4,1476.9 1905.4,1470.8 1909.4,1456.9 1913.4,1451.3 1917.4,1451.7 1921.4,1450.8 1925.4,1460.2 1929.4,1471.7 1933.4,1477.9 1937.4,1483.9 1941.4,1489.8 1945.4,1489.4 1949.4,1500.9 1953.4,1503.4 1957.4,1504.5 1961.4,1504.5 1965.4,1499.0 1969.4,1500.2 1973.4,1494.3 1977.4,1497.6 1981.4,1495.8 1985.4,1494.8 1989.4,1492.8 1993.4,1496.9 1997.4,1498.0 2001.4,1495.2 2005.4,1497.9 2009.4,1493.6 2013.4,1496.7 2017.4,1497.5 2021.4,1501.7 2025.4,1503.7 2029.4,1504.5 2033.4,1504.5 2037.4,1503.8 2041.4,1504.5 2045.4,1504.5 2049.4,1501.3 2053.4,1499.4 2057.4,1503.3 2061.4,1504.5 2065.4,1504.5 2069.4,1504.5 2073.4,1504.5 2077.4,1503.7 2081.4,1504.5 2085.4,1504.5 2089.4,1503.8 2093.4,1503.0 2097.4,1501.2 2101.4,1498.1 2105.4,1490.0 2109.4,1491.3 2113.4,1489.3" fill="none" stroke="#8c8c8c" stroke-opacity="0.13" stroke-width="1.3"/><polyline points="497.4,1448.5 501.4,1457.4 505.4,1454.5 509.4,1461.2 513.4,1469.1 517.4,1476.4 521.4,1482.1 525.4,1477.7 529.4,1482.5 533.4,1484.5 537.4,1492.3 541.4,1493.0 545.4,1492.2 549.4,1496.3 553.4,1497.8 557.4,1496.9 561.4,1497.4 565.4,1493.6 569.4,1489.6 573.4,1494.5 577.4,1494.6 581.4,1497.5 585.4,1495.6 589.4,1495.5 593.4,1491.8 597.4,1494.7 601.4,1495.1 605.4,1493.6 609.4,1491.9 613.4,1485.6 617.4,1477.4 621.4,1482.4 625.4,1475.9 629.4,1460.7 633.4,1454.3 637.4,1450.9 641.4,1470.6 645.4,1464.6 649.4,1460.3 653.4,1481.1 657.4,1490.0 661.4,1487.3 665.4,1482.9 669.4,1471.0 673.4,1456.7 677.4,1456.3 681.4,1461.4 685.4,1444.2 689.4,1446.6 693.4,1438.3 697.4,1446.6 701.4,1446.8 705.4,1456.2 709.4,1466.9 713.4,1465.0 717.4,1461.8 721.4,1455.9 725.4,1455.1 729.4,1456.7 733.4,1462.3 737.4,1455.1 741.4,1466.0 745.4,1474.5 749.4,1473.2 753.4,1474.8 757.4,1476.3 761.4,1471.3 765.4,1464.9 769.4,1467.3 773.4,1464.2 777.4,1459.9 781.4,1458.3 785.4,1434.1 789.4,1420.5 793.4,1399.0 797.4,1371.6 801.4,1361.3 805.4,1359.5 809.4,1351.2 813.4,1344.7 817.4,1347.7 821.4,1336.7 825.4,1362.3 829.4,1342.6 833.4,1310.5 837.4,1312.1 841.4,1327.7 845.4,1325.6 849.4,1324.2 853.4,1319.2 857.4,1316.8 861.4,1329.6 865.4,1346.5 869.4,1334.9 873.4,1342.0 877.4,1343.7 881.4,1331.3 885.4,1345.7 889.4,1349.8 893.4,1372.6 897.4,1392.1 901.4,1415.7 905.4,1417.3 909.4,1406.1 913.4,1427.1 917.4,1415.2 921.4,1424.5 925.4,1413.0 929.4,1420.3 933.4,1406.8 937.4,1397.7 941.4,1412.2 945.4,1416.6 949.4,1419.3 953.4,1437.2 957.4,1448.8 961.4,1444.2 965.4,1453.0 969.4,1452.0 973.4,1453.0 977.4,1451.3 981.4,1448.7 985.4,1447.8 989.4,1433.5 993.4,1418.8 997.4,1415.5 1001.4,1409.8 1005.4,1408.8 1009.4,1415.6 1013.4,1419.3 1017.4,1404.7 1021.4,1417.7 1025.4,1427.2 1029.4,1430.5 1033.4,1420.8 1037.4,1425.3 1041.4,1424.8 1045.4,1410.5 1049.4,1402.9 1053.4,1405.9 1057.4,1404.5 1061.4,1414.7 1065.4,1423.4 1069.4,1434.9 1073.4,1446.2 1077.4,1443.5 1081.4,1450.2 1085.4,1436.5 1089.4,1442.4 1093.4,1424.1 1097.4,1419.5 1101.4,1414.0 1105.4,1402.3 1109.4,1407.0 1113.4,1416.8 1117.4,1412.2 1121.4,1408.7 1125.4,1420.7 1129.4,1426.9 1133.4,1422.8 1137.4,1424.8 1141.4,1442.3 1145.4,1443.8 1149.4,1442.8 1153.4,1441.0 1157.4,1452.4 1161.4,1458.0 1165.4,1453.6 1169.4,1456.1 1173.4,1444.9 1177.4,1435.7 1181.4,1436.6 1185.4,1443.6 1189.4,1438.7 1193.4,1431.7 1197.4,1443.7 1201.4,1438.5 1205.4,1430.7 1209.4,1432.6 1213.4,1434.6 1217.4,1432.3 1221.4,1425.7 1225.4,1420.4 1229.4,1408.7 1233.4,1401.4 1237.4,1394.6 1241.4,1391.2 1245.4,1382.7 1249.4,1381.4 1253.4,1370.4 1257.4,1382.5 1261.4,1363.3 1265.4,1359.8 1269.4,1349.3 1273.4,1351.7 1277.4,1354.1 1281.4,1361.4 1285.4,1370.7 1289.4,1377.4 1293.4,1392.1 1297.4,1389.7 1301.4,1392.0 1305.4,1389.8 1309.4,1384.8 1313.4,1386.4 1317.4,1405.6 1321.4,1387.6 1325.4,1393.9 1329.4,1385.3 1333.4,1387.7 1337.4,1379.0 1341.4,1385.5 1345.4,1384.6 1349.4,1377.8 1353.4,1375.6 1357.4,1355.9 1361.4,1348.4 1365.4,1370.7 1369.4,1360.4 1373.4,1366.4 1377.4,1379.9 1381.4,1378.4 1385.4,1399.9 1389.4,1394.8 1393.4,1413.8 1397.4,1415.2 1401.4,1421.2 1405.4,1427.7 1409.4,1419.8 1413.4,1423.7 1417.4,1434.0 1421.4,1444.6 1425.4,1453.2 1429.4,1459.7 1433.4,1452.3 1437.4,1451.8 1441.4,1452.7 1445.4,1435.5 1449.4,1430.2 1453.4,1404.8 1457.4,1399.4 1461.4,1386.6 1465.4,1379.5 1469.4,1394.9 1473.4,1397.7 1477.4,1406.3 1481.4,1409.1 1485.4,1409.0 1489.4,1423.2 1493.4,1393.7 1497.4,1382.6 1501.4,1362.8 1505.4,1364.1 1509.4,1353.5 1513.4,1370.8 1517.4,1353.7 1521.4,1341.5 1525.4,1368.3 1529.4,1380.6 1533.4,1380.3 1537.4,1381.2 1541.4,1392.6 1545.4,1378.5 1549.4,1387.3 1553.4,1371.9 1557.4,1378.4 1561.4,1361.1 1565.4,1375.4 1569.4,1388.3 1573.4,1368.3 1577.4,1358.0 1581.4,1376.7 1585.4,1391.6 1589.4,1386.8 1593.4,1405.9 1597.4,1419.1 1601.4,1420.8 1605.4,1436.9 1609.4,1444.7 1613.4,1433.8 1617.4,1441.5 1621.4,1445.5 1625.4,1437.7 1629.4,1435.0 1633.4,1439.6 1637.4,1439.2 1641.4,1436.2 1645.4,1438.6 1649.4,1451.3 1653.4,1441.8 1657.4,1435.4 1661.4,1435.5 1665.4,1452.9 1669.4,1464.6 1673.4,1457.0 1677.4,1458.5 1681.4,1444.1 1685.4,1428.4 1689.4,1412.4 1693.4,1405.8 1697.4,1413.4 1701.4,1427.7 1705.4,1419.6 1709.4,1428.4 1713.4,1431.6 1717.4,1420.4 1721.4,1425.5 1725.4,1417.4 1729.4,1424.7 1733.4,1414.9 1737.4,1421.0 1741.4,1418.9 1745.4,1416.5 1749.4,1407.0 1753.4,1405.4 1757.4,1413.6 1761.4,1416.4 1765.4,1432.6 1769.4,1436.1 1773.4,1448.8 1777.4,1440.9 1781.4,1448.8 1785.4,1449.9 1789.4,1448.8 1793.4,1441.9 1797.4,1439.0 1801.4,1444.2 1805.4,1436.4 1809.4,1432.9 1813.4,1443.4 1817.4,1445.7 1821.4,1449.4 1825.4,1441.2 1829.4,1452.5 1833.4,1454.6 1837.4,1450.8 1841.4,1449.2 1845.4,1443.1 1849.4,1450.0 1853.4,1457.0 1857.4,1467.3 1861.4,1469.6 1865.4,1464.7 1869.4,1465.6 1873.4,1475.6 1877.4,1469.3 1881.4,1469.6 1885.4,1467.5 1889.4,1465.3 1893.4,1463.4 1897.4,1468.3 1901.4,1454.7 1905.4,1463.2 1909.4,1448.0 1913.4,1423.3 1917.4,1406.6 1921.4,1412.1 1925.4,1413.0 1929.4,1418.2 1933.4,1412.0 1937.4,1415.2 1941.4,1423.4 1945.4,1430.1 1949.4,1435.3 1953.4,1444.0 1957.4,1445.8 1961.4,1431.4 1965.4,1434.6 1969.4,1429.2 1973.4,1431.2 1977.4,1433.2 1981.4,1436.2 1985.4,1433.1 1989.4,1429.1 1993.4,1425.1 1997.4,1438.5 2001.4,1419.7 2005.4,1425.8 2009.4,1438.5 2013.4,1434.0 2017.4,1435.6 2021.4,1425.0 2025.4,1438.2 2029.4,1445.7 2033.4,1421.8 2037.4,1435.2 2041.4,1423.3 2045.4,1428.6 2049.4,1423.4 2053.4,1429.1 2057.4,1438.8 2061.4,1450.9 2065.4,1448.3 2069.4,1444.8 2073.4,1446.8 2077.4,1461.0 2081.4,1464.0 2085.4,1468.4 2089.4,1475.2 2093.4,1478.4 2097.4,1488.9 2101.4,1490.8 2105.4,1489.0 2109.4,1490.5 2113.4,1483.5" fill="none" stroke="#8c8c8c" stroke-opacity="0.12" stroke-width="1.3"/><polyline points="497.4,1475.4 501.4,1481.3 505.4,1488.5 509.4,1492.0 513.4,1492.9 517.4,1498.7 521.4,1496.0 525.4,1496.2 529.4,1494.3 533.4,1493.5 537.4,1495.1 541.4,1496.7 545.4,1498.2 549.4,1494.9 553.4,1498.6 557.4,1500.4 561.4,1503.4 565.4,1504.2 569.4,1505.6 573.4,1505.7 577.4,1505.7 581.4,1505.7 585.4,1502.1 589.4,1498.4 593.4,1499.8 597.4,1502.5 601.4,1501.4 605.4,1498.4 609.4,1497.5 613.4,1500.8 617.4,1503.4 621.4,1499.9 625.4,1497.3 629.4,1494.9 633.4,1497.6 637.4,1495.8 641.4,1499.5 645.4,1498.8 649.4,1496.5 653.4,1495.1 657.4,1485.6 661.4,1494.0 665.4,1480.2 669.4,1477.5 673.4,1472.8 677.4,1453.4 681.4,1440.1 685.4,1461.4 689.4,1477.7 693.4,1475.5 697.4,1488.7 701.4,1493.7 705.4,1497.3 709.4,1499.6 713.4,1500.2 717.4,1500.2 721.4,1502.3 725.4,1501.6 729.4,1499.3 733.4,1495.5 737.4,1497.7 741.4,1496.9 745.4,1495.7 749.4,1495.4 753.4,1493.2 757.4,1492.0 761.4,1491.8 765.4,1492.3 769.4,1489.8 773.4,1490.7 777.4,1489.9 781.4,1489.2 785.4,1480.2 789.4,1473.5 793.4,1465.5 797.4,1457.1 801.4,1451.9 805.4,1449.8 809.4,1447.8 813.4,1445.8 817.4,1436.8 821.4,1434.9 825.4,1439.8 829.4,1437.8 833.4,1424.1 837.4,1420.2 841.4,1415.4 845.4,1431.9 849.4,1424.4 853.4,1426.5 857.4,1412.1 861.4,1404.4 865.4,1418.0 869.4,1407.4 873.4,1410.8 877.4,1404.4 881.4,1413.1 885.4,1399.6 889.4,1407.7 893.4,1402.8 897.4,1419.1 901.4,1422.3 905.4,1434.6 909.4,1430.4 913.4,1445.3 917.4,1452.1 921.4,1462.3 925.4,1470.5 929.4,1460.7 933.4,1467.5 937.4,1465.3 941.4,1459.2 945.4,1471.0 949.4,1476.6 953.4,1475.2 957.4,1469.0 961.4,1473.7 965.4,1468.3 969.4,1465.2 973.4,1456.8 977.4,1451.8 981.4,1457.5 985.4,1453.2 989.4,1451.1 993.4,1438.4 997.4,1441.5 1001.4,1446.7 1005.4,1449.8 1009.4,1451.8 1013.4,1443.2 1017.4,1449.4 1021.4,1456.9 1025.4,1452.6 1029.4,1439.2 1033.4,1423.6 1037.4,1412.8 1041.4,1421.8 1045.4,1414.0 1049.4,1405.1 1053.4,1403.0 1057.4,1380.9 1061.4,1390.0 1065.4,1399.6 1069.4,1391.3 1073.4,1374.2 1077.4,1395.4 1081.4,1409.8 1085.4,1417.4 1089.4,1404.9 1093.4,1414.1 1097.4,1414.2 1101.4,1399.1 1105.4,1409.7 1109.4,1416.9 1113.4,1410.0 1117.4,1425.2 1121.4,1432.1 1125.4,1440.1 1129.4,1431.2 1133.4,1431.3 1137.4,1444.4 1141.4,1440.4 1145.4,1439.4 1149.4,1424.5 1153.4,1429.2 1157.4,1414.5 1161.4,1426.4 1165.4,1423.6 1169.4,1432.7 1173.4,1445.6 1177.4,1458.4 1181.4,1453.9 1185.4,1454.2 1189.4,1462.2 1193.4,1462.7 1197.4,1471.9 1201.4,1471.0 1205.4,1474.4 1209.4,1471.0 1213.4,1472.7 1217.4,1464.9 1221.4,1458.5 1225.4,1457.5 1229.4,1461.3 1233.4,1449.7 1237.4,1440.5 1241.4,1436.0 1245.4,1442.6 1249.4,1445.9 1253.4,1454.4 1257.4,1460.7 1261.4,1447.6 1265.4,1444.2 1269.4,1424.3 1273.4,1416.7 1277.4,1417.0 1281.4,1405.5 1285.4,1412.8 1289.4,1398.9 1293.4,1396.5 1297.4,1403.5 1301.4,1392.9 1305.4,1403.4 1309.4,1403.6 1313.4,1385.9 1317.4,1371.2 1321.4,1377.4 1325.4,1386.8 1329.4,1390.2 1333.4,1401.5 1337.4,1405.2 1341.4,1411.7 1345.4,1418.7 1349.4,1419.7 1353.4,1418.9 1357.4,1413.0 1361.4,1413.7 1365.4,1410.2 1369.4,1401.8 1373.4,1404.9 1377.4,1403.1 1381.4,1408.7 1385.4,1423.4 1389.4,1418.1 1393.4,1433.9 1397.4,1445.6 1401.4,1440.2 1405.4,1445.8 1409.4,1440.4 1413.4,1431.9 1417.4,1428.1 1421.4,1424.3 1425.4,1427.1 1429.4,1429.1 1433.4,1438.4 1437.4,1448.7 1441.4,1457.4 1445.4,1442.0 1449.4,1415.7 1453.4,1413.2 1457.4,1401.9 1461.4,1392.0 1465.4,1396.1 1469.4,1394.4 1473.4,1383.0 1477.4,1365.0 1481.4,1360.2 1485.4,1367.0 1489.4,1383.6 1493.4,1353.3 1497.4,1339.8 1501.4,1336.0 1505.4,1330.2 1509.4,1326.1 1513.4,1322.2 1517.4,1318.1 1521.4,1318.0 1525.4,1326.0 1529.4,1347.6 1533.4,1342.0 1537.4,1351.1 1541.4,1362.5 1545.4,1364.8 1549.4,1357.5 1553.4,1371.8 1557.4,1377.5 1561.4,1394.2 1565.4,1386.4 1569.4,1384.4 1573.4,1381.2 1577.4,1396.3 1581.4,1402.0 1585.4,1406.1 1589.4,1409.2 1593.4,1425.6 1597.4,1430.9 1601.4,1432.9 1605.4,1434.1 1609.4,1437.5 1613.4,1425.6 1617.4,1436.7 1621.4,1436.7 1625.4,1442.8 1629.4,1440.4 1633.4,1441.2 1637.4,1437.6 1641.4,1448.8 1645.4,1449.4 1649.4,1448.9 1653.4,1456.1 1657.4,1463.4 1661.4,1471.5 1665.4,1471.6 1669.4,1471.2 1673.4,1474.7 1677.4,1473.0 1681.4,1465.7 1685.4,1459.0 1689.4,1449.0 1693.4,1439.4 1697.4,1443.2 1701.4,1441.2 1705.4,1441.1 1709.4,1434.2 1713.4,1426.9 1717.4,1431.3 1721.4,1431.4 1725.4,1432.4 1729.4,1432.4 1733.4,1423.5 1737.4,1421.3 1741.4,1426.1 1745.4,1429.9 1749.4,1431.8 1753.4,1436.8 1757.4,1429.5 1761.4,1418.3 1765.4,1430.6 1769.4,1420.3 1773.4,1417.0 1777.4,1415.2 1781.4,1418.4 1785.4,1421.0 1789.4,1430.4 1793.4,1442.8 1797.4,1434.2 1801.4,1425.5 1805.4,1412.5 1809.4,1409.0 1813.4,1398.1 1817.4,1413.4 1821.4,1420.0 1825.4,1427.6 1829.4,1424.4 1833.4,1438.5 1837.4,1436.7 1841.4,1442.5 1845.4,1437.7 1849.4,1432.5 1853.4,1417.7 1857.4,1419.7 1861.4,1411.9 1865.4,1419.6 1869.4,1432.6 1873.4,1428.2 1877.4,1422.4 1881.4,1428.1 1885.4,1429.2 1889.4,1431.2 1893.4,1431.0 1897.4,1425.3 1901.4,1415.3 1905.4,1414.1 1909.4,1408.7 1913.4,1404.4 1917.4,1406.4 1921.4,1411.6 1925.4,1407.7 1929.4,1426.0 1933.4,1433.8 1937.4,1439.9 1941.4,1439.8 1945.4,1443.5 1949.4,1461.6 1953.4,1459.2 1957.4,1469.3 1961.4,1456.3 1965.4,1459.7 1969.4,1452.2 1973.4,1443.8 1977.4,1438.7 1981.4,1437.2 1985.4,1440.3 1989.4,1433.4 1993.4,1445.0 1997.4,1426.8 2001.4,1439.9 2005.4,1435.4 2009.4,1447.6 2013.4,1440.5 2017.4,1426.8 2021.4,1442.9 2025.4,1447.6 2029.4,1457.3 2033.4,1457.5 2037.4,1468.8 2041.4,1483.0 2045.4,1488.5 2049.4,1497.4 2053.4,1496.6 2057.4,1495.4 2061.4,1500.3 2065.4,1503.5 2069.4,1504.5 2073.4,1504.0 2077.4,1503.3 2081.4,1504.5 2085.4,1502.2 2089.4,1498.9 2093.4,1495.6 2097.4,1493.1 2101.4,1489.6 2105.4,1482.5 2109.4,1477.0 2113.4,1468.6" fill="none" stroke="#8c8c8c" stroke-opacity="0.13" stroke-width="1.3"/><polyline points="497.4,1464.7 501.4,1465.7 505.4,1474.7 509.4,1479.7 513.4,1489.4 517.4,1498.0 521.4,1499.4 525.4,1494.8 529.4,1490.7 533.4,1491.6 537.4,1495.1 541.4,1493.9 545.4,1490.2 549.4,1494.1 553.4,1495.0 557.4,1495.2 561.4,1489.3 565.4,1489.4 569.4,1490.3 573.4,1493.3 577.4,1497.2 581.4,1494.1 585.4,1497.2 589.4,1495.9 593.4,1494.6 597.4,1492.6 601.4,1494.9 605.4,1493.8 609.4,1486.4 613.4,1485.0 617.4,1475.1 621.4,1459.3 625.4,1441.7 629.4,1437.4 633.4,1433.7 637.4,1431.2 641.4,1428.7 645.4,1444.4 649.4,1446.3 653.4,1467.8 657.4,1468.9 661.4,1488.1 665.4,1493.7 669.4,1493.3 673.4,1473.1 677.4,1458.3 681.4,1470.1 685.4,1476.9 689.4,1469.6 693.4,1458.8 697.4,1466.2 701.4,1480.8 705.4,1475.4 709.4,1488.0 713.4,1488.5 717.4,1482.0 721.4,1474.0 725.4,1476.8 729.4,1484.5 733.4,1478.2 737.4,1472.7 741.4,1466.6 745.4,1462.7 749.4,1459.9 753.4,1461.2 757.4,1456.5 761.4,1455.5 765.4,1447.1 769.4,1442.3 773.4,1437.6 777.4,1432.9 781.4,1428.2 785.4,1415.2 789.4,1400.3 793.4,1392.8 797.4,1371.6 801.4,1360.1 805.4,1367.3 809.4,1363.6 813.4,1347.8 817.4,1335.8 821.4,1324.5 825.4,1313.0 829.4,1310.4 833.4,1307.7 837.4,1305.3 841.4,1309.8 845.4,1314.3 849.4,1318.8 853.4,1325.4 857.4,1316.8 861.4,1314.9 865.4,1322.7 869.4,1322.5 873.4,1339.2 877.4,1356.2 881.4,1356.7 885.4,1348.0 889.4,1335.3 893.4,1346.0 897.4,1343.4 901.4,1343.8 905.4,1350.1 909.4,1358.1 913.4,1383.9 917.4,1389.9 921.4,1407.9 925.4,1421.9 929.4,1413.2 933.4,1405.6 937.4,1419.7 941.4,1415.9 945.4,1422.6 949.4,1439.4 953.4,1442.7 957.4,1443.9 961.4,1459.5 965.4,1468.1 969.4,1475.9 973.4,1479.8 977.4,1476.2 981.4,1468.7 985.4,1457.8 989.4,1458.6 993.4,1452.3 997.4,1460.8 1001.4,1471.4 1005.4,1463.3 1009.4,1473.2 1013.4,1466.3 1017.4,1457.8 1021.4,1451.7 1025.4,1457.3 1029.4,1462.6 1033.4,1454.2 1037.4,1449.1 1041.4,1448.4 1045.4,1443.7 1049.4,1438.9 1053.4,1433.2 1057.4,1428.2 1061.4,1429.3 1065.4,1442.2 1069.4,1444.2 1073.4,1446.2 1077.4,1439.1 1081.4,1441.4 1085.4,1452.2 1089.4,1448.6 1093.4,1442.6 1097.4,1436.6 1101.4,1429.2 1105.4,1428.6 1109.4,1432.6 1113.4,1434.8 1117.4,1439.3 1121.4,1444.5 1125.4,1448.5 1129.4,1452.5 1133.4,1453.3 1137.4,1460.6 1141.4,1464.6 1145.4,1468.6 1149.4,1468.0 1153.4,1470.7 1157.4,1467.2 1161.4,1473.4 1165.4,1478.1 1169.4,1465.3 1173.4,1455.9 1177.4,1448.5 1181.4,1453.5 1185.4,1461.6 1189.4,1461.2 1193.4,1457.9 1197.4,1462.4 1201.4,1465.2 1205.4,1465.2 1209.4,1462.0 1213.4,1458.1 1217.4,1448.4 1221.4,1446.9 1225.4,1436.9 1229.4,1432.6 1233.4,1432.1 1237.4,1425.1 1241.4,1419.3 1245.4,1423.4 1249.4,1434.4 1253.4,1448.4 1257.4,1432.1 1261.4,1415.7 1265.4,1394.2 1269.4,1377.7 1273.4,1373.2 1277.4,1382.2 1281.4,1396.1 1285.4,1396.5 1289.4,1381.1 1293.4,1374.6 1297.4,1358.1 1301.4,1350.0 1305.4,1355.6 1309.4,1358.3 1313.4,1349.9 1317.4,1352.2 1321.4,1368.8 1325.4,1372.0 1329.4,1373.4 1333.4,1366.5 1337.4,1358.7 1341.4,1366.3 1345.4,1347.7 1349.4,1351.5 1353.4,1368.0 1357.4,1373.8 1361.4,1361.1 1365.4,1354.4 1369.4,1372.1 1373.4,1366.4 1377.4,1372.4 1381.4,1384.5 1385.4,1396.1 1389.4,1394.1 1393.4,1404.4 1397.4,1420.6 1401.4,1422.9 1405.4,1423.5 1409.4,1432.2 1413.4,1445.7 1417.4,1453.7 1421.4,1463.3 1425.4,1467.9 1429.4,1473.2 1433.4,1472.0 1437.4,1474.1 1441.4,1471.9 1445.4,1467.0 1449.4,1456.7 1453.4,1453.3 1457.4,1445.5 1461.4,1440.3 1465.4,1450.1 1469.4,1462.0 1473.4,1470.5 1477.4,1469.6 1481.4,1471.5 1485.4,1457.4 1489.4,1441.8 1493.4,1427.2 1497.4,1417.9 1501.4,1400.1 1505.4,1415.1 1509.4,1407.6 1513.4,1410.9 1517.4,1408.8 1521.4,1406.4 1525.4,1402.4 1529.4,1381.7 1533.4,1382.3 1537.4,1404.2 1541.4,1417.1 1545.4,1425.3 1549.4,1417.8 1553.4,1411.4 1557.4,1413.5 1561.4,1404.5 1565.4,1394.9 1569.4,1382.0 1573.4,1364.5 1577.4,1376.6 1581.4,1387.4 1585.4,1406.2 1589.4,1394.6 1593.4,1410.2 1597.4,1426.7 1601.4,1429.2 1605.4,1426.5 1609.4,1450.4 1613.4,1453.2 1617.4,1443.5 1621.4,1434.1 1625.4,1436.8 1629.4,1428.3 1633.4,1427.8 1637.4,1422.3 1641.4,1415.3 1645.4,1415.7 1649.4,1415.7 1653.4,1424.4 1657.4,1411.1 1661.4,1410.3 1665.4,1413.5 1669.4,1418.3 1673.4,1419.9 1677.4,1423.1 1681.4,1429.6 1685.4,1425.1 1689.4,1420.8 1693.4,1417.3 1697.4,1405.2 1701.4,1407.7 1705.4,1420.5 1709.4,1399.1 1713.4,1411.4 1717.4,1402.2 1721.4,1381.3 1725.4,1384.3 1729.4,1399.1 1733.4,1378.2 1737.4,1358.3 1741.4,1354.9 1745.4,1334.3 1749.4,1331.8 1753.4,1357.8 1757.4,1329.2 1761.4,1323.4 1765.4,1307.1 1769.4,1307.9 1773.4,1314.7 1777.4,1345.6 1781.4,1342.9 1785.4,1344.6 1789.4,1355.2 1793.4,1377.9 1797.4,1403.5 1801.4,1393.9 1805.4,1373.3 1809.4,1399.3 1813.4,1405.0 1817.4,1416.4 1821.4,1410.5 1825.4,1426.9 1829.4,1425.1 1833.4,1411.0 1837.4,1394.6 1841.4,1391.3 1845.4,1391.7 1849.4,1403.2 1853.4,1422.7 1857.4,1420.3 1861.4,1424.7 1865.4,1425.4 1869.4,1425.9 1873.4,1423.3 1877.4,1413.9 1881.4,1412.3 1885.4,1423.0 1889.4,1435.3 1893.4,1443.7 1897.4,1443.9 1901.4,1435.3 1905.4,1415.4 1909.4,1395.4 1913.4,1402.7 1917.4,1403.7 1921.4,1405.7 1925.4,1411.7 1929.4,1416.6 1933.4,1416.4 1937.4,1421.6 1941.4,1427.2 1945.4,1447.1 1949.4,1462.5 1953.4,1456.4 1957.4,1454.7 1961.4,1444.2 1965.4,1460.3 1969.4,1447.8 1973.4,1448.2 1977.4,1433.2 1981.4,1435.2 1985.4,1433.1 1989.4,1429.1 1993.4,1425.1 1997.4,1421.1 2001.4,1417.9 2005.4,1415.9 2009.4,1413.9 2013.4,1411.9 2017.4,1409.8 2021.4,1406.6 2025.4,1408.3 2029.4,1400.2 2033.4,1398.7 2037.4,1413.8 2041.4,1409.1 2045.4,1416.3 2049.4,1428.8 2053.4,1449.2 2057.4,1459.6 2061.4,1474.8 2065.4,1482.0 2069.4,1474.6 2073.4,1485.2 2077.4,1493.0 2081.4,1493.3 2085.4,1496.2 2089.4,1491.6 2093.4,1494.4 2097.4,1492.3 2101.4,1489.8 2105.4,1488.3 2109.4,1479.3 2113.4,1477.7" fill="none" stroke="#8c8c8c" stroke-opacity="0.10" stroke-width="1.3"/><polyline points="497.4,1456.3 501.4,1452.4 505.4,1452.4 509.4,1448.6 513.4,1459.4 517.4,1462.8 521.4,1474.0 525.4,1470.7 529.4,1471.9 533.4,1468.0 537.4,1470.6 541.4,1475.3 545.4,1477.5 549.4,1479.6 553.4,1476.8 557.4,1485.2 561.4,1476.6 565.4,1471.1 569.4,1473.5 573.4,1481.0 577.4,1487.0 581.4,1482.5 585.4,1491.1 589.4,1490.1 593.4,1490.8 597.4,1492.9 601.4,1493.4 605.4,1496.5 609.4,1500.1 613.4,1498.0 617.4,1502.1 621.4,1500.4 625.4,1502.5 629.4,1499.5 633.4,1501.0 637.4,1499.5 641.4,1503.8 645.4,1505.2 649.4,1504.4 653.4,1506.1 657.4,1502.6 661.4,1504.9 665.4,1506.2 669.4,1506.0 673.4,1504.1 677.4,1498.0 681.4,1502.4 685.4,1498.5 689.4,1499.5 693.4,1499.6 697.4,1495.5 701.4,1499.7 705.4,1500.4 709.4,1501.6 713.4,1498.9 717.4,1495.0 721.4,1492.0 725.4,1483.7 729.4,1476.6 733.4,1476.1 737.4,1473.8 741.4,1479.3 745.4,1473.3 749.4,1469.5 753.4,1471.0 757.4,1471.9 761.4,1465.8 765.4,1455.1 769.4,1442.3 773.4,1437.6 777.4,1432.9 781.4,1437.7 785.4,1416.5 789.4,1400.3 793.4,1395.9 797.4,1371.6 801.4,1360.1 805.4,1371.3 809.4,1382.6 813.4,1369.0 817.4,1351.4 821.4,1342.8 825.4,1322.4 829.4,1336.9 833.4,1357.2 837.4,1367.1 841.4,1364.1 845.4,1389.5 849.4,1412.9 853.4,1394.5 857.4,1396.7 861.4,1379.1 865.4,1398.0 869.4,1407.8 873.4,1405.9 877.4,1414.2 881.4,1408.2 885.4,1394.5 889.4,1397.7 893.4,1383.7 897.4,1384.8 901.4,1408.3 905.4,1421.2 909.4,1417.4 913.4,1410.9 917.4,1419.2 921.4,1421.2 925.4,1436.5 929.4,1423.9 933.4,1422.3 937.4,1423.3 941.4,1423.5 945.4,1418.4 949.4,1419.2 953.4,1424.5 957.4,1419.5 961.4,1418.3 965.4,1423.0 969.4,1438.0 973.4,1440.8 977.4,1441.3 981.4,1439.5 985.4,1444.1 989.4,1431.4 993.4,1418.8 997.4,1406.5 1001.4,1406.3 1005.4,1400.1 1009.4,1403.9 1013.4,1405.4 1017.4,1388.7 1021.4,1383.0 1025.4,1378.2 1029.4,1377.0 1033.4,1374.3 1037.4,1363.0 1041.4,1358.4 1045.4,1361.9 1049.4,1353.4 1053.4,1349.7 1057.4,1339.0 1061.4,1339.6 1065.4,1338.1 1069.4,1334.9 1073.4,1346.7 1077.4,1362.0 1081.4,1385.7 1085.4,1404.5 1089.4,1407.6 1093.4,1402.0 1097.4,1391.9 1101.4,1396.5 1105.4,1393.7 1109.4,1387.9 1113.4,1374.2 1117.4,1381.6 1121.4,1393.1 1125.4,1406.0 1129.4,1400.5 1133.4,1398.0 1137.4,1410.1 1141.4,1400.2 1145.4,1422.5 1149.4,1446.2 1153.4,1449.2 1157.4,1442.4 1161.4,1443.7 1165.4,1448.0 1169.4,1441.9 1173.4,1446.6 1177.4,1450.6 1181.4,1462.2 1185.4,1469.3 1189.4,1473.3 1193.4,1476.2 1197.4,1482.4 1201.4,1484.4 1205.4,1486.4 1209.4,1483.3 1213.4,1475.7 1217.4,1473.1 1221.4,1464.1 1225.4,1470.1 1229.4,1459.0 1233.4,1468.2 1237.4,1462.1 1241.4,1454.4 1245.4,1457.4 1249.4,1453.1 1253.4,1468.4 1257.4,1472.2 1261.4,1455.5 1265.4,1445.5 1269.4,1429.2 1273.4,1426.0 1277.4,1424.0 1281.4,1414.9 1285.4,1418.3 1289.4,1413.4 1293.4,1426.1 1297.4,1431.5 1301.4,1421.4 1305.4,1432.4 1309.4,1420.8 1313.4,1414.5 1317.4,1398.3 1321.4,1411.0 1325.4,1408.7 1329.4,1414.2 1333.4,1426.4 1337.4,1416.2 1341.4,1425.9 1345.4,1412.1 1349.4,1416.1 1353.4,1420.6 1357.4,1418.1 1361.4,1430.4 1365.4,1440.2 1369.4,1446.1 1373.4,1449.0 1377.4,1448.8 1381.4,1444.9 1385.4,1445.9 1389.4,1447.6 1393.4,1445.7 1397.4,1448.8 1401.4,1443.3 1405.4,1440.7 1409.4,1448.5 1413.4,1442.1 1417.4,1445.9 1421.4,1439.6 1425.4,1451.9 1429.4,1447.1 1433.4,1459.0 1437.4,1468.5 1441.4,1471.5 1445.4,1467.8 1449.4,1461.6 1453.4,1447.0 1457.4,1449.4 1461.4,1450.8 1465.4,1445.5 1469.4,1439.4 1473.4,1420.7 1477.4,1410.7 1481.4,1431.5 1485.4,1440.0 1489.4,1428.4 1493.4,1430.0 1497.4,1408.2 1501.4,1407.0 1505.4,1397.2 1509.4,1368.4 1513.4,1385.1 1517.4,1391.6 1521.4,1410.0 1525.4,1413.0 1529.4,1414.3 1533.4,1405.6 1537.4,1408.8 1541.4,1419.6 1545.4,1421.3 1549.4,1422.7 1553.4,1417.7 1557.4,1410.2 1561.4,1398.2 1565.4,1389.5 1569.4,1375.8 1573.4,1358.7 1577.4,1344.4 1581.4,1357.4 1585.4,1379.1 1589.4,1389.5 1593.4,1409.8 1597.4,1409.6 1601.4,1431.4 1605.4,1437.7 1609.4,1453.7 1613.4,1448.6 1617.4,1441.7 1621.4,1440.9 1625.4,1432.7 1629.4,1426.5 1633.4,1432.5 1637.4,1441.3 1641.4,1454.1 1645.4,1458.9 1649.4,1457.7 1653.4,1458.8 1657.4,1461.7 1661.4,1464.3 1665.4,1470.5 1669.4,1471.8 1673.4,1476.5 1677.4,1475.7 1681.4,1471.9 1685.4,1459.7 1689.4,1450.2 1693.4,1445.4 1697.4,1433.5 1701.4,1434.5 1705.4,1419.7 1709.4,1405.5 1713.4,1420.6 1717.4,1430.8 1721.4,1415.5 1725.4,1416.0 1729.4,1412.8 1733.4,1385.9 1737.4,1371.8 1741.4,1370.5 1745.4,1362.7 1749.4,1363.7 1753.4,1336.9 1757.4,1342.3 1761.4,1348.1 1765.4,1329.0 1769.4,1334.9 1773.4,1365.8 1777.4,1392.9 1781.4,1397.7 1785.4,1395.0 1789.4,1404.0 1793.4,1403.8 1797.4,1409.2 1801.4,1403.3 1805.4,1403.0 1809.4,1412.3 1813.4,1416.7 1817.4,1420.2 1821.4,1421.2 1825.4,1425.1 1829.4,1435.6 1833.4,1439.2 1837.4,1441.1 1841.4,1439.5 1845.4,1436.3 1849.4,1439.4 1853.4,1447.3 1857.4,1442.1 1861.4,1446.6 1865.4,1450.4 1869.4,1456.2 1873.4,1462.3 1877.4,1463.6 1881.4,1459.2 1885.4,1461.1 1889.4,1463.8 1893.4,1467.6 1897.4,1475.2 1901.4,1474.8 1905.4,1471.4 1909.4,1461.4 1913.4,1459.1 1917.4,1445.5 1921.4,1454.4 1925.4,1458.8 1929.4,1464.4 1933.4,1473.6 1937.4,1480.4 1941.4,1489.8 1945.4,1490.5 1949.4,1488.7 1953.4,1492.8 1957.4,1489.4 1961.4,1486.3 1965.4,1494.1 1969.4,1494.5 1973.4,1491.2 1977.4,1489.3 1981.4,1486.6 1985.4,1482.2 1989.4,1468.9 1993.4,1488.2 1997.4,1489.9 2001.4,1487.3 2005.4,1471.9 2009.4,1487.3 2013.4,1490.9 2017.4,1482.5 2021.4,1487.6 2025.4,1488.1 2029.4,1496.6 2033.4,1495.4 2037.4,1494.1 2041.4,1485.8 2045.4,1488.3 2049.4,1486.6 2053.4,1493.9 2057.4,1492.3 2061.4,1497.6 2065.4,1496.6 2069.4,1499.5 2073.4,1501.5 2077.4,1504.5 2081.4,1504.5 2085.4,1503.4 2089.4,1500.9 2093.4,1498.0 2097.4,1494.1 2101.4,1489.6 2105.4,1481.6 2109.4,1481.8 2113.4,1472.3" fill="none" stroke="#8c8c8c" stroke-opacity="0.14" stroke-width="1.3"/><polyline points="497.4,1466.6 501.4,1471.6 505.4,1467.5 509.4,1474.8 513.4,1471.1 517.4,1483.3 521.4,1482.8 525.4,1475.2 529.4,1469.9 533.4,1465.3 537.4,1464.0 541.4,1465.2 545.4,1474.5 549.4,1472.9 553.4,1471.5 557.4,1476.3 561.4,1469.1 565.4,1468.3 569.4,1473.9 573.4,1470.5 577.4,1466.4 581.4,1465.6 585.4,1469.3 589.4,1477.7 593.4,1474.1 597.4,1477.4 601.4,1475.5 605.4,1467.3 609.4,1461.4 613.4,1455.9 617.4,1449.3 621.4,1454.3 625.4,1441.4 629.4,1437.4 633.4,1442.9 637.4,1431.2 641.4,1448.8 645.4,1452.3 649.4,1459.2 653.4,1445.5 657.4,1431.8 661.4,1442.3 665.4,1465.0 669.4,1444.0 673.4,1460.9 677.4,1448.8 681.4,1429.0 685.4,1433.4 689.4,1431.6 693.4,1448.9 697.4,1463.9 701.4,1460.4 705.4,1454.9 709.4,1460.0 713.4,1465.5 717.4,1456.7 721.4,1460.2 725.4,1455.1 729.4,1454.3 733.4,1453.5 737.4,1453.7 741.4,1456.4 745.4,1457.7 749.4,1466.5 753.4,1474.0 757.4,1476.4 761.4,1475.5 765.4,1476.4 769.4,1469.4 773.4,1466.0 777.4,1465.4 781.4,1459.4 785.4,1446.5 789.4,1449.3 793.4,1452.7 797.4,1446.3 801.4,1442.9 805.4,1433.3 809.4,1418.3 813.4,1409.4 817.4,1406.6 821.4,1411.0 825.4,1413.8 829.4,1421.9 833.4,1426.7 837.4,1423.1 841.4,1412.6 845.4,1417.7 849.4,1415.7 853.4,1420.6 857.4,1427.9 861.4,1424.8 865.4,1433.7 869.4,1438.0 873.4,1439.2 877.4,1438.5 881.4,1441.3 885.4,1442.1 889.4,1442.9 893.4,1443.7 897.4,1435.9 901.4,1449.0 905.4,1455.5 909.4,1456.6 913.4,1452.8 917.4,1458.2 921.4,1468.2 925.4,1463.3 929.4,1475.5 933.4,1477.9 937.4,1470.1 941.4,1472.8 945.4,1473.8 949.4,1471.9 953.4,1466.5 957.4,1464.4 961.4,1474.5 965.4,1481.7 969.4,1486.5 973.4,1487.1 977.4,1487.7 981.4,1481.1 985.4,1478.9 989.4,1477.1 993.4,1484.9 997.4,1471.2 1001.4,1473.6 1005.4,1460.7 1009.4,1470.8 1013.4,1462.5 1017.4,1465.1 1021.4,1466.2 1025.4,1455.3 1029.4,1448.9 1033.4,1441.9 1037.4,1430.0 1041.4,1423.6 1045.4,1410.1 1049.4,1411.4 1053.4,1418.5 1057.4,1418.9 1061.4,1415.7 1065.4,1416.2 1069.4,1404.8 1073.4,1414.7 1077.4,1424.5 1081.4,1415.2 1085.4,1411.0 1089.4,1394.2 1093.4,1397.6 1097.4,1378.6 1101.4,1389.9 1105.4,1374.0 1109.4,1385.4 1113.4,1374.4 1117.4,1379.2 1121.4,1390.7 1125.4,1409.0 1129.4,1425.5 1133.4,1424.9 1137.4,1437.1 1141.4,1441.9 1145.4,1441.4 1149.4,1444.8 1153.4,1454.7 1157.4,1443.7 1161.4,1448.1 1165.4,1446.6 1169.4,1454.3 1173.4,1454.3 1177.4,1449.5 1181.4,1460.0 1185.4,1454.7 1189.4,1460.9 1193.4,1460.9 1197.4,1455.5 1201.4,1449.4 1205.4,1458.3 1209.4,1452.2 1213.4,1459.9 1217.4,1448.6 1221.4,1449.1 1225.4,1433.4 1229.4,1428.1 1233.4,1426.2 1237.4,1427.5 1241.4,1440.8 1245.4,1434.0 1249.4,1445.7 1253.4,1450.4 1257.4,1455.7 1261.4,1442.7 1265.4,1456.6 1269.4,1460.4 1273.4,1455.7 1277.4,1443.8 1281.4,1455.9 1285.4,1457.8 1289.4,1461.4 1293.4,1461.1 1297.4,1457.6 1301.4,1454.0 1305.4,1440.7 1309.4,1446.9 1313.4,1443.4 1317.4,1432.1 1321.4,1420.9 1325.4,1410.8 1329.4,1401.7 1333.4,1407.7 1337.4,1414.4 1341.4,1418.7 1345.4,1413.9 1349.4,1422.6 1353.4,1414.5 1357.4,1410.1 1361.4,1414.3 1365.4,1416.2 1369.4,1427.5 1373.4,1440.3 1377.4,1448.6 1381.4,1447.6 1385.4,1449.5 1389.4,1448.4 1393.4,1451.7 1397.4,1454.9 1401.4,1452.5 1405.4,1460.8 1409.4,1468.1 1413.4,1473.1 1417.4,1469.0 1421.4,1467.3 1425.4,1471.1 1429.4,1474.8 1433.4,1476.3 1437.4,1478.2 1441.4,1478.0 1445.4,1473.5 1449.4,1468.0 1453.4,1459.4 1457.4,1453.1 1461.4,1456.2 1465.4,1456.5 1469.4,1463.8 1473.4,1469.0 1477.4,1459.8 1481.4,1456.5 1485.4,1459.0 1489.4,1455.7 1493.4,1454.2 1497.4,1451.3 1501.4,1449.3 1505.4,1437.1 1509.4,1432.0 1513.4,1419.8 1517.4,1425.1 1521.4,1419.3 1525.4,1422.4 1529.4,1424.4 1533.4,1413.1 1537.4,1418.2 1541.4,1417.6 1545.4,1414.1 1549.4,1416.1 1553.4,1413.1 1557.4,1401.5 1561.4,1405.0 1565.4,1395.8 1569.4,1377.3 1573.4,1391.4 1577.4,1405.7 1581.4,1420.1 1585.4,1435.8 1589.4,1442.5 1593.4,1446.0 1597.4,1452.0 1601.4,1458.0 1605.4,1464.0 1609.4,1470.0 1613.4,1470.7 1617.4,1466.9 1621.4,1468.5 1625.4,1467.7 1629.4,1475.1 1633.4,1477.6 1637.4,1478.0 1641.4,1469.9 1645.4,1471.4 1649.4,1465.4 1653.4,1467.0 1657.4,1472.7 1661.4,1475.5 1665.4,1475.1 1669.4,1471.4 1673.4,1475.9 1677.4,1477.0 1681.4,1474.0 1685.4,1462.8 1689.4,1461.1 1693.4,1455.2 1697.4,1450.6 1701.4,1448.0 1705.4,1441.8 1709.4,1431.9 1713.4,1434.2 1717.4,1433.8 1721.4,1427.8 1725.4,1429.5 1729.4,1427.2 1733.4,1418.0 1737.4,1410.9 1741.4,1409.6 1745.4,1410.2 1749.4,1411.1 1753.4,1416.9 1757.4,1414.2 1761.4,1423.1 1765.4,1427.9 1769.4,1424.1 1773.4,1417.3 1777.4,1421.6 1781.4,1430.1 1785.4,1441.5 1789.4,1448.8 1793.4,1446.8 1797.4,1444.8 1801.4,1436.4 1805.4,1429.5 1809.4,1441.3 1813.4,1435.0 1817.4,1435.7 1821.4,1441.3 1825.4,1434.2 1829.4,1431.4 1833.4,1429.8 1837.4,1439.7 1841.4,1445.7 1845.4,1438.7 1849.4,1430.0 1853.4,1442.9 1857.4,1436.8 1861.4,1444.3 1865.4,1449.3 1869.4,1459.7 1873.4,1466.9 1877.4,1462.9 1881.4,1470.2 1885.4,1476.0 1889.4,1471.9 1893.4,1479.9 1897.4,1478.5 1901.4,1475.4 1905.4,1470.9 1909.4,1463.4 1913.4,1457.5 1917.4,1442.0 1921.4,1451.2 1925.4,1456.5 1929.4,1456.6 1933.4,1463.3 1937.4,1465.5 1941.4,1471.4 1945.4,1480.6 1949.4,1487.8 1953.4,1484.9 1957.4,1482.9 1961.4,1490.8 1965.4,1493.3 1969.4,1489.1 1973.4,1490.1 1977.4,1486.5 1981.4,1477.8 1985.4,1484.1 1989.4,1470.2 1993.4,1454.6 1997.4,1459.8 2001.4,1479.1 2005.4,1458.3 2009.4,1469.0 2013.4,1449.9 2017.4,1426.9 2021.4,1406.6 2025.4,1403.4 2029.4,1412.0 2033.4,1430.8 2037.4,1409.4 2041.4,1409.1 2045.4,1416.3 2049.4,1423.4 2053.4,1429.1 2057.4,1433.1 2061.4,1448.3 2065.4,1441.1 2069.4,1448.9 2073.4,1446.8 2077.4,1453.3 2081.4,1450.7 2085.4,1452.7 2089.4,1465.8 2093.4,1459.6 2097.4,1458.2 2101.4,1461.3 2105.4,1468.9 2109.4,1466.6 2113.4,1460.3" fill="none" stroke="#8c8c8c" stroke-opacity="0.15" stroke-width="1.3"/><polyline points="497.4,1475.1 501.4,1477.5 505.4,1483.5 509.4,1482.8 513.4,1487.5 517.4,1492.1 521.4,1499.1 525.4,1502.0 529.4,1499.6 533.4,1498.5 537.4,1499.6 541.4,1498.7 545.4,1495.2 549.4,1499.8 553.4,1499.8 557.4,1497.3 561.4,1493.6 565.4,1485.4 569.4,1491.7 573.4,1486.2 577.4,1487.4 581.4,1494.5 585.4,1497.1 589.4,1497.9 593.4,1495.7 597.4,1496.6 601.4,1499.1 605.4,1495.9 609.4,1492.8 613.4,1491.4 617.4,1492.4 621.4,1496.9 625.4,1498.2 629.4,1496.4 633.4,1498.8 637.4,1496.1 641.4,1491.3 645.4,1469.1 649.4,1472.7 653.4,1475.8 657.4,1473.3 661.4,1473.7 665.4,1458.3 669.4,1446.9 673.4,1453.4 677.4,1450.2 681.4,1449.0 685.4,1467.0 689.4,1467.2 693.4,1477.7 697.4,1464.3 701.4,1466.5 705.4,1458.1 709.4,1457.2 713.4,1457.5 717.4,1456.7 721.4,1455.9 725.4,1463.9 729.4,1459.0 733.4,1454.3 737.4,1453.7 741.4,1455.7 745.4,1462.7 749.4,1465.1 753.4,1472.6 757.4,1472.6 761.4,1474.0 765.4,1469.4 769.4,1475.1 773.4,1471.6 777.4,1458.8 781.4,1446.2 785.4,1444.5 789.4,1416.4 793.4,1389.5 797.4,1381.9 801.4,1379.4 805.4,1366.5 809.4,1364.6 813.4,1355.1 817.4,1354.2 821.4,1320.5 825.4,1313.0 829.4,1338.8 833.4,1340.5 837.4,1328.5 841.4,1339.4 845.4,1372.4 849.4,1374.7 853.4,1366.1 857.4,1378.7 861.4,1393.9 865.4,1378.9 869.4,1388.4 873.4,1379.1 877.4,1373.5 881.4,1388.5 885.4,1383.6 889.4,1401.6 893.4,1403.8 897.4,1417.5 901.4,1415.5 905.4,1422.4 909.4,1408.9 913.4,1432.0 917.4,1445.5 921.4,1445.7 925.4,1445.1 929.4,1457.0 933.4,1453.2 937.4,1449.3 941.4,1442.6 945.4,1456.4 949.4,1466.3 953.4,1469.5 957.4,1475.8 961.4,1483.4 965.4,1485.9 969.4,1480.4 973.4,1483.4 977.4,1487.8 981.4,1488.0 985.4,1487.0 989.4,1486.9 993.4,1476.5 997.4,1467.2 1001.4,1470.4 1005.4,1478.9 1009.4,1467.8 1013.4,1470.0 1017.4,1468.2 1021.4,1456.9 1025.4,1444.0 1029.4,1433.0 1033.4,1432.4 1037.4,1419.7 1041.4,1412.9 1045.4,1412.5 1049.4,1414.6 1053.4,1422.3 1057.4,1430.6 1061.4,1423.1 1065.4,1425.5 1069.4,1429.7 1073.4,1433.4 1077.4,1439.2 1081.4,1437.9 1085.4,1430.8 1089.4,1432.6 1093.4,1438.4 1097.4,1436.6 1101.4,1430.6 1105.4,1428.6 1109.4,1426.0 1113.4,1431.5 1117.4,1440.5 1121.4,1444.5 1125.4,1433.7 1129.4,1438.7 1133.4,1452.4 1137.4,1450.4 1141.4,1453.3 1145.4,1466.9 1149.4,1470.1 1153.4,1474.7 1157.4,1478.6 1161.4,1478.6 1165.4,1477.6 1169.4,1478.6 1173.4,1478.6 1177.4,1476.3 1181.4,1478.6 1185.4,1474.9 1189.4,1468.0 1193.4,1470.3 1197.4,1466.3 1201.4,1464.6 1205.4,1471.1 1209.4,1478.5 1213.4,1472.4 1217.4,1462.5 1221.4,1454.3 1225.4,1446.0 1229.4,1430.7 1233.4,1436.1 1237.4,1427.1 1241.4,1430.0 1245.4,1421.3 1249.4,1423.9 1253.4,1408.2 1257.4,1400.7 1261.4,1409.3 1265.4,1383.6 1269.4,1367.4 1273.4,1351.7 1277.4,1367.1 1281.4,1374.1 1285.4,1365.2 1289.4,1373.6 1293.4,1358.9 1297.4,1354.6 1301.4,1364.3 1305.4,1371.4 1309.4,1356.3 1313.4,1349.9 1317.4,1352.2 1321.4,1370.5 1325.4,1382.8 1329.4,1374.0 1333.4,1358.0 1337.4,1361.4 1341.4,1349.7 1345.4,1361.6 1349.4,1376.2 1353.4,1387.2 1357.4,1399.3 1361.4,1411.4 1365.4,1423.1 1369.4,1428.3 1373.4,1439.4 1377.4,1440.4 1381.4,1442.5 1385.4,1442.0 1389.4,1449.9 1393.4,1456.6 1397.4,1458.9 1401.4,1465.0 1405.4,1469.5 1409.4,1473.7 1413.4,1467.7 1417.4,1465.8 1421.4,1464.7 1425.4,1468.4 1429.4,1473.3 1433.4,1475.0 1437.4,1477.4 1441.4,1478.6 1445.4,1473.4 1449.4,1465.5 1453.4,1460.2 1457.4,1459.8 1461.4,1457.3 1465.4,1464.3 1469.4,1464.9 1473.4,1464.3 1477.4,1458.1 1481.4,1452.9 1485.4,1450.3 1489.4,1436.6 1493.4,1438.7 1497.4,1425.2 1501.4,1426.9 1505.4,1420.5 1509.4,1426.1 1513.4,1415.7 1517.4,1400.8 1521.4,1407.1 1525.4,1404.0 1529.4,1410.0 1533.4,1414.1 1537.4,1415.5 1541.4,1421.2 1545.4,1424.9 1549.4,1421.1 1553.4,1410.7 1557.4,1408.6 1561.4,1408.8 1565.4,1399.0 1569.4,1387.5 1573.4,1383.4 1577.4,1370.1 1581.4,1373.9 1585.4,1373.0 1589.4,1368.5 1593.4,1385.1 1597.4,1405.4 1601.4,1402.3 1605.4,1417.4 1609.4,1442.5 1613.4,1443.9 1617.4,1452.3 1621.4,1446.1 1625.4,1438.0 1629.4,1433.0 1633.4,1427.8 1637.4,1422.6 1641.4,1419.2 1645.4,1420.2 1649.4,1427.6 1653.4,1435.2 1657.4,1421.9 1661.4,1430.2 1665.4,1437.1 1669.4,1432.5 1673.4,1420.9 1677.4,1432.9 1681.4,1418.8 1685.4,1410.9 1689.4,1403.7 1693.4,1403.4 1697.4,1409.2 1701.4,1420.7 1705.4,1430.2 1709.4,1432.7 1713.4,1431.8 1717.4,1420.1 1721.4,1400.9 1725.4,1378.0 1729.4,1353.3 1733.4,1329.5 1737.4,1325.1 1741.4,1321.1 1745.4,1317.1 1749.4,1334.6 1753.4,1317.8 1757.4,1316.5 1761.4,1336.0 1765.4,1307.1 1769.4,1322.8 1773.4,1326.9 1777.4,1309.5 1781.4,1335.5 1785.4,1352.2 1789.4,1326.2 1793.4,1354.6 1797.4,1358.7 1801.4,1366.1 1805.4,1348.8 1809.4,1324.0 1813.4,1338.0 1817.4,1352.5 1821.4,1340.4 1825.4,1329.7 1829.4,1340.0 1833.4,1341.8 1837.4,1349.1 1841.4,1375.5 1845.4,1384.3 1849.4,1373.3 1853.4,1383.6 1857.4,1393.7 1861.4,1397.7 1865.4,1421.0 1869.4,1425.2 1873.4,1435.7 1877.4,1426.9 1881.4,1426.1 1885.4,1424.2 1889.4,1425.9 1893.4,1429.9 1897.4,1425.3 1901.4,1422.0 1905.4,1405.3 1909.4,1395.3 1913.4,1388.2 1917.4,1387.7 1921.4,1391.7 1925.4,1405.1 1929.4,1417.2 1933.4,1419.8 1937.4,1416.8 1941.4,1432.6 1945.4,1451.4 1949.4,1443.4 1953.4,1439.6 1957.4,1439.7 1961.4,1445.1 1965.4,1432.8 1969.4,1446.4 1973.4,1451.3 1977.4,1462.6 1981.4,1478.9 1985.4,1486.0 1989.4,1489.2 1993.4,1487.1 1997.4,1476.0 2001.4,1468.9 2005.4,1482.2 2009.4,1485.2 2013.4,1473.4 2017.4,1483.2 2021.4,1482.2 2025.4,1490.1 2029.4,1492.6 2033.4,1496.9 2037.4,1493.9 2041.4,1503.2 2045.4,1503.0 2049.4,1504.5 2053.4,1503.3 2057.4,1503.7 2061.4,1500.8 2065.4,1499.9 2069.4,1499.4 2073.4,1501.5 2077.4,1499.0 2081.4,1496.9 2085.4,1497.7 2089.4,1496.8 2093.4,1499.0 2097.4,1494.4 2101.4,1491.3 2105.4,1490.9 2109.4,1492.0 2113.4,1488.7" fill="none" stroke="#8c8c8c" stroke-opacity="0.14" stroke-width="1.3"/><polyline points="497.4,1457.8 501.4,1451.3 505.4,1447.5 509.4,1456.3 513.4,1452.1 517.4,1453.2 521.4,1457.3 525.4,1464.1 529.4,1469.4 533.4,1466.8 537.4,1464.9 541.4,1465.2 545.4,1471.5 549.4,1469.9 553.4,1467.3 557.4,1467.6 561.4,1468.0 565.4,1468.3 569.4,1468.0 573.4,1467.2 577.4,1466.4 581.4,1466.1 585.4,1464.6 589.4,1462.6 593.4,1468.7 597.4,1458.6 601.4,1456.9 605.4,1455.3 609.4,1453.7 613.4,1452.1 617.4,1449.3 621.4,1451.1 625.4,1441.4 629.4,1437.4 633.4,1449.4 637.4,1453.3 641.4,1449.6 645.4,1434.9 649.4,1447.8 653.4,1467.1 657.4,1454.8 661.4,1467.8 665.4,1461.5 669.4,1462.6 673.4,1443.3 677.4,1433.5 681.4,1426.7 685.4,1426.9 689.4,1444.6 693.4,1464.7 697.4,1461.0 701.4,1472.6 705.4,1469.6 709.4,1474.0 713.4,1467.6 717.4,1475.8 721.4,1475.0 725.4,1475.3 729.4,1480.3 733.4,1480.5 737.4,1480.1 741.4,1484.1 745.4,1483.7 749.4,1484.8 753.4,1482.5 757.4,1475.8 761.4,1468.3 765.4,1476.5 769.4,1476.4 773.4,1460.7 777.4,1448.4 781.4,1447.0 785.4,1435.6 789.4,1442.3 793.4,1449.6 797.4,1420.7 801.4,1424.9 805.4,1427.3 809.4,1426.8 813.4,1435.6 817.4,1430.7 821.4,1431.2 825.4,1433.5 829.4,1437.8 833.4,1435.8 837.4,1440.0 841.4,1439.8 845.4,1450.0 849.4,1450.5 853.4,1445.5 857.4,1435.2 861.4,1434.0 865.4,1436.8 869.4,1438.0 873.4,1439.2 877.4,1429.2 881.4,1418.9 885.4,1413.6 889.4,1420.3 893.4,1408.2 897.4,1415.7 901.4,1413.7 905.4,1410.5 909.4,1407.2 913.4,1416.3 917.4,1431.3 921.4,1444.4 925.4,1438.0 929.4,1422.5 933.4,1432.7 937.4,1437.4 941.4,1452.0 945.4,1460.1 949.4,1454.9 953.4,1455.9 957.4,1452.4 961.4,1454.0 965.4,1451.2 969.4,1462.2 973.4,1469.5 977.4,1465.3 981.4,1472.8 985.4,1479.5 989.4,1473.4 993.4,1478.9 997.4,1482.9 1001.4,1480.9 1005.4,1475.5 1009.4,1476.7 1013.4,1474.9 1017.4,1469.5 1021.4,1467.1 1025.4,1453.7 1029.4,1439.7 1033.4,1441.8 1037.4,1433.0 1041.4,1433.7 1045.4,1427.9 1049.4,1428.4 1053.4,1421.0 1057.4,1410.5 1061.4,1413.7 1065.4,1406.3 1069.4,1396.1 1073.4,1397.0 1077.4,1402.0 1081.4,1416.6 1085.4,1422.5 1089.4,1417.0 1093.4,1410.3 1097.4,1409.5 1101.4,1397.4 1105.4,1391.3 1109.4,1394.3 1113.4,1407.4 1117.4,1413.9 1121.4,1409.2 1125.4,1427.1 1129.4,1440.6 1133.4,1439.5 1137.4,1442.6 1141.4,1439.1 1145.4,1449.7 1149.4,1449.3 1153.4,1456.6 1157.4,1462.2 1161.4,1467.5 1165.4,1468.2 1169.4,1460.9 1173.4,1449.7 1177.4,1453.4 1181.4,1445.4 1185.4,1449.6 1189.4,1458.0 1193.4,1454.9 1197.4,1456.7 1201.4,1458.8 1205.4,1452.4 1209.4,1447.4 1213.4,1449.9 1217.4,1440.4 1221.4,1427.0 1225.4,1416.3 1229.4,1415.8 1233.4,1418.6 1237.4,1406.0 1241.4,1405.0 1245.4,1398.0 1249.4,1376.7 1253.4,1370.4 1257.4,1370.6 1261.4,1357.6 1265.4,1372.3 1269.4,1360.5 1273.4,1355.6 1277.4,1375.0 1281.4,1362.8 1285.4,1357.3 1289.4,1352.3 1293.4,1347.3 1297.4,1342.3 1301.4,1346.2 1305.4,1366.9 1309.4,1366.4 1313.4,1349.9 1317.4,1352.2 1321.4,1367.2 1325.4,1363.7 1329.4,1352.8 1333.4,1351.6 1337.4,1350.4 1341.4,1348.8 1345.4,1346.8 1349.4,1351.2 1353.4,1358.3 1357.4,1342.4 1361.4,1348.4 1365.4,1367.3 1369.4,1389.1 1373.4,1408.7 1377.4,1401.9 1381.4,1412.9 1385.4,1399.9 1389.4,1410.2 1393.4,1405.4 1397.4,1419.3 1401.4,1432.6 1405.4,1435.0 1409.4,1444.5 1413.4,1457.6 1417.4,1464.8 1421.4,1468.0 1425.4,1470.5 1429.4,1470.5 1433.4,1472.8 1437.4,1471.1 1441.4,1470.6 1445.4,1465.5 1449.4,1444.8 1453.4,1438.8 1457.4,1430.8 1461.4,1417.5 1465.4,1435.0 1469.4,1426.9 1473.4,1428.4 1477.4,1426.1 1481.4,1407.2 1485.4,1430.6 1489.4,1433.9 1493.4,1435.2 1497.4,1427.4 1501.4,1433.0 1505.4,1439.3 1509.4,1445.3 1513.4,1434.2 1517.4,1422.8 1521.4,1411.8 1525.4,1401.6 1529.4,1404.8 1533.4,1390.7 1537.4,1394.3 1541.4,1391.8 1545.4,1401.8 1549.4,1382.4 1553.4,1386.5 1557.4,1396.9 1561.4,1388.9 1565.4,1384.9 1569.4,1393.1 1573.4,1384.0 1577.4,1398.5 1581.4,1414.2 1585.4,1409.4 1589.4,1411.4 1593.4,1409.6 1597.4,1421.5 1601.4,1428.1 1605.4,1446.6 1609.4,1458.3 1613.4,1465.6 1617.4,1471.7 1621.4,1474.8 1625.4,1473.9 1629.4,1477.2 1633.4,1468.6 1637.4,1466.3 1641.4,1476.0 1645.4,1478.6 1649.4,1472.9 1653.4,1473.2 1657.4,1472.3 1661.4,1474.4 1665.4,1475.6 1669.4,1473.0 1673.4,1476.8 1677.4,1475.7 1681.4,1474.1 1685.4,1470.5 1689.4,1466.9 1693.4,1463.3 1697.4,1460.5 1701.4,1458.5 1705.4,1451.7 1709.4,1440.7 1713.4,1445.2 1717.4,1446.9 1721.4,1448.5 1725.4,1446.5 1729.4,1438.3 1733.4,1442.5 1737.4,1440.5 1741.4,1438.5 1745.4,1436.5 1749.4,1436.8 1753.4,1426.7 1757.4,1418.9 1761.4,1421.8 1765.4,1429.0 1769.4,1428.7 1773.4,1420.3 1777.4,1431.7 1781.4,1418.0 1785.4,1426.7 1789.4,1415.6 1793.4,1422.2 1797.4,1423.7 1801.4,1414.2 1805.4,1407.2 1809.4,1401.4 1813.4,1404.9 1817.4,1395.8 1821.4,1402.9 1825.4,1399.8 1829.4,1385.2 1833.4,1402.2 1837.4,1394.0 1841.4,1421.1 1845.4,1418.5 1849.4,1410.5 1853.4,1420.7 1857.4,1437.1 1861.4,1433.5 1865.4,1443.8 1869.4,1443.6 1873.4,1457.0 1877.4,1457.0 1881.4,1450.7 1885.4,1440.0 1889.4,1444.4 1893.4,1450.7 1897.4,1446.7 1901.4,1438.9 1905.4,1427.9 1909.4,1411.8 1913.4,1390.0 1917.4,1392.6 1921.4,1401.5 1925.4,1395.7 1929.4,1412.1 1933.4,1410.7 1937.4,1417.8 1941.4,1422.1 1945.4,1435.4 1949.4,1437.5 1953.4,1438.3 1957.4,1433.5 1961.4,1432.0 1965.4,1427.3 1969.4,1446.9 1973.4,1445.4 1977.4,1441.2 1981.4,1454.5 1985.4,1446.4 1989.4,1455.0 1993.4,1450.1 1997.4,1430.4 2001.4,1430.9 2005.4,1418.9 2009.4,1413.9 2013.4,1435.0 2017.4,1453.0 2021.4,1449.5 2025.4,1462.9 2029.4,1470.5 2033.4,1459.5 2037.4,1441.9 2041.4,1449.6 2045.4,1440.7 2049.4,1456.3 2053.4,1464.2 2057.4,1456.9 2061.4,1470.1 2065.4,1487.8 2069.4,1488.1 2073.4,1495.3 2077.4,1495.2 2081.4,1487.9 2085.4,1486.8 2089.4,1482.4 2093.4,1491.8 2097.4,1491.0 2101.4,1492.1 2105.4,1483.1 2109.4,1476.5 2113.4,1467.9" fill="none" stroke="#8c8c8c" stroke-opacity="0.10" stroke-width="1.3"/><polyline points="497.4,1473.2 501.4,1471.3 505.4,1471.4 509.4,1480.9 513.4,1480.7 517.4,1474.1 521.4,1482.1 525.4,1487.2 529.4,1480.8 533.4,1489.4 537.4,1493.8 541.4,1498.3 545.4,1501.5 549.4,1502.1 553.4,1503.9 557.4,1501.1 561.4,1501.9 565.4,1500.3 569.4,1498.8 573.4,1497.3 577.4,1494.0 581.4,1497.1 585.4,1499.6 589.4,1495.8 593.4,1495.3 597.4,1487.3 601.4,1487.5 605.4,1478.8 609.4,1489.2 613.4,1484.0 617.4,1484.2 621.4,1477.0 625.4,1489.7 629.4,1472.2 633.4,1463.4 637.4,1451.1 641.4,1460.3 645.4,1453.3 649.4,1469.7 653.4,1461.8 657.4,1444.5 661.4,1437.6 665.4,1418.0 669.4,1422.2 673.4,1427.5 677.4,1432.5 681.4,1426.7 685.4,1426.9 689.4,1432.5 693.4,1436.5 697.4,1441.7 701.4,1451.8 705.4,1452.0 709.4,1457.2 713.4,1457.5 717.4,1463.1 721.4,1466.4 725.4,1458.2 729.4,1454.3 733.4,1453.5 737.4,1462.3 741.4,1462.0 745.4,1467.3 749.4,1461.9 753.4,1461.2 757.4,1456.5 761.4,1455.0 765.4,1449.2 769.4,1454.4 773.4,1459.8 777.4,1462.2 781.4,1474.7 785.4,1470.7 789.4,1466.5 793.4,1454.0 797.4,1444.0 801.4,1427.5 805.4,1421.1 809.4,1413.9 813.4,1392.1 817.4,1364.3 821.4,1356.5 825.4,1360.9 829.4,1352.7 833.4,1348.2 837.4,1353.6 841.4,1368.2 845.4,1385.9 849.4,1385.2 853.4,1362.5 857.4,1377.8 861.4,1351.8 865.4,1334.2 869.4,1317.8 873.4,1327.3 877.4,1337.6 881.4,1327.3 885.4,1333.1 889.4,1339.0 893.4,1349.4 897.4,1340.9 901.4,1354.0 905.4,1350.1 909.4,1358.1 913.4,1366.1 917.4,1388.9 921.4,1398.2 925.4,1411.6 929.4,1412.7 933.4,1401.7 937.4,1401.8 941.4,1397.1 945.4,1401.1 949.4,1413.9 953.4,1409.1 957.4,1413.1 961.4,1417.1 965.4,1428.2 969.4,1444.1 973.4,1436.1 977.4,1437.6 981.4,1449.6 985.4,1447.9 989.4,1434.1 993.4,1430.4 997.4,1433.0 1001.4,1428.6 1005.4,1432.1 1009.4,1440.2 1013.4,1435.3 1017.4,1416.6 1021.4,1408.8 1025.4,1409.6 1029.4,1420.1 1033.4,1412.6 1037.4,1405.8 1041.4,1397.7 1045.4,1398.0 1049.4,1376.0 1053.4,1388.3 1057.4,1402.7 1061.4,1381.1 1065.4,1359.1 1069.4,1351.8 1073.4,1338.8 1077.4,1352.1 1081.4,1370.4 1085.4,1372.8 1089.4,1389.5 1093.4,1376.6 1097.4,1364.6 1101.4,1359.2 1105.4,1356.2 1109.4,1344.3 1113.4,1359.3 1117.4,1372.3 1121.4,1369.4 1125.4,1364.6 1129.4,1362.2 1133.4,1362.7 1137.4,1373.1 1141.4,1389.4 1145.4,1414.2 1149.4,1399.1 1153.4,1387.4 1157.4,1384.5 1161.4,1405.1 1165.4,1404.3 1169.4,1414.2 1173.4,1427.1 1177.4,1429.3 1181.4,1430.7 1185.4,1441.1 1189.4,1448.2 1193.4,1461.5 1197.4,1461.2 1201.4,1469.0 1205.4,1470.1 1209.4,1476.1 1213.4,1476.5 1217.4,1474.2 1221.4,1478.0 1225.4,1465.5 1229.4,1455.3 1233.4,1453.4 1237.4,1460.7 1241.4,1453.1 1245.4,1460.8 1249.4,1450.7 1253.4,1449.6 1257.4,1443.6 1261.4,1445.8 1265.4,1443.3 1269.4,1451.8 1273.4,1454.5 1277.4,1448.1 1281.4,1447.9 1285.4,1442.8 1289.4,1456.5 1293.4,1448.5 1297.4,1433.9 1301.4,1423.1 1305.4,1416.8 1309.4,1426.8 1313.4,1429.6 1317.4,1422.5 1321.4,1418.2 1325.4,1424.3 1329.4,1434.8 1333.4,1428.9 1337.4,1440.2 1341.4,1427.7 1345.4,1436.0 1349.4,1429.0 1353.4,1429.6 1357.4,1420.5 1361.4,1429.4 1365.4,1440.2 1369.4,1446.2 1373.4,1452.2 1377.4,1451.1 1381.4,1449.4 1385.4,1456.4 1389.4,1460.6 1393.4,1459.4 1397.4,1460.1 1401.4,1464.8 1405.4,1464.9 1409.4,1463.2 1413.4,1469.9 1417.4,1466.4 1421.4,1469.2 1425.4,1469.6 1429.4,1470.7 1433.4,1474.4 1437.4,1476.8 1441.4,1478.6 1445.4,1472.5 1449.4,1470.1 1453.4,1467.9 1457.4,1456.1 1461.4,1450.2 1465.4,1457.3 1469.4,1467.6 1473.4,1472.1 1477.4,1478.2 1481.4,1463.5 1485.4,1453.8 1489.4,1453.8 1493.4,1453.4 1497.4,1444.9 1501.4,1444.1 1505.4,1440.5 1509.4,1443.5 1513.4,1438.5 1517.4,1431.5 1521.4,1437.0 1525.4,1437.3 1529.4,1432.3 1533.4,1435.6 1537.4,1430.7 1541.4,1431.4 1545.4,1426.2 1549.4,1422.6 1553.4,1416.7 1557.4,1403.0 1561.4,1397.7 1565.4,1393.9 1569.4,1385.9 1573.4,1384.8 1577.4,1400.4 1581.4,1412.2 1585.4,1409.4 1589.4,1402.3 1593.4,1394.6 1597.4,1419.4 1601.4,1434.8 1605.4,1447.6 1609.4,1461.6 1613.4,1460.3 1617.4,1454.5 1621.4,1445.8 1625.4,1442.0 1629.4,1446.9 1633.4,1437.8 1637.4,1438.9 1641.4,1431.9 1645.4,1426.7 1649.4,1428.0 1653.4,1432.2 1657.4,1445.8 1661.4,1441.3 1665.4,1435.3 1669.4,1424.7 1673.4,1419.9 1677.4,1423.1 1681.4,1418.1 1685.4,1410.9 1689.4,1404.5 1693.4,1396.5 1697.4,1400.0 1701.4,1394.4 1705.4,1372.9 1709.4,1364.9 1713.4,1366.5 1717.4,1385.2 1721.4,1391.6 1725.4,1373.4 1729.4,1360.6 1733.4,1353.6 1737.4,1346.4 1741.4,1330.4 1745.4,1317.1 1749.4,1314.3 1753.4,1334.0 1757.4,1360.7 1761.4,1389.2 1765.4,1384.2 1769.4,1399.9 1773.4,1383.5 1777.4,1358.0 1781.4,1324.7 1785.4,1313.0 1789.4,1330.2 1793.4,1331.7 1797.4,1314.3 1801.4,1314.0 1805.4,1318.0 1809.4,1312.2 1813.4,1314.2 1817.4,1341.7 1821.4,1344.4 1825.4,1379.4 1829.4,1399.7 1833.4,1383.6 1837.4,1412.9 1841.4,1425.2 1845.4,1424.0 1849.4,1412.4 1853.4,1420.1 1857.4,1407.8 1861.4,1407.3 1865.4,1398.6 1869.4,1402.2 1873.4,1425.1 1877.4,1434.0 1881.4,1439.2 1885.4,1446.7 1889.4,1454.1 1893.4,1459.3 1897.4,1455.6 1901.4,1442.9 1905.4,1440.0 1909.4,1444.3 1913.4,1441.4 1917.4,1433.0 1921.4,1433.6 1925.4,1442.1 1929.4,1435.7 1933.4,1442.5 1937.4,1458.9 1941.4,1474.2 1945.4,1474.2 1949.4,1468.2 1953.4,1468.7 1957.4,1473.0 1961.4,1485.9 1965.4,1477.0 1969.4,1463.7 1973.4,1463.4 1977.4,1474.0 1981.4,1459.8 1985.4,1455.2 1989.4,1461.5 1993.4,1457.0 1997.4,1440.4 2001.4,1418.3 2005.4,1428.4 2009.4,1427.2 2013.4,1426.9 2017.4,1433.2 2021.4,1443.1 2025.4,1436.3 2029.4,1427.4 2033.4,1447.4 2037.4,1428.0 2041.4,1445.7 2045.4,1448.4 2049.4,1454.8 2053.4,1449.8 2057.4,1469.4 2061.4,1465.4 2065.4,1461.7 2069.4,1450.3 2073.4,1464.0 2077.4,1475.1 2081.4,1463.4 2085.4,1455.3 2089.4,1453.0 2093.4,1453.0 2097.4,1453.0 2101.4,1460.9 2105.4,1463.4 2109.4,1461.5 2113.4,1467.4" fill="none" stroke="#8c8c8c" stroke-opacity="0.12" stroke-width="1.3"/></g><g clip-path="url(#c2clip)"><polyline points="497.4,1421.9 503.6,1427.1 512.2,1434.0 520.8,1455.5 529.4,1464.1 539.7,1458.1 551.8,1462.4 557.0,1463.2 563.8,1457.2 572.4,1458.9 579.3,1464.1 587.9,1461.5 596.5,1455.5 606.9,1458.1 615.5,1445.2 618.9,1444.3 629.2,1450.3 639.6,1455.5 649.9,1458.1 663.6,1445.2 674.0,1456.3 684.3,1446.9 694.6,1452.0 703.2,1463.2 715.3,1459.8 723.9,1463.2 732.5,1464.1 741.1,1467.5 749.7,1459.8 756.6,1464.9 771.9,1454.6 777.0,1434.0 785.7,1404.7 792.5,1351.4 799.4,1323.8 804.6,1316.1 811.5,1311.8 821.8,1305.8 830.4,1296.3 839.0,1281.7 845.9,1286.0 849.3,1292.0 855.3,1272.2 858.8,1279.1 864.8,1284.3 870.0,1296.3 876.9,1295.4 885.5,1303.2 895.8,1310.1 902.7,1332.4 911.3,1335.9 919.9,1342.8 928.5,1351.4 937.1,1361.7 947.4,1385.8 956.0,1403.0 964.6,1420.2 971.5,1427.9 980.1,1432.3 985.3,1420.2 992.2,1373.7 1000.8,1374.6 1009.4,1363.4 1019.7,1365.1 1026.6,1351.4 1033.5,1320.4 1038.4,1314.4 1046.2,1323.8 1052.2,1315.2 1060.8,1310.1 1066.0,1317.0 1071.1,1311.8 1076.3,1312.6 1086.6,1320.4 1091.8,1316.1 1097.0,1327.3 1105.6,1327.3 1110.7,1323.8 1117.6,1318.7 1127.9,1320.4 1134.8,1346.2 1141.7,1360.0 1152.0,1384.1 1155.5,1386.6 1162.3,1385.8 1169.2,1368.6 1176.1,1375.5 1184.7,1399.6 1193.3,1415.0 1201.9,1415.0 1210.5,1421.1 1215.7,1415.0 1220.9,1378.9 1226.0,1359.1 1234.6,1356.5 1238.1,1355.7 1243.2,1366.9 1250.1,1360.8 1257.0,1351.4 1262.2,1337.6 1269.0,1335.0 1275.9,1342.8 1284.5,1337.6 1291.4,1325.6 1298.3,1317.8 1303.5,1320.4 1311.9,1332.4 1320.5,1348.8 1327.4,1341.9 1339.4,1341.9 1348.0,1322.1 1356.6,1310.1 1363.5,1323.0 1377.3,1368.6 1387.6,1372.0 1401.4,1387.5 1411.7,1406.4 1422.0,1420.2 1430.6,1432.3 1437.5,1432.3 1444.4,1425.4 1451.3,1375.5 1454.7,1353.1 1463.3,1360.0 1470.2,1367.7 1482.3,1361.7 1490.9,1335.9 1497.7,1325.6 1508.1,1322.1 1513.2,1299.7 1518.4,1300.6 1528.7,1306.6 1535.6,1306.6 1542.5,1320.4 1549.4,1330.7 1556.2,1317.0 1563.1,1308.3 1571.7,1296.3 1580.2,1310.1 1588.8,1319.5 1597.4,1330.7 1604.3,1347.9 1607.7,1382.3 1616.3,1388.4 1626.6,1379.8 1635.2,1383.2 1643.8,1392.7 1654.2,1404.7 1664.5,1415.9 1673.1,1421.1 1678.3,1417.6 1685.1,1375.5 1688.6,1365.1 1695.5,1345.3 1702.3,1350.5 1709.2,1337.6 1716.1,1344.5 1724.7,1325.6 1729.9,1319.5 1738.5,1317.8 1743.6,1313.5 1752.3,1294.6 1760.9,1283.4 1764.3,1283.4 1769.5,1294.6 1774.6,1296.3 1778.1,1301.5 1783.2,1300.6 1788.4,1308.3 1795.3,1323.8 1798.7,1323.8 1803.9,1313.5 1809.0,1309.2 1815.9,1317.0 1821.1,1320.4 1826.2,1351.4 1833.1,1344.5 1840.0,1346.2 1850.0,1352.2 1851.9,1353.1 1860.5,1366.9 1867.4,1372.0 1879.4,1401.3 1889.7,1418.5 1894.9,1432.3 1900.1,1433.1 1905.2,1418.5 1910.4,1375.5 1916.4,1341.0 1920.7,1358.3 1927.6,1375.5 1936.2,1404.7 1944.8,1432.3 1951.7,1422.8 1958.6,1427.9 1965.5,1434.8 1975.8,1422.8 1982.7,1430.5 1991.3,1443.4 1999.9,1430.5 2010.2,1427.1 2024.0,1427.1 2029.1,1427.1 2034.3,1410.7 2039.5,1415.0 2044.6,1417.6 2051.5,1428.8 2060.1,1444.3 2068.7,1457.2 2077.3,1458.1 2089.4,1460.6 2099.7,1455.5 2104.9,1439.1 2110.9,1427.1" fill="none" stroke="#848484" stroke-width="1.6" stroke-linejoin="round"/><polyline points="497.4,1522.6 505.3,1521.7 515.7,1526.9 531.1,1522.6 541.5,1529.5 551.8,1527.8 560.4,1528.6 570.7,1526.0 579.3,1522.6 591.4,1531.2 598.3,1535.9 601.7,1532.1 606.9,1528.6 610.3,1535.9 699.8,1535.9 703.2,1526.9 711.8,1528.6 723.9,1525.2 727.3,1518.3 739.4,1513.1 749.7,1516.6 758.3,1518.3 770.2,1517.4 777.0,1532.1 785.7,1523.5 799.4,1529.5 803.7,1521.7 813.2,1509.7 823.5,1495.9 828.7,1495.1 837.3,1502.8 847.6,1519.2 854.5,1511.4 864.8,1495.9 871.7,1487.3 882.0,1482.2 892.3,1490.8 902.7,1508.0 909.6,1528.6 916.4,1528.6 928.5,1515.7 937.1,1510.5 945.7,1505.4 957.7,1508.0 966.3,1502.8 976.7,1506.2 987.0,1519.2 992.2,1514.9 999.0,1508.0 1005.9,1511.4 1016.2,1511.4 1026.6,1509.7 1033.5,1518.3 1045.3,1495.9 1052.2,1499.4 1059.1,1485.6 1069.4,1470.1 1079.7,1494.2 1086.6,1487.3 1091.8,1488.2 1098.7,1458.9 1103.8,1451.2 1110.7,1455.5 1121.0,1475.3 1129.6,1492.5 1136.5,1513.1 1146.9,1514.9 1155.5,1508.0 1162.3,1506.2 1170.9,1513.1 1179.6,1510.5 1189.9,1503.7 1198.5,1509.7 1207.1,1510.5 1215.7,1509.7 1222.6,1520.9 1231.2,1509.7 1239.8,1503.7 1246.7,1503.7 1255.3,1510.5 1263.9,1505.4 1272.5,1492.5 1279.4,1478.7 1286.2,1470.1 1296.6,1483.9 1303.5,1487.3 1310.2,1493.3 1318.8,1478.7 1327.4,1461.5 1336.0,1458.1 1344.6,1462.4 1351.5,1480.4 1360.1,1490.8 1370.4,1501.1 1379.0,1508.0 1387.6,1503.7 1401.4,1501.1 1410.0,1507.1 1422.0,1502.8 1432.3,1501.1 1442.7,1508.0 1454.7,1524.3 1463.3,1511.4 1470.2,1517.4 1480.5,1513.1 1487.4,1509.7 1494.3,1499.4 1504.6,1494.2 1514.9,1487.3 1527.0,1485.6 1539.0,1494.2 1549.4,1483.9 1558.0,1474.4 1568.3,1483.0 1581.9,1479.6 1590.5,1483.9 1597.4,1508.0 1606.0,1512.3 1612.9,1511.4 1619.7,1504.5 1631.8,1501.1 1643.8,1503.7 1654.2,1504.5 1664.5,1507.1 1674.8,1508.0 1686.9,1508.8 1693.7,1502.8 1705.8,1507.1 1712.7,1502.8 1721.3,1487.3 1729.9,1493.3 1738.5,1487.3 1747.1,1483.9 1754.0,1495.9 1764.3,1507.1 1774.6,1520.9 1784.9,1506.2 1795.3,1478.7 1798.7,1472.7 1807.3,1483.9 1819.4,1478.7 1828.0,1495.9 1836.6,1513.1 1845.2,1514.0 1850.0,1516.6 1851.9,1517.4 1860.5,1504.5 1867.4,1514.9 1872.5,1509.7 1882.9,1511.4 1893.2,1498.5 1901.8,1506.2 1905.2,1513.1 1913.8,1501.1 1920.7,1495.1 1929.3,1501.1 1937.9,1511.4 1944.8,1523.5 1950.0,1535.9 2020.5,1535.9 2027.4,1532.1 2032.6,1535.9 2065.3,1535.9 2068.7,1530.3 2077.3,1530.3 2089.4,1526.9 2099.7,1526.0 2104.9,1521.7 2110.9,1515.7" fill="none" stroke="#848484" stroke-width="1.6" stroke-linejoin="round"/><polyline points="497.4,1434.0 501.9,1432.3 508.8,1442.6 515.7,1446.0 520.8,1455.5 526.0,1448.6 531.1,1441.7 538.0,1444.3 544.9,1450.3 555.2,1454.6 562.1,1458.1 570.7,1462.4 579.3,1464.1 582.8,1458.9 593.1,1455.5 595.7,1440.0 605.1,1441.7 615.5,1436.6 625.8,1432.3 636.1,1438.3 644.7,1441.7 653.3,1440.9 656.8,1432.3 667.1,1431.4 672.3,1427.1 682.6,1434.8 687.7,1436.6 694.6,1433.1 703.2,1424.5 704.1,1420.2 706.7,1440.0 711.8,1448.6 717.0,1441.7 722.2,1439.1 727.3,1433.1 735.9,1442.6 742.8,1450.3 748.8,1446.9 754.9,1429.7 757.4,1434.8 765.2,1423.6 770.2,1425.4 775.3,1427.1 778.8,1431.4 785.7,1406.4 792.5,1384.1 797.7,1320.4 801.1,1317.0 806.3,1322.1 812.3,1335.9 816.6,1325.6 827.0,1318.7 833.8,1328.1 842.4,1322.1 847.6,1327.3 856.2,1307.5 860.5,1306.6 868.3,1318.7 876.9,1319.5 885.5,1329.0 892.3,1333.3 897.5,1329.0 900.9,1340.2 904.4,1331.6 907.8,1327.3 911.3,1317.8 916.4,1341.0 919.9,1365.1 926.8,1368.6 930.2,1366.9 937.1,1375.5 947.4,1396.1 954.3,1404.7 959.5,1409.9 968.1,1427.1 974.9,1425.4 981.8,1427.1 992.2,1375.5 1002.5,1382.3 1007.6,1373.7 1012.8,1379.8 1018.0,1370.3 1023.1,1358.3 1030.0,1317.0 1035.2,1316.1 1044.5,1348.8 1050.5,1339.3 1057.4,1333.3 1066.0,1337.6 1072.0,1328.1 1079.7,1337.6 1086.6,1341.0 1093.5,1329.0 1100.4,1331.6 1105.6,1327.3 1114.2,1333.3 1122.8,1348.8 1131.4,1341.0 1136.5,1344.5 1140.0,1330.7 1145.1,1360.0 1153.7,1406.4 1165.8,1397.0 1176.1,1402.1 1186.4,1408.2 1195.0,1420.2 1203.6,1426.2 1208.8,1431.4 1214.0,1416.8 1220.9,1389.2 1224.3,1375.5 1231.2,1366.9 1236.3,1377.2 1243.2,1388.4 1246.7,1356.5 1251.8,1351.4 1262.2,1308.3 1274.2,1342.8 1275.9,1335.9 1282.8,1335.0 1289.7,1332.4 1296.6,1328.1 1303.5,1335.9 1308.4,1342.8 1315.3,1335.9 1322.2,1329.0 1327.4,1323.8 1329.1,1335.9 1339.4,1337.6 1349.7,1343.6 1358.3,1330.7 1367.0,1334.2 1370.4,1325.6 1377.3,1366.9 1382.4,1397.8 1391.0,1386.6 1399.6,1401.3 1410.0,1421.1 1418.6,1413.3 1425.5,1418.5 1435.8,1437.4 1440.9,1434.0 1447.8,1418.5 1454.7,1377.2 1466.8,1384.1 1473.6,1389.2 1478.8,1385.8 1482.3,1353.1 1487.4,1323.8 1492.6,1298.0 1497.7,1298.0 1504.6,1318.7 1509.8,1327.3 1514.9,1320.4 1521.8,1339.3 1527.0,1332.4 1532.2,1334.2 1540.8,1339.3 1547.6,1342.8 1554.5,1330.7 1563.1,1329.0 1573.5,1317.8 1581.9,1325.6 1590.5,1334.2 1599.1,1332.4 1604.3,1347.9 1606.0,1387.5 1611.1,1382.3 1616.3,1386.6 1621.5,1392.7 1630.1,1392.7 1643.8,1400.4 1654.2,1406.4 1662.8,1420.2 1673.1,1429.7 1681.7,1390.9 1686.9,1368.6 1693.7,1365.1 1702.3,1362.6 1709.2,1347.9 1714.4,1346.2 1721.3,1316.1 1726.4,1306.6 1729.9,1330.7 1740.2,1352.2 1752.3,1341.9 1757.4,1330.7 1764.3,1329.9 1772.9,1335.9 1781.5,1331.6 1786.7,1334.2 1793.6,1349.6 1802.2,1339.3 1807.3,1335.0 1815.9,1344.5 1824.5,1353.1 1832.3,1324.7 1837.4,1337.6 1840.0,1381.5 1846.0,1390.9 1850.0,1390.9 1857.0,1388.4 1862.2,1392.7 1870.8,1401.3 1881.1,1415.9 1888.0,1421.1 1894.9,1424.5 1900.1,1422.8 1905.2,1415.0 1909.5,1396.1 1915.6,1350.5 1924.2,1372.0 1931.0,1392.7 1937.9,1415.0 1944.8,1437.4 1951.7,1442.6 1963.7,1446.9 1968.9,1444.3 1975.8,1436.6 1986.1,1447.7 1996.4,1452.0 2003.3,1454.6 2013.6,1437.4 2024.0,1444.3 2034.3,1434.8 2042.9,1435.7 2051.5,1443.4 2061.8,1450.3 2068.7,1458.9 2073.9,1463.2 2085.9,1445.2 2091.1,1453.8 2098.0,1452.9 2104.9,1442.6 2110.9,1438.3" fill="none" stroke="#3482cb" stroke-width="1.6" stroke-linejoin="round"/><polyline points="497.4,1510.5 505.3,1514.9 510.5,1514.0 519.1,1525.2 524.3,1530.3 526.8,1535.9 541.5,1532.1 551.8,1535.9 557.0,1535.9 567.3,1520.9 572.4,1520.0 579.3,1522.6 587.9,1529.5 594.0,1535.9 594.8,1535.9 729.0,1535.9 735.9,1525.2 742.8,1520.0 749.7,1522.6 753.1,1535.9 770.2,1535.9 775.3,1528.6 782.2,1523.5 787.4,1521.7 791.7,1535.9 802.9,1535.9 809.7,1488.2 816.6,1494.2 823.5,1484.7 833.8,1461.5 839.0,1464.9 845.9,1489.0 854.5,1478.7 861.4,1475.3 870.0,1465.8 876.9,1466.7 887.2,1459.8 895.8,1471.0 902.7,1494.2 909.6,1535.9 914.7,1535.9 919.9,1512.3 928.5,1504.5 937.1,1495.9 944.0,1491.6 954.3,1502.8 968.1,1499.4 980.1,1502.8 988.7,1506.2 993.9,1511.4 1002.5,1499.4 1012.8,1504.5 1018.0,1506.2 1023.1,1520.0 1028.3,1535.9 1035.2,1525.2 1038.4,1504.5 1043.6,1473.6 1050.5,1474.4 1055.7,1471.8 1067.7,1459.8 1078.0,1478.7 1088.3,1471.0 1097.0,1459.8 1105.6,1457.2 1112.4,1452.0 1124.5,1459.8 1129.6,1478.7 1138.3,1535.9 1145.1,1522.6 1150.3,1522.6 1155.5,1489.9 1162.3,1493.3 1172.7,1478.7 1183.0,1491.6 1189.9,1499.4 1203.6,1497.6 1208.8,1499.4 1214.0,1506.2 1220.9,1508.8 1226.0,1494.2 1229.5,1499.4 1236.3,1488.2 1243.2,1489.0 1253.6,1530.3 1255.3,1535.9 1263.9,1535.9 1272.5,1487.3 1286.2,1472.7 1294.9,1473.6 1301.7,1470.1 1310.2,1484.7 1320.5,1489.9 1327.4,1483.0 1329.1,1470.1 1336.0,1464.9 1346.3,1458.9 1354.9,1467.5 1365.2,1489.0 1370.4,1523.5 1375.6,1513.1 1382.4,1483.0 1391.0,1494.2 1399.6,1486.5 1408.3,1482.2 1418.6,1501.1 1423.7,1505.4 1435.8,1495.9 1442.7,1506.2 1447.8,1507.1 1453.0,1502.8 1461.6,1490.8 1466.8,1499.4 1478.8,1497.6 1482.3,1535.9 1497.7,1535.9 1504.6,1504.5 1511.5,1482.2 1521.8,1462.4 1525.3,1468.4 1532.2,1466.7 1542.5,1482.2 1549.4,1478.7 1559.7,1461.5 1570.0,1466.7 1585.3,1475.3 1589.6,1471.8 1599.1,1523.5 1604.3,1535.9 1606.8,1506.2 1612.9,1519.2 1619.7,1497.6 1626.6,1493.3 1632.6,1488.2 1640.4,1493.3 1655.9,1501.1 1666.2,1498.5 1673.1,1498.5 1683.4,1518.3 1688.6,1501.9 1693.7,1488.2 1698.9,1495.9 1705.8,1502.8 1709.2,1497.6 1717.8,1518.3 1726.4,1520.0 1729.9,1495.1 1738.5,1468.4 1748.8,1454.6 1760.9,1470.1 1767.7,1474.4 1774.6,1489.9 1781.5,1483.9 1793.6,1454.6 1800.4,1455.5 1812.5,1463.2 1819.4,1458.1 1822.8,1466.7 1831.4,1528.6 1836.6,1529.5 1840.0,1487.3 1846.0,1480.4 1850.0,1489.0 1858.8,1482.2 1870.8,1491.6 1881.1,1497.6 1884.6,1511.4 1893.2,1509.7 1905.2,1518.3 1910.4,1513.1 1919.0,1502.8 1927.6,1508.0 1934.5,1511.4 1941.4,1517.4 1955.1,1515.7 1965.5,1520.9 1977.5,1528.6 1984.4,1523.5 1994.7,1525.2 2003.3,1517.4 2011.9,1526.9 2018.8,1513.1 2027.4,1508.0 2034.3,1515.7 2042.9,1518.3 2051.5,1524.3 2060.1,1531.2 2067.0,1524.3 2073.9,1521.7 2082.5,1535.9 2087.6,1535.9 2092.8,1526.0 2099.7,1523.5 2110.9,1508.0" fill="none" stroke="#3482cb" stroke-width="1.6" stroke-linejoin="round"/><path d="M497.4,1473.6C498.5,1474.2 503.4,1477.0 505.3,1478.2C507.3,1479.3 510.1,1480.2 512.2,1482.2C514.3,1484.1 518.5,1491.0 520.8,1492.5C523.1,1493.9 527.1,1493.0 529.4,1493.2C531.7,1493.4 535.7,1493.7 538.0,1493.9C540.3,1494.0 544.1,1494.4 546.6,1494.5C549.2,1494.7 554.2,1495.0 557.0,1495.1C559.7,1495.2 564.5,1495.2 567.3,1495.2C570.0,1495.3 574.8,1495.4 577.6,1495.4C580.4,1495.5 585.2,1495.7 587.9,1495.6C590.7,1495.5 594.6,1495.0 598.3,1494.7C601.9,1494.4 611.8,1493.4 615.5,1493.3C619.1,1493.3 622.3,1494.0 625.8,1494.4C629.2,1494.7 638.1,1495.6 641.3,1495.9C644.5,1496.2 647.4,1496.7 649.9,1496.8C652.4,1496.8 657.7,1496.4 660.2,1496.3C662.7,1496.1 665.6,1496.0 668.8,1495.8C672.0,1495.7 679.9,1495.2 684.3,1495.1C688.7,1495.0 696.9,1495.1 701.5,1495.1C706.1,1495.1 715.3,1495.5 718.7,1495.1C722.2,1494.6 723.9,1492.3 727.3,1491.6C730.8,1490.9 739.9,1490.1 744.5,1489.9C749.1,1489.7 758.1,1490.9 761.7,1489.9C765.4,1488.9 769.4,1483.5 771.9,1482.2C774.4,1481.0 778.7,1482.5 780.5,1480.5C782.3,1478.6 784.0,1471.2 785.7,1467.6C787.3,1464.1 790.7,1457.7 792.5,1453.8C794.4,1449.9 797.4,1443.5 799.4,1438.4C801.5,1433.2 806.0,1418.4 808.0,1415.1C810.1,1411.8 812.8,1414.7 814.9,1413.4C817.0,1412.1 821.4,1407.3 823.5,1405.7C825.6,1404.0 828.6,1402.6 830.4,1401.4C832.2,1400.1 835.7,1396.5 837.3,1396.2C838.9,1395.8 840.9,1396.9 842.4,1398.8C843.9,1400.6 846.6,1410.2 848.5,1410.0C850.3,1409.7 854.0,1399.3 856.2,1397.1C858.4,1394.8 862.3,1393.1 864.8,1392.7C867.3,1392.4 872.4,1394.1 875.1,1394.5C877.9,1394.8 882.5,1394.1 885.5,1395.3C888.4,1396.6 894.8,1400.0 897.5,1403.9C900.3,1407.8 903.6,1419.7 906.1,1424.6C908.6,1429.5 913.9,1438.9 916.4,1440.9C919.0,1443.0 922.6,1440.8 925.0,1440.1C927.5,1439.4 932.0,1435.2 934.5,1435.8C937.0,1436.3 941.3,1441.7 944.0,1444.4C946.6,1447.0 951.3,1452.9 954.3,1455.6C957.3,1458.2 962.9,1462.7 966.3,1464.2C969.8,1465.7 977.4,1467.3 980.1,1466.7C982.9,1466.2 985.2,1462.7 987.0,1459.9C988.8,1457.0 991.8,1447.4 993.9,1445.2C995.9,1443.1 1000.0,1443.7 1002.5,1443.5C1005.0,1443.3 1010.3,1443.7 1012.8,1443.5C1015.3,1443.3 1018.9,1444.4 1021.4,1441.8C1023.9,1439.2 1028.8,1427.5 1031.7,1423.7C1034.7,1419.9 1040.9,1415.7 1043.6,1413.4C1046.3,1411.1 1049.9,1408.2 1052.2,1406.5C1054.5,1404.8 1058.3,1401.8 1060.8,1400.5C1063.3,1399.2 1068.6,1396.0 1071.1,1397.1C1073.7,1398.1 1077.7,1407.0 1079.7,1408.2C1081.8,1409.5 1084.6,1408.0 1086.6,1406.5C1088.7,1405.0 1092.9,1398.7 1095.2,1397.1C1097.5,1395.4 1101.3,1394.8 1103.8,1394.5C1106.4,1394.1 1111.9,1393.6 1114.2,1394.5C1116.5,1395.4 1119.2,1399.5 1121.0,1401.4C1122.9,1403.2 1126.1,1405.0 1127.9,1408.2C1129.8,1411.4 1133.0,1421.5 1134.8,1425.4C1136.6,1429.3 1139.9,1434.5 1141.7,1437.5C1143.5,1440.5 1146.3,1446.3 1148.6,1447.8C1150.9,1449.3 1156.1,1449.5 1158.9,1448.7C1161.7,1447.9 1166.9,1442.5 1169.2,1441.8C1171.5,1441.1 1173.8,1442.0 1176.1,1443.5C1178.4,1445.0 1183.7,1450.5 1186.4,1453.0C1189.2,1455.5 1194.0,1460.8 1196.8,1462.4C1199.5,1464.1 1205.0,1464.6 1207.1,1465.0C1209.2,1465.5 1210.4,1467.5 1212.3,1465.9C1214.1,1464.3 1218.6,1457.0 1220.9,1453.0C1223.1,1449.0 1227.4,1438.3 1229.5,1435.8C1231.5,1433.2 1234.5,1433.6 1236.3,1434.1C1238.2,1434.5 1241.4,1439.0 1243.2,1439.2C1245.1,1439.4 1248.8,1435.5 1250.1,1435.8C1251.4,1436.0 1251.3,1442.3 1252.7,1440.9C1254.1,1439.6 1257.3,1428.9 1260.4,1425.4C1263.5,1422.0 1272.0,1418.1 1275.9,1415.1C1279.8,1412.1 1286.2,1404.6 1289.7,1403.1C1293.1,1401.6 1299.0,1402.6 1301.7,1403.9C1304.5,1405.3 1307.9,1412.3 1310.2,1413.4C1312.4,1414.5 1316.2,1413.8 1318.8,1412.5C1321.3,1411.3 1325.7,1405.4 1329.1,1403.9C1332.5,1402.4 1340.7,1401.1 1344.6,1401.4C1348.5,1401.6 1355.4,1403.4 1358.3,1405.7C1361.3,1408.0 1364.4,1413.9 1367.0,1418.6C1369.5,1423.3 1374.5,1438.1 1377.3,1440.9C1380.0,1443.8 1384.4,1439.0 1387.6,1440.1C1390.8,1441.1 1397.5,1446.0 1401.4,1448.7C1405.3,1451.3 1413.2,1457.5 1416.9,1459.9C1420.5,1462.3 1425.9,1465.4 1428.9,1466.7C1431.9,1468.1 1436.9,1470.2 1439.2,1470.2C1441.5,1470.2 1444.3,1469.7 1446.1,1466.7C1447.9,1463.8 1451.2,1451.5 1453.0,1447.8C1454.8,1444.1 1457.4,1439.6 1459.9,1439.2C1462.4,1438.9 1468.7,1444.9 1471.9,1445.2C1475.1,1445.6 1481.0,1444.4 1484.0,1441.8C1487.0,1439.2 1491.3,1429.0 1494.3,1425.4C1497.3,1421.9 1503.6,1418.4 1506.3,1415.1C1509.1,1411.8 1512.7,1402.0 1514.9,1400.5C1517.2,1399.0 1521.3,1403.9 1523.6,1403.9C1525.8,1403.9 1529.6,1399.5 1532.2,1400.5C1534.7,1401.5 1540.2,1410.2 1542.5,1411.7C1544.8,1413.2 1547.3,1413.6 1549.4,1411.7C1551.4,1409.7 1555.7,1399.0 1558.0,1397.1C1560.3,1395.1 1564.5,1397.4 1566.6,1397.1C1568.6,1396.7 1571.4,1394.1 1573.5,1394.5C1575.5,1394.8 1579.6,1398.1 1581.9,1399.6C1584.2,1401.1 1588.2,1402.0 1590.5,1405.7C1592.8,1409.3 1596.6,1421.0 1599.1,1427.2C1601.6,1433.4 1606.7,1449.4 1609.4,1452.1C1612.2,1454.9 1616.8,1449.0 1619.7,1447.8C1622.7,1446.7 1628.6,1443.1 1631.8,1443.5C1635.0,1444.0 1640.4,1449.3 1643.8,1451.3C1647.3,1453.2 1653.5,1456.2 1657.6,1458.1C1661.7,1460.1 1671.6,1466.1 1674.8,1465.9C1678.0,1465.7 1679.9,1460.0 1681.7,1456.4C1683.5,1452.9 1686.7,1442.7 1688.6,1439.2C1690.4,1435.8 1693.6,1431.2 1695.5,1430.6C1697.3,1430.0 1700.3,1435.5 1702.3,1434.9C1704.4,1434.3 1709.1,1427.0 1710.9,1426.3C1712.8,1425.6 1714.5,1430.7 1716.1,1429.7C1717.7,1428.8 1721.2,1421.4 1723.0,1419.4C1724.8,1417.5 1727.6,1416.5 1729.9,1415.1C1732.2,1413.7 1737.2,1411.2 1740.2,1409.1C1743.2,1407.0 1749.3,1400.7 1752.3,1399.6C1755.2,1398.6 1759.8,1399.7 1762.6,1401.4C1765.3,1403.0 1770.8,1410.2 1772.9,1411.7C1775.0,1413.2 1776.0,1413.9 1778.1,1412.5C1780.1,1411.2 1786.1,1402.5 1788.4,1401.4C1790.7,1400.2 1793.0,1404.4 1795.3,1403.9C1797.6,1403.5 1803.1,1397.9 1805.6,1397.9C1808.1,1397.9 1812.4,1403.2 1814.2,1403.9C1816.0,1404.6 1817.5,1400.4 1819.4,1403.1C1821.2,1405.7 1825.7,1419.5 1828.0,1423.7C1830.3,1428.0 1833.6,1433.1 1836.6,1434.9C1839.5,1436.7 1846.8,1437.0 1850.0,1437.5C1853.2,1438.0 1857.9,1437.2 1860.5,1438.4C1863.0,1439.5 1866.6,1443.7 1869.1,1446.1C1871.6,1448.5 1877.1,1454.1 1879.4,1456.4C1881.7,1458.7 1884.5,1461.9 1886.3,1463.3C1888.1,1464.7 1891.3,1465.7 1893.2,1466.7C1895.0,1467.8 1898.5,1471.2 1900.1,1471.0C1901.7,1470.9 1903.9,1468.8 1905.2,1465.9C1906.6,1463.0 1908.9,1454.5 1910.4,1449.5C1911.9,1444.6 1914.8,1430.5 1916.4,1428.9C1918.0,1427.3 1920.5,1434.3 1922.4,1437.5C1924.4,1440.7 1929.0,1449.3 1931.0,1453.0C1933.1,1456.7 1936.1,1461.8 1937.9,1465.0C1939.8,1468.2 1943.0,1474.9 1944.8,1477.1C1946.6,1479.3 1949.9,1480.5 1951.7,1481.4C1953.5,1482.3 1956.5,1483.3 1958.6,1484.0C1960.6,1484.6 1964.9,1486.4 1967.2,1486.5C1969.5,1486.7 1973.5,1484.7 1975.8,1484.8C1978.1,1484.9 1982.1,1486.7 1984.4,1487.4C1986.7,1488.1 1990.5,1490.0 1993.0,1490.0C1995.5,1490.0 2001.0,1487.9 2003.3,1487.4C2005.6,1486.9 2008.1,1487.5 2010.2,1486.5C2012.3,1485.6 2016.5,1481.5 2018.8,1480.5C2021.1,1479.5 2024.9,1479.1 2027.4,1478.8C2029.9,1478.4 2035.4,1477.7 2037.7,1477.9C2040.0,1478.2 2042.6,1479.3 2044.6,1480.5C2046.7,1481.8 2050.9,1485.8 2053.2,1487.4C2055.5,1489.0 2059.3,1491.6 2061.8,1492.6C2064.4,1493.5 2069.4,1493.9 2072.2,1494.3C2074.9,1494.6 2079.7,1495.3 2082.5,1495.1C2085.2,1495.0 2090.5,1493.9 2092.8,1493.4C2095.1,1493.0 2097.9,1493.4 2099.7,1491.7C2101.5,1490.0 2105.1,1482.7 2106.6,1480.5C2108.1,1478.3 2110.3,1476.0 2110.9,1475.4" fill="none" stroke="#7a7a7a" stroke-width="3.2" stroke-linejoin="round"/><path d="M497.4,1472.7C498.5,1473.0 503.4,1474.2 505.3,1475.3C507.3,1476.3 510.1,1478.5 512.2,1480.4C514.3,1482.4 518.5,1488.5 520.8,1489.9C523.1,1491.3 527.1,1490.6 529.4,1490.8C531.7,1490.9 535.7,1490.9 538.0,1491.1C540.3,1491.3 544.1,1492.1 546.6,1492.5C549.2,1492.9 554.2,1494.3 557.0,1494.2C559.7,1494.1 564.5,1491.8 567.3,1491.6C570.0,1491.4 574.8,1492.5 577.6,1492.8C580.4,1493.2 585.2,1494.2 587.9,1494.2C590.7,1494.2 594.6,1493.1 598.3,1492.5C601.9,1491.9 611.8,1490.0 615.5,1489.9C619.1,1489.8 622.3,1491.1 625.8,1491.6C629.2,1492.1 638.1,1493.5 641.3,1493.9C644.5,1494.2 647.4,1494.5 649.9,1494.2C652.4,1493.9 657.7,1491.7 660.2,1491.6C662.7,1491.5 665.6,1493.3 668.8,1493.3C672.0,1493.4 679.9,1492.6 684.3,1492.1C688.7,1491.7 696.9,1490.3 701.5,1489.9C706.1,1489.5 715.3,1489.7 718.7,1489.0C722.2,1488.4 723.9,1485.4 727.3,1484.7C730.8,1484.0 739.9,1483.8 744.5,1483.9C749.1,1484.0 758.1,1486.1 761.7,1485.6C765.4,1485.1 769.4,1481.4 771.9,1480.4C774.4,1479.5 778.7,1480.7 780.5,1478.7C782.3,1476.8 784.0,1469.4 785.7,1465.8C787.3,1462.3 790.7,1455.9 792.5,1452.0C794.4,1448.1 797.4,1441.7 799.4,1436.6C801.5,1431.4 806.0,1416.6 808.0,1413.3C810.1,1410.0 812.8,1412.9 814.9,1411.6C817.0,1410.3 821.4,1405.5 823.5,1403.9C825.6,1402.2 828.6,1400.8 830.4,1399.6C832.2,1398.3 835.7,1394.7 837.3,1394.4C838.9,1394.0 840.9,1395.1 842.4,1397.0C843.9,1398.8 846.6,1408.4 848.5,1408.2C850.3,1407.9 854.0,1397.5 856.2,1395.3C858.4,1393.0 862.3,1391.3 864.8,1390.9C867.3,1390.6 872.4,1392.3 875.1,1392.7C877.9,1393.0 882.5,1392.3 885.5,1393.5C888.4,1394.8 894.8,1398.2 897.5,1402.1C900.3,1406.0 903.6,1417.9 906.1,1422.8C908.6,1427.7 913.9,1437.1 916.4,1439.1C919.0,1441.2 922.6,1439.0 925.0,1438.3C927.5,1437.6 932.0,1433.4 934.5,1434.0C937.0,1434.5 941.3,1439.9 944.0,1442.6C946.6,1445.2 951.3,1451.1 954.3,1453.8C957.3,1456.4 962.9,1460.9 966.3,1462.4C969.8,1463.9 977.4,1465.5 980.1,1464.9C982.9,1464.4 985.2,1460.9 987.0,1458.1C988.8,1455.2 991.8,1445.6 993.9,1443.4C995.9,1441.3 1000.0,1441.9 1002.5,1441.7C1005.0,1441.5 1010.3,1441.9 1012.8,1441.7C1015.3,1441.5 1018.9,1442.6 1021.4,1440.0C1023.9,1437.4 1028.8,1425.7 1031.7,1421.9C1034.7,1418.1 1040.9,1413.9 1043.6,1411.6C1046.3,1409.3 1049.9,1406.4 1052.2,1404.7C1054.5,1403.0 1058.3,1400.0 1060.8,1398.7C1063.3,1397.4 1068.6,1394.2 1071.1,1395.3C1073.7,1396.3 1077.7,1405.2 1079.7,1406.4C1081.8,1407.7 1084.6,1406.2 1086.6,1404.7C1088.7,1403.2 1092.9,1396.9 1095.2,1395.3C1097.5,1393.6 1101.3,1393.0 1103.8,1392.7C1106.4,1392.3 1111.9,1391.8 1114.2,1392.7C1116.5,1393.6 1119.2,1397.7 1121.0,1399.6C1122.9,1401.4 1126.1,1403.2 1127.9,1406.4C1129.8,1409.6 1133.0,1419.7 1134.8,1423.6C1136.6,1427.5 1139.9,1432.7 1141.7,1435.7C1143.5,1438.7 1146.3,1444.5 1148.6,1446.0C1150.9,1447.5 1156.1,1447.7 1158.9,1446.9C1161.7,1446.1 1166.9,1440.7 1169.2,1440.0C1171.5,1439.3 1173.8,1440.2 1176.1,1441.7C1178.4,1443.2 1183.7,1448.7 1186.4,1451.2C1189.2,1453.7 1194.0,1459.0 1196.8,1460.6C1199.5,1462.3 1205.0,1462.8 1207.1,1463.2C1209.2,1463.7 1210.4,1465.7 1212.3,1464.1C1214.1,1462.5 1218.6,1455.2 1220.9,1451.2C1223.1,1447.2 1227.4,1436.5 1229.5,1434.0C1231.5,1431.4 1234.5,1431.8 1236.3,1432.3C1238.2,1432.7 1241.4,1437.2 1243.2,1437.4C1245.1,1437.6 1248.8,1433.7 1250.1,1434.0C1251.4,1434.2 1251.3,1440.5 1252.7,1439.1C1254.1,1437.8 1257.3,1427.1 1260.4,1423.6C1263.5,1420.2 1272.0,1416.3 1275.9,1413.3C1279.8,1410.3 1286.2,1402.8 1289.7,1401.3C1293.1,1399.8 1299.0,1400.8 1301.7,1402.1C1304.5,1403.5 1307.9,1410.5 1310.2,1411.6C1312.4,1412.7 1316.2,1412.0 1318.8,1410.7C1321.3,1409.5 1325.7,1403.6 1329.1,1402.1C1332.5,1400.6 1340.7,1399.3 1344.6,1399.6C1348.5,1399.8 1355.4,1401.6 1358.3,1403.9C1361.3,1406.2 1364.4,1412.1 1367.0,1416.8C1369.5,1421.5 1374.5,1436.3 1377.3,1439.1C1380.0,1442.0 1384.4,1437.2 1387.6,1438.3C1390.8,1439.3 1397.5,1444.2 1401.4,1446.9C1405.3,1449.5 1413.2,1455.7 1416.9,1458.1C1420.5,1460.5 1425.9,1463.6 1428.9,1464.9C1431.9,1466.3 1436.9,1468.4 1439.2,1468.4C1441.5,1468.4 1444.3,1467.9 1446.1,1464.9C1447.9,1462.0 1451.2,1449.7 1453.0,1446.0C1454.8,1442.3 1457.4,1437.8 1459.9,1437.4C1462.4,1437.1 1468.7,1443.1 1471.9,1443.4C1475.1,1443.8 1481.0,1442.6 1484.0,1440.0C1487.0,1437.4 1491.3,1427.2 1494.3,1423.6C1497.3,1420.1 1503.6,1416.6 1506.3,1413.3C1509.1,1410.0 1512.7,1400.2 1514.9,1398.7C1517.2,1397.2 1521.3,1402.1 1523.6,1402.1C1525.8,1402.1 1529.6,1397.7 1532.2,1398.7C1534.7,1399.7 1540.2,1408.4 1542.5,1409.9C1544.8,1411.4 1547.3,1411.8 1549.4,1409.9C1551.4,1407.9 1555.7,1397.2 1558.0,1395.3C1560.3,1393.3 1564.5,1395.6 1566.6,1395.3C1568.6,1394.9 1571.4,1392.3 1573.5,1392.7C1575.5,1393.0 1579.6,1396.3 1581.9,1397.8C1584.2,1399.3 1588.2,1400.2 1590.5,1403.9C1592.8,1407.5 1596.6,1419.2 1599.1,1425.4C1601.6,1431.6 1606.7,1447.6 1609.4,1450.3C1612.2,1453.1 1616.8,1447.2 1619.7,1446.0C1622.7,1444.9 1628.6,1441.3 1631.8,1441.7C1635.0,1442.2 1640.4,1447.5 1643.8,1449.5C1647.3,1451.4 1653.5,1454.4 1657.6,1456.3C1661.7,1458.3 1671.6,1464.3 1674.8,1464.1C1678.0,1463.9 1679.9,1458.2 1681.7,1454.6C1683.5,1451.1 1686.7,1440.9 1688.6,1437.4C1690.4,1434.0 1693.6,1429.4 1695.5,1428.8C1697.3,1428.2 1700.3,1433.7 1702.3,1433.1C1704.4,1432.5 1709.1,1425.2 1710.9,1424.5C1712.8,1423.8 1714.5,1428.9 1716.1,1427.9C1717.7,1427.0 1721.2,1419.6 1723.0,1417.6C1724.8,1415.7 1727.6,1414.7 1729.9,1413.3C1732.2,1411.9 1737.2,1409.4 1740.2,1407.3C1743.2,1405.2 1749.3,1398.9 1752.3,1397.8C1755.2,1396.8 1759.8,1397.9 1762.6,1399.6C1765.3,1401.2 1770.8,1408.4 1772.9,1409.9C1775.0,1411.4 1776.0,1412.1 1778.1,1410.7C1780.1,1409.4 1786.1,1400.7 1788.4,1399.6C1790.7,1398.4 1793.0,1402.6 1795.3,1402.1C1797.6,1401.7 1803.1,1396.1 1805.6,1396.1C1808.1,1396.1 1812.4,1401.4 1814.2,1402.1C1816.0,1402.8 1817.5,1398.6 1819.4,1401.3C1821.2,1403.9 1825.7,1417.7 1828.0,1421.9C1830.3,1426.2 1833.6,1431.3 1836.6,1433.1C1839.5,1434.9 1846.8,1435.2 1850.0,1435.7C1853.2,1436.2 1857.9,1435.4 1860.5,1436.6C1863.0,1437.7 1866.6,1441.9 1869.1,1444.3C1871.6,1446.7 1877.1,1452.3 1879.4,1454.6C1881.7,1456.9 1884.5,1460.1 1886.3,1461.5C1888.1,1462.9 1891.3,1463.9 1893.2,1464.9C1895.0,1466.0 1898.5,1469.4 1900.1,1469.2C1901.7,1469.1 1903.9,1467.0 1905.2,1464.1C1906.6,1461.2 1908.9,1452.7 1910.4,1447.7C1911.9,1442.8 1914.8,1428.7 1916.4,1427.1C1918.0,1425.5 1920.5,1432.5 1922.4,1435.7C1924.4,1438.9 1929.0,1447.5 1931.0,1451.2C1933.1,1454.9 1936.1,1460.0 1937.9,1463.2C1939.8,1466.4 1943.0,1473.1 1944.8,1475.3C1946.6,1477.5 1949.9,1478.7 1951.7,1479.6C1953.5,1480.5 1956.5,1481.5 1958.6,1482.2C1960.6,1482.8 1964.9,1484.6 1967.2,1484.7C1969.5,1484.9 1973.5,1482.9 1975.8,1483.0C1978.1,1483.1 1982.1,1484.9 1984.4,1485.6C1986.7,1486.3 1990.5,1488.2 1993.0,1488.2C1995.5,1488.2 2001.0,1486.1 2003.3,1485.6C2005.6,1485.1 2008.1,1485.7 2010.2,1484.7C2012.3,1483.8 2016.5,1479.7 2018.8,1478.7C2021.1,1477.7 2024.9,1477.3 2027.4,1477.0C2029.9,1476.6 2035.4,1475.9 2037.7,1476.1C2040.0,1476.4 2042.6,1477.5 2044.6,1478.7C2046.7,1480.0 2050.9,1484.0 2053.2,1485.6C2055.5,1487.2 2059.3,1489.8 2061.8,1490.8C2064.4,1491.7 2069.4,1492.1 2072.2,1492.5C2074.9,1492.8 2079.7,1493.5 2082.5,1493.3C2085.2,1493.2 2090.5,1492.1 2092.8,1491.6C2095.1,1491.2 2097.9,1491.6 2099.7,1489.9C2101.5,1488.2 2105.1,1480.9 2106.6,1478.7C2108.1,1476.5 2110.3,1474.2 2110.9,1473.6" fill="none" stroke="#2c71bf" stroke-width="3.4" stroke-linejoin="round"/></g><line x1="497.4" y1="1064.6" x2="2113.8" y2="1064.6" stroke="#a51d3a" stroke-width="2.2" stroke-dasharray="5.6 5.6"/><line x1="497.4" y1="1064.6" x2="497.4" y2="1534.2" stroke="#555555" stroke-width="1.3"/><line x1="496.59999999999997" y1="1533.4" x2="2114.6" y2="1533.4" stroke="#606060" stroke-width="1.4"/><line x1="497.4" y1="1533.4" x2="513.9" y2="1533.4" stroke="#4a4a4a" stroke-width="1.4"/><line x1="497.4" y1="1461.9" x2="513.9" y2="1461.9" stroke="#4a4a4a" stroke-width="1.4"/><line x1="497.4" y1="1390.4" x2="513.9" y2="1390.4" stroke="#4a4a4a" stroke-width="1.4"/><line x1="497.4" y1="1318.9" x2="513.9" y2="1318.9" stroke="#4a4a4a" stroke-width="1.4"/><line x1="497.4" y1="1247.4" x2="513.9" y2="1247.4" stroke="#4a4a4a" stroke-width="1.4"/><line x1="497.4" y1="1175.9" x2="513.9" y2="1175.9" stroke="#4a4a4a" stroke-width="1.4"/><line x1="497.4" y1="1104.4" x2="513.9" y2="1104.4" stroke="#4a4a4a" stroke-width="1.4"/><line x1="497.4" y1="1533.4" x2="497.4" y2="1518.4" stroke="#4a4a4a" stroke-width="1.4"/><line x1="728.3" y1="1533.4" x2="728.3" y2="1518.4" stroke="#4a4a4a" stroke-width="1.4"/><line x1="959.2" y1="1533.4" x2="959.2" y2="1518.4" stroke="#4a4a4a" stroke-width="1.4"/><line x1="1190.1" y1="1533.4" x2="1190.1" y2="1518.4" stroke="#4a4a4a" stroke-width="1.4"/><line x1="1421.0" y1="1533.4" x2="1421.0" y2="1518.4" stroke="#4a4a4a" stroke-width="1.4"/><line x1="1651.9" y1="1533.4" x2="1651.9" y2="1518.4" stroke="#4a4a4a" stroke-width="1.4"/><line x1="1882.9" y1="1533.4" x2="1882.9" y2="1518.4" stroke="#4a4a4a" stroke-width="1.4"/><line x1="2113.8" y1="1533.4" x2="2113.8" y2="1518.4" stroke="#4a4a4a" stroke-width="1.4"/><rect x="1870.3" y="1088.5" width="227.4" height="131.1" fill="#ffffff" stroke="#858585" stroke-width="1.4"/><line x1="1875.3" y1="1099.4" x2="1922.3" y2="1099.4" stroke="#7a7a7a" stroke-width="3.4"/><line x1="1875.3" y1="1117.6" x2="1922.3" y2="1117.6" stroke="#9a9a9a" stroke-width="1.5"/><line x1="1875.3" y1="1135.8" x2="1922.3" y2="1135.8" stroke="#9a9a9a" stroke-width="1.5"/><line x1="1875.3" y1="1154" x2="1922.3" y2="1154" stroke="#2c71bf" stroke-width="3.4"/><line x1="1875.3" y1="1172.3" x2="1922.3" y2="1172.3" stroke="#3a8ad2" stroke-width="1.5"/><line x1="1875.3" y1="1190.5" x2="1922.3" y2="1190.5" stroke="#3a8ad2" stroke-width="1.5"/><line x1="1875.3" y1="1208.3" x2="1922.3" y2="1208.3" stroke="#a51d3a" stroke-width="1.6" stroke-dasharray="4.5 4.5"/></svg><div class="abs" style="left:1926.6px;top:1092.8px;font-size:14px;line-height:14px;font-weight:400;color:#111111;">Historisch</div>
<div class="abs" style="left:1926.6px;top:1111.0px;font-size:14px;line-height:14px;font-weight:400;color:#111111;">Historisch Gemiddeld + 3<i>σ</i></div>
<div class="abs" style="left:1926.6px;top:1129.2px;font-size:14px;line-height:14px;font-weight:400;color:#111111;">Historisch Gemiddeld - 3<i>σ</i></div>
<div class="abs" style="left:1926.6px;top:1147.4px;font-size:14px;line-height:14px;font-weight:400;color:#111111;">Voorspelling</div>
<div class="abs" style="left:1926.6px;top:1165.7px;font-size:14px;line-height:14px;font-weight:400;color:#111111;">Simulatie Gemiddeld + 3<i>σ</i></div>
<div class="abs" style="left:1926.6px;top:1183.9px;font-size:14px;line-height:14px;font-weight:400;color:#111111;">Simulatie Gemiddeld - 3<i>σ</i></div>
<div class="abs" style="left:1926.6px;top:1201.7px;font-size:14px;line-height:14px;font-weight:400;color:#111111;">Netaansluiting</div>
<div class="abs" style="left:-109.6px;width:600px;text-align:right;top:1525.9px;font-size:15.5px;line-height:15.5px;font-weight:400;color:#262626;">0</div>
<div class="abs" style="left:-109.6px;width:600px;text-align:right;top:1454.4px;font-size:15.5px;line-height:15.5px;font-weight:400;color:#262626;">20</div>
<div class="abs" style="left:-109.6px;width:600px;text-align:right;top:1382.9px;font-size:15.5px;line-height:15.5px;font-weight:400;color:#262626;">40</div>
<div class="abs" style="left:-109.6px;width:600px;text-align:right;top:1311.4px;font-size:15.5px;line-height:15.5px;font-weight:400;color:#262626;">60</div>
<div class="abs" style="left:-109.6px;width:600px;text-align:right;top:1239.9px;font-size:15.5px;line-height:15.5px;font-weight:400;color:#262626;">80</div>
<div class="abs" style="left:-109.6px;width:600px;text-align:right;top:1168.4px;font-size:15.5px;line-height:15.5px;font-weight:400;color:#262626;">100</div>
<div class="abs" style="left:-109.6px;width:600px;text-align:right;top:1096.9px;font-size:15.5px;line-height:15.5px;font-weight:400;color:#262626;">120</div>
<div class="abs" style="left:197.4px;width:600px;text-align:center;top:1543.5px;font-size:15.5px;line-height:15.5px;font-weight:400;color:#262626;">Sun 00:00</div>
<div class="abs" style="left:428.3px;width:600px;text-align:center;top:1543.5px;font-size:15.5px;line-height:15.5px;font-weight:400;color:#262626;">Mon 00:00</div>
<div class="abs" style="left:659.2px;width:600px;text-align:center;top:1543.5px;font-size:15.5px;line-height:15.5px;font-weight:400;color:#262626;">Tue 00:00</div>
<div class="abs" style="left:890.1px;width:600px;text-align:center;top:1543.5px;font-size:15.5px;line-height:15.5px;font-weight:400;color:#262626;">Wed 00:00</div>
<div class="abs" style="left:1121.0px;width:600px;text-align:center;top:1543.5px;font-size:15.5px;line-height:15.5px;font-weight:400;color:#262626;">Thu 00:00</div>
<div class="abs" style="left:1351.9px;width:600px;text-align:center;top:1543.5px;font-size:15.5px;line-height:15.5px;font-weight:400;color:#262626;">Fri 00:00</div>
<div class="abs" style="left:1582.9px;width:600px;text-align:center;top:1543.5px;font-size:15.5px;line-height:15.5px;font-weight:400;color:#262626;">Sat 00:00</div>
<div class="abs" style="left:1813.8px;width:600px;text-align:center;top:1543.5px;font-size:15.5px;line-height:15.5px;font-weight:400;color:#262626;">Sun 00:00</div>
<div class="abs" style="left:1500.2px;width:600px;text-align:right;top:1564.6px;font-size:15.6px;line-height:15.6px;font-weight:400;color:#262626;">Jan 02, 2000-Jan 08, 2000</div>
<div class="abs" style="left:1005.2px;width:600px;text-align:center;top:1045.4px;font-size:17px;line-height:17px;font-weight:700;color:#000000;letter-spacing:0.14px">Gemiddeld Wekelijks Elektriciteitsverbruik</div>
<div class="abs" style="left:299.5px;top:1289.7px;width:300px;height:20px;line-height:20px;text-align:center;font-size:17.4px;color:#262626;transform:rotate(-90deg)">Vermogen (kW)</div>
</body></html>
